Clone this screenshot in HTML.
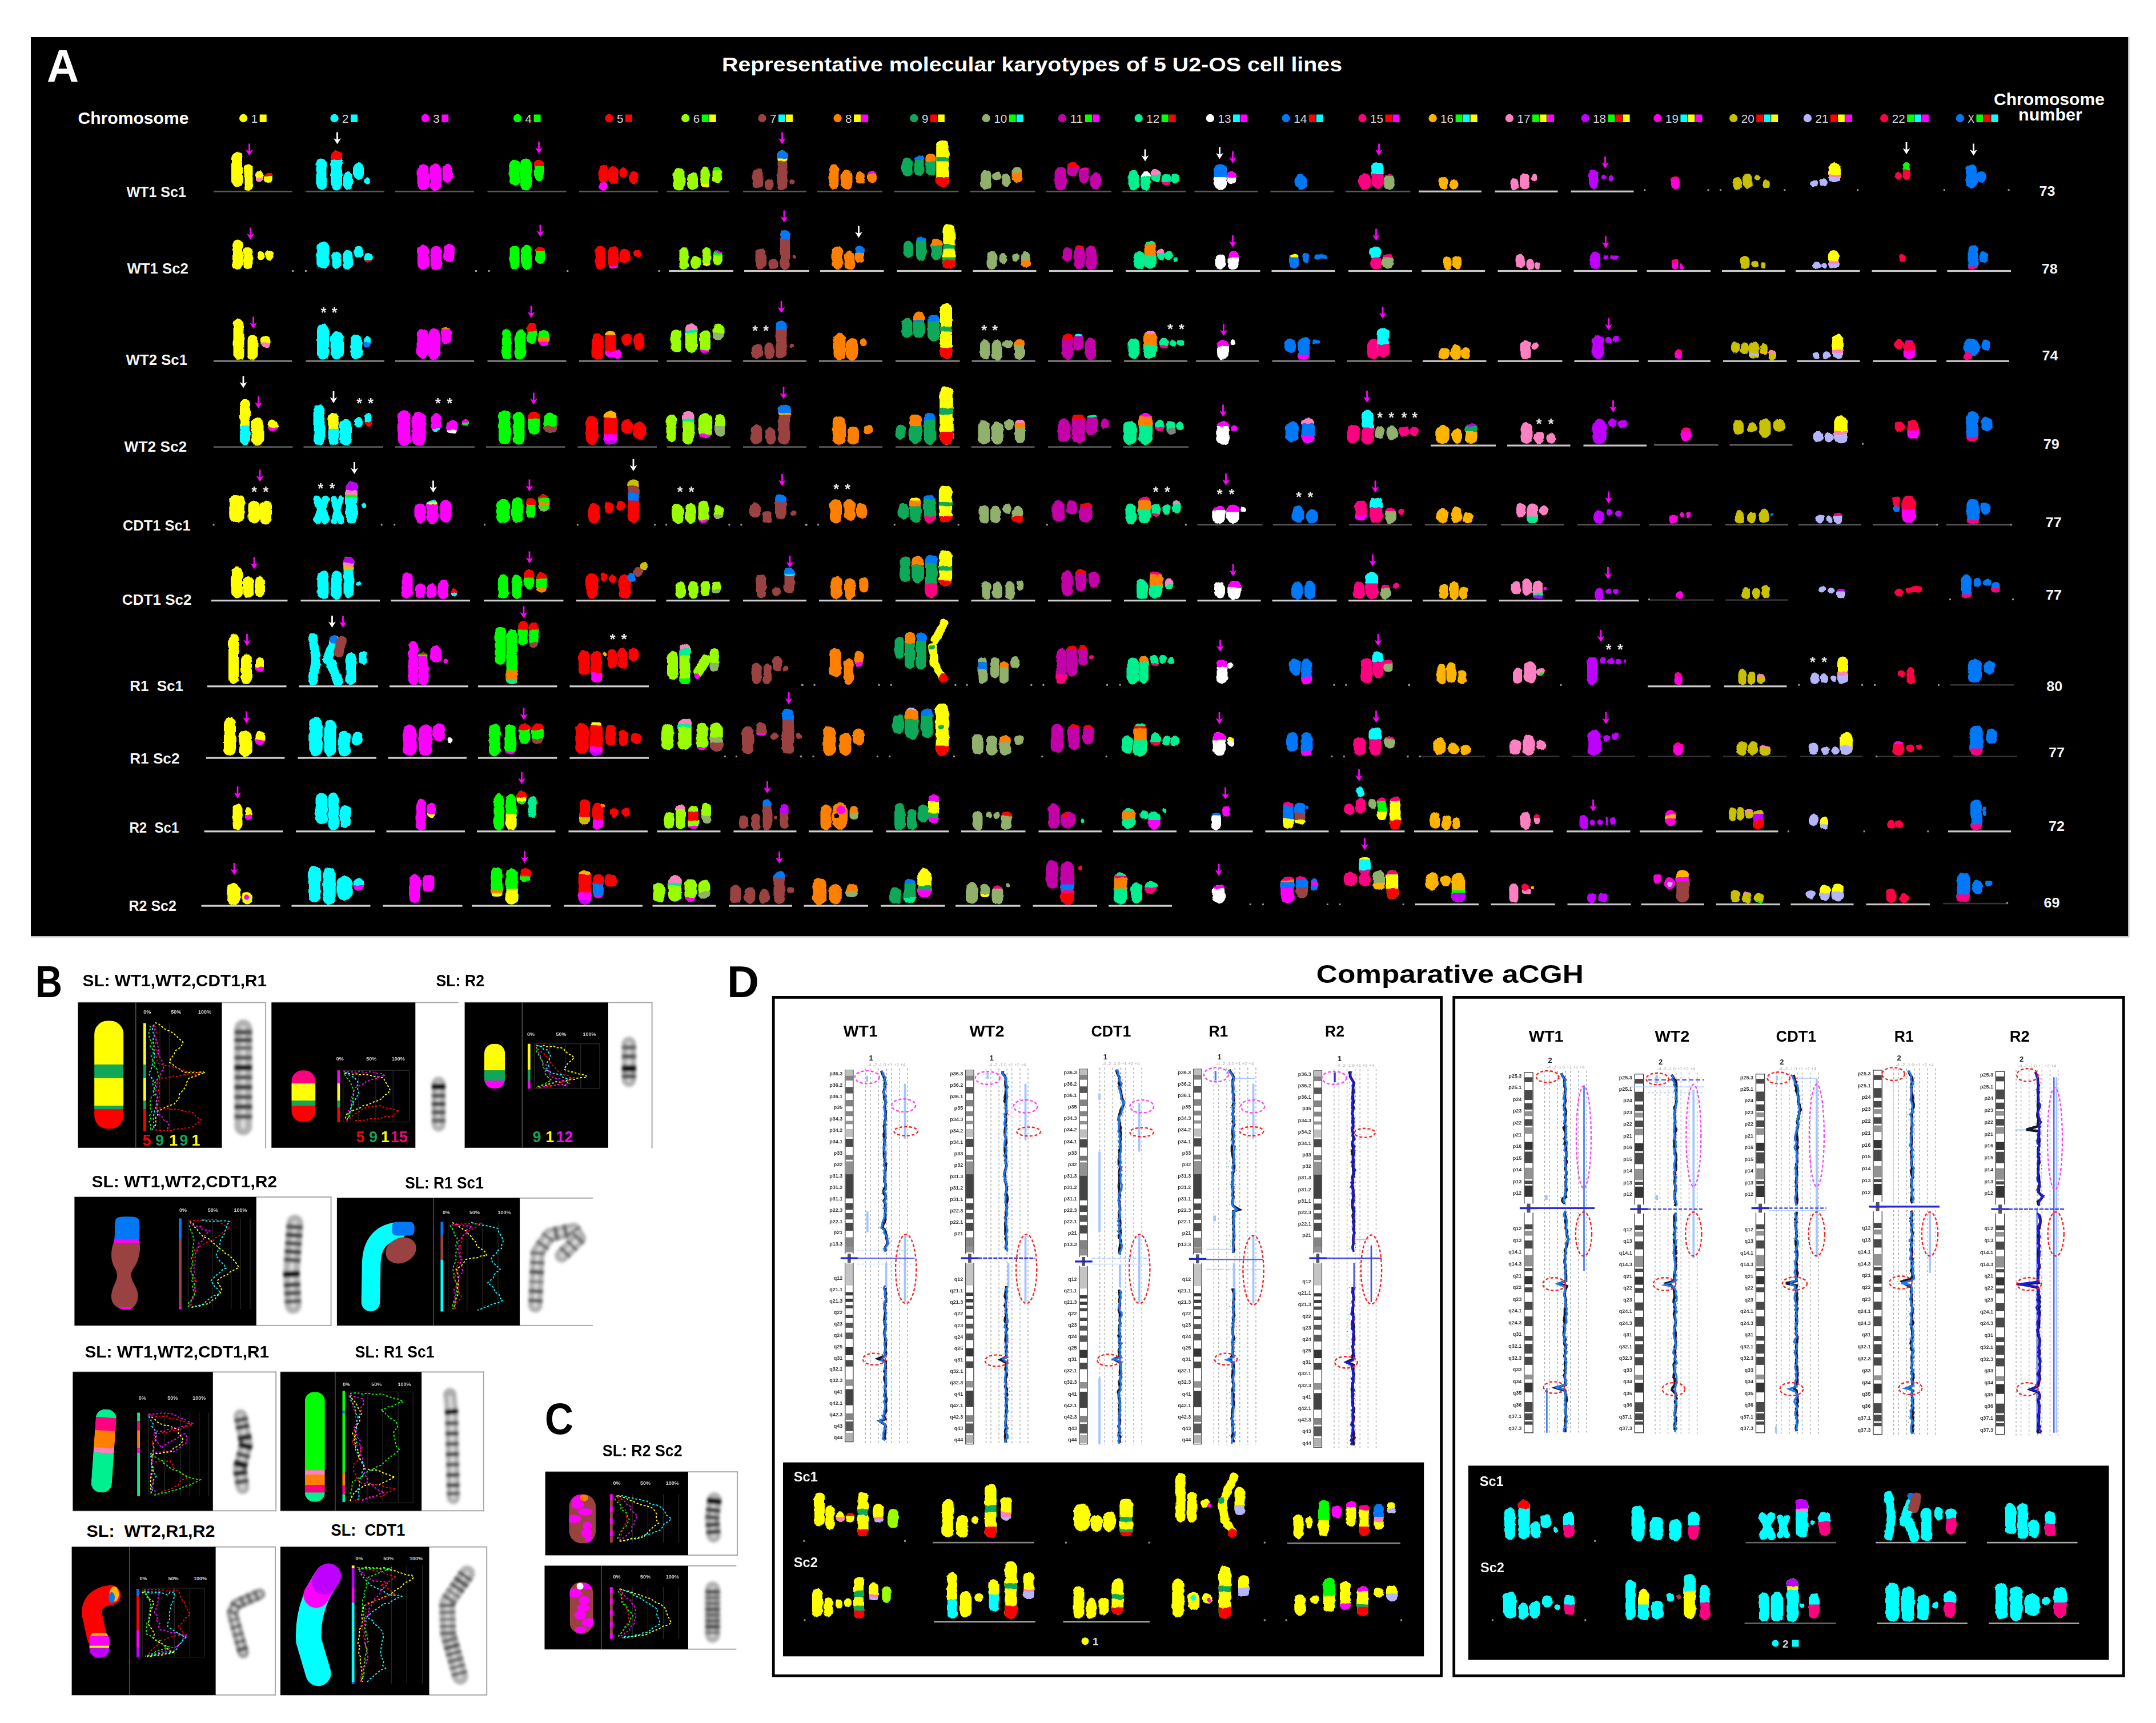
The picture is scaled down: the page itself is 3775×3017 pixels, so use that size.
<!DOCTYPE html>
<html><head><meta charset="utf-8"><title>Figure</title>
<style>
html,body{margin:0;padding:0;background:#fff}
body{width:3775px;height:3017px;position:relative;overflow:hidden;font-family:"Liberation Sans",sans-serif}
svg{position:absolute;left:0;top:0}
text{font-family:"Liberation Sans",sans-serif}
.Y{stroke:#ff0}.C{stroke:#0ff}.M{stroke:#f0f}.G{stroke:#0f0}.R{stroke:#f00}.L{stroke:#9f0}.B{stroke:#9a4242}.O{stroke:#ff8000}.D{stroke:#10a858}.K{stroke:#90b06c}.P{stroke:#c400a8}.T{stroke:#00f090}.W{stroke:#fff}.U{stroke:#0078f8}.H{stroke:#ff0080}.A{stroke:#ffb400}.N{stroke:#ff80c0}.V{stroke:#c000ff}.F{stroke:#ff00dc}.E{stroke:#c8c000}.S{stroke:#b4b4ff}.Z{stroke:#ff0040}.Q{stroke:#808080}.I{stroke:#000}.J{stroke:#00a0a0}
.st{font-size:25px;font-weight:bold;fill:#e8e8e8;text-anchor:middle}
.rl{font-size:22.5px;font-weight:bold;fill:#f4f4f4;text-anchor:end}
.bl{font-size:9px;font-weight:bold;fill:#3a3a3a;text-anchor:end}
.pc{font-size:9px;font-weight:bold;fill:#cfcfcf;text-anchor:middle}
.lg{font-size:19px;fill:#d8d8d8;font-weight:bold}
.hb{font-weight:bold;fill:#000}
</style></head><body>
<svg width="3775" height="3017" viewBox="0 0 3775 3017">
<defs>
<filter id="lump" filterUnits="userSpaceOnUse" x="54" y="65" width="3673" height="1575"><feTurbulence type="fractalNoise" baseFrequency="0.09" numOctaves="2" seed="3"/><feDisplacementMap in="SourceGraphic" scale="5" xChannelSelector="R" yChannelSelector="G"/></filter>
<filter id="lump2" filterUnits="userSpaceOnUse" x="1371" y="2560" width="2322" height="347"><feTurbulence type="fractalNoise" baseFrequency="0.09" numOctaves="2" seed="5"/><feDisplacementMap in="SourceGraphic" scale="5" xChannelSelector="R" yChannelSelector="G"/></filter>
<filter id="bl" x="-30%" y="-30%" width="160%" height="160%"><feGaussianBlur stdDeviation="2.4"/></filter>
<filter id="b1" x="-10%" y="-10%" width="120%" height="120%"><feGaussianBlur stdDeviation="0.7"/></filter>
<clipPath id="k1"><rect x="165.1" y="1787.3" width="51.3" height="189.3" rx="23.6"/></clipPath>
<clipPath id="k2"><rect x="510.3" y="1874.2" width="42.2" height="90.4" rx="19.4"/></clipPath>
<clipPath id="k3"><rect x="848" y="1827.7" width="36.2" height="78.4" rx="16.6"/></clipPath>
<clipPath id="k4"><path d="M201 2156Q201 2140 202.5 2135.5Q204 2131 213.3 2130.5Q222.7 2130 231.8 2130.5Q241 2131 242.8 2135.5Q244.5 2140 243.9 2156Q243.4 2172 244.7 2179Q246 2186 243.5 2198.5Q241 2211 233.2 2221.8Q225.5 2232.6 234.5 2247.8Q243.5 2263 241.2 2274.5Q239 2286 230.5 2291Q222 2296 209.5 2291Q197 2286 195.2 2274.5Q193.5 2263 201 2247.8Q208.5 2232.6 201.8 2221.8Q195 2211 195 2198.5Q195 2186 198 2179Q201 2172 201 2156Z"/></clipPath>
<clipPath id="k5"><rect x="163.6" y="2467.5" width="36.2" height="145.9" rx="16.6"/></clipPath>
<clipPath id="k6"><rect x="533.8" y="2437.3" width="35" height="192.3" rx="16.1"/></clipPath>
<clipPath id="k7"><rect x="156.4" y="2855.8" width="35" height="47" rx="16.1"/></clipPath>
<clipPath id="k8"><rect x="996.3" y="2616.4" width="47" height="86.2" rx="22.6"/></clipPath>
<clipPath id="k9"><rect x="997.5" y="2770.2" width="41" height="90.4" rx="19.7"/></clipPath>
</defs>
<rect x="54" y="65" width="3673" height="1575" fill="#000"/>
<rect x="3726" y="65" width="2.5" height="1576" fill="#c0c0c0"/>
<rect x="54" y="1639" width="3674" height="2.5" fill="#c0c0c0"/>
<text x="82" y="143" font-size="80" font-weight="bold" fill="#fff" text-anchor="start" textLength="56" lengthAdjust="spacingAndGlyphs">A</text>
<text x="1264" y="124.5" font-size="35" font-weight="bold" fill="#fff" text-anchor="start" textLength="1086" lengthAdjust="spacingAndGlyphs">Representative molecular karyotypes of 5 U2-OS cell lines</text>
<text x="136.5" y="216.5" font-size="30" font-weight="bold" fill="#fff" text-anchor="start" textLength="194" lengthAdjust="spacingAndGlyphs">Chromosome</text>
<text x="3491" y="184" font-size="30" font-weight="bold" fill="#fff" text-anchor="start" textLength="194" lengthAdjust="spacingAndGlyphs">Chromosome</text>
<text x="3534" y="211" font-size="30" font-weight="bold" fill="#fff" text-anchor="start" textLength="112" lengthAdjust="spacingAndGlyphs">number</text>
<circle cx="426.2" cy="207" r="7.2" fill="#ff0"/>
<text x="439.7" y="214.5" font-size="21" font-weight="normal" fill="#d4d4d4" text-anchor="start" textLength="11.5" lengthAdjust="spacingAndGlyphs">1</text>
<rect x="454.7" y="200.5" width="12" height="13.5" fill="#ff0"/>
<circle cx="585.5" cy="207" r="7.2" fill="#0ff"/>
<text x="599" y="214.5" font-size="21" font-weight="normal" fill="#d4d4d4" text-anchor="start" textLength="11.5" lengthAdjust="spacingAndGlyphs">2</text>
<rect x="614" y="200.5" width="12" height="13.5" fill="#0ff"/>
<circle cx="744.8" cy="207" r="7.2" fill="#f0f"/>
<text x="758.3" y="214.5" font-size="21" font-weight="normal" fill="#d4d4d4" text-anchor="start" textLength="11.5" lengthAdjust="spacingAndGlyphs">3</text>
<rect x="773.3" y="200.5" width="12" height="13.5" fill="#f0f"/>
<circle cx="906.1" cy="207" r="7.2" fill="#0f0"/>
<text x="919.6" y="214.5" font-size="21" font-weight="normal" fill="#d4d4d4" text-anchor="start" textLength="11.5" lengthAdjust="spacingAndGlyphs">4</text>
<rect x="934.6" y="200.5" width="12" height="13.5" fill="#0f0"/>
<circle cx="1066.5" cy="207" r="7.2" fill="#f00"/>
<text x="1080" y="214.5" font-size="21" font-weight="normal" fill="#d4d4d4" text-anchor="start" textLength="11.5" lengthAdjust="spacingAndGlyphs">5</text>
<rect x="1095" y="200.5" width="12" height="13.5" fill="#f00"/>
<circle cx="1200.2" cy="207" r="7.2" fill="#9f0"/>
<text x="1213.7" y="214.5" font-size="21" font-weight="normal" fill="#d4d4d4" text-anchor="start" textLength="11.5" lengthAdjust="spacingAndGlyphs">6</text>
<rect x="1228.7" y="200.5" width="12" height="13.5" fill="#0f0"/>
<rect x="1241.7" y="200.5" width="12" height="13.5" fill="#ff0"/>
<circle cx="1334.5" cy="207" r="7.2" fill="#9a4242"/>
<text x="1348" y="214.5" font-size="21" font-weight="normal" fill="#d4d4d4" text-anchor="start" textLength="11.5" lengthAdjust="spacingAndGlyphs">7</text>
<rect x="1363" y="200.5" width="12" height="13.5" fill="#0ff"/>
<rect x="1376" y="200.5" width="12" height="13.5" fill="#ff0"/>
<circle cx="1466.6" cy="207" r="7.2" fill="#ff8000"/>
<text x="1480.1" y="214.5" font-size="21" font-weight="normal" fill="#d4d4d4" text-anchor="start" textLength="11.5" lengthAdjust="spacingAndGlyphs">8</text>
<rect x="1495.1" y="200.5" width="12" height="13.5" fill="#ff0"/>
<rect x="1508.1" y="200.5" width="12" height="13.5" fill="#f0f"/>
<circle cx="1600.4" cy="207" r="7.2" fill="#10a858"/>
<text x="1613.9" y="214.5" font-size="21" font-weight="normal" fill="#d4d4d4" text-anchor="start" textLength="11.5" lengthAdjust="spacingAndGlyphs">9</text>
<rect x="1628.9" y="200.5" width="12" height="13.5" fill="#f00"/>
<rect x="1641.9" y="200.5" width="12" height="13.5" fill="#ff0"/>
<circle cx="1726.7" cy="207" r="7.2" fill="#90b06c"/>
<text x="1740.2" y="214.5" font-size="21" font-weight="normal" fill="#d4d4d4" text-anchor="start" textLength="23" lengthAdjust="spacingAndGlyphs">10</text>
<rect x="1766.7" y="200.5" width="12" height="13.5" fill="#0f0"/>
<rect x="1779.7" y="200.5" width="12" height="13.5" fill="#0ff"/>
<circle cx="1859.9" cy="207" r="7.2" fill="#c400a8"/>
<text x="1873.4" y="214.5" font-size="21" font-weight="normal" fill="#d4d4d4" text-anchor="start" textLength="23" lengthAdjust="spacingAndGlyphs">11</text>
<rect x="1899.9" y="200.5" width="12" height="13.5" fill="#0f0"/>
<rect x="1912.9" y="200.5" width="12" height="13.5" fill="#f0f"/>
<circle cx="1993.7" cy="207" r="7.2" fill="#00f090"/>
<text x="2007.2" y="214.5" font-size="21" font-weight="normal" fill="#d4d4d4" text-anchor="start" textLength="23" lengthAdjust="spacingAndGlyphs">12</text>
<rect x="2033.7" y="200.5" width="12" height="13.5" fill="#0f0"/>
<rect x="2046.7" y="200.5" width="12" height="13.5" fill="#f00"/>
<circle cx="2118.9" cy="207" r="7.2" fill="#fff"/>
<text x="2132.4" y="214.5" font-size="21" font-weight="normal" fill="#d4d4d4" text-anchor="start" textLength="23" lengthAdjust="spacingAndGlyphs">13</text>
<rect x="2158.9" y="200.5" width="12" height="13.5" fill="#0ff"/>
<rect x="2171.9" y="200.5" width="12" height="13.5" fill="#f0f"/>
<circle cx="2251.7" cy="207" r="7.2" fill="#0078f8"/>
<text x="2265.2" y="214.5" font-size="21" font-weight="normal" fill="#d4d4d4" text-anchor="start" textLength="23" lengthAdjust="spacingAndGlyphs">14</text>
<rect x="2291.7" y="200.5" width="12" height="13.5" fill="#f00"/>
<rect x="2304.7" y="200.5" width="12" height="13.5" fill="#0ff"/>
<circle cx="2385.5" cy="207" r="7.2" fill="#ff0080"/>
<text x="2399" y="214.5" font-size="21" font-weight="normal" fill="#d4d4d4" text-anchor="start" textLength="23" lengthAdjust="spacingAndGlyphs">15</text>
<rect x="2425.5" y="200.5" width="12" height="13.5" fill="#f00"/>
<rect x="2438.5" y="200.5" width="12" height="13.5" fill="#f0f"/>
<circle cx="2508.6" cy="207" r="7.2" fill="#ffb400"/>
<text x="2522.1" y="214.5" font-size="21" font-weight="normal" fill="#d4d4d4" text-anchor="start" textLength="23" lengthAdjust="spacingAndGlyphs">16</text>
<rect x="2548.6" y="200.5" width="12" height="13.5" fill="#0f0"/>
<rect x="2561.6" y="200.5" width="12" height="13.5" fill="#0ff"/>
<rect x="2574.6" y="200.5" width="12" height="13.5" fill="#ff0"/>
<circle cx="2642.9" cy="207" r="7.2" fill="#ff80c0"/>
<text x="2656.4" y="214.5" font-size="21" font-weight="normal" fill="#d4d4d4" text-anchor="start" textLength="23" lengthAdjust="spacingAndGlyphs">17</text>
<rect x="2682.9" y="200.5" width="12" height="13.5" fill="#0f0"/>
<rect x="2695.9" y="200.5" width="12" height="13.5" fill="#ff0"/>
<rect x="2708.9" y="200.5" width="12" height="13.5" fill="#f0f"/>
<circle cx="2775.6" cy="207" r="7.2" fill="#c000ff"/>
<text x="2789.1" y="214.5" font-size="21" font-weight="normal" fill="#d4d4d4" text-anchor="start" textLength="23" lengthAdjust="spacingAndGlyphs">18</text>
<rect x="2815.6" y="200.5" width="12" height="13.5" fill="#0f0"/>
<rect x="2828.6" y="200.5" width="12" height="13.5" fill="#f00"/>
<rect x="2841.6" y="200.5" width="12" height="13.5" fill="#ff0"/>
<circle cx="2902.4" cy="207" r="7.2" fill="#ff00dc"/>
<text x="2915.9" y="214.5" font-size="21" font-weight="normal" fill="#d4d4d4" text-anchor="start" textLength="23" lengthAdjust="spacingAndGlyphs">19</text>
<rect x="2942.4" y="200.5" width="12" height="13.5" fill="#0ff"/>
<rect x="2955.4" y="200.5" width="12" height="13.5" fill="#ff0"/>
<rect x="2968.4" y="200.5" width="12" height="13.5" fill="#f0f"/>
<circle cx="3035.2" cy="207" r="7.2" fill="#c8c000"/>
<text x="3048.7" y="214.5" font-size="21" font-weight="normal" fill="#d4d4d4" text-anchor="start" textLength="23" lengthAdjust="spacingAndGlyphs">20</text>
<rect x="3075.2" y="200.5" width="12" height="13.5" fill="#f00"/>
<rect x="3088.2" y="200.5" width="12" height="13.5" fill="#0ff"/>
<rect x="3101.2" y="200.5" width="12" height="13.5" fill="#ff0"/>
<circle cx="3164.9" cy="207" r="7.2" fill="#b4b4ff"/>
<text x="3178.4" y="214.5" font-size="21" font-weight="normal" fill="#d4d4d4" text-anchor="start" textLength="23" lengthAdjust="spacingAndGlyphs">21</text>
<rect x="3204.9" y="200.5" width="12" height="13.5" fill="#f00"/>
<rect x="3217.9" y="200.5" width="12" height="13.5" fill="#ff0"/>
<rect x="3230.9" y="200.5" width="12" height="13.5" fill="#f0f"/>
<circle cx="3299.2" cy="207" r="7.2" fill="#ff0040"/>
<text x="3312.7" y="214.5" font-size="21" font-weight="normal" fill="#d4d4d4" text-anchor="start" textLength="23" lengthAdjust="spacingAndGlyphs">22</text>
<rect x="3339.2" y="200.5" width="12" height="13.5" fill="#0f0"/>
<rect x="3352.2" y="200.5" width="12" height="13.5" fill="#0ff"/>
<rect x="3365.2" y="200.5" width="12" height="13.5" fill="#f0f"/>
<circle cx="3431.9" cy="207" r="7.2" fill="#0078f8"/>
<text x="3445.4" y="214.5" font-size="21" font-weight="normal" fill="#d4d4d4" text-anchor="start" textLength="11.5" lengthAdjust="spacingAndGlyphs">X</text>
<rect x="3460.4" y="200.5" width="12" height="13.5" fill="#0f0"/>
<rect x="3473.4" y="200.5" width="12" height="13.5" fill="#f00"/>
<rect x="3486.4" y="200.5" width="12" height="13.5" fill="#0ff"/>
<text x="221.4" y="345.2" font-size="25" font-weight="bold" fill="#f4f4f4" text-anchor="start" textLength="104.6" lengthAdjust="spacingAndGlyphs" xml:space="preserve">WT1 Sc1</text>
<text x="222.6" y="479.3" font-size="25" font-weight="bold" fill="#f4f4f4" text-anchor="start" textLength="107.2" lengthAdjust="spacingAndGlyphs" xml:space="preserve">WT1 Sc2</text>
<text x="220.6" y="639" font-size="25" font-weight="bold" fill="#f4f4f4" text-anchor="start" textLength="107.4" lengthAdjust="spacingAndGlyphs" xml:space="preserve">WT2 Sc1</text>
<text x="217.6" y="791.2" font-size="25" font-weight="bold" fill="#f4f4f4" text-anchor="start" textLength="109.6" lengthAdjust="spacingAndGlyphs" xml:space="preserve">WT2 Sc2</text>
<text x="215" y="929.1" font-size="25" font-weight="bold" fill="#f4f4f4" text-anchor="start" textLength="118.7" lengthAdjust="spacingAndGlyphs" xml:space="preserve">CDT1 Sc1</text>
<text x="213.8" y="1058.5" font-size="25" font-weight="bold" fill="#f4f4f4" text-anchor="start" textLength="121.8" lengthAdjust="spacingAndGlyphs" xml:space="preserve">CDT1 Sc2</text>
<text x="227.2" y="1209.9" font-size="25" font-weight="bold" fill="#f4f4f4" text-anchor="start" textLength="93.8" lengthAdjust="spacingAndGlyphs" xml:space="preserve">R1  Sc1</text>
<text x="227.2" y="1337" font-size="25" font-weight="bold" fill="#f4f4f4" text-anchor="start" textLength="87.3" lengthAdjust="spacingAndGlyphs" xml:space="preserve">R1 Sc2</text>
<text x="226.4" y="1458.2" font-size="25" font-weight="bold" fill="#f4f4f4" text-anchor="start" textLength="87" lengthAdjust="spacingAndGlyphs" xml:space="preserve">R2  Sc1</text>
<text x="225.6" y="1595" font-size="25" font-weight="bold" fill="#f4f4f4" text-anchor="start" textLength="83.2" lengthAdjust="spacingAndGlyphs" xml:space="preserve">R2 Sc2</text>
<text x="3570.4" y="342.7" font-size="24.3" font-weight="bold" fill="#f4f4f4" text-anchor="start" textLength="28" lengthAdjust="spacingAndGlyphs">73</text>
<text x="3574.8" y="478.7" font-size="24.3" font-weight="bold" fill="#f4f4f4" text-anchor="start" textLength="28" lengthAdjust="spacingAndGlyphs">78</text>
<text x="3575.5" y="631.4" font-size="24.3" font-weight="bold" fill="#f4f4f4" text-anchor="start" textLength="28" lengthAdjust="spacingAndGlyphs">74</text>
<text x="3577.7" y="785.6" font-size="24.3" font-weight="bold" fill="#f4f4f4" text-anchor="start" textLength="28" lengthAdjust="spacingAndGlyphs">79</text>
<text x="3581.8" y="922.9" font-size="24.3" font-weight="bold" fill="#f4f4f4" text-anchor="start" textLength="28" lengthAdjust="spacingAndGlyphs">77</text>
<text x="3582" y="1050.4" font-size="24.3" font-weight="bold" fill="#f4f4f4" text-anchor="start" textLength="28" lengthAdjust="spacingAndGlyphs">77</text>
<text x="3583.3" y="1210.3" font-size="24.3" font-weight="bold" fill="#f4f4f4" text-anchor="start" textLength="28" lengthAdjust="spacingAndGlyphs">80</text>
<text x="3587" y="1326.3" font-size="24.3" font-weight="bold" fill="#f4f4f4" text-anchor="start" textLength="28" lengthAdjust="spacingAndGlyphs">77</text>
<text x="3587" y="1454.7" font-size="24.3" font-weight="bold" fill="#f4f4f4" text-anchor="start" textLength="28" lengthAdjust="spacingAndGlyphs">72</text>
<text x="3578.6" y="1588.9" font-size="24.3" font-weight="bold" fill="#f4f4f4" text-anchor="start" textLength="28" lengthAdjust="spacingAndGlyphs">69</text>
<rect x="374" y="333.9" width="137.5" height="2.6" fill="#585858"/>
<rect x="535.5" y="333.9" width="137.5" height="2.6" fill="#585858"/>
<rect x="692" y="333.9" width="138" height="2.6" fill="#585858"/>
<rect x="853.5" y="333.9" width="138" height="2.6" fill="#585858"/>
<rect x="1014" y="333.9" width="138" height="2.6" fill="#585858"/>
<rect x="1167.5" y="333.9" width="109" height="2.6" fill="#585858"/>
<rect x="1301" y="333.9" width="111" height="2.6" fill="#585858"/>
<rect x="511.3" y="473" width="3" height="3" fill="#999"/>
<rect x="533.9" y="473" width="3" height="3" fill="#999"/>
<rect x="832" y="473" width="3" height="3" fill="#999"/>
<rect x="854.5" y="473" width="3" height="3" fill="#999"/>
<rect x="992.3" y="473" width="3" height="3" fill="#999"/>
<rect x="1152.6" y="473" width="3" height="3" fill="#999"/>
<rect x="1171.5" y="472.9" width="112.5" height="3.2" fill="#c8c8c8"/>
<rect x="1303" y="472.9" width="114" height="3.2" fill="#c8c8c8"/>
<rect x="374" y="631" width="137.5" height="2.6" fill="#8c8c8c"/>
<rect x="535.5" y="631" width="137.5" height="2.6" fill="#8c8c8c"/>
<rect x="692" y="631" width="138" height="2.6" fill="#8c8c8c"/>
<rect x="853.5" y="631" width="138" height="2.6" fill="#8c8c8c"/>
<rect x="1014" y="631" width="138" height="2.6" fill="#8c8c8c"/>
<rect x="1167.5" y="631" width="113" height="2.6" fill="#8c8c8c"/>
<rect x="1301" y="631" width="111" height="2.6" fill="#8c8c8c"/>
<rect x="374" y="781.3" width="138.5" height="2.6" fill="#5c5c5c"/>
<rect x="531.5" y="781.3" width="139.5" height="2.6" fill="#5c5c5c"/>
<rect x="692" y="781.3" width="139" height="2.6" fill="#5c5c5c"/>
<rect x="851" y="781.3" width="138.5" height="2.6" fill="#5c5c5c"/>
<rect x="1011.5" y="781.3" width="138.5" height="2.6" fill="#5c5c5c"/>
<rect x="1167.5" y="781.3" width="111.5" height="2.6" fill="#5c5c5c"/>
<rect x="1301" y="781.3" width="111" height="2.6" fill="#5c5c5c"/>
<rect x="372.6" y="917.4" width="3" height="3" fill="#999"/>
<rect x="666.7" y="917.4" width="3" height="3" fill="#999"/>
<rect x="689.2" y="917.4" width="3" height="3" fill="#999"/>
<rect x="847" y="917.4" width="3" height="3" fill="#999"/>
<rect x="1009.8" y="917.4" width="3" height="3" fill="#999"/>
<rect x="1145.1" y="917.4" width="3" height="3" fill="#999"/>
<rect x="1165.2" y="917.4" width="3" height="3" fill="#999"/>
<rect x="1275.4" y="917.4" width="3" height="3" fill="#999"/>
<rect x="1296.4" y="917.4" width="3" height="3" fill="#999"/>
<rect x="1410.6" y="917.4" width="3" height="3" fill="#999"/>
<rect x="370" y="1050" width="133.5" height="3.2" fill="#d0d0d0"/>
<rect x="526.5" y="1050" width="138.5" height="3.2" fill="#d0d0d0"/>
<rect x="684.5" y="1050" width="138.5" height="3.2" fill="#d0d0d0"/>
<rect x="847" y="1050" width="139.5" height="3.2" fill="#d0d0d0"/>
<rect x="1009" y="1050" width="139" height="3.2" fill="#d0d0d0"/>
<rect x="1166.5" y="1050" width="111" height="3.2" fill="#d0d0d0"/>
<rect x="1301" y="1050" width="111" height="3.2" fill="#d0d0d0"/>
<rect x="1431" y="333.9" width="114" height="2.6" fill="#585858"/>
<rect x="1565.5" y="333.9" width="113" height="2.6" fill="#585858"/>
<rect x="1698.5" y="333.9" width="114" height="2.6" fill="#585858"/>
<rect x="1832" y="333.9" width="114" height="2.6" fill="#585858"/>
<rect x="1965" y="333.9" width="111" height="2.6" fill="#585858"/>
<rect x="2091.5" y="333.9" width="111" height="2.6" fill="#585858"/>
<rect x="2224.5" y="333.9" width="111" height="2.6" fill="#585858"/>
<rect x="2356" y="333.9" width="113.5" height="2.6" fill="#585858"/>
<rect x="1436" y="472.9" width="111.5" height="3.2" fill="#c8c8c8"/>
<rect x="1570.5" y="472.9" width="113" height="3.2" fill="#c8c8c8"/>
<rect x="1703.5" y="472.9" width="111" height="3.2" fill="#c8c8c8"/>
<rect x="1837" y="472.9" width="112" height="3.2" fill="#c8c8c8"/>
<rect x="1971" y="472.9" width="110" height="3.2" fill="#c8c8c8"/>
<rect x="2094" y="472.9" width="112.5" height="3.2" fill="#c8c8c8"/>
<rect x="2226.5" y="472.9" width="111" height="3.2" fill="#c8c8c8"/>
<rect x="2361" y="472.9" width="111" height="3.2" fill="#c8c8c8"/>
<rect x="1434" y="631" width="111" height="2.6" fill="#8c8c8c"/>
<rect x="1568" y="631" width="112.5" height="2.6" fill="#8c8c8c"/>
<rect x="1701.5" y="631" width="111" height="2.6" fill="#8c8c8c"/>
<rect x="1835" y="631" width="111" height="2.6" fill="#8c8c8c"/>
<rect x="1968" y="631" width="111" height="2.6" fill="#8c8c8c"/>
<rect x="2094" y="631" width="110" height="2.6" fill="#8c8c8c"/>
<rect x="2227.5" y="631" width="110" height="2.6" fill="#8c8c8c"/>
<rect x="2358" y="631" width="114" height="2.6" fill="#8c8c8c"/>
<rect x="1434" y="781.3" width="111" height="2.6" fill="#5c5c5c"/>
<rect x="1568" y="781.3" width="112.5" height="2.6" fill="#5c5c5c"/>
<rect x="1700.5" y="781.3" width="111" height="2.6" fill="#5c5c5c"/>
<rect x="1835" y="781.3" width="111" height="2.6" fill="#5c5c5c"/>
<rect x="1967" y="781.3" width="114" height="2.6" fill="#5c5c5c"/>
<rect x="1409.5" y="917.4" width="3" height="3" fill="#999"/>
<rect x="1431.1" y="917.4" width="3" height="3" fill="#999"/>
<rect x="1564.8" y="917.4" width="3" height="3" fill="#999"/>
<rect x="1676.6" y="917.4" width="3" height="3" fill="#999"/>
<rect x="1831.9" y="917.4" width="3" height="3" fill="#999"/>
<rect x="2074.9" y="917.4" width="3" height="3" fill="#999"/>
<rect x="2096.5" y="917.6" width="114" height="2.6" fill="#555"/>
<rect x="2229" y="917.6" width="110" height="2.6" fill="#555"/>
<rect x="2362" y="917.6" width="110" height="2.6" fill="#555"/>
<rect x="1434" y="1050" width="111" height="3.2" fill="#d0d0d0"/>
<rect x="1568" y="1050" width="110.5" height="3.2" fill="#d0d0d0"/>
<rect x="1700.5" y="1050" width="112" height="3.2" fill="#d0d0d0"/>
<rect x="1835" y="1050" width="111" height="3.2" fill="#d0d0d0"/>
<rect x="1968" y="1050" width="109" height="3.2" fill="#d0d0d0"/>
<rect x="2096.5" y="1050" width="111" height="3.2" fill="#d0d0d0"/>
<rect x="2227.5" y="1050" width="113" height="3.2" fill="#d0d0d0"/>
<rect x="2361" y="1050" width="111" height="3.2" fill="#d0d0d0"/>
<rect x="2484" y="333.6" width="110" height="3.2" fill="#c8c8c8"/>
<rect x="2617.5" y="333.6" width="110" height="3.2" fill="#c8c8c8"/>
<rect x="2750.5" y="333.6" width="110" height="3.2" fill="#c8c8c8"/>
<rect x="2878.3" y="331.2" width="3" height="3" fill="#999"/>
<rect x="2989.6" y="331.2" width="3" height="3" fill="#999"/>
<rect x="3011.1" y="331.2" width="3" height="3" fill="#999"/>
<rect x="3123.3" y="331.2" width="3" height="3" fill="#999"/>
<rect x="3251.1" y="331.2" width="3" height="3" fill="#999"/>
<rect x="3402.9" y="331.2" width="3" height="3" fill="#999"/>
<rect x="3515.6" y="331.2" width="3" height="3" fill="#999"/>
<rect x="2489" y="472.9" width="111" height="3.2" fill="#c8c8c8"/>
<rect x="2622.5" y="472.9" width="111" height="3.2" fill="#c8c8c8"/>
<rect x="2755.5" y="472.9" width="111" height="3.2" fill="#c8c8c8"/>
<rect x="2883.5" y="472.9" width="111.5" height="3.2" fill="#c8c8c8"/>
<rect x="3015" y="472.9" width="111" height="3.2" fill="#c8c8c8"/>
<rect x="3144" y="472.9" width="112.5" height="3.2" fill="#c8c8c8"/>
<rect x="3277.5" y="472.9" width="113" height="3.2" fill="#c8c8c8"/>
<rect x="3409.5" y="472.9" width="111.5" height="3.2" fill="#c8c8c8"/>
<rect x="2491" y="630.7" width="111.5" height="3.2" fill="#c8c8c8"/>
<rect x="2622.5" y="630.7" width="113" height="3.2" fill="#c8c8c8"/>
<rect x="2756.5" y="630.7" width="113" height="3.2" fill="#c8c8c8"/>
<rect x="2885" y="630.7" width="110" height="3.2" fill="#c8c8c8"/>
<rect x="3017" y="630.7" width="111.5" height="3.2" fill="#c8c8c8"/>
<rect x="3146.5" y="630.7" width="110" height="3.2" fill="#c8c8c8"/>
<rect x="3279.5" y="630.7" width="111" height="3.2" fill="#c8c8c8"/>
<rect x="3408" y="630.7" width="110" height="3.2" fill="#c8c8c8"/>
<rect x="2505" y="778.5" width="114" height="3.2" fill="#c8c8c8"/>
<rect x="2639" y="778.5" width="110.5" height="3.2" fill="#c8c8c8"/>
<rect x="2772.5" y="778.5" width="110.5" height="3.2" fill="#c8c8c8"/>
<rect x="2896" y="777.8" width="112.5" height="2.6" fill="#666"/>
<rect x="3028.5" y="777.8" width="110" height="2.6" fill="#666"/>
<rect x="3260.1" y="775.6" width="3" height="3" fill="#999"/>
<rect x="2495" y="917.6" width="109" height="2.6" fill="#555"/>
<rect x="2628" y="917.6" width="110" height="2.6" fill="#555"/>
<rect x="2762" y="917.6" width="109.5" height="2.6" fill="#555"/>
<rect x="2887.5" y="917.6" width="109.5" height="2.6" fill="#555"/>
<rect x="3021" y="917.6" width="110" height="2.6" fill="#555"/>
<rect x="3149" y="917.6" width="110" height="2.6" fill="#555"/>
<rect x="3279" y="917.6" width="112.5" height="2.6" fill="#555"/>
<rect x="3408" y="917.6" width="113" height="2.6" fill="#555"/>
<rect x="3390.4" y="917.4" width="3" height="3" fill="#999"/>
<rect x="3519.6" y="917.4" width="3" height="3" fill="#999"/>
<rect x="2491" y="1050" width="111.5" height="3.2" fill="#c8c8c8"/>
<rect x="2624.5" y="1050" width="111" height="3.2" fill="#c8c8c8"/>
<rect x="2758.5" y="1050" width="111" height="3.2" fill="#c8c8c8"/>
<rect x="2887.5" y="1049.3" width="113.5" height="2.6" fill="#333"/>
<rect x="3021" y="1049.3" width="110" height="2.6" fill="#333"/>
<rect x="2885.9" y="1048.1" width="3" height="3" fill="#999"/>
<rect x="3412.9" y="1048.1" width="3" height="3" fill="#999"/>
<rect x="3523.1" y="1048.1" width="3" height="3" fill="#999"/>
<rect x="363" y="1200.2" width="138.5" height="3.2" fill="#d0d0d0"/>
<rect x="523.5" y="1200.2" width="138.5" height="3.2" fill="#d0d0d0"/>
<rect x="682" y="1200.2" width="138" height="3.2" fill="#d0d0d0"/>
<rect x="837" y="1200.2" width="138.5" height="3.2" fill="#d0d0d0"/>
<rect x="997.5" y="1200.2" width="138.5" height="3.2" fill="#d0d0d0"/>
<rect x="1403.1" y="1197.8" width="3" height="3" fill="#999"/>
<rect x="361" y="1325.5" width="137.5" height="3.2" fill="#d0d0d0"/>
<rect x="521.5" y="1325.5" width="137.5" height="3.2" fill="#d0d0d0"/>
<rect x="679.5" y="1325.5" width="137.5" height="3.2" fill="#d0d0d0"/>
<rect x="837" y="1325.5" width="138.5" height="3.2" fill="#d0d0d0"/>
<rect x="997.5" y="1325.5" width="138.5" height="3.2" fill="#d0d0d0"/>
<rect x="1267.9" y="1323.1" width="3" height="3" fill="#999"/>
<rect x="1287.9" y="1323.1" width="3" height="3" fill="#999"/>
<rect x="1400.6" y="1323.1" width="3" height="3" fill="#999"/>
<rect x="357.5" y="1454.2" width="138" height="3.2" fill="#d0d0d0"/>
<rect x="518" y="1454.2" width="139" height="3.2" fill="#d0d0d0"/>
<rect x="676.5" y="1454.2" width="137.5" height="3.2" fill="#d0d0d0"/>
<rect x="835" y="1454.2" width="137.5" height="3.2" fill="#d0d0d0"/>
<rect x="995.5" y="1454.2" width="138.5" height="3.2" fill="#d0d0d0"/>
<rect x="1150.5" y="1454.2" width="111" height="3.2" fill="#d0d0d0"/>
<rect x="1284.5" y="1454.2" width="110" height="3.2" fill="#d0d0d0"/>
<rect x="352.5" y="1584.5" width="138" height="3.2" fill="#d0d0d0"/>
<rect x="510.5" y="1584.5" width="138" height="3.2" fill="#d0d0d0"/>
<rect x="670.5" y="1584.5" width="139" height="3.2" fill="#d0d0d0"/>
<rect x="826" y="1584.5" width="138.5" height="3.2" fill="#d0d0d0"/>
<rect x="987.5" y="1584.5" width="137.5" height="3.2" fill="#d0d0d0"/>
<rect x="1142.5" y="1584.5" width="111" height="3.2" fill="#d0d0d0"/>
<rect x="1276" y="1584.5" width="111" height="3.2" fill="#d0d0d0"/>
<rect x="1403.5" y="1197.8" width="3" height="3" fill="#999"/>
<rect x="1424.6" y="1197.8" width="3" height="3" fill="#999"/>
<rect x="1537.8" y="1197.8" width="3" height="3" fill="#999"/>
<rect x="1558.8" y="1197.8" width="3" height="3" fill="#999"/>
<rect x="1671.5" y="1197.8" width="3" height="3" fill="#999"/>
<rect x="1691.6" y="1197.8" width="3" height="3" fill="#999"/>
<rect x="1804.3" y="1197.8" width="3" height="3" fill="#999"/>
<rect x="1825.4" y="1197.8" width="3" height="3" fill="#999"/>
<rect x="1937.1" y="1197.8" width="3" height="3" fill="#999"/>
<rect x="1959.6" y="1197.8" width="3" height="3" fill="#999"/>
<rect x="2334.4" y="1197.8" width="3" height="3" fill="#999"/>
<rect x="2355.4" y="1197.8" width="3" height="3" fill="#999"/>
<rect x="2465.6" y="1197.8" width="3" height="3" fill="#999"/>
<rect x="1401" y="1323.1" width="3" height="3" fill="#999"/>
<rect x="1422.5" y="1323.1" width="3" height="3" fill="#999"/>
<rect x="1534.8" y="1323.1" width="3" height="3" fill="#999"/>
<rect x="1556.3" y="1323.1" width="3" height="3" fill="#999"/>
<rect x="1669" y="1323.1" width="3" height="3" fill="#999"/>
<rect x="1823.3" y="1323.1" width="3" height="3" fill="#999"/>
<rect x="1935.6" y="1323.1" width="3" height="3" fill="#999"/>
<rect x="2330.4" y="1323.1" width="3" height="3" fill="#999"/>
<rect x="2351.9" y="1323.1" width="3" height="3" fill="#999"/>
<rect x="2463.1" y="1323.1" width="3" height="3" fill="#999"/>
<rect x="1416" y="1454.2" width="112" height="3.2" fill="#d0d0d0"/>
<rect x="1551.5" y="1454.2" width="110" height="3.2" fill="#d0d0d0"/>
<rect x="1683" y="1454.2" width="112.5" height="3.2" fill="#d0d0d0"/>
<rect x="1818.5" y="1454.2" width="110.5" height="3.2" fill="#d0d0d0"/>
<rect x="1949" y="1454.2" width="111" height="3.2" fill="#d0d0d0"/>
<rect x="2082.5" y="1454.2" width="111" height="3.2" fill="#d0d0d0"/>
<rect x="2215.5" y="1454.2" width="111" height="3.2" fill="#d0d0d0"/>
<rect x="2347" y="1454.2" width="112.5" height="3.2" fill="#d0d0d0"/>
<rect x="1407.5" y="1584.5" width="112.5" height="3.2" fill="#d0d0d0"/>
<rect x="1542" y="1584.5" width="112.5" height="3.2" fill="#d0d0d0"/>
<rect x="1673" y="1584.5" width="113.5" height="3.2" fill="#d0d0d0"/>
<rect x="1808.5" y="1584.5" width="112.5" height="3.2" fill="#d0d0d0"/>
<rect x="1941" y="1584.5" width="111" height="3.2" fill="#d0d0d0"/>
<rect x="2187.6" y="1582.1" width="3" height="3" fill="#999"/>
<rect x="2210.1" y="1582.1" width="3" height="3" fill="#999"/>
<rect x="2322.8" y="1582.1" width="3" height="3" fill="#999"/>
<rect x="2344.4" y="1582.1" width="3" height="3" fill="#999"/>
<rect x="2455.6" y="1582.1" width="3" height="3" fill="#999"/>
<rect x="2466" y="1197.8" width="3" height="3" fill="#999"/>
<rect x="2731.5" y="1197.8" width="3" height="3" fill="#999"/>
<rect x="2885" y="1200.2" width="110" height="3.2" fill="#c8c8c8"/>
<rect x="3018.5" y="1200.2" width="110" height="3.2" fill="#c8c8c8"/>
<rect x="3148.4" y="1197.8" width="3" height="3" fill="#999"/>
<rect x="3259.1" y="1197.8" width="3" height="3" fill="#999"/>
<rect x="3281.1" y="1197.8" width="3" height="3" fill="#999"/>
<rect x="3392.9" y="1197.8" width="3" height="3" fill="#999"/>
<rect x="3414.5" y="1198" width="112.5" height="2.6" fill="#333"/>
<rect x="2485" y="1323.3" width="115" height="2.6" fill="#333"/>
<rect x="2620.5" y="1323.3" width="110" height="2.6" fill="#333"/>
<rect x="2753" y="1323.3" width="110" height="2.6" fill="#333"/>
<rect x="2885" y="1323.3" width="110" height="2.6" fill="#333"/>
<rect x="3017" y="1323.3" width="111.5" height="2.6" fill="#333"/>
<rect x="3151.5" y="1323.3" width="110" height="2.6" fill="#333"/>
<rect x="3284" y="1323.3" width="112.5" height="2.6" fill="#333"/>
<rect x="3419.5" y="1323.3" width="112.5" height="2.6" fill="#333"/>
<rect x="2463.5" y="1323.1" width="3" height="3" fill="#999"/>
<rect x="2484.6" y="1323.1" width="3" height="3" fill="#999"/>
<rect x="3284.2" y="1323.1" width="3" height="3" fill="#999"/>
<rect x="2476" y="1454.2" width="112" height="3.2" fill="#d0d0d0"/>
<rect x="2609.5" y="1454.2" width="110" height="3.2" fill="#c8c8c8"/>
<rect x="2743" y="1454.2" width="111.5" height="3.2" fill="#c8c8c8"/>
<rect x="2871" y="1454.2" width="110" height="3.2" fill="#c8c8c8"/>
<rect x="3005" y="1454.2" width="108.5" height="3.2" fill="#c8c8c8"/>
<rect x="3129.8" y="1454.3" width="3" height="3" fill="#999"/>
<rect x="3262.6" y="1454.3" width="3" height="3" fill="#999"/>
<rect x="3374.3" y="1454.3" width="3" height="3" fill="#999"/>
<rect x="3411" y="1454.2" width="110" height="3.2" fill="#c8c8c8"/>
<rect x="2477.5" y="1582" width="111.5" height="3.2" fill="#d0d0d0"/>
<rect x="2610.5" y="1582" width="112" height="3.2" fill="#c8c8c8"/>
<rect x="2744.5" y="1582" width="111" height="3.2" fill="#c8c8c8"/>
<rect x="2873.5" y="1582" width="110.5" height="3.2" fill="#c8c8c8"/>
<rect x="3005" y="1582" width="112" height="3.2" fill="#c8c8c8"/>
<rect x="3135.5" y="1582" width="110" height="3.2" fill="#c8c8c8"/>
<rect x="3267.5" y="1582" width="111.5" height="3.2" fill="#c8c8c8"/>
<rect x="3402" y="1580.8" width="112.5" height="2.6" fill="#333"/>
<rect x="3513.1" y="1579.6" width="3" height="3" fill="#999"/>
<g stroke-linecap="round" filter="url(#lump)">
<path d="M415 276V317.5" class="Y" stroke-width="20"/>
<path d="M435 295V326.5" class="Y" stroke-width="15"/>
<path d="M454 306V312.5" class="Y" stroke-width="14"/>
<path d="M447.5 311V312.5Q447.5 319 454 319H454Q461 319 461 312.5V311Z" fill="#ff80c0"/>
<path d="M469.5 310.5V313.5" class="Y" stroke-width="15"/>
<path d="M462 308V308Q462 303 469.5 303H469.5Q476.5 303 476.5 308V308Z" fill="#f00"/>
<path d="M563 287V323" class="C" stroke-width="19"/>
<path d="M589 274V323.5" class="C" stroke-width="20"/>
<path d="M579 280V274Q579 264 589 264H589Q599 264 599 274V280Z" fill="#f00"/>
<path d="M609 308V324.5" class="C" stroke-width="16"/>
<path d="M628 294V305" class="C" stroke-width="18"/>
<path d="M643 316V317" class="C" stroke-width="11.5"/>
<path d="M741 298V322" class="M" stroke-width="21"/>
<path d="M762.5 295.5V324" class="M" stroke-width="19"/>
<path d="M784 296.5V311" class="M" stroke-width="18"/>
<path d="M901 289.5V315.5" class="G" stroke-width="19"/>
<path d="M921 287.5V323.5" class="G" stroke-width="20"/>
<path d="M944 288V309.5" class="G" stroke-width="16"/>
<path d="M936 291V288Q936 280 944 280H944Q952 280 952 288V291Z" fill="#f00"/>
<path d="M1056.5 297V312" class="R" stroke-width="16"/>
<path d="M1056.5 325.5V326.5" class="M" stroke-width="15"/>
<path d="M1074 300V313.5" class="R" stroke-width="18"/>
<path d="M1091.5 301V303.5" class="R" stroke-width="14"/>
<path d="M1109 308V314.5" class="R" stroke-width="16"/>
<path d="M1189 304.5V323" class="L" stroke-width="21"/>
<path d="M1212.5 312V323" class="L" stroke-width="19"/>
<path d="M1234.5 300.5V319.5" class="L" stroke-width="16"/>
<path d="M1227 322.5V322.5Q1227 327.5 1234.5 327.5H1234.5Q1241.5 327.5 1241.5 322.5V322.5Z" fill="#ff0"/>
<path d="M1255.5 300.5V312" class="L" stroke-width="16"/>
<path d="M1248 297.5V297.5Q1248 292.5 1255.5 292.5H1255.5Q1262.5 292.5 1262.5 297.5V297.5Z" fill="#0f0"/>
<path d="M1327 304.5V320.5" class="B" stroke-width="19"/>
<path d="M1347 320V325.5" class="B" stroke-width="15"/>
<path d="M1369.5 273V324.5" class="B" stroke-width="18"/>
<path d="M1360.5 281.5V273Q1360.5 264 1369.5 264H1369.5Q1378.5 264 1378.5 273V281.5Z" fill="#ff0"/>
<path d="M1360.5 277.5V273Q1360.5 264 1369.5 264H1369.5Q1378.5 264 1378.5 273V277.5Z" fill="#0078f8"/>
<path d="M1387 319V319" class="B" stroke-width="7.5"/>
<path d="M416 428.5V463" class="Y" stroke-width="18"/>
<path d="M434 441.5V463.5" class="Y" stroke-width="17"/>
<path d="M456 446V449" class="Y" stroke-width="12.5"/>
<path d="M471.5 446V447.5" class="Y" stroke-width="16"/>
<path d="M565.5 434V459.5" class="C" stroke-width="22.5"/>
<path d="M589 449V462" class="C" stroke-width="17"/>
<path d="M609 446.5V463.5" class="C" stroke-width="17"/>
<path d="M628 438.5V442.5" class="C" stroke-width="16"/>
<path d="M644.5 450V452.5" class="C" stroke-width="14"/>
<path d="M638.5 455.5V455.5Q638.5 459.5 644.5 459.5H644.5Q651 459.5 651 455.5V455.5Z" fill="#f00"/>
<path d="M741 438V462" class="M" stroke-width="20"/>
<path d="M763.5 440V462.5" class="M" stroke-width="19"/>
<path d="M786 436.5V450" class="M" stroke-width="19"/>
<path d="M901 439V463.5" class="G" stroke-width="17"/>
<path d="M922 438.5V463" class="G" stroke-width="18"/>
<path d="M946 440V455" class="G" stroke-width="16"/>
<path d="M938.5 439.5V439.5Q938.5 432 946 432H946Q954 432 954 439.5V439.5Z" fill="#f00"/>
<path d="M1051.5 439.5V463" class="R" stroke-width="18"/>
<path d="M1074 439.5V461.5" class="R" stroke-width="18"/>
<path d="M1066 465.5V465.5Q1066 470.5 1074 470.5H1074Q1082 470.5 1082 465.5V465.5Z" fill="#f0f"/>
<path d="M1094 443.5V452.5" class="R" stroke-width="18"/>
<rect x="1108.5" y="439" width="14" height="11.5" rx="5" fill="#f00"/>
<path d="M1197.5 441V464" class="L" stroke-width="16"/>
<path d="M1218 456V464" class="L" stroke-width="16"/>
<path d="M1237 440.5V458" class="L" stroke-width="15"/>
<path d="M1230 461.5V461.5Q1230 465.5 1237 465.5H1237Q1243.5 465.5 1243.5 461.5V461.5Z" fill="#ff0"/>
<path d="M1257 447.5V456.5" class="L" stroke-width="16"/>
<path d="M1249 446.5V446.5Q1249 439.5 1257 439.5H1257Q1264.5 439.5 1264.5 446.5V446.5Z" fill="#0f0"/>
<path d="M1250 443V443Q1250 439.5 1257 439.5H1257Q1263.5 439.5 1263.5 443V443Z" fill="#f0f"/>
<path d="M1332 445V461" class="B" stroke-width="19"/>
<path d="M1354.5 462V463" class="B" stroke-width="18"/>
<path d="M1374.5 411.5V463.5" class="B" stroke-width="17"/>
<path d="M1366 418V411.5Q1366 403 1374.5 403H1374.5Q1383 403 1383 411.5V418Z" fill="#0078f8"/>
<path d="M1390.5 449V449" class="B" stroke-width="7.5"/>
<path d="M417.5 567V621" class="Y" stroke-width="18"/>
<path d="M442.5 595.5V622" class="Y" stroke-width="18"/>
<path d="M465.5 597V599" class="Y" stroke-width="18"/>
<path d="M456 599.5V599.5Q456 608.5 465.5 608.5H465.5Q474.5 608.5 474.5 599.5V599.5Z" fill="#ff80c0"/>
<path d="M565.5 577.5V619" class="C" stroke-width="21"/>
<path d="M590.5 592.5V616.5" class="C" stroke-width="23.5"/>
<path d="M624 596V619.5" class="C" stroke-width="20"/>
<path d="M643 594.5V602" class="C" stroke-width="12.5"/>
<path d="M636.5 599.5V602Q636.5 608.5 643 608.5H643Q649.5 608.5 649.5 602V599.5Z" fill="#0078f8"/>
<path d="M739.5 586V618" class="M" stroke-width="20"/>
<path d="M760 585.5V619" class="M" stroke-width="21"/>
<path d="M781 582V594" class="M" stroke-width="18"/>
<path d="M773.5 576.5V576.5Q773.5 573 781 573H781Q788 573 788 576.5V576.5Z" fill="#ff8000"/>
<path d="M887 584.5V622" class="G" stroke-width="16"/>
<path d="M911 586.5V620" class="G" stroke-width="19"/>
<path d="M931 574V594.5" class="G" stroke-width="17"/>
<path d="M922.5 580.5V574Q922.5 565.5 931 565.5H931Q939.5 565.5 939.5 574V580.5Z" fill="#f00"/>
<path d="M952 588V596" class="O" stroke-width="19"/>
<path d="M942.5 590.5V588Q942.5 578 952 578H952Q962 578 962 588V590.5Z" fill="#0f0"/>
<path d="M943 598V598Q943 606 952 606H952Q961.5 606 961.5 598V598Z" fill="#f0f"/>
<path d="M1046.5 593.5V619.5" class="R" stroke-width="20"/>
<path d="M1069 590.5V616" class="R" stroke-width="19"/>
<path d="M1060 586.5V586.5Q1060 580.5 1069 580.5H1069Q1078 580.5 1078 586.5V586.5Z" fill="#ffb400"/>
<path d="M1059.5 616V616Q1059.5 626 1069 626H1069Q1078.5 626 1078.5 616V616Z" fill="#f0f"/>
<path d="M1080.5 620.5V621" class="M" stroke-width="15"/>
<path d="M1097.5 591.5V597.5" class="R" stroke-width="17"/>
<path d="M1119 593V603.5" class="R" stroke-width="19"/>
<path d="M1184 586.5V607" class="L" stroke-width="19"/>
<path d="M1210.5 577.5V607.5" class="L" stroke-width="21"/>
<path d="M1200 583V577.5Q1200 566.5 1210.5 566.5H1210.5Q1221.5 566.5 1221.5 577.5V583Z" fill="#00f090"/>
<path d="M1200 578V577.5Q1200 566.5 1210.5 566.5H1210.5Q1221.5 566.5 1221.5 577.5V578Z" fill="#ff80c0"/>
<path d="M1234.5 588V608.5" class="L" stroke-width="19"/>
<path d="M1226 613.5V613.5Q1226 618.5 1234.5 618.5H1234.5Q1242.5 618.5 1242.5 613.5V613.5Z" fill="#f0f"/>
<path d="M1258 576V586" class="L" stroke-width="19"/>
<path d="M1248.5 583V586Q1248.5 595.5 1258 595.5H1258Q1267.5 595.5 1267.5 586V583Z" fill="#90b06c"/>
<path d="M1326 611V619.5" class="B" stroke-width="18"/>
<path d="M1347 608V620" class="B" stroke-width="17"/>
<path d="M1368 570V618.5" class="B" stroke-width="19"/>
<path d="M1358.5 578V570Q1358.5 560.5 1368 560.5H1368Q1377.5 560.5 1377.5 570V578Z" fill="#0078f8"/>
<path d="M1386 604.5V604.5" class="B" stroke-width="7.5"/>
<path d="M429 707.5V769.5" class="Y" stroke-width="18"/>
<path d="M420 746V769.5Q420 778.5 429 778.5H429Q438 778.5 438 769.5V746Z" fill="#0ff"/>
<path d="M451 741.5V769.5" class="Y" stroke-width="21"/>
<path d="M478 744.5V745.5" class="Y" stroke-width="19"/>
<path d="M468.5 748.5V748.5Q468.5 755 478 755H478Q487 755 487 748.5V748.5Z" fill="#f0f"/>
<path d="M559 718V770.5" class="C" stroke-width="19"/>
<path d="M584 733V770.5" class="C" stroke-width="19"/>
<path d="M574.5 751V733Q574.5 723.5 584 723.5H584Q593.5 723.5 593.5 733V751Z" fill="#ff0"/>
<path d="M605.5 744V769.5" class="C" stroke-width="21"/>
<path d="M628 738V741.5" class="C" stroke-width="14"/>
<path d="M644.5 729.5V740" class="C" stroke-width="11.5"/>
<path d="M639 738.5V740Q639 746 644.5 746H644.5Q650.5 746 650.5 740V738.5Z" fill="#f00"/>
<path d="M708 729.5V769" class="M" stroke-width="22.5"/>
<path d="M733.5 733V768" class="M" stroke-width="24.5"/>
<path d="M763.5 732.5V746" class="M" stroke-width="18"/>
<path d="M756 751V751Q756 755 763.5 755H763.5Q771 755 771 751V751Z" fill="#0ff"/>
<path d="M791 745.5V748" class="M" stroke-width="21"/>
<path d="M782 753.5V753.5Q782 758.5 791 758.5H791Q800 758.5 800 753.5V753.5Z" fill="#fff"/>
<path d="M814.5 739V740.5" class="M" stroke-width="10.5"/>
<path d="M809 740V740.5Q809 746 814.5 746H814.5Q820 746 820 740.5V740Z" fill="#0f0"/>
<path d="M883.5 729V768" class="G" stroke-width="21"/>
<path d="M908.5 731V768.5" class="G" stroke-width="20"/>
<path d="M935 731.5V750.5" class="G" stroke-width="21"/>
<path d="M924.5 733.5V731.5Q924.5 721 935 721H935Q946 721 946 731.5V733.5Z" fill="#f00"/>
<path d="M963.5 734.5V747.5" class="G" stroke-width="22.5"/>
<path d="M952.5 746V747.5Q952.5 758.5 963.5 758.5H963.5Q975 758.5 975 747.5V746Z" fill="#9a4242"/>
<path d="M1036.5 739V768" class="R" stroke-width="21"/>
<path d="M1069 731.5V767" class="R" stroke-width="23.5"/>
<path d="M1057.5 731V731Q1057.5 720 1069 720H1069Q1080.5 720 1080.5 731V731Z" fill="#ffb400"/>
<path d="M1057.5 761V767Q1057.5 778.5 1069 778.5H1069Q1080.5 778.5 1080.5 767V761Z" fill="#f0f"/>
<path d="M1058 771V771Q1058 778.5 1069 778.5H1069Q1080 778.5 1080 771V771Z" fill="#c000ff"/>
<path d="M1097.5 743V751.5" class="R" stroke-width="19"/>
<path d="M1120 749.5V757.5" class="R" stroke-width="22.5"/>
<path d="M1175.5 735V764.5" class="L" stroke-width="18"/>
<path d="M1205 730V768.5" class="L" stroke-width="20"/>
<path d="M1195 738.5V730Q1195 720 1205 720H1205Q1215.5 720 1215.5 730V738.5Z" fill="#00f090"/>
<path d="M1195 733.5V730Q1195 720 1205 720H1205Q1215.5 720 1215.5 730V733.5Z" fill="#ff80c0"/>
<path d="M1234.5 735V754.5" class="L" stroke-width="23.5"/>
<path d="M1224 760V760Q1224 766 1234.5 766H1234.5Q1244.5 766 1244.5 760V760Z" fill="#f0f"/>
<path d="M1261 735V754.5" class="L" stroke-width="18"/>
<path d="M1252 746V754.5Q1252 763.5 1261 763.5H1261Q1270 763.5 1270 754.5V746Z" fill="#90b06c"/>
<path d="M1324.5 753.5V768.5" class="B" stroke-width="20"/>
<path d="M1349.5 757.5V769.5" class="B" stroke-width="18"/>
<path d="M1373 719V768" class="B" stroke-width="21"/>
<path d="M1362.5 727V719Q1362.5 708.5 1373 708.5H1373Q1383.5 708.5 1383.5 719V727Z" fill="#ffb400"/>
<path d="M1362.5 723.5V719Q1362.5 708.5 1373 708.5H1373Q1383.5 708.5 1383.5 719V723.5Z" fill="#0078f8"/>
<path d="M415 880V901.5" class="Y" stroke-width="27.5"/>
<path d="M445 887V906" class="Y" stroke-width="21"/>
<path d="M465.5 887V907" class="Y" stroke-width="21"/>
<rect x="555.9" y="866.6" width="14" height="52" rx="6.3" fill="#0ff" transform="rotate(22.1 562.9 892.6)"/>
<rect x="555.9" y="866.6" width="14" height="52" rx="6.3" fill="#0ff" transform="rotate(-22.1 562.9 892.6)"/>
<rect x="585" y="867.4" width="11" height="50.4" rx="5" fill="#0ff" transform="rotate(17.7 590.5 892.6)"/>
<rect x="585" y="867.4" width="11" height="50.4" rx="5" fill="#0ff" transform="rotate(-17.7 590.5 892.6)"/>
<path d="M615.5 854.5V906" class="C" stroke-width="21"/>
<path d="M605 870.5V854.5Q605 843.5 615.5 843.5H615.5Q626 843.5 626 854.5V870.5Z" fill="#0f0"/>
<path d="M605 866.5V854.5Q605 843.5 615.5 843.5H615.5Q626 843.5 626 854.5V866.5Z" fill="#ff80c0"/>
<path d="M605 859V854.5Q605 843.5 615.5 843.5H615.5Q626 843.5 626 854.5V859Z" fill="#c000ff"/>
<path d="M636.5 885V885" class="C" stroke-width="7.5"/>
<path d="M736 891V906" class="M" stroke-width="19"/>
<path d="M757 886.5V906.5" class="M" stroke-width="20"/>
<path d="M747.5 882.5V882.5Q747.5 876.5 757 876.5H757Q766 876.5 766 882.5V882.5Z" fill="#ff0"/>
<path d="M749.5 879.5V879.5Q749.5 876.5 757 876.5H757Q764 876.5 764 879.5V879.5Z" fill="#0ff"/>
<path d="M780 886V904.5" class="M" stroke-width="21"/>
<path d="M881 886V904" class="G" stroke-width="24.5"/>
<path d="M906 881.5V905.5" class="G" stroke-width="20"/>
<path d="M930 880V898" class="G" stroke-width="17"/>
<path d="M921.5 884V880Q921.5 871.5 930 871.5H930Q938.5 871.5 938.5 880V884Z" fill="#f00"/>
<path d="M952 876V886" class="O" stroke-width="19"/>
<path d="M942.5 879V876Q942.5 866.5 952 866.5H952Q962 866.5 962 876V879Z" fill="#0f0"/>
<path d="M943.5 872.5V872.5Q943.5 866.5 952 866.5H952Q961 866.5 961 872.5V872.5Z" fill="#f00"/>
<path d="M942.5 884V886Q942.5 895.5 952 895.5H952Q962 895.5 962 886V884Z" fill="#0f0"/>
<path d="M944 890.5V890.5Q944 895.5 952 895.5H952Q960.5 895.5 960.5 890.5V890.5Z" fill="#90b06c"/>
<path d="M1040.5 892V906" class="R" stroke-width="21"/>
<path d="M1066.5 887V891" class="R" stroke-width="16"/>
<path d="M1086.5 884.5V886.5" class="R" stroke-width="15"/>
<path d="M1109 848.5V906" class="R" stroke-width="19"/>
<path d="M1099.5 876.5V848.5Q1099.5 838.5 1109 838.5H1109Q1118.5 838.5 1118.5 848.5V876.5Z" fill="#0078f8"/>
<path d="M1099.5 864V848.5Q1099.5 838.5 1109 838.5H1109Q1118.5 838.5 1118.5 848.5V864Z" fill="#9a4242"/>
<path d="M1099.5 851V848.5Q1099.5 838.5 1109 838.5H1109Q1118.5 838.5 1118.5 848.5V851Z" fill="#c8c000"/>
<path d="M1186.5 892V906" class="L" stroke-width="21"/>
<path d="M1209 890.5V907.5" class="L" stroke-width="18"/>
<path d="M1232 886V906" class="L" stroke-width="19"/>
<path d="M1223.5 910.5V910.5Q1223.5 915.5 1232 915.5H1232Q1240 915.5 1240 910.5V910.5Z" fill="#f0f"/>
<path d="M1258 892.5V900.5" class="L" stroke-width="17"/>
<path d="M1249.5 901.5V901.5Q1249.5 909 1258 909H1258Q1266.5 909 1266.5 901.5V901.5Z" fill="#90b06c"/>
<path d="M1322 888V897.5" class="B" stroke-width="18"/>
<path d="M1343.5 902V908.5" class="B" stroke-width="16"/>
<path d="M1367 875.5V899" class="B" stroke-width="20"/>
<path d="M1357 879V875.5Q1357 865.5 1367 865.5H1367Q1377 865.5 1377 875.5V879Z" fill="#0078f8"/>
<rect x="1385" y="894" width="9.5" height="8.5" rx="4" fill="#9a4242"/>
<path d="M415 1001.5V1037.5" class="Y" stroke-width="20"/>
<path d="M435 1018V1037.5" class="Y" stroke-width="18"/>
<path d="M455 1018V1036.5" class="Y" stroke-width="18"/>
<path d="M565.5 1009V1039" class="C" stroke-width="20"/>
<path d="M589 1008.5V1039.5" class="C" stroke-width="19"/>
<path d="M610.5 984.5V1038.5" class="C" stroke-width="18"/>
<path d="M601.5 996.5V984.5Q601.5 975.5 610.5 975.5H610.5Q619.5 975.5 619.5 984.5V996.5Z" fill="#ffb400"/>
<path d="M601.5 991.5V984.5Q601.5 975.5 610.5 975.5H610.5Q619.5 975.5 619.5 984.5V991.5Z" fill="#ff80c0"/>
<path d="M601.5 985.5V984.5Q601.5 975.5 610.5 975.5H610.5Q619.5 975.5 619.5 984.5V985.5Z" fill="#c000ff"/>
<path d="M628 1022V1022.5" class="C" stroke-width="8.5"/>
<path d="M713 1011V1038" class="M" stroke-width="19"/>
<path d="M736 1030.5V1038.5" class="M" stroke-width="18"/>
<path d="M756 1030V1039" class="M" stroke-width="17"/>
<path d="M776 1024.5V1040" class="M" stroke-width="18"/>
<path d="M795 1037V1039" class="C" stroke-width="10.5"/>
<path d="M789.5 1037.5V1037Q789.5 1031.5 795 1031.5H795Q800 1031.5 800 1037V1037.5Z" fill="#f00"/>
<path d="M881 1014.5V1040" class="G" stroke-width="18"/>
<path d="M905 1015V1040.5" class="G" stroke-width="17"/>
<path d="M926 1007V1022" class="G" stroke-width="19"/>
<path d="M916.5 1011.5V1007Q916.5 997.5 926 997.5H926Q935.5 997.5 935.5 1007V1011.5Z" fill="#f00"/>
<path d="M948.5 1011.5V1028.5" class="G" stroke-width="18"/>
<path d="M939.5 1014V1011.5Q939.5 1002.5 948.5 1002.5H948.5Q957.5 1002.5 957.5 1011.5V1014Z" fill="#f00"/>
<path d="M939.5 1029V1029Q939.5 1037.5 948.5 1037.5H948.5Q957.5 1037.5 957.5 1029V1029Z" fill="#ff8000"/>
<path d="M1036.5 1014.5V1037" class="R" stroke-width="21"/>
<path d="M1057.5 1008.5V1011.5" class="R" stroke-width="11.5"/>
<path d="M1072.5 1013V1015" class="R" stroke-width="12.5"/>
<path d="M1094 1016V1038.5" class="R" stroke-width="21"/>
<circle cx="1105.5" cy="1010.6" r="7.5" fill="#0078f8"/>
<circle cx="1117.6" cy="1000.5" r="8.5" fill="#9a4242"/>
<circle cx="1127.6" cy="991.5" r="7" fill="#c8c000"/>
<path d="M1191.5 1028.5V1038" class="L" stroke-width="19"/>
<path d="M1214 1026.5V1038.5" class="L" stroke-width="18"/>
<path d="M1234.5 1025.5V1036" class="L" stroke-width="16"/>
<path d="M1254.5 1025V1031.5" class="L" stroke-width="15"/>
<path d="M1247 1031.5V1031.5Q1247 1039 1254.5 1039H1254.5Q1262 1039 1262 1031.5V1031.5Z" fill="#90b06c"/>
<path d="M1333 1015.5V1038.5" class="B" stroke-width="18"/>
<path d="M1359.5 1035V1036.5" class="B" stroke-width="15"/>
<path d="M1382 1003.5V1029.5" class="B" stroke-width="19"/>
<path d="M1372.5 1008V1003.5Q1372.5 994 1382 994H1382Q1391.5 994 1391.5 1003.5V1008Z" fill="#0ff"/>
<path d="M1372.5 1005.5V1003.5Q1372.5 994 1382 994H1382Q1391.5 994 1391.5 1003.5V1005.5Z" fill="#0078f8"/>
<path d="M1460 296V324" class="O" stroke-width="17"/>
<path d="M1482.5 307.5V321.5" class="O" stroke-width="20"/>
<path d="M1506 309V314.5" class="O" stroke-width="16"/>
<path d="M1526.5 308.5V312.5" class="O" stroke-width="17"/>
<path d="M1519 304V304Q1519 300 1526.5 300H1526.5Q1533.5 300 1533.5 304V304Z" fill="#f0f"/>
<path d="M1588 285.5V299.5" class="D" stroke-width="19"/>
<path d="M1609.5 281.5V298.5" class="D" stroke-width="18"/>
<path d="M1600.5 280V280Q1600.5 272.5 1609.5 272.5H1609.5Q1618.5 272.5 1618.5 280V280Z" fill="#0078f8"/>
<path d="M1629.5 278V298.5" class="D" stroke-width="18"/>
<path d="M1620.5 282.5V278Q1620.5 269 1629.5 269H1629.5Q1638.5 269 1638.5 278V282.5Z" fill="#ff8000"/>
<path d="M1650.5 257V316.5" class="Y" stroke-width="22.5"/>
<path d="M1639.5 282.5V257Q1639.5 246 1650.5 246H1650.5Q1661.5 246 1661.5 257V282.5Z" fill="#10a858"/>
<path d="M1639.5 275V257Q1639.5 246 1650.5 246H1650.5Q1661.5 246 1661.5 257V275Z" fill="#ff0"/>
<path d="M1639.5 310V316.5Q1639.5 327.5 1650.5 327.5H1650.5Q1661.5 327.5 1661.5 316.5V310Z" fill="#f00"/>
<path d="M1726.5 307V323" class="K" stroke-width="19"/>
<path d="M1745.5 308.5V308.5" class="K" stroke-width="15"/>
<path d="M1761.5 312V318" class="K" stroke-width="16"/>
<path d="M1781 301V312.5" class="O" stroke-width="17"/>
<path d="M1772.5 302.5V301Q1772.5 292.5 1781 292.5H1781Q1789.5 292.5 1789.5 301V302.5Z" fill="#90b06c"/>
<path d="M1857 303V323" class="P" stroke-width="21"/>
<path d="M1878.5 295V299" class="P" stroke-width="20"/>
<path d="M1868.5 292.5V292.5Q1868.5 285 1878.5 285H1878.5Q1888 285 1888 292.5V292.5Z" fill="#f00"/>
<path d="M1898.5 301V312.5" class="P" stroke-width="17"/>
<path d="M1890.5 297.5V297.5Q1890.5 292.5 1898.5 292.5H1898.5Q1906 292.5 1906 297.5V297.5Z" fill="#ff0080"/>
<path d="M1918.5 312V323" class="P" stroke-width="19"/>
<path d="M1985 307V323" class="T" stroke-width="19"/>
<path d="M2006 310V324.5" class="T" stroke-width="18"/>
<path d="M1997 309V309Q1997 301 2006 301H2006Q2015 301 2015 309V309Z" fill="#fff"/>
<path d="M2023.5 304V311" class="T" stroke-width="16"/>
<path d="M2016 305V304Q2016 296 2023.5 296H2023.5Q2031.5 296 2031.5 304V305Z" fill="#ff80c0"/>
<path d="M2042.5 312V316" class="T" stroke-width="16"/>
<path d="M2035 319V319Q2035 324 2042.5 324H2042.5Q2049.5 324 2049.5 319V319Z" fill="#ff0080"/>
<path d="M2057.5 312V314.5" class="T" stroke-width="14"/>
<path d="M2136.5 299.5V321" class="W" stroke-width="23.5"/>
<path d="M2125 310V299.5Q2125 287.5 2136.5 287.5H2136.5Q2148 287.5 2148 299.5V310Z" fill="#0078f8"/>
<path d="M2156.5 308V314.5" class="W" stroke-width="16"/>
<path d="M2148.5 311V308Q2148.5 300 2156.5 300H2156.5Q2164.5 300 2164.5 308V311Z" fill="#f0f"/>
<path d="M2278 316V322" class="U" stroke-width="21"/>
<path d="M2389.5 313.5V322" class="H" stroke-width="21"/>
<path d="M2412 294.5V319.5" class="H" stroke-width="21"/>
<path d="M2401.5 305V294.5Q2401.5 284 2412 284H2412Q2422.5 284 2422.5 294.5V305Z" fill="#0ff"/>
<path d="M2432 314.5V323" class="K" stroke-width="19"/>
<path d="M2425 308V308Q2425 305 2432 305H2432Q2439 305 2439 308V308Z" fill="#ff0080"/>
<path d="M1466 441V462.5" class="O" stroke-width="19"/>
<path d="M1487.5 448.5V463" class="O" stroke-width="18"/>
<path d="M1505 438.5V452.5" class="O" stroke-width="16"/>
<path d="M1497 443V438.5Q1497 430.5 1505 430.5H1505Q1513 430.5 1513 438.5V443Z" fill="#0078f8"/>
<path d="M1590.5 430V443" class="D" stroke-width="17"/>
<path d="M1613 424.5V447.5" class="D" stroke-width="18"/>
<path d="M1604.5 421.5V421.5Q1604.5 415.5 1613 415.5H1613Q1621.5 415.5 1621.5 421.5V421.5Z" fill="#0078f8"/>
<path d="M1639.5 427.5V446" class="D" stroke-width="19"/>
<path d="M1630 430.5V427.5Q1630 418 1639.5 418H1639.5Q1649 418 1649 427.5V430.5Z" fill="#ff8000"/>
<path d="M1661.5 404V459.5" class="D" stroke-width="22.5"/>
<path d="M1650.5 428V404Q1650.5 393 1661.5 393H1661.5Q1672.5 393 1672.5 404V428Z" fill="#ff0"/>
<path d="M1650.5 435.5V459.5Q1650.5 470.5 1661.5 470.5H1661.5Q1672.5 470.5 1672.5 459.5V435.5Z" fill="#ff0"/>
<path d="M1650.5 450.5V459.5Q1650.5 470.5 1661.5 470.5H1661.5Q1672.5 470.5 1672.5 459.5V450.5Z" fill="#10a858"/>
<path d="M1650.5 455.5V459.5Q1650.5 470.5 1661.5 470.5H1661.5Q1672.5 470.5 1672.5 459.5V455.5Z" fill="#f00"/>
<path d="M1736.5 448.5V463" class="K" stroke-width="18"/>
<path d="M1756.5 451V455" class="K" stroke-width="16"/>
<rect x="1771.5" y="444.5" width="14" height="13.5" rx="6" fill="#90b06c"/>
<path d="M1796 448.5V460" class="K" stroke-width="16"/>
<path d="M1788 455.5V460Q1788 468 1796 468H1796Q1804 468 1804 460V455.5Z" fill="#ff8000"/>
<path d="M1868.5 441.5V449.5" class="P" stroke-width="17"/>
<path d="M1890 439V461" class="P" stroke-width="19"/>
<path d="M1881.5 434.5V434.5Q1881.5 429.5 1890 429.5H1890Q1898.5 429.5 1898.5 434.5V434.5Z" fill="#f00"/>
<path d="M1911 440V462.5" class="P" stroke-width="19"/>
<path d="M1995 449V462.5" class="T" stroke-width="19"/>
<path d="M2013.5 433V460.5" class="O" stroke-width="20"/>
<path d="M2005 428V428Q2005 423 2013.5 423H2013.5Q2022.5 423 2022.5 428V428Z" fill="#00f090"/>
<path d="M2003.5 448V460.5Q2003.5 470.5 2013.5 470.5H2013.5Q2024 470.5 2024 460.5V448Z" fill="#00f090"/>
<path d="M2032.5 444V448" class="T" stroke-width="15"/>
<path d="M2025 443V443Q2025 436.5 2032.5 436.5H2032.5Q2039.5 436.5 2039.5 443V443Z" fill="#ff80c0"/>
<path d="M2046.5 446.5V448.5" class="T" stroke-width="14"/>
<rect x="2054.5" y="450.5" width="8.5" height="7.5" rx="3.5" fill="#00f090"/>
<path d="M2136.5 453.5V463" class="W" stroke-width="18"/>
<path d="M2160 450V462.5" class="W" stroke-width="19"/>
<path d="M2150.5 451.5V450Q2150.5 440.5 2160 440.5H2160Q2169.5 440.5 2169.5 450V451.5Z" fill="#f0f"/>
<path d="M2265.5 453V462" class="U" stroke-width="17"/>
<path d="M2258 449.5V449.5Q2258 444.5 2265.5 444.5H2265.5Q2273.5 444.5 2273.5 449.5V449.5Z" fill="#ff0"/>
<path d="M2287 449V453.5" class="U" stroke-width="11.5"/>
<rect x="2300.8" y="445.4" width="22" height="8" rx="3.6" fill="#0078f8" transform="rotate(0 2311.8 449.4)"/>
<path d="M2408 441.5V444.5" class="C" stroke-width="20"/>
<path d="M2409.5 461V461.5" class="H" stroke-width="21"/>
<path d="M2429.5 455.5V460.5" class="K" stroke-width="20"/>
<path d="M2421 450.5V450.5Q2421 445.5 2429.5 445.5H2429.5Q2438.5 445.5 2438.5 450.5V450.5Z" fill="#ff0080"/>
<path d="M1470 594V620" class="O" stroke-width="21"/>
<path d="M1491.5 602.5V620" class="O" stroke-width="21"/>
<circle cx="1511.2" cy="599.7" r="6.5" fill="#ff8000"/>
<path d="M1588 566V582" class="D" stroke-width="19"/>
<path d="M1609 556.5V581.5" class="D" stroke-width="20"/>
<path d="M1599 563V556.5Q1599 546.5 1609 546.5H1609Q1619 546.5 1619 556.5V563Z" fill="#0078f8"/>
<path d="M1599 560.5V556.5Q1599 546.5 1609 546.5H1609Q1619 546.5 1619 556.5V560.5Z" fill="#ff8000"/>
<path d="M1634.5 561.5V587.5" class="D" stroke-width="21"/>
<path d="M1624 563V561.5Q1624 550.5 1634.5 550.5H1634.5Q1645 550.5 1645 561.5V563Z" fill="#0078f8"/>
<path d="M1656.5 542V617.5" class="D" stroke-width="21"/>
<path d="M1646 573V542Q1646 531.5 1656.5 531.5H1656.5Q1667 531.5 1667 542V573Z" fill="#ff0"/>
<path d="M1646 580.5V617.5Q1646 628.5 1656.5 628.5H1656.5Q1667 628.5 1667 617.5V580.5Z" fill="#ff0"/>
<path d="M1646 608.5V617.5Q1646 628.5 1656.5 628.5H1656.5Q1667 628.5 1667 617.5V608.5Z" fill="#f00"/>
<path d="M1724.5 603V621.5" class="K" stroke-width="17"/>
<path d="M1745.5 605V622" class="K" stroke-width="18"/>
<rect x="1755" y="595.5" width="19" height="14" rx="6.5" fill="#90b06c"/>
<path d="M1785 602.5V621" class="K" stroke-width="18"/>
<path d="M1775.5 606V602.5Q1775.5 593 1785 593H1785Q1794 593 1794 602.5V606Z" fill="#ff8000"/>
<path d="M1869.5 594.5V620" class="P" stroke-width="19"/>
<path d="M1860 594.5V594.5Q1860 584.5 1869.5 584.5H1869.5Q1879 584.5 1879 594.5V594.5Z" fill="#f00"/>
<path d="M1888.5 593V605" class="P" stroke-width="17"/>
<path d="M1881.5 588.5V588.5Q1881.5 584.5 1888.5 584.5H1888.5Q1895.5 584.5 1895.5 588.5V588.5Z" fill="#0ff"/>
<path d="M1909.5 601.5V620" class="P" stroke-width="19"/>
<path d="M1985 601.5V618.5" class="T" stroke-width="19"/>
<path d="M2013.5 592.5V616.5" class="T" stroke-width="23.5"/>
<path d="M2002 603V592.5Q2002 580.5 2013.5 580.5H2013.5Q2025.5 580.5 2025.5 592.5V603Z" fill="#ff8000"/>
<path d="M2004 585.5V585.5Q2004 580.5 2013.5 580.5H2013.5Q2023.5 580.5 2023.5 585.5V585.5Z" fill="#ff80c0"/>
<path d="M2037.5 600V601.5" class="T" stroke-width="17"/>
<path d="M2029.5 604.5V604.5Q2029.5 610 2037.5 610H2037.5Q2045 610 2045 604.5V604.5Z" fill="#ff0080"/>
<rect x="2047.5" y="595.5" width="12.5" height="11" rx="5" fill="#00f090"/>
<rect x="2061" y="595.5" width="12.5" height="11" rx="5" fill="#00f090"/>
<path d="M2141.5 606.5V619" class="W" stroke-width="21"/>
<path d="M2131 606V606Q2131 595.5 2141.5 595.5H2141.5Q2152 595.5 2152 606V606Z" fill="#f0f"/>
<circle cx="2159" cy="599.7" r="4.5" fill="#fff"/>
<path d="M2259 603.5V608" class="U" stroke-width="20"/>
<path d="M2283 600V619.5" class="U" stroke-width="20"/>
<path d="M2272.5 621V621Q2272.5 630 2283 630H2283Q2293 630 2293 621V621Z" fill="#f0f"/>
<rect x="2297.5" y="594.5" width="14" height="7" rx="3" fill="#0078f8"/>
<path d="M2404.5 604V619" class="H" stroke-width="21"/>
<path d="M2422 584V615" class="C" stroke-width="21"/>
<path d="M2411.5 603V615Q2411.5 626 2422 626H2422Q2432.5 626 2432.5 615V603Z" fill="#ff0080"/>
<path d="M1469 739.5V767.5" class="O" stroke-width="22.5"/>
<path d="M1493.5 756.5V768" class="O" stroke-width="21"/>
<circle cx="1520.2" cy="752.5" r="8.5" fill="#ff8000"/>
<path d="M1576.5 752.5V761" class="D" stroke-width="18"/>
<path d="M1603 736V766" class="D" stroke-width="22.5"/>
<path d="M1592 746V736Q1592 725 1603 725H1603Q1614 725 1614 736V746Z" fill="#ff8000"/>
<path d="M1628 734V768" class="D" stroke-width="21"/>
<path d="M1617.5 736V734Q1617.5 723.5 1628 723.5H1628Q1638.5 723.5 1638.5 734V736Z" fill="#0078f8"/>
<path d="M1657 688.5V767" class="Y" stroke-width="23.5"/>
<path d="M1645.5 726V688.5Q1645.5 677 1657 677H1657Q1668.5 677 1668.5 688.5V726Z" fill="#10a858"/>
<path d="M1645.5 713.5V688.5Q1645.5 677 1657 677H1657Q1668.5 677 1668.5 688.5V713.5Z" fill="#ff0"/>
<path d="M1645.5 756V767Q1645.5 778.5 1657 778.5H1657Q1668.5 778.5 1668.5 767V756Z" fill="#f00"/>
<path d="M1723 746.5V768" class="K" stroke-width="21"/>
<path d="M1746.5 749V768" class="K" stroke-width="21"/>
<path d="M1766.5 743V745.5" class="K" stroke-width="16"/>
<path d="M1786 744V767" class="K" stroke-width="18"/>
<path d="M1776.5 748.5V744Q1776.5 735 1786 735H1786Q1795 735 1795 744V748.5Z" fill="#ff8000"/>
<path d="M1777.5 741V741Q1777.5 735 1786 735H1786Q1794.5 735 1794.5 741V741Z" fill="#ff80c0"/>
<path d="M1863.5 744.5V762.5" class="P" stroke-width="22.5"/>
<path d="M1888.5 736.5V764.5" class="P" stroke-width="23.5"/>
<path d="M1877 735V735Q1877 725 1888.5 725H1888.5Q1900 725 1900 735V735Z" fill="#f00"/>
<path d="M1912 736V752" class="P" stroke-width="20"/>
<path d="M1903.5 731V731Q1903.5 726 1912 726H1912Q1920.5 726 1920.5 731V731Z" fill="#00f090"/>
<path d="M1934.5 739.5V744" class="P" stroke-width="14"/>
<path d="M1978.5 748.5V767" class="T" stroke-width="23.5"/>
<path d="M2006 735.5V766.5" class="T" stroke-width="24.5"/>
<path d="M1994 746V735.5Q1994 723.5 2006 723.5H2006Q2018.5 723.5 2018.5 735.5V746Z" fill="#ff8000"/>
<path d="M1996.5 728.5V728.5Q1996.5 723.5 2006 723.5H2006Q2016 723.5 2016 728.5V728.5Z" fill="#f0f"/>
<path d="M2030.5 743.5V746.5" class="T" stroke-width="17"/>
<path d="M2022 748.5V748.5Q2022 755 2030.5 755H2030.5Q2038.5 755 2038.5 748.5V748.5Z" fill="#ff0080"/>
<path d="M2050.5 745V753" class="T" stroke-width="16"/>
<path d="M2042.5 750V753Q2042.5 761 2050.5 761H2050.5Q2058.5 761 2058.5 753V750Z" fill="#808080"/>
<path d="M2066.5 745V747" class="T" stroke-width="12.5"/>
<path d="M2141.5 749.5V767.5" class="W" stroke-width="22.5"/>
<path d="M2131 746V746Q2131 738.5 2141.5 738.5H2141.5Q2152 738.5 2152 746V746Z" fill="#f0f"/>
<circle cx="2160.5" cy="750" r="5.5" fill="#f0f"/>
<path d="M2262.5 750V762" class="U" stroke-width="23.5"/>
<path d="M2290.5 744V764.5" class="U" stroke-width="23.5"/>
<path d="M2279 741V741Q2279 732.5 2290.5 732.5H2290.5Q2301.5 732.5 2301.5 741V741Z" fill="#ff80c0"/>
<path d="M2278.5 763.5V764.5Q2278.5 776 2290.5 776H2290.5Q2302 776 2302 764.5V763.5Z" fill="#f0f"/>
<path d="M2369.5 754.5V765" class="H" stroke-width="22.5"/>
<path d="M2394.5 729V768" class="H" stroke-width="21"/>
<path d="M2384 748.5V729Q2384 718.5 2394.5 718.5H2394.5Q2405 718.5 2405 729V748.5Z" fill="#0ff"/>
<path d="M2415.5 754.5V760" class="K" stroke-width="17"/>
<path d="M2437 756.5V759.5" class="K" stroke-width="21"/>
<rect x="2449" y="747" width="18" height="18" rx="8" fill="#ff0080"/>
<path d="M2476 755V755.5" class="H" stroke-width="16"/>
<path d="M1463.5 884.5V906" class="O" stroke-width="21"/>
<path d="M1487.5 884V901.5" class="O" stroke-width="20"/>
<path d="M1508.5 889.5V900" class="O" stroke-width="18"/>
<path d="M1582 890V899.5" class="D" stroke-width="19"/>
<path d="M1603 881.5V905.5" class="D" stroke-width="20"/>
<path d="M1593 886.5V881.5Q1593 871.5 1603 871.5H1603Q1613 871.5 1613 881.5V886.5Z" fill="#ff8000"/>
<path d="M1594 876.5V876.5Q1594 871.5 1603 871.5H1603Q1611.5 871.5 1611.5 876.5V876.5Z" fill="#ff0"/>
<path d="M1628 877.5V904" class="D" stroke-width="22.5"/>
<path d="M1617.5 874V874Q1617.5 866.5 1628 866.5H1628Q1638.5 866.5 1638.5 874V874Z" fill="#0078f8"/>
<path d="M1617 904V904Q1617 915.5 1628 915.5H1628Q1639 915.5 1639 904V904Z" fill="#ff0080"/>
<path d="M1655.5 862V902" class="D" stroke-width="23.5"/>
<path d="M1644 879V862Q1644 850 1655.5 850H1655.5Q1667 850 1667 862V879Z" fill="#ff0"/>
<path d="M1644 885.5V902Q1644 914 1655.5 914H1655.5Q1667 914 1667 902V885.5Z" fill="#ff0"/>
<path d="M1644 904V904Q1644 914 1655.5 914H1655.5Q1667 914 1667 904V904Z" fill="#f00"/>
<path d="M1723 892.5V908" class="K" stroke-width="17"/>
<path d="M1743 894.5V907.5" class="K" stroke-width="18"/>
<path d="M1763 889V893.5" class="K" stroke-width="14"/>
<path d="M1782 896V906" class="K" stroke-width="19"/>
<path d="M1772 904V906Q1772 915.5 1782 915.5H1782Q1791.5 915.5 1791.5 906V904Z" fill="#f00"/>
<path d="M1853.5 887.5V902.5" class="P" stroke-width="22.5"/>
<path d="M1877 886V891" class="P" stroke-width="19"/>
<path d="M1901 892V903.5" class="P" stroke-width="23.5"/>
<path d="M1890.5 887.5V887.5Q1890.5 880.5 1901 880.5H1901Q1911.5 880.5 1911.5 887.5V887.5Z" fill="#f00"/>
<path d="M1980 891V908" class="T" stroke-width="19"/>
<path d="M2003.5 881.5V905" class="T" stroke-width="22.5"/>
<path d="M1992.5 891.5V881.5Q1992.5 870.5 2003.5 870.5H2003.5Q2015 870.5 2015 881.5V891.5Z" fill="#ff8000"/>
<path d="M1994.5 875.5V875.5Q1994.5 870.5 2003.5 870.5H2003.5Q2013 870.5 2013 875.5V875.5Z" fill="#ff0080"/>
<path d="M2023.5 889.5V896" class="T" stroke-width="16"/>
<path d="M2016.5 899V899Q2016.5 904 2023.5 904H2023.5Q2031 904 2031 899V899Z" fill="#ff0080"/>
<path d="M2042.5 890.5V894.5" class="T" stroke-width="14"/>
<path d="M2060 883.5V891.5" class="T" stroke-width="15"/>
<path d="M2052.5 884V883.5Q2052.5 876.5 2060 876.5H2060Q2067.5 876.5 2067.5 883.5V884Z" fill="#ff80c0"/>
<path d="M2134 898V904.5" class="W" stroke-width="23.5"/>
<path d="M2123 894V894Q2123 886.5 2134 886.5H2134Q2145 886.5 2145 894V894Z" fill="#f0f"/>
<path d="M2159 895.5V904.5" class="W" stroke-width="23.5"/>
<path d="M2147.5 896.5V895.5Q2147.5 884 2159 884H2159Q2170.5 884 2170.5 895.5V896.5Z" fill="#f0f"/>
<circle cx="2176.6" cy="892.3" r="4.5" fill="#fff"/>
<path d="M2272.5 895.5V905.5" class="U" stroke-width="20"/>
<path d="M2297 901.5V906.5" class="U" stroke-width="20"/>
<path d="M2383 886V900.5" class="H" stroke-width="21"/>
<path d="M2372.5 901.5V901.5Q2372.5 911.5 2383 911.5H2383Q2393.5 911.5 2393.5 901.5V901.5Z" fill="#f0f"/>
<path d="M2409.5 883V903.5" class="H" stroke-width="23.5"/>
<path d="M2398 889V883Q2398 871.5 2409.5 871.5H2409.5Q2421 871.5 2421 883V889Z" fill="#0ff"/>
<path d="M2434.5 899.5V906" class="K" stroke-width="21"/>
<path d="M2425.5 894V894Q2425.5 889 2434.5 889H2434.5Q2443.5 889 2443.5 894V894Z" fill="#ff0080"/>
<circle cx="2453.6" cy="896.3" r="5.5" fill="#ff0080"/>
<path d="M1464 1018.5V1039.5" class="O" stroke-width="19"/>
<path d="M1488.5 1022V1041" class="O" stroke-width="19"/>
<path d="M1512.5 1019.5V1029.5" class="O" stroke-width="16"/>
<path d="M1584.5 983V1010" class="D" stroke-width="18"/>
<path d="M1606.5 984.5V1010" class="D" stroke-width="21"/>
<path d="M1596 989V984.5Q1596 974 1606.5 974H1606.5Q1617 974 1617 984.5V989Z" fill="#ff8000"/>
<path d="M1630.5 982V1036" class="D" stroke-width="21"/>
<path d="M1620 986.5V982Q1620 971.5 1630.5 971.5H1630.5Q1641 971.5 1641 982V986.5Z" fill="#0078f8"/>
<path d="M1620 1021.5V1036Q1620 1046.5 1630.5 1046.5H1630.5Q1641 1046.5 1641 1036V1021.5Z" fill="#ff0080"/>
<path d="M1655.5 975.5V1014" class="D" stroke-width="23.5"/>
<path d="M1644 991.5V975.5Q1644 964 1655.5 964H1655.5Q1667 964 1667 975.5V991.5Z" fill="#ff0"/>
<path d="M1644 999V1014Q1644 1025.5 1655.5 1025.5H1655.5Q1667 1025.5 1667 1014V999Z" fill="#ff0"/>
<path d="M1644 1016.5V1016.5Q1644 1025.5 1655.5 1025.5H1655.5Q1667 1025.5 1667 1016.5V1016.5Z" fill="#f00"/>
<path d="M1726.5 1025.5V1041" class="K" stroke-width="16"/>
<path d="M1746.5 1027.5V1040.5" class="K" stroke-width="17"/>
<path d="M1768 1026V1042" class="K" stroke-width="17"/>
<path d="M1786 1023V1027.5" class="K" stroke-width="12.5"/>
<path d="M1868.5 1009V1034" class="P" stroke-width="20"/>
<path d="M1892 1006V1026" class="P" stroke-width="19"/>
<path d="M1882.5 1004V1004Q1882.5 996.5 1892 996.5H1892Q1901.5 996.5 1901.5 1004V1004Z" fill="#f00"/>
<path d="M1915 1009.5V1020" class="P" stroke-width="18"/>
<path d="M2000 1024V1039" class="T" stroke-width="20"/>
<path d="M2023.5 1013V1036" class="T" stroke-width="23.5"/>
<path d="M2012 1024V1013Q2012 1001.5 2023.5 1001.5H2023.5Q2035.5 1001.5 2035.5 1013V1024Z" fill="#ff8000"/>
<path d="M2014 1006.5V1006.5Q2014 1001.5 2023.5 1001.5H2023.5Q2033.5 1001.5 2033.5 1006.5V1006.5Z" fill="#ff0080"/>
<path d="M2046.5 1020.5V1023.5" class="N" stroke-width="16"/>
<path d="M2038.5 1024V1024Q2038.5 1031.5 2046.5 1031.5H2046.5Q2054 1031.5 2054 1024V1024Z" fill="#00f090"/>
<path d="M2135.5 1028.5V1038" class="W" stroke-width="19"/>
<path d="M2161.5 1028.5V1039.5" class="W" stroke-width="22.5"/>
<path d="M2150.5 1029V1028.5Q2150.5 1017.5 2161.5 1017.5H2161.5Q2172.5 1017.5 2172.5 1028.5V1029Z" fill="#f0f"/>
<path d="M2271.5 1028.5V1039.5" class="U" stroke-width="19"/>
<path d="M2293.5 1027V1041" class="U" stroke-width="19"/>
<path d="M2379.5 1029V1039" class="H" stroke-width="20"/>
<path d="M2402 1012.5V1038" class="H" stroke-width="22.5"/>
<path d="M2391 1021.5V1012.5Q2391 1001.5 2402 1001.5H2402Q2413 1001.5 2413 1012.5V1021.5Z" fill="#0ff"/>
<path d="M2426 1033V1040" class="K" stroke-width="18"/>
<path d="M2417.5 1030.5V1030.5Q2417.5 1024 2426 1024H2426Q2434.5 1024 2434.5 1030.5V1030.5Z" fill="#ff0080"/>
<circle cx="2444.6" cy="1025.6" r="5.5" fill="#ff0080"/>
<path d="M2527.5 317V323.5" class="A" stroke-width="16"/>
<path d="M2546 322.5V324.5" class="A" stroke-width="15"/>
<path d="M2651.5 319.5V325" class="N" stroke-width="14"/>
<path d="M2669.5 312.5V323" class="N" stroke-width="17"/>
<circle cx="2686.5" cy="311.2" r="6" fill="#ff80c0"/>
<path d="M2789.5 305V323" class="V" stroke-width="17"/>
<circle cx="2808.2" cy="310.2" r="4.5" fill="#c000ff"/>
<circle cx="2820.7" cy="312.7" r="5" fill="#c000ff"/>
<path d="M2933.5 316.5V324.5" class="F" stroke-width="15"/>
<path d="M2926.5 314V314Q2926.5 309 2933.5 309H2933.5Q2940.5 309 2940.5 314V314Z" fill="#ff0080"/>
<path d="M3042 317.5V324.5" class="E" stroke-width="15"/>
<path d="M3060 313.5V321.5" class="E" stroke-width="17"/>
<circle cx="3077.2" cy="311.2" r="4.5" fill="#c8c000"/>
<path d="M3092.5 321.5V324" class="E" stroke-width="12.5"/>
<circle cx="3176.4" cy="321.2" r="6.5" fill="#b4b4ff"/>
<circle cx="3193" cy="319.2" r="7" fill="#b4b4ff"/>
<path d="M3212.5 295.5V308.5" class="Y" stroke-width="21"/>
<path d="M3202 306V308.5Q3202 319 3212.5 319H3212.5Q3223 319 3223 308.5V306Z" fill="#ff80c0"/>
<path d="M3202 310V310Q3202 319 3212.5 319H3212.5Q3223 319 3223 310V310Z" fill="#b4b4ff"/>
<circle cx="3324.2" cy="307.7" r="7" fill="#ff0040"/>
<path d="M3338 290.5V309" class="Z" stroke-width="12.5"/>
<path d="M3331.5 297.5V290.5Q3331.5 284 3338 284H3338Q3344 284 3344 290.5V297.5Z" fill="#0f0"/>
<path d="M3452 297.5V320" class="U" stroke-width="20"/>
<path d="M3469.5 308V312" class="U" stroke-width="16"/>
<path d="M2534 457V464.5" class="A" stroke-width="15"/>
<path d="M2551 456V462.5" class="A" stroke-width="16"/>
<path d="M2661.5 453.5V461.5" class="N" stroke-width="16"/>
<path d="M2679.5 460V465" class="N" stroke-width="14"/>
<path d="M2691.5 463.5V467.5" class="N" stroke-width="8.5"/>
<path d="M2793 449.5V463" class="V" stroke-width="18"/>
<rect x="2806.5" y="446.5" width="8.5" height="8" rx="3.5" fill="#c000ff"/>
<rect x="2819.2" y="447.4" width="15" height="6" rx="2.7" fill="#c000ff" transform="rotate(0 2826.7 450.4)"/>
<path d="M2932.5 460V466" class="F" stroke-width="11.5"/>
<path d="M2926.5 460.5V460Q2926.5 454 2932.5 454H2932.5Q2938.5 454 2938.5 460V460.5Z" fill="#ff0080"/>
<path d="M2944 464.5V469" class="F" stroke-width="6.5"/>
<path d="M3055 456.5V463.5" class="E" stroke-width="17"/>
<path d="M3073.5 463V463" class="E" stroke-width="12.5"/>
<path d="M3087.5 463V467" class="E" stroke-width="7.5"/>
<rect x="3174" y="459.5" width="15" height="11" rx="5" fill="#b4b4ff"/>
<circle cx="3194" cy="465.5" r="5" fill="#b4b4ff"/>
<path d="M3210.5 447.5V460" class="Y" stroke-width="19"/>
<path d="M3201 456.5V460Q3201 469.5 3210.5 469.5H3210.5Q3220 469.5 3220 460V456.5Z" fill="#ff80c0"/>
<path d="M3201 461.5V461.5Q3201 469.5 3210.5 469.5H3210.5Q3220 469.5 3220 461.5V461.5Z" fill="#b4b4ff"/>
<path d="M3331.5 450.5V452.5" class="Z" stroke-width="10.5"/>
<path d="M3454.5 438.5V463" class="U" stroke-width="18"/>
<path d="M3446 466.5V466.5Q3446 472 3454.5 472H3454.5Q3463 472 3463 466.5V466.5Z" fill="#ff0080"/>
<path d="M3473 448V454" class="U" stroke-width="15"/>
<path d="M2529 619V619" class="A" stroke-width="21"/>
<path d="M2549 612.5V621" class="A" stroke-width="18"/>
<path d="M2566 616V620.5" class="A" stroke-width="16"/>
<path d="M2671.5 605V621" class="N" stroke-width="18"/>
<circle cx="2688" cy="605.8" r="6" fill="#ff80c0"/>
<path d="M2798 597.5V617.5" class="V" stroke-width="21"/>
<circle cx="2816.7" cy="595.7" r="6" fill="#c000ff"/>
<circle cx="2829.7" cy="593.2" r="5.5" fill="#c000ff"/>
<path d="M2938.5 618V623.5" class="F" stroke-width="12.5"/>
<path d="M2932 618.5V618Q2932 612 2938.5 612H2938.5Q2945 612 2945 618V618.5Z" fill="#ff0080"/>
<path d="M3038.5 605.5V611" class="E" stroke-width="15"/>
<path d="M3054.5 607V612.5" class="E" stroke-width="15"/>
<path d="M3071 608V618.5" class="E" stroke-width="19"/>
<path d="M3061.5 618.5V618.5Q3061.5 628.5 3071 628.5H3071Q3081 628.5 3081 618.5V618.5Z" fill="#b4b4ff"/>
<path d="M3063 623.5V623.5Q3063 628.5 3071 628.5H3071Q3079.5 628.5 3079.5 623.5V623.5Z" fill="#c8c000"/>
<path d="M3089 607.5V613" class="E" stroke-width="14"/>
<path d="M3082.5 616V616Q3082.5 620 3089 620H3089Q3095 620 3095 616V616Z" fill="#ffb400"/>
<path d="M3103 620V624" class="E" stroke-width="14"/>
<path d="M3096 620V620Q3096 613.5 3103 613.5H3103Q3109.5 613.5 3109.5 620V620Z" fill="#ff80c0"/>
<circle cx="3179.9" cy="622.3" r="6.5" fill="#b4b4ff"/>
<circle cx="3198" cy="622.3" r="7" fill="#b4b4ff"/>
<path d="M3218 595V618" class="Y" stroke-width="20"/>
<path d="M3208 612V618Q3208 628.5 3218 628.5H3218Q3228 628.5 3228 618V612Z" fill="#ff80c0"/>
<path d="M3208 617V618Q3208 628.5 3218 628.5H3218Q3228 628.5 3228 618V617Z" fill="#b4b4ff"/>
<circle cx="3325.2" cy="603.2" r="8.5" fill="#ff0040"/>
<path d="M3343 606V618" class="Z" stroke-width="20"/>
<path d="M3335.5 598.5V598.5Q3335.5 595.5 3343 595.5H3343Q3350 595.5 3350 598.5V598.5Z" fill="#c000ff"/>
<path d="M3332.5 613.5V618Q3332.5 628.5 3343 628.5H3343Q3353 628.5 3353 618V613.5Z" fill="#f0f"/>
<path d="M3452 608V608.5" class="U" stroke-width="29.5"/>
<circle cx="3446" cy="623.3" r="6.5" fill="#ff0080"/>
<path d="M3477 602V606" class="U" stroke-width="15"/>
<path d="M2526 756.5V765.5" class="A" stroke-width="23.5"/>
<path d="M2551 760V768" class="A" stroke-width="18"/>
<path d="M2576 752.5V766.5" class="A" stroke-width="21"/>
<path d="M2565.5 755V752.5Q2565.5 742 2576 742H2576Q2587 742 2587 752.5V755Z" fill="#10a858"/>
<path d="M2568 746V746Q2568 742 2576 742H2576Q2584.5 742 2584.5 746V746Z" fill="#c000ff"/>
<path d="M2673 750.5V766.5" class="N" stroke-width="21"/>
<path d="M2694.5 765V768" class="N" stroke-width="18"/>
<path d="M2715.5 766.5V769" class="N" stroke-width="16"/>
<path d="M2800.5 745.5V765" class="V" stroke-width="24.5"/>
<circle cx="2823.2" cy="740" r="7.5" fill="#c000ff"/>
<rect x="2832.5" y="736" width="17" height="12.5" rx="5.5" fill="#c000ff"/>
<path d="M2952 757V765" class="F" stroke-width="17"/>
<path d="M2943.5 756V756Q2943.5 748.5 2952 748.5H2952Q2960.5 748.5 2960.5 756V756Z" fill="#ff0080"/>
<path d="M3043.5 744.5V751.5" class="E" stroke-width="19"/>
<circle cx="3067.7" cy="748.5" r="8.5" fill="#c8c000"/>
<path d="M3090.5 743.5V757" class="E" stroke-width="20"/>
<path d="M3115 744V745.5" class="E" stroke-width="21"/>
<circle cx="3182.9" cy="765.1" r="9.5" fill="#b4b4ff"/>
<circle cx="3202.5" cy="766.1" r="8.5" fill="#b4b4ff"/>
<path d="M3223 740V764.5" class="Y" stroke-width="23.5"/>
<path d="M3211.5 755V764.5Q3211.5 776 3223 776H3223Q3234.5 776 3234.5 764.5V755Z" fill="#ff80c0"/>
<path d="M3211.5 761V764.5Q3211.5 776 3223 776H3223Q3234.5 776 3234.5 764.5V761Z" fill="#b4b4ff"/>
<circle cx="3325.7" cy="747" r="9.5" fill="#ff0040"/>
<path d="M3349.5 745.5V758" class="Z" stroke-width="21"/>
<path d="M3338.5 753.5V758Q3338.5 768.5 3349.5 768.5H3349.5Q3360 768.5 3360 758V753.5Z" fill="#f0f"/>
<path d="M3453.5 730.5V763" class="U" stroke-width="21"/>
<path d="M3443 765V765Q3443 773.5 3453.5 773.5H3453.5Q3464 773.5 3464 765V765Z" fill="#ff0080"/>
<path d="M3478.5 740V745" class="U" stroke-width="20"/>
<path d="M2525 900.5V906.5" class="A" stroke-width="20"/>
<path d="M2550 897V906" class="A" stroke-width="19"/>
<path d="M2570 905.5V907.5" class="A" stroke-width="18"/>
<path d="M2663 889.5V897.5" class="N" stroke-width="16"/>
<path d="M2683 891.5V906.5" class="N" stroke-width="20"/>
<path d="M2673 905.5V906.5Q2673 916.5 2683 916.5H2683Q2693 916.5 2693 906.5V905.5Z" fill="#00f090"/>
<path d="M2703 892.5V894" class="N" stroke-width="15"/>
<path d="M2799.5 903.5V907" class="V" stroke-width="19"/>
<circle cx="2818.2" cy="897.3" r="5.5" fill="#c000ff"/>
<rect x="2827" y="894" width="12.5" height="11.5" rx="5" fill="#c000ff"/>
<circle cx="2929.9" cy="908.9" r="7.5" fill="#ff00dc"/>
<path d="M2945 901V901.5" class="F" stroke-width="9.5"/>
<path d="M2956 899.5V903" class="F" stroke-width="6.5"/>
<path d="M3046 902V908.5" class="E" stroke-width="16"/>
<path d="M3067 905.5V908.5" class="E" stroke-width="16"/>
<path d="M3089 899.5V907.5" class="E" stroke-width="18"/>
<circle cx="3102.8" cy="901.3" r="3" fill="#0078f8"/>
<rect x="3179" y="901.5" width="15" height="14" rx="6.5" fill="#b4b4ff"/>
<circle cx="3203" cy="908.9" r="5.5" fill="#b4b4ff"/>
<path d="M3218 905V909" class="S" stroke-width="15"/>
<path d="M3210.5 904V904Q3210.5 897.5 3218 897.5H3218Q3225.5 897.5 3225.5 904V904Z" fill="#ff0080"/>
<path d="M3320.5 874.5V890.5" class="Z" stroke-width="11.5"/>
<path d="M3315 887.5V890.5Q3315 896.5 3320.5 896.5H3320.5Q3326.5 896.5 3326.5 890.5V887.5Z" fill="#0078f8"/>
<path d="M3342 881V904" class="M" stroke-width="24.5"/>
<path d="M3329.5 891.5V881Q3329.5 869 3342 869H3342Q3354 869 3354 881V891.5Z" fill="#ff0040"/>
<path d="M3454.5 885V906" class="U" stroke-width="22.5"/>
<path d="M3444 910.5V910.5Q3444 917.5 3454.5 917.5H3454.5Q3465 917.5 3465 910.5V910.5Z" fill="#ff0080"/>
<path d="M3476 889V893" class="U" stroke-width="17"/>
<path d="M2527.5 1030.5V1041" class="A" stroke-width="16"/>
<path d="M2546 1027V1042.5" class="A" stroke-width="16"/>
<path d="M2562.5 1035V1041.5" class="A" stroke-width="15"/>
<path d="M2654.5 1025.5V1033.5" class="N" stroke-width="16"/>
<path d="M2674 1022.5V1034" class="N" stroke-width="17"/>
<path d="M2693 1025.5V1040" class="N" stroke-width="18"/>
<path d="M2684 1037.5V1040Q2684 1049 2693 1049H2693Q2702 1049 2702 1040V1037.5Z" fill="#00f090"/>
<path d="M2684.5 1042.5V1042.5Q2684.5 1049 2693 1049H2693Q2701.5 1049 2701.5 1042.5V1042.5Z" fill="#c000ff"/>
<circle cx="2706.5" cy="1030.6" r="3" fill="#f0f"/>
<path d="M2799.5 1036.5V1043" class="V" stroke-width="15"/>
<circle cx="2816.7" cy="1035.6" r="5" fill="#c000ff"/>
<circle cx="2829.7" cy="1035.6" r="5" fill="#c000ff"/>
<circle cx="2941" cy="1041.6" r="6.5" fill="#ff00dc"/>
<path d="M3057 1036V1042" class="E" stroke-width="14"/>
<path d="M3075 1037V1043" class="E" stroke-width="12.5"/>
<path d="M3091.5 1031.5V1040" class="E" stroke-width="15"/>
<circle cx="3190.5" cy="1031.6" r="6" fill="#b4b4ff"/>
<circle cx="3206.5" cy="1034.1" r="6" fill="#b4b4ff"/>
<path d="M3223 1037.5V1040.5" class="S" stroke-width="14"/>
<path d="M3216 1036.5V1036.5Q3216 1030.5 3223 1030.5H3223Q3230 1030.5 3230 1036.5V1036.5Z" fill="#c000ff"/>
<circle cx="3325.2" cy="1037.6" r="7" fill="#ff0040"/>
<rect x="3335.8" y="1027.6" width="30.1" height="10" rx="4.5" fill="#ff0040" transform="rotate(-10 3350.8 1032.6)"/>
<path d="M3443 1014.5V1037.5" class="U" stroke-width="18"/>
<path d="M3434.5 1040.5V1040.5Q3434.5 1046.5 3443 1046.5H3443Q3451.5 1046.5 3451.5 1040.5V1040.5Z" fill="#ff0080"/>
<path d="M3462 1017V1022.5" class="U" stroke-width="12.5"/>
<rect x="3472.5" y="1014" width="14" height="12.5" rx="5.5" fill="#0078f8"/>
<path d="M3494.5 1027V1029.5" class="U" stroke-width="16"/>
<path d="M3486.5 1029V1029.5Q3486.5 1037.5 3494.5 1037.5H3494.5Q3502.5 1037.5 3502.5 1029.5V1029Z" fill="#ff0080"/>
<path d="M409 1119V1189" class="Y" stroke-width="18"/>
<path d="M431.5 1155V1188.5" class="Y" stroke-width="19"/>
<path d="M455 1159V1167.5" class="Y" stroke-width="16"/>
<path d="M447.5 1168V1168Q447.5 1175.5 455 1175.5H455Q463 1175.5 463 1168V1168Z" fill="#f0f"/>
<rect x="542.4" y="1107.9" width="16" height="52.6" rx="7.2" fill="#0ff" transform="rotate(-8 550.4 1134.2)"/>
<rect x="542.4" y="1148" width="16" height="52.6" rx="7.2" fill="#0ff" transform="rotate(8 550.4 1174.3)"/>
<rect x="571" y="1111.4" width="17" height="52.6" rx="7.7" fill="#0ff" transform="rotate(20 579.5 1137.7)"/>
<rect x="577" y="1150" width="17" height="52.6" rx="7.7" fill="#0ff" transform="rotate(-22 585.5 1176.3)"/>
<circle cx="584.5" cy="1120.2" r="7.5" fill="#0078f8"/>
<rect x="586.5" y="1114.6" width="18" height="36.1" rx="8.1" fill="#9a4242" transform="rotate(15 595.5 1132.7)"/>
<path d="M614.5 1151.5V1190.5" class="C" stroke-width="18"/>
<path d="M635.5 1147V1156" class="C" stroke-width="14"/>
<path d="M723.5 1131V1191" class="M" stroke-width="17"/>
<path d="M741 1151V1192" class="M" stroke-width="17"/>
<path d="M732.5 1149V1149Q732.5 1142.5 741 1142.5H741Q749 1142.5 749 1149V1149Z" fill="#0f0"/>
<path d="M734 1146V1146Q734 1142.5 741 1142.5H741Q747.5 1142.5 747.5 1146V1146Z" fill="#f00"/>
<path d="M763.5 1140.5V1150" class="M" stroke-width="20"/>
<circle cx="780.9" cy="1157.7" r="4.5" fill="#f0f"/>
<path d="M876 1107V1155.5" class="G" stroke-width="19"/>
<path d="M896 1112V1188.5" class="G" stroke-width="19"/>
<path d="M886.5 1173V1188.5Q886.5 1198 896 1198H896Q905.5 1198 905.5 1188.5V1173Z" fill="#ff8000"/>
<path d="M887 1190.5V1190.5Q887 1198 896 1198H896Q905.5 1198 905.5 1190.5V1190.5Z" fill="#00f090"/>
<path d="M916 1096V1121.5" class="G" stroke-width="17"/>
<path d="M907.5 1102.5V1096Q907.5 1087.5 916 1087.5H916Q924.5 1087.5 924.5 1096V1102.5Z" fill="#f00"/>
<path d="M934.5 1098V1127" class="G" stroke-width="16"/>
<path d="M926.5 1102.5V1098Q926.5 1090 934.5 1090H934.5Q942.5 1090 942.5 1098V1102.5Z" fill="#f00"/>
<path d="M926.5 1125V1127Q926.5 1135 934.5 1135H934.5Q942.5 1135 942.5 1127V1125Z" fill="#9a4242"/>
<path d="M1022.5 1147.5V1173" class="R" stroke-width="19"/>
<path d="M1044 1150V1186" class="R" stroke-width="19"/>
<path d="M1034.5 1178V1186Q1034.5 1195.5 1044 1195.5H1044Q1053.5 1195.5 1053.5 1186V1178Z" fill="#f0f"/>
<circle cx="1058.9" cy="1145.2" r="3.5" fill="#ffb400"/>
<path d="M1072.5 1146V1162" class="R" stroke-width="17"/>
<path d="M1090 1143V1162.5" class="R" stroke-width="16"/>
<path d="M1109 1143.5V1149" class="R" stroke-width="17"/>
<path d="M1177.5 1150V1180.5" class="L" stroke-width="19"/>
<path d="M1199 1137V1188.5" class="L" stroke-width="19"/>
<path d="M1189.5 1147.5V1137Q1189.5 1127.5 1199 1127.5H1199Q1209 1127.5 1209 1137V1147.5Z" fill="#00f090"/>
<path d="M1190 1135V1135Q1190 1127.5 1199 1127.5H1199Q1208.5 1127.5 1208.5 1135V1135Z" fill="#ff80c0"/>
<path d="M1189.5 1188V1188.5Q1189.5 1198 1199 1198H1199Q1209 1198 1209 1188.5V1188Z" fill="#0f0"/>
<rect x="1220.8" y="1144" width="17" height="42.6" rx="7.7" fill="#9f0" transform="rotate(30 1229.3 1165.3)"/>
<circle cx="1220.8" cy="1184.3" r="5" fill="#f0f"/>
<path d="M1250.5 1143V1167.5" class="L" stroke-width="16"/>
<path d="M1242.5 1160V1167.5Q1242.5 1175.5 1250.5 1175.5H1250.5Q1258.5 1175.5 1258.5 1167.5V1160Z" fill="#90b06c"/>
<path d="M1324.5 1169.5V1189" class="B" stroke-width="18"/>
<path d="M1343.5 1170V1190.5" class="B" stroke-width="15"/>
<path d="M1361 1158V1167.5" class="B" stroke-width="16"/>
<circle cx="1376.1" cy="1170.3" r="4.5" fill="#9a4242"/>
<path d="M402.5 1267V1312.5" class="Y" stroke-width="21"/>
<path d="M430 1291V1313" class="Y" stroke-width="23.5"/>
<path d="M455 1289V1296" class="Y" stroke-width="17"/>
<path d="M446.5 1295.5V1296Q446.5 1304.5 455 1304.5H455Q463.5 1304.5 463.5 1296V1295.5Z" fill="#f0f"/>
<path d="M553 1267V1311.5" class="C" stroke-width="23.5"/>
<path d="M578 1271V1314" class="C" stroke-width="21"/>
<path d="M603 1291V1314" class="C" stroke-width="21"/>
<path d="M625.5 1291V1295" class="C" stroke-width="19"/>
<path d="M717 1281V1311.5" class="M" stroke-width="23.5"/>
<path d="M745 1281V1311.5" class="M" stroke-width="23.5"/>
<path d="M768.5 1277V1287.5" class="M" stroke-width="21"/>
<circle cx="786.9" cy="1296.5" r="4.5" fill="#fff"/>
<path d="M866 1278V1314.5" class="G" stroke-width="20"/>
<path d="M893.5 1278V1310.5" class="G" stroke-width="20"/>
<path d="M885.5 1316.5V1316.5Q885.5 1320.5 893.5 1320.5H893.5Q901.5 1320.5 901.5 1316.5V1316.5Z" fill="#f0f"/>
<path d="M918.5 1276.5V1293" class="G" stroke-width="20"/>
<path d="M908.5 1278V1276.5Q908.5 1266.5 918.5 1266.5H918.5Q928.5 1266.5 928.5 1276.5V1278Z" fill="#f00"/>
<path d="M941 1276.5V1293" class="G" stroke-width="20"/>
<path d="M931 1278V1276.5Q931 1266.5 941 1266.5H941Q951.5 1266.5 951.5 1276.5V1278Z" fill="#f00"/>
<path d="M931 1293V1293Q931 1303 941 1303H941Q951.5 1303 951.5 1293V1293Z" fill="#9a4242"/>
<path d="M1019 1278V1309" class="R" stroke-width="23.5"/>
<path d="M1044 1275.5V1312" class="R" stroke-width="22.5"/>
<path d="M1034.5 1269.5V1269.5Q1034.5 1264.5 1044 1264.5H1044Q1053 1264.5 1053 1269.5V1269.5Z" fill="#ff0"/>
<path d="M1033 1308V1312Q1033 1323 1044 1323H1044Q1055 1323 1055 1312V1308Z" fill="#f0f"/>
<path d="M1033.5 1315.5V1315.5Q1033.5 1323 1044 1323H1044Q1054.5 1323 1054.5 1315.5V1315.5Z" fill="#c000ff"/>
<path d="M1069 1279V1296" class="R" stroke-width="19"/>
<path d="M1091.5 1286V1297.5" class="R" stroke-width="16"/>
<path d="M1114 1292.5V1293.5" class="R" stroke-width="19"/>
<path d="M1169 1278.5V1302.5" class="L" stroke-width="21"/>
<path d="M1199 1269.5V1301.5" class="L" stroke-width="23.5"/>
<path d="M1187.5 1273V1269.5Q1187.5 1258 1199 1258H1199Q1211 1258 1211 1269.5V1273Z" fill="#00f090"/>
<path d="M1187.5 1268V1268Q1187.5 1258 1199 1258H1199Q1211 1258 1211 1268V1268Z" fill="#ff80c0"/>
<path d="M1229.5 1275.5V1303" class="L" stroke-width="20"/>
<path d="M1220.5 1308V1308Q1220.5 1313 1229.5 1313H1229.5Q1238 1313 1238 1308V1308Z" fill="#f0f"/>
<path d="M1254.5 1276.5V1304.5" class="K" stroke-width="22.5"/>
<path d="M1243 1290.5V1276.5Q1243 1265.5 1254.5 1265.5H1254.5Q1265.5 1265.5 1265.5 1276.5V1290.5Z" fill="#9f0"/>
<path d="M1243 1300.5V1304.5Q1243 1315.5 1254.5 1315.5H1254.5Q1265.5 1315.5 1265.5 1304.5V1300.5Z" fill="#9a4242"/>
<path d="M1309.5 1282V1310" class="B" stroke-width="21"/>
<path d="M1333 1274V1278.5" class="B" stroke-width="19"/>
<path d="M1324.5 1283V1283Q1324.5 1288 1333 1288H1333Q1341.5 1288 1341.5 1283V1283Z" fill="#f0f"/>
<circle cx="1356" cy="1289" r="6.5" fill="#9a4242"/>
<path d="M1379.5 1252V1310" class="B" stroke-width="21"/>
<path d="M1369 1260.5V1252Q1369 1241.5 1379.5 1241.5H1379.5Q1390 1241.5 1390 1252V1260.5Z" fill="#0078f8"/>
<circle cx="1398.1" cy="1289" r="5" fill="#9a4242"/>
<path d="M416 1416.5V1445" class="Y" stroke-width="17"/>
<path d="M435 1419V1430" class="Y" stroke-width="11.5"/>
<path d="M429.5 1427V1430Q429.5 1436 435 1436H435Q441 1436 441 1430V1427Z" fill="#f0f"/>
<path d="M563 1399V1432.5" class="C" stroke-width="21"/>
<path d="M584 1398V1444" class="C" stroke-width="19"/>
<path d="M604.5 1419.5V1440.5" class="C" stroke-width="19"/>
<path d="M737 1408V1445" class="M" stroke-width="17"/>
<path d="M755 1412.5V1425" class="M" stroke-width="14"/>
<path d="M748 1425V1425Q748 1432 755 1432H755Q761.5 1432 761.5 1425V1425Z" fill="#ff0"/>
<path d="M873.5 1398.5V1444.5" class="G" stroke-width="18"/>
<path d="M895 1399.5V1444" class="G" stroke-width="19"/>
<path d="M885.5 1426V1444Q885.5 1453.5 895 1453.5H895Q904.5 1453.5 904.5 1444V1426Z" fill="#ff0"/>
<path d="M913.5 1393.5V1400.5" class="Y" stroke-width="16"/>
<path d="M905.5 1396.5V1393.5Q905.5 1385.5 913.5 1385.5H913.5Q921.5 1385.5 921.5 1393.5V1396.5Z" fill="#f00"/>
<path d="M906.5 1403V1403Q906.5 1408 913.5 1408H913.5Q921 1408 921 1403V1403Z" fill="#0f0"/>
<path d="M932 1402V1424.5" class="T" stroke-width="15"/>
<path d="M1024 1408.5V1434.5" class="R" stroke-width="18"/>
<path d="M1015 1431V1434.5Q1015 1443.5 1024 1443.5H1024Q1033 1443.5 1033 1434.5V1431Z" fill="#c8c000"/>
<path d="M1046.5 1415.5V1442.5" class="R" stroke-width="19"/>
<path d="M1037 1436V1442.5Q1037 1452 1046.5 1452H1046.5Q1056 1452 1056 1442.5V1436Z" fill="#f0f"/>
<circle cx="1055.4" cy="1410.7" r="4" fill="#ff8000"/>
<circle cx="1075.5" cy="1423.3" r="8" fill="#f00"/>
<circle cx="1095.5" cy="1421.8" r="7.5" fill="#f00"/>
<path d="M1171.5 1429.5V1443.5" class="L" stroke-width="17"/>
<path d="M1191.5 1418V1443.5" class="L" stroke-width="17"/>
<path d="M1183.5 1417V1417Q1183.5 1409.5 1191.5 1409.5H1191.5Q1200 1409.5 1200 1417V1417Z" fill="#ff80c0"/>
<path d="M1214 1420V1442" class="R" stroke-width="18"/>
<path d="M1205 1421V1420Q1205 1410.5 1214 1410.5H1214Q1223.5 1410.5 1223.5 1420V1421Z" fill="#9f0"/>
<path d="M1205 1436V1442Q1205 1451 1214 1451H1214Q1223.5 1451 1223.5 1442V1436Z" fill="#9f0"/>
<path d="M1206 1446V1446Q1206 1451 1214 1451H1214Q1222.5 1451 1222.5 1446V1446Z" fill="#f0f"/>
<path d="M1237 1413.5V1433" class="L" stroke-width="16"/>
<path d="M1229 1428.5V1433Q1229 1441 1237 1441H1237Q1245 1441 1245 1433V1428.5Z" fill="#90b06c"/>
<path d="M1302 1436V1444" class="B" stroke-width="16"/>
<path d="M1323 1433.5V1445.5" class="B" stroke-width="16"/>
<path d="M1343.5 1407.5V1445.5" class="B" stroke-width="16"/>
<path d="M1335.5 1411.5V1407.5Q1335.5 1399.5 1343.5 1399.5H1343.5Q1351.5 1399.5 1351.5 1407.5V1411.5Z" fill="#0078f8"/>
<circle cx="1358" cy="1430.8" r="3.5" fill="#9a4242"/>
<path d="M1373 1415.5V1444.5" class="B" stroke-width="15"/>
<path d="M1365.5 1423.5V1415.5Q1365.5 1408 1373 1408H1373Q1380.5 1408 1380.5 1415.5V1423.5Z" fill="#c000ff"/>
<path d="M409 1558.5V1572" class="Y" stroke-width="23.5"/>
<path d="M432.5 1571V1574.5" class="Y" stroke-width="18"/>
<circle cx="431.7" cy="1571.1" r="4.5" fill="#f0f"/>
<path d="M550.5 1526.5V1569.5" class="C" stroke-width="21"/>
<path d="M576.5 1531V1572.5" class="C" stroke-width="22.5"/>
<path d="M603 1547.5V1562.5" class="C" stroke-width="27.5"/>
<path d="M628 1546.5V1549" class="C" stroke-width="19"/>
<path d="M618.5 1551V1551Q618.5 1558.5 628 1558.5H628Q637.5 1558.5 637.5 1551V1551Z" fill="#f0f"/>
<path d="M726 1541V1572" class="M" stroke-width="20"/>
<path d="M750 1541.5V1550.5" class="M" stroke-width="21"/>
<path d="M870 1528.5V1560" class="G" stroke-width="20"/>
<path d="M860 1558.5V1560Q860 1570 870 1570H870Q880 1570 880 1560V1558.5Z" fill="#ff8000"/>
<path d="M860.5 1563.5V1563.5Q860.5 1570 870 1570H870Q879.5 1570 879.5 1563.5V1563.5Z" fill="#ff0"/>
<path d="M896 1531.5V1573" class="G" stroke-width="21"/>
<path d="M885.5 1556V1573Q885.5 1583.5 896 1583.5H896Q906.5 1583.5 906.5 1573V1556Z" fill="#ff0"/>
<path d="M920 1529.5V1534" class="R" stroke-width="19"/>
<path d="M910.5 1533.5V1534Q910.5 1543.5 920 1543.5H920Q929.5 1543.5 929.5 1534V1533.5Z" fill="#0f0"/>
<path d="M1024 1536V1572.5" class="R" stroke-width="22.5"/>
<path d="M1014 1531V1531Q1014 1525 1024 1525H1024Q1034 1525 1034 1531V1531Z" fill="#ffb400"/>
<path d="M1012.5 1563.5V1572.5Q1012.5 1583.5 1024 1583.5H1024Q1035 1583.5 1035 1572.5V1563.5Z" fill="#f0f"/>
<path d="M1013.5 1576V1576Q1013.5 1583.5 1024 1583.5H1024Q1034.5 1583.5 1034.5 1576V1576Z" fill="#c000ff"/>
<path d="M1047.5 1540.5V1562.5" class="U" stroke-width="19"/>
<path d="M1038 1548.5V1540.5Q1038 1531 1047.5 1531H1047.5Q1057 1531 1057 1540.5V1548.5Z" fill="#f00"/>
<path d="M1040 1568.5V1568.5Q1040 1572 1047.5 1572H1047.5Q1055 1572 1055 1568.5V1568.5Z" fill="#f0f"/>
<rect x="1057.5" y="1531" width="23.5" height="22.5" rx="10" fill="#f00"/>
<path d="M1154 1555.5V1569.5" class="L" stroke-width="21"/>
<path d="M1181.5 1545V1567" class="L" stroke-width="23.5"/>
<path d="M1170 1551V1545Q1170 1533.5 1181.5 1533.5H1181.5Q1193.5 1533.5 1193.5 1545V1551Z" fill="#00f090"/>
<path d="M1170 1546V1545Q1170 1533.5 1181.5 1533.5H1181.5Q1193.5 1533.5 1193.5 1545V1546Z" fill="#ff80c0"/>
<path d="M1209 1549V1568" class="L" stroke-width="21"/>
<path d="M1199.5 1572V1572Q1199.5 1578.5 1209 1578.5H1209Q1219 1578.5 1219 1572V1572Z" fill="#f0f"/>
<path d="M1233 1551.5V1563" class="L" stroke-width="21"/>
<path d="M1222 1561V1563Q1222 1573.5 1233 1573.5H1233Q1243.5 1573.5 1243.5 1563V1561Z" fill="#90b06c"/>
<path d="M1288 1559.5V1572.5" class="B" stroke-width="19"/>
<path d="M1313 1563V1572.5" class="B" stroke-width="19"/>
<path d="M1338 1565V1573" class="B" stroke-width="18"/>
<path d="M1364.5 1535V1572" class="B" stroke-width="20"/>
<path d="M1354.5 1538.5V1535Q1354.5 1525 1364.5 1525H1364.5Q1374.5 1525 1374.5 1535V1538.5Z" fill="#0078f8"/>
<rect x="1378" y="1553.5" width="12.5" height="10" rx="4.5" fill="#9a4242"/>
<path d="M1462.5 1146V1174.5" class="O" stroke-width="21"/>
<path d="M1486 1161V1189.5" class="O" stroke-width="17"/>
<path d="M1504 1146.5V1160.5" class="O" stroke-width="15"/>
<path d="M1497 1160V1160.5Q1497 1168 1504 1168H1504Q1511.5 1168 1511.5 1160.5V1160Z" fill="#f0f"/>
<path d="M1574.5 1123V1146.5" class="D" stroke-width="16"/>
<path d="M1593 1115V1163.5" class="D" stroke-width="18"/>
<path d="M1584 1126V1115Q1584 1106 1593 1106H1593Q1602 1106 1602 1115V1126Z" fill="#ff8000"/>
<path d="M1613 1116.5V1163.5" class="D" stroke-width="18"/>
<path d="M1604 1122.5V1116.5Q1604 1107.5 1613 1107.5H1613Q1622 1107.5 1622 1116.5V1122.5Z" fill="#0078f8"/>
<rect x="1638.5" y="1081.3" width="14" height="47.6" rx="6.3" fill="#ff0" transform="rotate(28 1645.5 1105.1)"/>
<rect x="1627.5" y="1125.2" width="14" height="45.1" rx="6.3" fill="#ff0" transform="rotate(-5 1634.5 1147.7)"/>
<rect x="1637.5" y="1158.7" width="14" height="35.1" rx="6.3" fill="#ff0" transform="rotate(-30 1644.5 1176.3)"/>
<circle cx="1651.5" cy="1187.8" r="8" fill="#f00"/>
<circle cx="1632" cy="1133.7" r="4.5" fill="#10a858"/>
<path d="M1720.5 1159V1188.5" class="K" stroke-width="16"/>
<path d="M1712.5 1171.5V1159Q1712.5 1151 1720.5 1151H1720.5Q1728.5 1151 1728.5 1159V1171.5Z" fill="#0078f8"/>
<path d="M1712.5 1160V1159Q1712.5 1151 1720.5 1151H1720.5Q1728.5 1151 1728.5 1159V1160Z" fill="#90b06c"/>
<path d="M1741.5 1158.5V1180.5" class="K" stroke-width="15"/>
<path d="M1758 1165.5V1190" class="K" stroke-width="16"/>
<path d="M1750.5 1169.5V1165.5Q1750.5 1157.5 1758 1157.5H1758Q1766 1157.5 1766 1165.5V1169.5Z" fill="#ff8000"/>
<path d="M1777 1158V1161.5" class="K" stroke-width="16"/>
<path d="M1858.5 1145V1187.5" class="P" stroke-width="18"/>
<path d="M1849.5 1180.5V1187.5Q1849.5 1196.5 1858.5 1196.5H1858.5Q1867.5 1196.5 1867.5 1187.5V1180.5Z" fill="#ff0080"/>
<path d="M1877 1139.5V1175.5" class="P" stroke-width="19"/>
<path d="M1867.5 1137.5V1137.5Q1867.5 1130 1877 1130H1877Q1886.5 1130 1886.5 1137.5V1137.5Z" fill="#f00"/>
<path d="M1896 1138V1157.5" class="P" stroke-width="16"/>
<path d="M1888.5 1136V1136Q1888.5 1130 1896 1130H1896Q1903.5 1130 1903.5 1136V1136Z" fill="#f00"/>
<circle cx="1911" cy="1150.2" r="4" fill="#ff0080"/>
<path d="M1983.5 1161.5V1187.5" class="T" stroke-width="20"/>
<path d="M2002.5 1157.5V1188" class="T" stroke-width="17"/>
<path d="M1994 1160V1157.5Q1994 1149 2002.5 1149H2002.5Q2011 1149 2011 1157.5V1160Z" fill="#ff8000"/>
<path d="M2021 1155V1158" class="T" stroke-width="15"/>
<path d="M2014.5 1161V1161Q2014.5 1165.5 2021 1165.5H2021Q2028 1165.5 2028 1161V1161Z" fill="#ff0080"/>
<path d="M2036.5 1154V1156.5" class="T" stroke-width="12.5"/>
<path d="M2050 1155.5V1157.5" class="T" stroke-width="10.5"/>
<path d="M2140 1165V1187" class="W" stroke-width="19"/>
<path d="M2130.5 1168V1165Q2130.5 1155 2140 1155H2140Q2149.5 1155 2149.5 1165V1168Z" fill="#f0f"/>
<circle cx="2154" cy="1165.3" r="4.5" fill="#fff"/>
<path d="M2267.5 1163V1172.5" class="U" stroke-width="20"/>
<path d="M2288 1162.5V1188.5" class="U" stroke-width="19"/>
<path d="M2278 1185.5V1188.5Q2278 1198 2288 1198H2288Q2297.5 1198 2297.5 1188.5V1185.5Z" fill="#f0f"/>
<path d="M2393 1161.5V1186" class="H" stroke-width="20"/>
<path d="M2413 1150V1178" class="H" stroke-width="19"/>
<path d="M2403.5 1159V1150Q2403.5 1140 2413 1140H2413Q2422.5 1140 2422.5 1150V1159Z" fill="#0ff"/>
<path d="M2430.5 1163V1168.5" class="K" stroke-width="16"/>
<path d="M2422.5 1162.5V1162.5Q2422.5 1155 2430.5 1155H2430.5Q2438.5 1155 2438.5 1162.5V1162.5Z" fill="#ff0080"/>
<path d="M1452.5 1282.5V1312" class="O" stroke-width="22.5"/>
<path d="M1480 1293.5V1312.5" class="O" stroke-width="21"/>
<path d="M1503.5 1286V1294" class="O" stroke-width="21"/>
<path d="M1573 1262V1275" class="D" stroke-width="21"/>
<path d="M1596.5 1251V1283" class="D" stroke-width="23.5"/>
<path d="M1584.5 1259.5V1251Q1584.5 1239.5 1596.5 1239.5H1596.5Q1608 1239.5 1608 1251V1259.5Z" fill="#ff8000"/>
<path d="M1588 1243V1243Q1588 1239.5 1596.5 1239.5H1596.5Q1604.5 1239.5 1604.5 1243V1243Z" fill="#b4b4ff"/>
<path d="M1623 1252V1282.5" class="D" stroke-width="21"/>
<path d="M1612.5 1253V1252Q1612.5 1241.5 1623 1241.5H1623Q1633.5 1241.5 1633.5 1252V1253Z" fill="#0078f8"/>
<path d="M1649.5 1243V1311.5" class="Y" stroke-width="23.5"/>
<path d="M1638 1305.5V1311.5Q1638 1323 1649.5 1323H1649.5Q1661 1323 1661 1311.5V1305.5Z" fill="#f00"/>
<circle cx="1648" cy="1273" r="5" fill="#10a858"/>
<path d="M1711.5 1296V1310" class="K" stroke-width="21"/>
<path d="M1736.5 1297.5V1313.5" class="K" stroke-width="19"/>
<path d="M1759.5 1298V1313" class="K" stroke-width="20"/>
<path d="M1749.5 1299.5V1298Q1749.5 1288 1759.5 1288H1759.5Q1770 1288 1770 1298V1299.5Z" fill="#ff8000"/>
<circle cx="1784.3" cy="1295.5" r="8.5" fill="#90b06c"/>
<path d="M1851 1279V1307" class="P" stroke-width="22.5"/>
<path d="M1880 1278.5V1302.5" class="P" stroke-width="21"/>
<path d="M1870 1274.5V1274.5Q1870 1268 1880 1268H1880Q1890 1268 1890 1274.5V1274.5Z" fill="#f00"/>
<path d="M1905 1279.5V1293" class="P" stroke-width="20"/>
<path d="M1896 1275.5V1275.5Q1896 1269.5 1905 1269.5H1905Q1914 1269.5 1914 1275.5V1275.5Z" fill="#f00"/>
<path d="M1973.5 1298V1310.5" class="T" stroke-width="20"/>
<path d="M1996 1278V1313" class="O" stroke-width="23.5"/>
<path d="M1985 1275.5V1275.5Q1985 1266.5 1996 1266.5H1996Q2007.5 1266.5 2007.5 1275.5V1275.5Z" fill="#f00"/>
<path d="M1986.5 1271.5V1271.5Q1986.5 1266.5 1996 1266.5H1996Q2006 1266.5 2006 1271.5V1271.5Z" fill="#00f090"/>
<path d="M1984.5 1296.5V1313Q1984.5 1324.5 1996 1324.5H1996Q2008 1324.5 2008 1313V1296.5Z" fill="#00f090"/>
<path d="M2023.5 1291.5V1297" class="T" stroke-width="17"/>
<path d="M2015.5 1299.5V1299.5Q2015.5 1305.5 2023.5 1305.5H2023.5Q2032 1305.5 2032 1299.5V1299.5Z" fill="#ff0040"/>
<path d="M2042.5 1295V1298.5" class="T" stroke-width="14"/>
<path d="M2057.5 1295.5V1299" class="T" stroke-width="15"/>
<path d="M2135 1294V1312" class="W" stroke-width="22.5"/>
<path d="M2124 1296.5V1294Q2124 1283 2135 1283H2135Q2146 1283 2146 1294V1296.5Z" fill="#f0f"/>
<path d="M2155.5 1296.5V1302" class="W" stroke-width="11.5"/>
<path d="M2149.5 1296.5V1296.5Q2149.5 1290.5 2155.5 1290.5H2155.5Q2161.5 1290.5 2161.5 1296.5V1296.5Z" fill="#ff0"/>
<path d="M2262.5 1293.5V1306" class="U" stroke-width="21"/>
<path d="M2288 1293.5V1312.5" class="U" stroke-width="21"/>
<path d="M2277.5 1314.5V1314.5Q2277.5 1323 2288 1323H2288Q2298 1323 2298 1314.5V1314.5Z" fill="#f0f"/>
<path d="M2381 1301V1312.5" class="H" stroke-width="21"/>
<path d="M2408 1284.5V1312.5" class="H" stroke-width="21"/>
<path d="M2397.5 1295.5V1284.5Q2397.5 1274 2408 1274H2408Q2418.5 1274 2418.5 1284.5V1295.5Z" fill="#0ff"/>
<rect x="2423" y="1290.5" width="20" height="20" rx="9" fill="#90b06c"/>
<path d="M2424.5 1294.5V1294.5Q2424.5 1290.5 2432 1290.5H2434Q2441.5 1290.5 2441.5 1294.5V1294.5Z" fill="#ff0080"/>
<path d="M1446 1418V1444" class="O" stroke-width="19"/>
<path d="M1470 1419V1438.5" class="O" stroke-width="26.5"/>
<circle cx="1472.6" cy="1418.3" r="7" fill="#f0f"/>
<circle cx="1464.1" cy="1428.3" r="4" fill="#000"/>
<path d="M1495 1419V1428.5" class="K" stroke-width="15"/>
<path d="M1488 1423.5V1419Q1488 1411.5 1495 1411.5H1495Q1502.5 1411.5 1502.5 1419V1423.5Z" fill="#ff8000"/>
<path d="M1575.5 1415.5V1444" class="D" stroke-width="19"/>
<path d="M1596.5 1425.5V1445" class="D" stroke-width="17"/>
<path d="M1616.5 1417.5V1432" class="D" stroke-width="18"/>
<path d="M1634.5 1402V1431" class="Y" stroke-width="19"/>
<path d="M1625 1403V1402Q1625 1392 1634.5 1392H1634.5Q1644 1392 1644 1402V1403Z" fill="#f0f"/>
<path d="M1625 1423.5V1431Q1625 1441 1634.5 1441H1634.5Q1644 1441 1644 1431V1423.5Z" fill="#10a858"/>
<path d="M1625 1431V1431Q1625 1441 1634.5 1441H1634.5Q1644 1441 1644 1431V1431Z" fill="#f0f"/>
<path d="M1711.5 1429V1444.5" class="K" stroke-width="18"/>
<circle cx="1731.7" cy="1426.8" r="5.5" fill="#90b06c"/>
<circle cx="1744.7" cy="1428.3" r="6" fill="#90b06c"/>
<path d="M1762 1430.5V1444" class="K" stroke-width="19"/>
<path d="M1753 1428.5V1428.5Q1753 1421 1762 1421H1762Q1771.5 1421 1771.5 1428.5V1428.5Z" fill="#f00"/>
<path d="M1845 1417V1441.5" class="P" stroke-width="20"/>
<path d="M1870 1435V1437.5" class="P" stroke-width="26.5"/>
<circle cx="1865.9" cy="1426.8" r="4.5" fill="#f00"/>
<circle cx="1896" cy="1436.8" r="3.5" fill="#00f090"/>
<path d="M1976 1427.5V1440" class="T" stroke-width="23.5"/>
<path d="M1964.5 1433.5V1427.5Q1964.5 1416 1976 1416H1976Q1988 1416 1988 1427.5V1433.5Z" fill="#ff8000"/>
<path d="M1967.5 1420V1420Q1967.5 1416 1976 1416H1976Q1985 1416 1985 1420V1420Z" fill="#00f090"/>
<circle cx="2003.7" cy="1426.8" r="7.5" fill="#00f090"/>
<path d="M2021 1431.5V1442.5" class="M" stroke-width="21"/>
<path d="M2010.5 1436V1431.5Q2010.5 1421 2021 1421H2021Q2032 1421 2032 1431.5V1436Z" fill="#00f090"/>
<circle cx="2038.8" cy="1419.3" r="3.5" fill="#00f090"/>
<path d="M2130 1432.5V1444.5" class="W" stroke-width="18"/>
<path d="M2122 1428.5V1428.5Q2122 1423.5 2130 1423.5H2130Q2138 1423.5 2138 1428.5V1428.5Z" fill="#0078f8"/>
<path d="M2146.5 1418V1424.5" class="M" stroke-width="12.5"/>
<path d="M2255.5 1414.5V1441.5" class="U" stroke-width="19"/>
<path d="M2246.5 1411.5V1411.5Q2246.5 1404.5 2255.5 1404.5H2255.5Q2265 1404.5 2265 1411.5V1411.5Z" fill="#ff0080"/>
<path d="M2246 1433.5V1441.5Q2246 1451 2255.5 1451H2255.5Q2265.5 1451 2265.5 1441.5V1433.5Z" fill="#ff0"/>
<path d="M2276 1415.5V1433.5" class="B" stroke-width="19"/>
<path d="M2266 1423.5V1415.5Q2266 1405.5 2276 1405.5H2276Q2285.5 1405.5 2285.5 1415.5V1423.5Z" fill="#0078f8"/>
<path d="M2266.5 1436V1436Q2266.5 1443.5 2276 1443.5H2276Q2285 1443.5 2285 1436V1436Z" fill="#ff0"/>
<circle cx="2289.3" cy="1413.2" r="2.5" fill="#0078f8"/>
<rect x="2376" y="1378.2" width="12" height="18" rx="5.4" fill="#0ff" transform="rotate(-25 2382 1387.2)"/>
<path d="M2362 1416V1417.5" class="H" stroke-width="18"/>
<path d="M2382 1407V1415.5" class="H" stroke-width="18"/>
<path d="M2403 1405V1409" class="K" stroke-width="14"/>
<path d="M2419.5 1404.5V1428" class="G" stroke-width="16"/>
<path d="M2411.5 1403V1403Q2411.5 1396.5 2419.5 1396.5H2419.5Q2427.5 1396.5 2427.5 1403V1403Z" fill="#ff0080"/>
<path d="M2411.5 1421V1428Q2411.5 1436 2419.5 1436H2419.5Q2427.5 1436 2427.5 1428V1421Z" fill="#ff0"/>
<path d="M2443 1404.5V1442.5" class="Y" stroke-width="19"/>
<path d="M2433.5 1403V1403Q2433.5 1394.5 2443 1394.5H2443Q2452.5 1394.5 2452.5 1403V1403Z" fill="#ff0080"/>
<path d="M2433.5 1436V1442.5Q2433.5 1452 2443 1452H2443Q2452.5 1452 2452.5 1442.5V1436Z" fill="#f00"/>
<path d="M1435 1550.5V1571.5" class="O" stroke-width="24.5"/>
<path d="M1462.5 1559.5V1572.5" class="O" stroke-width="22.5"/>
<path d="M1491.5 1557.5V1560.5" class="O" stroke-width="21"/>
<path d="M1481 1560V1560.5Q1481 1571 1491.5 1571H1491.5Q1502.5 1571 1502.5 1560.5V1560Z" fill="#90b06c"/>
<path d="M1568 1563.5V1573.5" class="D" stroke-width="20"/>
<path d="M1593 1549V1570.5" class="D" stroke-width="21"/>
<path d="M1582.5 1547V1547Q1582.5 1538.5 1593 1538.5H1593Q1603.5 1538.5 1603.5 1547V1547Z" fill="#0078f8"/>
<path d="M1582.5 1571V1571Q1582.5 1581 1593 1581H1593Q1603.5 1581 1603.5 1571V1571Z" fill="#00f090"/>
<path d="M1619 1532.5V1559.5" class="Y" stroke-width="23.5"/>
<path d="M1607.5 1551V1559.5Q1607.5 1571 1619 1571H1619Q1630.5 1571 1630.5 1559.5V1551Z" fill="#10a858"/>
<path d="M1607.5 1558.5V1559.5Q1607.5 1571 1619 1571H1619Q1630.5 1571 1630.5 1559.5V1558.5Z" fill="#f0f"/>
<path d="M1701.5 1555.5V1573" class="K" stroke-width="21"/>
<path d="M1724.5 1557.5V1562" class="K" stroke-width="18"/>
<path d="M1716.5 1566V1566Q1716.5 1571 1724.5 1571H1724.5Q1732.5 1571 1732.5 1566V1566Z" fill="#ff0"/>
<path d="M1746.5 1561V1573.5" class="K" stroke-width="20"/>
<path d="M1738 1556V1556Q1738 1551 1746.5 1551H1746.5Q1755.5 1551 1755.5 1556V1556Z" fill="#ff0080"/>
<circle cx="1764.2" cy="1550" r="3.5" fill="#90b06c"/>
<path d="M1842 1517.5V1545.5" class="P" stroke-width="21"/>
<path d="M1868.5 1520V1572" class="P" stroke-width="23.5"/>
<path d="M1857 1548.5V1572Q1857 1583.5 1868.5 1583.5H1868.5Q1880 1583.5 1880 1572V1548.5Z" fill="#0078f8"/>
<path d="M1857 1558.5V1572Q1857 1583.5 1868.5 1583.5H1868.5Q1880 1583.5 1880 1572V1558.5Z" fill="#ff0080"/>
<path d="M1857 1563.5V1572Q1857 1583.5 1868.5 1583.5H1868.5Q1880 1583.5 1880 1572V1563.5Z" fill="#f00"/>
<circle cx="1892" cy="1520" r="4" fill="#ff0040"/>
<path d="M1962 1539.5V1572.5" class="T" stroke-width="22.5"/>
<path d="M1951 1556V1539.5Q1951 1528.5 1962 1528.5H1962Q1973.5 1528.5 1973.5 1539.5V1556Z" fill="#ff8000"/>
<path d="M1951.5 1537V1537Q1951.5 1528.5 1962 1528.5H1962Q1973 1528.5 1973 1537V1537Z" fill="#ff0080"/>
<path d="M1953 1533.5V1533.5Q1953 1528.5 1962 1528.5H1962Q1971.5 1528.5 1971.5 1533.5V1533.5Z" fill="#00f090"/>
<path d="M1990 1555V1572" class="T" stroke-width="20"/>
<path d="M2014.5 1554V1554.5" class="H" stroke-width="21"/>
<path d="M2004 1553.5V1553.5Q2004 1543.5 2014.5 1543.5H2014.5Q2025.5 1543.5 2025.5 1553.5V1553.5Z" fill="#00f090"/>
<path d="M2134 1561V1571" class="W" stroke-width="22.5"/>
<path d="M2124 1556V1556Q2124 1550 2134 1550H2134Q2144 1550 2144 1556V1556Z" fill="#f0f"/>
<path d="M2254 1546.5V1570.5" class="M" stroke-width="23.5"/>
<path d="M2242.5 1555V1546.5Q2242.5 1535 2254 1535H2254Q2266 1535 2266 1546.5V1555Z" fill="#0078f8"/>
<path d="M2242.5 1545V1545Q2242.5 1535 2254 1535H2254Q2266 1535 2266 1545V1545Z" fill="#ff8000"/>
<path d="M2244 1541V1541Q2244 1535 2254 1535H2254Q2264.5 1535 2264.5 1541V1541Z" fill="#ff0080"/>
<path d="M2279.5 1545.5V1561.5" class="B" stroke-width="21"/>
<path d="M2268.5 1553.5V1545.5Q2268.5 1535 2279.5 1535H2279.5Q2290 1535 2290 1545.5V1553.5Z" fill="#0078f8"/>
<path d="M2269.5 1541V1541Q2269.5 1535 2279.5 1535H2279.5Q2289 1535 2289 1541V1541Z" fill="#ff0080"/>
<path d="M2301 1543.5V1552" class="M" stroke-width="12.5"/>
<path d="M2294.5 1543.5V1543.5Q2294.5 1537 2301 1537H2301Q2307 1537 2307 1543.5V1543.5Z" fill="#0078f8"/>
<path d="M2294.5 1551V1552Q2294.5 1558.5 2301 1558.5H2301Q2307 1558.5 2307 1552V1551Z" fill="#0078f8"/>
<path d="M2389.5 1511.5V1520.5" class="C" stroke-width="21"/>
<path d="M2381 1505V1505Q2381 1501 2389.5 1501H2389.5Q2398 1501 2398 1505V1505Z" fill="#ff0"/>
<path d="M2379.5 1523.5V1523.5Q2379.5 1531 2389.5 1531H2389.5Q2399.5 1531 2399.5 1523.5V1523.5Z" fill="#ff0080"/>
<path d="M2364.5 1537.5V1540.5" class="H" stroke-width="23.5"/>
<path d="M2389.5 1539V1541.5" class="H" stroke-width="21"/>
<path d="M2414.5 1534V1548" class="K" stroke-width="21"/>
<path d="M2404 1546V1548Q2404 1558.5 2414.5 1558.5H2414.5Q2425 1558.5 2425 1548V1546Z" fill="#ffb400"/>
<path d="M2438 1534.5V1562.5" class="Y" stroke-width="22.5"/>
<path d="M2427.5 1531V1531Q2427.5 1523.5 2438 1523.5H2438Q2448.5 1523.5 2448.5 1531V1531Z" fill="#ff0080"/>
<path d="M2427 1556V1562.5Q2427 1573.5 2438 1573.5H2438Q2449 1573.5 2449 1562.5V1556Z" fill="#f00"/>
<path d="M2523.5 1170.5V1190" class="A" stroke-width="16"/>
<path d="M2541 1168.5V1188" class="A" stroke-width="17"/>
<path d="M2560 1180V1190.5" class="A" stroke-width="15"/>
<path d="M2657 1178V1190" class="N" stroke-width="16"/>
<path d="M2679 1168.5V1185.5" class="N" stroke-width="21"/>
<circle cx="2696.5" cy="1176.3" r="7" fill="#ff80c0"/>
<circle cx="2699.5" cy="1180.3" r="3" fill="#0f0"/>
<path d="M2788 1159V1190.5" class="V" stroke-width="18"/>
<circle cx="2806.7" cy="1156.2" r="5.5" fill="#c000ff"/>
<circle cx="2820.7" cy="1157.7" r="5.5" fill="#c000ff"/>
<rect x="2828.5" y="1154" width="9.5" height="8.5" rx="4" fill="#c000ff"/>
<path d="M2845 1156.5V1159" class="V" stroke-width="4"/>
<path d="M2938.5 1183V1192.5" class="F" stroke-width="14"/>
<path d="M2931.5 1183V1183Q2931.5 1176.5 2938.5 1176.5H2938.5Q2945.5 1176.5 2945.5 1183V1183Z" fill="#ff0080"/>
<path d="M3051 1180V1192" class="E" stroke-width="15"/>
<path d="M3067 1182.5V1193" class="E" stroke-width="12.5"/>
<path d="M3083.5 1186.5V1190.5" class="E" stroke-width="15"/>
<path d="M3076.5 1185.5V1185.5Q3076.5 1179.5 3083.5 1179.5H3083.5Q3091 1179.5 3091 1185.5V1185.5Z" fill="#ff80c0"/>
<path d="M3177.5 1185.5V1190" class="S" stroke-width="16"/>
<path d="M3194 1187V1189.5" class="S" stroke-width="14"/>
<circle cx="3210.5" cy="1187.8" r="5" fill="#b4b4ff"/>
<path d="M3226.5 1159V1187" class="Y" stroke-width="19"/>
<path d="M3217 1176.5V1187Q3217 1196.5 3226.5 1196.5H3226.5Q3236 1196.5 3236 1187V1176.5Z" fill="#ff80c0"/>
<path d="M3217 1183V1187Q3217 1196.5 3226.5 1196.5H3226.5Q3236 1196.5 3236 1187V1183Z" fill="#b4b4ff"/>
<circle cx="3329.2" cy="1180.3" r="6.5" fill="#ff0040"/>
<path d="M3345.5 1176V1191" class="Z" stroke-width="14"/>
<path d="M3458 1166.5V1183" class="U" stroke-width="24.5"/>
<path d="M3483 1165.5V1171.5" class="U" stroke-width="18"/>
<path d="M2520 1302V1311" class="A" stroke-width="21"/>
<circle cx="2545.2" cy="1310.5" r="10" fill="#ffb400"/>
<rect x="2557" y="1305.5" width="18" height="16" rx="7" fill="#ffb400"/>
<path d="M2653 1304.5V1311.5" class="N" stroke-width="20"/>
<path d="M2676.5 1297V1312.5" class="N" stroke-width="21"/>
<rect x="2689.5" y="1296.5" width="17" height="16.5" rx="7.5" fill="#ff80c0"/>
<path d="M2791.5 1289V1312" class="V" stroke-width="22.5"/>
<circle cx="2813.2" cy="1293" r="6" fill="#c000ff"/>
<circle cx="2828.2" cy="1289" r="6.5" fill="#c000ff"/>
<path d="M2938.5 1309.5V1314" class="F" stroke-width="18"/>
<path d="M2930.5 1305.5V1305.5Q2930.5 1300.5 2938.5 1300.5H2938.5Q2946.5 1300.5 2946.5 1305.5V1305.5Z" fill="#ff0080"/>
<path d="M3050 1307.5V1313.5" class="E" stroke-width="19"/>
<path d="M3069.5 1306.5V1314.5" class="E" stroke-width="17"/>
<rect x="3079.5" y="1305.5" width="21" height="17.5" rx="8" fill="#c8c000"/>
<path d="M3080.5 1309.5V1309.5Q3080.5 1305.5 3087.5 1305.5H3093Q3100 1305.5 3100 1309.5V1309.5Z" fill="#ff80c0"/>
<path d="M3175.5 1308.5V1313.5" class="S" stroke-width="16"/>
<circle cx="3195.5" cy="1314.5" r="7.5" fill="#b4b4ff"/>
<circle cx="3213" cy="1314.5" r="7" fill="#b4b4ff"/>
<path d="M3232.5 1294V1310.5" class="Y" stroke-width="22.5"/>
<path d="M3221.5 1305.5V1310.5Q3221.5 1321.5 3232.5 1321.5H3232.5Q3243.5 1321.5 3243.5 1310.5V1305.5Z" fill="#b4b4ff"/>
<path d="M3324 1308V1313" class="Z" stroke-width="20"/>
<path d="M3315.5 1303V1303Q3315.5 1298 3324 1298H3324Q3333 1298 3333 1303V1303Z" fill="#f0f"/>
<circle cx="3344.3" cy="1310.5" r="7" fill="#ff0040"/>
<circle cx="3360.3" cy="1308" r="5" fill="#ff0040"/>
<path d="M3460.5 1281.5V1312" class="U" stroke-width="22.5"/>
<path d="M3449.5 1310.5V1312Q3449.5 1323 3460.5 1323H3460.5Q3471.5 1323 3471.5 1312V1310.5Z" fill="#ff0080"/>
<path d="M3487 1285V1293.5" class="U" stroke-width="19"/>
<path d="M2512.5 1430.5V1443.5" class="A" stroke-width="17"/>
<path d="M2532.5 1436V1445.5" class="A" stroke-width="16"/>
<path d="M2550 1438.5V1445" class="A" stroke-width="14"/>
<path d="M2670.5 1430.5V1443.5" class="N" stroke-width="17"/>
<path d="M2690.5 1431.5V1437.5" class="N" stroke-width="11.5"/>
<path d="M2684.5 1432V1431.5Q2684.5 1426 2690.5 1426H2690.5Q2696.5 1426 2696.5 1431.5V1432Z" fill="#ff0040"/>
<path d="M2773 1435.5V1444.5" class="V" stroke-width="15"/>
<circle cx="2788.2" cy="1440.8" r="4.5" fill="#c000ff"/>
<circle cx="2801.7" cy="1439.8" r="5" fill="#c000ff"/>
<path d="M2813 1433V1443.5" class="V" stroke-width="4"/>
<path d="M2824 1435.5V1440" class="V" stroke-width="9.5"/>
<path d="M2925 1427.5V1437" class="A" stroke-width="18"/>
<path d="M2916 1427V1427Q2916 1418.5 2925 1418.5H2925Q2934 1418.5 2934 1427V1427Z" fill="#ff00dc"/>
<path d="M2916 1433V1437Q2916 1446 2925 1446H2925Q2934 1446 2934 1437V1433Z" fill="#ff00dc"/>
<path d="M3033.5 1419.5V1432" class="E" stroke-width="12.5"/>
<path d="M3047 1418V1429.5" class="E" stroke-width="12.5"/>
<path d="M3062 1424V1426" class="E" stroke-width="15"/>
<path d="M3055.5 1421V1421Q3055.5 1417 3062 1417H3062Q3069 1417 3069 1421V1421Z" fill="#ff80c0"/>
<path d="M3078.5 1428V1442.5" class="V" stroke-width="19"/>
<path d="M3069.5 1426V1426Q3069.5 1418.5 3078.5 1418.5H3078.5Q3088 1418.5 3088 1426V1426Z" fill="#c8c000"/>
<path d="M3069 1436V1442.5Q3069 1452 3078.5 1452H3078.5Q3088.5 1452 3088.5 1442.5V1436Z" fill="#f00"/>
<path d="M3175.5 1432V1438.5" class="S" stroke-width="15"/>
<path d="M3194 1437.5V1445" class="Y" stroke-width="14"/>
<path d="M3187 1443.5V1445Q3187 1452 3194 1452H3194Q3201 1452 3201 1445V1443.5Z" fill="#b4b4ff"/>
<circle cx="3311.7" cy="1443.3" r="7.5" fill="#ff0040"/>
<circle cx="3325.7" cy="1443.3" r="7" fill="#ff0040"/>
<path d="M3460.5 1409.5V1444" class="U" stroke-width="19"/>
<path d="M3451 1443.5V1444Q3451 1453.5 3460.5 1453.5H3460.5Q3470 1453.5 3470 1444V1443.5Z" fill="#ff0080"/>
<path d="M3474.5 1414.5V1425.5" class="U" stroke-width="5.5"/>
<path d="M2507.5 1539.5V1547.5" class="A" stroke-width="22.5"/>
<circle cx="2531.6" cy="1542.5" r="9.5" fill="#ffb400"/>
<path d="M2553.5 1540V1568.5" class="A" stroke-width="23.5"/>
<path d="M2542 1558.5V1568.5Q2542 1580 2553.5 1580H2553.5Q2565.5 1580 2565.5 1568.5V1558.5Z" fill="#0f0"/>
<path d="M2542 1563.5V1568.5Q2542 1580 2553.5 1580H2553.5Q2565.5 1580 2565.5 1568.5V1563.5Z" fill="#c000ff"/>
<path d="M2650.5 1555V1573" class="N" stroke-width="16"/>
<rect x="2665" y="1556" width="16" height="10" rx="4.5" fill="#ff80c0"/>
<circle cx="2670.4" cy="1553.5" r="6.5" fill="#ff0040"/>
<circle cx="2682.9" cy="1555" r="3" fill="#ffb400"/>
<path d="M2786.5 1571V1573.5" class="V" stroke-width="15"/>
<rect x="2797.5" y="1563.5" width="18" height="16.5" rx="7.5" fill="#c000ff"/>
<path d="M2902 1537.5V1541" class="F" stroke-width="15"/>
<circle cx="2923.4" cy="1547" r="10" fill="#ff00dc"/>
<circle cx="2923.4" cy="1548.5" r="4.5" fill="#b4b4ff"/>
<path d="M2946 1535V1568.5" class="B" stroke-width="23.5"/>
<path d="M2934.5 1543.5V1535Q2934.5 1523.5 2946 1523.5H2946Q2957.5 1523.5 2957.5 1535V1543.5Z" fill="#f0f"/>
<path d="M2934.5 1536V1535Q2934.5 1523.5 2946 1523.5H2946Q2957.5 1523.5 2957.5 1535V1536Z" fill="#ffb400"/>
<path d="M3038.5 1566.5V1573" class="E" stroke-width="16"/>
<path d="M3058.5 1569V1573" class="E" stroke-width="16"/>
<path d="M3052 1565V1565Q3052 1561 3058.5 1561H3058.5Q3065.5 1561 3065.5 1565V1565Z" fill="#ff80c0"/>
<path d="M3079.5 1572V1572.5" class="E" stroke-width="17"/>
<path d="M3072.5 1577V1577Q3072.5 1581 3079.5 1581H3079.5Q3087 1581 3087 1577V1577Z" fill="#0f0"/>
<circle cx="3170.4" cy="1566.1" r="8" fill="#b4b4ff"/>
<path d="M3195.5 1559.5V1567.5" class="S" stroke-width="19"/>
<path d="M3186 1563.5V1559.5Q3186 1550 3195.5 1550H3195.5Q3205 1550 3205 1559.5V1563.5Z" fill="#ff0"/>
<path d="M3218 1559V1568" class="S" stroke-width="21"/>
<path d="M3207.5 1561V1559Q3207.5 1548.5 3218 1548.5H3218Q3228.5 1548.5 3228.5 1559V1561Z" fill="#ff0"/>
<path d="M3311.5 1565V1572" class="Z" stroke-width="18"/>
<circle cx="3334.2" cy="1572.6" r="8.5" fill="#ff0040"/>
<path d="M3438 1540V1568.5" class="U" stroke-width="23.5"/>
<path d="M3426.5 1566V1568.5Q3426.5 1580 3438 1580H3438Q3449.5 1580 3449.5 1568.5V1566Z" fill="#ff0080"/>
<path d="M3462 1550V1557" class="U" stroke-width="18"/>
<rect x="3475" y="1542" width="14" height="11.5" rx="5" fill="#0078f8"/>
</g>
<path d="M436.5 251.5V267.5" stroke="#f0f" stroke-width="2.8" stroke-linecap="butt"/><path d="M430 262L436.5 265L443 262L436.5 272.5Z" fill="#f0f"/>
<path d="M590.5 231.5V247.5" stroke="#fff" stroke-width="2.8" stroke-linecap="butt"/><path d="M584 242L590.5 245L597 242L590.5 252.5Z" fill="#fff"/>
<path d="M943.5 248V264" stroke="#f0f" stroke-width="2.8" stroke-linecap="butt"/><path d="M937 258.5L943.5 261.5L950 258.5L943.5 269Z" fill="#f0f"/>
<path d="M1369.5 231.5V247.5" stroke="#f0f" stroke-width="2.8" stroke-linecap="butt"/><path d="M1363 242L1369.5 245L1376 242L1369.5 252.5Z" fill="#f0f"/>
<path d="M438.5 398.5V414.5" stroke="#f0f" stroke-width="2.8" stroke-linecap="butt"/><path d="M432 409L438.5 412L445 409L438.5 419.5Z" fill="#f0f"/>
<path d="M946 393.5V409.5" stroke="#f0f" stroke-width="2.8" stroke-linecap="butt"/><path d="M939.5 404L946 407L952.5 404L946 414.5Z" fill="#f0f"/>
<path d="M1373 368.5V384.5" stroke="#f0f" stroke-width="2.8" stroke-linecap="butt"/><path d="M1366.5 379L1373 382L1379.5 379L1373 389.5Z" fill="#f0f"/>
<path d="M443.5 554.5V570.5" stroke="#f0f" stroke-width="2.8" stroke-linecap="butt"/><path d="M437 565L443.5 568L450 565L443.5 575.5Z" fill="#f0f"/>
<text x="566.5" y="556.1" class="st">*</text>
<text x="585.5" y="556.1" class="st">*</text>
<path d="M930 535.5V551.5" stroke="#f0f" stroke-width="2.8" stroke-linecap="butt"/><path d="M923.5 546L930 549L936.5 546L930 556.5Z" fill="#f0f"/>
<text x="1322" y="588.2" class="st">*</text>
<text x="1341" y="588.2" class="st">*</text>
<path d="M1368 527V543" stroke="#f0f" stroke-width="2.8" stroke-linecap="butt"/><path d="M1361.5 537.5L1368 540.5L1374.5 537.5L1368 548Z" fill="#f0f"/>
<path d="M426 658.5V674.5" stroke="#fff" stroke-width="2.8" stroke-linecap="butt"/><path d="M419.5 669L426 672L432.5 669L426 679.5Z" fill="#fff"/>
<path d="M452.5 694V710" stroke="#f0f" stroke-width="2.8" stroke-linecap="butt"/><path d="M446 704.5L452.5 707.5L459 704.5L452.5 715Z" fill="#f0f"/>
<path d="M584 685V701" stroke="#fff" stroke-width="2.8" stroke-linecap="butt"/><path d="M577.5 695.5L584 698.5L590.5 695.5L584 706Z" fill="#fff"/>
<text x="629.1" y="714.9" class="st">*</text>
<text x="649.1" y="714.9" class="st">*</text>
<text x="766.9" y="714.9" class="st">*</text>
<text x="787.4" y="714.9" class="st">*</text>
<path d="M934.5 687.5V703.5" stroke="#f0f" stroke-width="2.8" stroke-linecap="butt"/><path d="M928 698L934.5 701L941 698L934.5 708.5Z" fill="#f0f"/>
<path d="M1372 677.5V693.5" stroke="#f0f" stroke-width="2.8" stroke-linecap="butt"/><path d="M1365.5 688L1372 691L1378.5 688L1372 698.5Z" fill="#f0f"/>
<path d="M455 822.5V838.5" stroke="#f0f" stroke-width="2.8" stroke-linecap="butt"/><path d="M448.5 833L455 836L461.5 833L455 843.5Z" fill="#f0f"/>
<text x="445.2" y="870.3" class="st">*</text>
<text x="465.3" y="870.3" class="st">*</text>
<text x="561.4" y="863.7" class="st">*</text>
<text x="581.5" y="863.7" class="st">*</text>
<path d="M620.5 809V825" stroke="#fff" stroke-width="2.8" stroke-linecap="butt"/><path d="M614 819.5L620.5 822.5L627 819.5L620.5 830Z" fill="#fff"/>
<path d="M758.5 841.5V857.5" stroke="#fff" stroke-width="2.8" stroke-linecap="butt"/><path d="M752 852L758.5 855L765 852L758.5 862.5Z" fill="#fff"/>
<path d="M927 839.5V855.5" stroke="#f0f" stroke-width="2.8" stroke-linecap="butt"/><path d="M920.5 850L927 853L933.5 850L927 860.5Z" fill="#f0f"/>
<path d="M1109 804V820" stroke="#fff" stroke-width="2.8" stroke-linecap="butt"/><path d="M1102.5 814.5L1109 817.5L1115.5 814.5L1109 825Z" fill="#fff"/>
<text x="1190.7" y="870.3" class="st">*</text>
<text x="1210.7" y="870.3" class="st">*</text>
<path d="M1369.5 830V846" stroke="#f0f" stroke-width="2.8" stroke-linecap="butt"/><path d="M1363 840.5L1369.5 843.5L1376 840.5L1369.5 851Z" fill="#f0f"/>
<path d="M445 975.5V991.5" stroke="#f0f" stroke-width="2.8" stroke-linecap="butt"/><path d="M438.5 986L445 989L451.5 986L445 996.5Z" fill="#f0f"/>
<path d="M927 965.5V981.5" stroke="#f0f" stroke-width="2.8" stroke-linecap="butt"/><path d="M920.5 976L927 979L933.5 976L927 986.5Z" fill="#f0f"/>
<path d="M1383 973V989" stroke="#f0f" stroke-width="2.8" stroke-linecap="butt"/><path d="M1376.5 983.5L1383 986.5L1389.5 983.5L1383 994Z" fill="#f0f"/>
<path d="M2005 261.5V277.5" stroke="#fff" stroke-width="2.8" stroke-linecap="butt"/><path d="M1998.5 272L2005 275L2011.5 272L2005 282.5Z" fill="#fff"/>
<path d="M2135.5 257.5V273.5" stroke="#fff" stroke-width="2.8" stroke-linecap="butt"/><path d="M2129 268L2135.5 271L2142 268L2135.5 278.5Z" fill="#fff"/>
<path d="M2158.5 265V281" stroke="#f0f" stroke-width="2.8" stroke-linecap="butt"/><path d="M2152 275.5L2158.5 278.5L2165 275.5L2158.5 286Z" fill="#f0f"/>
<path d="M2414.5 251.5V267.5" stroke="#f0f" stroke-width="2.8" stroke-linecap="butt"/><path d="M2408 262L2414.5 265L2421 262L2414.5 272.5Z" fill="#f0f"/>
<path d="M1503.5 395.5V411.5" stroke="#fff" stroke-width="2.8" stroke-linecap="butt"/><path d="M1497 406L1503.5 409L1510 406L1503.5 416.5Z" fill="#fff"/>
<path d="M2158.5 412V428" stroke="#f0f" stroke-width="2.8" stroke-linecap="butt"/><path d="M2152 422.5L2158.5 425.5L2165 422.5L2158.5 433Z" fill="#f0f"/>
<path d="M2409.5 400.5V416.5" stroke="#f0f" stroke-width="2.8" stroke-linecap="butt"/><path d="M2403 411L2409.5 414L2416 411L2409.5 421.5Z" fill="#f0f"/>
<text x="1723.1" y="587.2" class="st">*</text>
<text x="1742.2" y="587.2" class="st">*</text>
<text x="2048.8" y="584.7" class="st">*</text>
<text x="2068.8" y="584.7" class="st">*</text>
<path d="M2142.5 567V583" stroke="#f0f" stroke-width="2.8" stroke-linecap="butt"/><path d="M2136 577.5L2142.5 580.5L2149 577.5L2142.5 588Z" fill="#f0f"/>
<path d="M2421 537V553" stroke="#f0f" stroke-width="2.8" stroke-linecap="butt"/><path d="M2414.5 547.5L2421 550.5L2427.5 547.5L2421 558Z" fill="#f0f"/>
<path d="M2141.5 708.5V724.5" stroke="#f0f" stroke-width="2.8" stroke-linecap="butt"/><path d="M2135 719L2141.5 722L2148 719L2141.5 729.5Z" fill="#f0f"/>
<path d="M2393.5 684V700" stroke="#f0f" stroke-width="2.8" stroke-linecap="butt"/><path d="M2387 694.5L2393.5 697.5L2400 694.5L2393.5 705Z" fill="#f0f"/>
<text x="2416" y="740" class="st">*</text>
<text x="2436.1" y="740" class="st">*</text>
<text x="2458.6" y="740" class="st">*</text>
<text x="2477.2" y="740" class="st">*</text>
<text x="1464.1" y="865.2" class="st">*</text>
<text x="1484.2" y="865.2" class="st">*</text>
<text x="2023.7" y="870.3" class="st">*</text>
<text x="2043.8" y="870.3" class="st">*</text>
<path d="M2146.5 829V845" stroke="#f0f" stroke-width="2.8" stroke-linecap="butt"/><path d="M2140 839.5L2146.5 842.5L2153 839.5L2146.5 850Z" fill="#f0f"/>
<text x="2135.5" y="873.8" class="st">*</text>
<text x="2156.5" y="873.8" class="st">*</text>
<text x="2274.2" y="878.8" class="st">*</text>
<text x="2294.3" y="878.8" class="st">*</text>
<path d="M2408 841.5V857.5" stroke="#f0f" stroke-width="2.8" stroke-linecap="butt"/><path d="M2401.5 852L2408 855L2414.5 852L2408 862.5Z" fill="#f0f"/>
<path d="M2159 988V1004" stroke="#f0f" stroke-width="2.8" stroke-linecap="butt"/><path d="M2152.5 998.5L2159 1001.5L2165.5 998.5L2159 1009Z" fill="#f0f"/>
<path d="M2403.5 970.5V986.5" stroke="#f0f" stroke-width="2.8" stroke-linecap="butt"/><path d="M2397 981L2403.5 984L2410 981L2403.5 991.5Z" fill="#f0f"/>
<path d="M2810.5 274V290" stroke="#f0f" stroke-width="2.8" stroke-linecap="butt"/><path d="M2804 284.5L2810.5 287.5L2817 284.5L2810.5 295Z" fill="#f0f"/>
<path d="M3338 249V265" stroke="#fff" stroke-width="2.8" stroke-linecap="butt"/><path d="M3331.5 259.5L3338 262.5L3344.5 259.5L3338 270Z" fill="#fff"/>
<path d="M3455.5 251.5V267.5" stroke="#fff" stroke-width="2.8" stroke-linecap="butt"/><path d="M3449 262L3455.5 265L3462 262L3455.5 272.5Z" fill="#fff"/>
<path d="M2811.5 413.5V429.5" stroke="#f0f" stroke-width="2.8" stroke-linecap="butt"/><path d="M2805 424L2811.5 427L2818 424L2811.5 434.5Z" fill="#f0f"/>
<path d="M2816.5 557V573" stroke="#f0f" stroke-width="2.8" stroke-linecap="butt"/><path d="M2810 567.5L2816.5 570.5L2823 567.5L2816.5 578Z" fill="#f0f"/>
<text x="2694.5" y="751" class="st">*</text>
<text x="2715.5" y="751" class="st">*</text>
<path d="M2824.5 701V717" stroke="#f0f" stroke-width="2.8" stroke-linecap="butt"/><path d="M2818 711.5L2824.5 714.5L2831 711.5L2824.5 722Z" fill="#f0f"/>
<path d="M2816.5 860.5V876.5" stroke="#f0f" stroke-width="2.8" stroke-linecap="butt"/><path d="M2810 871L2816.5 874L2823 871L2816.5 881.5Z" fill="#f0f"/>
<path d="M2815.5 993V1009" stroke="#f0f" stroke-width="2.8" stroke-linecap="butt"/><path d="M2809 1003.5L2815.5 1006.5L2822 1003.5L2815.5 1014Z" fill="#f0f"/>
<path d="M432.5 1110V1126" stroke="#f0f" stroke-width="2.8" stroke-linecap="butt"/><path d="M426 1120.5L432.5 1123.5L439 1120.5L432.5 1131Z" fill="#f0f"/>
<path d="M581.5 1078V1094" stroke="#fff" stroke-width="2.8" stroke-linecap="butt"/><path d="M575 1088.5L581.5 1091.5L588 1088.5L581.5 1099Z" fill="#fff"/>
<path d="M600.5 1078V1094" stroke="#f0f" stroke-width="2.8" stroke-linecap="butt"/><path d="M594 1088.5L600.5 1091.5L607 1088.5L600.5 1099Z" fill="#f0f"/>
<path d="M917 1061.5V1077.5" stroke="#f0f" stroke-width="2.8" stroke-linecap="butt"/><path d="M910.5 1072L917 1075L923.5 1072L917 1082.5Z" fill="#f0f"/>
<text x="1072.5" y="1127.7" class="st">*</text>
<text x="1092.5" y="1127.7" class="st">*</text>
<path d="M431.5 1245.5V1261.5" stroke="#f0f" stroke-width="2.8" stroke-linecap="butt"/><path d="M425 1256L431.5 1259L438 1256L431.5 1266.5Z" fill="#f0f"/>
<path d="M917 1239.5V1255.5" stroke="#f0f" stroke-width="2.8" stroke-linecap="butt"/><path d="M910.5 1250L917 1253L923.5 1250L917 1260.5Z" fill="#f0f"/>
<path d="M1381 1212V1228" stroke="#f0f" stroke-width="2.8" stroke-linecap="butt"/><path d="M1374.5 1222.5L1381 1225.5L1387.5 1222.5L1381 1233Z" fill="#f0f"/>
<path d="M416 1377V1393" stroke="#f0f" stroke-width="2.8" stroke-linecap="butt"/><path d="M409.5 1387.5L416 1390.5L422.5 1387.5L416 1398Z" fill="#f0f"/>
<path d="M913.5 1352V1368" stroke="#f0f" stroke-width="2.8" stroke-linecap="butt"/><path d="M907 1362.5L913.5 1365.5L920 1362.5L913.5 1373Z" fill="#f0f"/>
<path d="M1343.5 1368V1384" stroke="#f0f" stroke-width="2.8" stroke-linecap="butt"/><path d="M1337 1378.5L1343.5 1381.5L1350 1378.5L1343.5 1389Z" fill="#f0f"/>
<path d="M410 1511V1527" stroke="#f0f" stroke-width="2.8" stroke-linecap="butt"/><path d="M403.5 1521.5L410 1524.5L416.5 1521.5L410 1532Z" fill="#f0f"/>
<path d="M918.5 1490V1506" stroke="#f0f" stroke-width="2.8" stroke-linecap="butt"/><path d="M912 1500.5L918.5 1503.5L925 1500.5L918.5 1511Z" fill="#f0f"/>
<path d="M1364.5 1491V1507" stroke="#f0f" stroke-width="2.8" stroke-linecap="butt"/><path d="M1358 1501.5L1364.5 1504.5L1371 1501.5L1364.5 1512Z" fill="#f0f"/>
<path d="M2136.5 1120V1136" stroke="#f0f" stroke-width="2.8" stroke-linecap="butt"/><path d="M2130 1130.5L2136.5 1133.5L2143 1130.5L2136.5 1141Z" fill="#f0f"/>
<path d="M2413 1110V1126" stroke="#f0f" stroke-width="2.8" stroke-linecap="butt"/><path d="M2406.5 1120.5L2413 1123.5L2419.5 1120.5L2413 1131Z" fill="#f0f"/>
<path d="M2135 1247V1263" stroke="#f0f" stroke-width="2.8" stroke-linecap="butt"/><path d="M2128.5 1257.5L2135 1260.5L2141.5 1257.5L2135 1268Z" fill="#f0f"/>
<path d="M2409.5 1244.5V1260.5" stroke="#f0f" stroke-width="2.8" stroke-linecap="butt"/><path d="M2403 1255L2409.5 1258L2416 1255L2409.5 1265.5Z" fill="#f0f"/>
<path d="M2145.5 1378.5V1394.5" stroke="#f0f" stroke-width="2.8" stroke-linecap="butt"/><path d="M2139 1389L2145.5 1392L2152 1389L2145.5 1399.5Z" fill="#f0f"/>
<path d="M2379.5 1347V1363" stroke="#f0f" stroke-width="2.8" stroke-linecap="butt"/><path d="M2373 1357.5L2379.5 1360.5L2386 1357.5L2379.5 1368Z" fill="#f0f"/>
<path d="M2134 1512.5V1528.5" stroke="#f0f" stroke-width="2.8" stroke-linecap="butt"/><path d="M2127.5 1523L2134 1526L2140.5 1523L2134 1533.5Z" fill="#f0f"/>
<path d="M2389.5 1467.5V1483.5" stroke="#f0f" stroke-width="2.8" stroke-linecap="butt"/><path d="M2383 1478L2389.5 1481L2396 1478L2389.5 1488.5Z" fill="#f0f"/>
<path d="M2803 1103V1119" stroke="#f0f" stroke-width="2.8" stroke-linecap="butt"/><path d="M2796.5 1113.5L2803 1116.5L2809.5 1113.5L2803 1124Z" fill="#f0f"/>
<text x="2816.7" y="1145.7" class="st">*</text>
<text x="2836.8" y="1145.7" class="st">*</text>
<text x="3173.9" y="1167.7" class="st">*</text>
<text x="3194" y="1167.7" class="st">*</text>
<path d="M2812 1247V1263" stroke="#f0f" stroke-width="2.8" stroke-linecap="butt"/><path d="M2805.5 1257.5L2812 1260.5L2818.5 1257.5L2812 1268Z" fill="#f0f"/>
<path d="M2789.5 1400V1416" stroke="#f0f" stroke-width="2.8" stroke-linecap="butt"/><path d="M2783 1410.5L2789.5 1413.5L2796 1410.5L2789.5 1421Z" fill="#f0f"/>
<text x="62" y="1746" font-size="77" font-weight="bold" fill="#000" text-anchor="start" textLength="47" lengthAdjust="spacingAndGlyphs">B</text>
<text x="954" y="2511" font-size="77" font-weight="bold" fill="#000" text-anchor="start" textLength="50" lengthAdjust="spacingAndGlyphs">C</text>
<text x="1273" y="1745.7" font-size="77" font-weight="bold" fill="#000" text-anchor="start" textLength="56" lengthAdjust="spacingAndGlyphs">D</text>
<text x="144.6" y="1726.5" font-size="29" font-weight="bold" fill="#000" text-anchor="start" textLength="322.5" lengthAdjust="spacingAndGlyphs">SL: WT1,WT2,CDT1,R1</text>
<text x="763.5" y="1726.5" font-size="29" font-weight="bold" fill="#000" text-anchor="start" textLength="84.5" lengthAdjust="spacingAndGlyphs">SL: R2</text>
<rect x="136.5" y="1755.4" width="328.6" height="254.4" fill="#fff"/>
<rect x="136.5" y="1754.4" width="328.6" height="2" fill="#a8a8a8"/>
<rect x="464.1" y="1754.4" width="2" height="256.4" fill="#a8a8a8"/>
<rect x="136.5" y="1755.4" width="252" height="254.4" fill="#000"/>
<rect x="237.1" y="1755.4" width="1.4" height="254.4" fill="#5a5a5a"/>
<g clip-path="url(#k1)"><rect x="165.1" y="1787.3" width="51.3" height="77.1" fill="#ff0"/><rect x="165.1" y="1863.9" width="51.3" height="24.6" fill="#10a858"/><rect x="165.1" y="1888" width="51.3" height="48.7" fill="#ff0"/><rect x="165.1" y="1936.3" width="51.3" height="6.5" fill="#10a858"/><rect x="165.1" y="1942.3" width="51.3" height="34.9" fill="#f00"/></g>
<rect x="251" y="1791.5" width="4.8" height="72.7" fill="#ff0"/>
<rect x="251" y="1863.9" width="4.8" height="24.4" fill="#10a858"/>
<rect x="251" y="1888" width="4.8" height="39.5" fill="#ff0"/>
<rect x="251" y="1927.2" width="4.8" height="15.4" fill="#10a858"/>
<rect x="251" y="1942.3" width="4.8" height="38.3" fill="#f00"/>
<rect x="263.7" y="1791.5" width="1.2" height="188.7" fill="#2c2c2c"/>
<rect x="279.4" y="1791.5" width="1.2" height="188.7" fill="#2c2c2c"/>
<rect x="295.7" y="1791.5" width="1.2" height="188.7" fill="#2c2c2c"/>
<text class="pc" x="257.7" y="1774.6">0%</text>
<text class="pc" x="308.3" y="1774.6">50%</text>
<text class="pc" x="358.4" y="1774.6">100%</text>
<polyline points="271.5,1790.5 278.5,1793.5 283.5,1797.5 286.5,1800.5 292,1803.5 297.5,1805.5 305,1810.5 308.5,1814 316,1821 320.5,1824.5 319,1829 314.5,1835 307.5,1839.5 304.5,1846.5 299,1853.5 297,1860.5 302,1863 305,1867 313.5,1871 317,1874.5 323,1877.5 331,1878 334,1878 341.5,1878.5 348.5,1877.5 356,1877 359,1878.5 352,1880 345.5,1882.5 343,1884 337.5,1885.5 330.5,1888 327,1895 325,1903 320,1909.5 314.5,1915.5 313.5,1922.5 310.5,1926.5 304.5,1933.5 296,1936 290,1938.5 283,1943 276.5,1944.5 276,1952 272.5,1957 273,1964.5 272.5,1970.5 269,1975.5" fill="none" stroke="#ff0" stroke-width="1.9" stroke-dasharray="3.5 3"/>
<polyline points="271,1794.5 271.5,1801.5 274.5,1806 271,1812 271.5,1818.5 273.5,1824 270.5,1830.5 272.5,1837 275.5,1843.5 273.5,1849 274.5,1854 276,1861.5 282,1863.5 286,1864 290.5,1866 296.5,1866.5 303.5,1868.5 310.5,1870 315,1871.5 321.5,1874 328,1876.5 337.5,1875.5 342.5,1877.5 350,1878 346,1881 338,1880.5 329.5,1880.5 324.5,1881.5 320.5,1882.5 310.5,1885 306.5,1884 300.5,1884.5 294,1887.5 289,1887.5 280,1887.5 278.5,1895 279.5,1901.5 277.5,1906.5 279,1915 278.5,1921 277.5,1927 273.5,1933 273,1938 278,1939.5 285.5,1941 295,1941 301,1943 307.5,1942 310.5,1943 317,1944 326,1947 333.5,1947 339,1949 342.5,1954.5 352.5,1961 345.5,1966.5 337,1973 331,1974.5 327.5,1974.5 318,1977 313,1976.5 303.5,1977.5 301,1979.5 291.5,1979.5 289.5,1979.5 280.5,1979.5 273.5,1978.5 269,1979.5" fill="none" stroke="#f00" stroke-width="1.9" stroke-dasharray="3.5 3"/>
<polyline points="269.5,1794 267,1801 267.5,1807 271,1811 268,1817.5 268.5,1824.5 269.5,1830.5 269.5,1838.5 270,1842.5 270.5,1850.5 268,1856.5 267.5,1861 266.5,1865 265,1872 260.5,1880 263.5,1885 268.5,1891 267,1897 270,1904 268.5,1909.5 270.5,1914.5 276,1921 273.5,1928.5 275,1933.5 272,1940.5 270.5,1947.5 269,1953 268.5,1961 269.5,1967 270,1971 266,1978.5" fill="none" stroke="#0ff" stroke-width="1.9" stroke-dasharray="3.5 3"/>
<polyline points="262,1796 264.5,1799.5 260.5,1806.5 261,1812 261.5,1819 266.5,1826 263,1831.5 266.5,1835.5 268.5,1844 265,1850 267,1855 271,1862 269.5,1866.5 275,1872.5 276.5,1878.5 278,1883.5 275.5,1891 270.5,1896.5 273,1903 268,1910.5 270.5,1916.5 265,1920.5 263,1928 263,1932 263.5,1941 266,1945.5 261.5,1954 264,1959.5 261,1964 264.5,1972 263,1978.5" fill="none" stroke="#0f0" stroke-width="1.9" stroke-dasharray="3.5 3"/>
<polyline points="266.5,1796 271,1801.5 269,1807.5 270,1813.5 273.5,1818 275.5,1826 275,1829.5 278,1836 277,1842 278.5,1848 281.5,1854.5 285.5,1860.5 285.5,1866 286.5,1871.5 282,1877.5 281,1885 274,1891 275,1896 274.5,1903 273,1910 273,1915 275.5,1922.5 274,1928 276.5,1933.5 275.5,1939 273.5,1944 277.5,1951 283,1954 286,1961 294.5,1965 295,1968.5 293,1979.5" fill="none" stroke="#f0f" stroke-width="1.9" stroke-dasharray="3.5 3"/>
<text x="249.8" y="2005.6" font-size="27" font-weight="bold" fill="#f00" text-anchor="start">5</text>
<text x="272.1" y="2005.6" font-size="27" font-weight="bold" fill="#10a858" text-anchor="start">9</text>
<text x="296.3" y="2005.6" font-size="27" font-weight="bold" fill="#ff0" text-anchor="start">1</text>
<text x="314.3" y="2005.6" font-size="27" font-weight="bold" fill="#10a858" text-anchor="start">9</text>
<text x="335.4" y="2005.6" font-size="27" font-weight="bold" fill="#ff0" text-anchor="start">1</text>
<g filter="url(#bl)"><polyline points="425.9,1800.6 425.9,1972.4" fill="none" stroke="#b2b2b2" stroke-width="30.7" stroke-linecap="round" stroke-linejoin="round"/><polyline points="425.9,1800.6 425.9,1972.4" fill="none" stroke="#dcdcdc" stroke-width="7.5" stroke-linecap="round" stroke-linejoin="round"/><rect x="421.1" y="1792.1" width="9.6" height="30.7" fill="#555" transform="rotate(90 425.9 1807.5)"/><rect x="421.7" y="1805.9" width="8.4" height="30.7" fill="#444" transform="rotate(90 425.9 1821.2)"/><rect x="422.3" y="1819.6" width="7.2" height="30.7" fill="#666" transform="rotate(90 425.9 1835)"/><rect x="421.7" y="1836.8" width="8.4" height="30.7" fill="#555" transform="rotate(90 425.9 1852.1)"/><rect x="420.5" y="1854" width="10.9" height="30.7" fill="#1a1a1a" transform="rotate(90 425.9 1869.3)"/><rect x="421.7" y="1871.2" width="8.4" height="30.7" fill="#555" transform="rotate(90 425.9 1886.5)"/><rect x="421.1" y="1888.4" width="9.6" height="30.7" fill="#444" transform="rotate(90 425.9 1903.7)"/><rect x="421.7" y="1905.6" width="8.4" height="30.7" fill="#555" transform="rotate(90 425.9 1920.9)"/><rect x="421.1" y="1922.7" width="9.6" height="30.7" fill="#444" transform="rotate(90 425.9 1938.1)"/><rect x="421.7" y="1939.9" width="8.4" height="30.7" fill="#555" transform="rotate(90 425.9 1955.2)"/></g>
<rect x="475.3" y="1755.4" width="327.4" height="254.4" fill="#fff"/>
<rect x="475.3" y="1754.4" width="327.4" height="2" fill="#a8a8a8"/>
<rect x="475.3" y="1755.4" width="252" height="254.4" fill="#000"/>
<g clip-path="url(#k2)"><rect x="510.3" y="1874.2" width="42.2" height="23.4" fill="#ff0080"/><rect x="510.3" y="1897.1" width="42.2" height="30.6" fill="#ff0"/><rect x="510.3" y="1927.2" width="42.2" height="9.5" fill="#10a858"/><rect x="510.3" y="1936.3" width="42.2" height="28.8" fill="#f00"/></g>
<rect x="590.5" y="1874.2" width="4.8" height="23.2" fill="#f0f"/>
<rect x="590.5" y="1897.1" width="4.8" height="30.4" fill="#ff0"/>
<rect x="590.5" y="1927.2" width="4.8" height="12.4" fill="#10a858"/>
<rect x="590.5" y="1939.3" width="4.8" height="25.6" fill="#f00"/>
<rect x="600.7" y="1874.2" width="115.8" height="90.4" fill="none" stroke="#303030" stroke-width="1.2"/>
<rect x="627.3" y="1874.2" width="1.2" height="90.4" fill="#2c2c2c"/>
<rect x="657.4" y="1874.2" width="1.2" height="90.4" fill="#2c2c2c"/>
<rect x="687.6" y="1874.2" width="1.2" height="90.4" fill="#2c2c2c"/>
<text class="pc" x="595.3" y="1856.7">0%</text>
<text class="pc" x="650.2" y="1856.7">50%</text>
<text class="pc" x="697.2" y="1856.7">100%</text>
<polyline points="603,1879 608.5,1879.5 615.5,1881 625.5,1880.5 628.5,1882 635.5,1881 640.5,1881.5 649,1883 653.5,1884.5 658.5,1885 665,1886.5 671,1887 675,1894.5 679.5,1902 683.5,1909.5 678,1915 671.5,1919 669.5,1923.5 662,1927 653,1930 651,1931.5 644,1934.5 635,1936.5 631,1939.5 626.5,1941.5 619,1944 613.5,1946 607,1951.5 604,1960.5" fill="none" stroke="#ff0" stroke-width="1.9" stroke-dasharray="3.5 3"/>
<polyline points="601.5,1875.5 608,1877 617,1877 624,1877.5 629.5,1875.5 638,1878 642.5,1877.5 650,1876.5 656.5,1878 658.5,1879 668.5,1880 674.5,1883.5 667,1884 661,1887.5 656.5,1889.5 650,1890.5 641,1893.5 638.5,1897 631.5,1900 622,1904.5 620,1909.5 618.5,1914.5 616,1921 614,1926 615,1932.5 614,1942 607,1947.5 610,1956.5 607,1962" fill="none" stroke="#f0f" stroke-width="1.9" stroke-dasharray="3.5 3"/>
<polyline points="606.5,1963 610.5,1960.5 615.5,1955.5 620,1951.5 629,1946.5 633.5,1943.5 639,1940 641.5,1939.5 649,1937 652.5,1937.5 661,1936.5 665.5,1936 672,1939 676.5,1940.5 687,1941 693,1944 699,1945 692,1949.5 690.5,1954.5 680.5,1955 673.5,1955.5 666,1958.5 660,1959.5 654,1958.5 649,1959 642.5,1961 639,1961.5 631.5,1962 627,1962 619,1962" fill="none" stroke="#f00" stroke-width="1.9" stroke-dasharray="3.5 3"/>
<polyline points="605,1877.5 611,1882 617.5,1885.5 620.5,1886.5 626.5,1894 625.5,1901.5 626.5,1910 628.5,1914.5 624.5,1920.5 621.5,1927 617,1932 614,1941 613,1946 612,1955 607,1960.5" fill="none" stroke="#0ff" stroke-width="1.9" stroke-dasharray="3.5 3"/>
<polyline points="603.5,1881 606,1886 611,1891 614,1896.5 617.5,1904.5 619.5,1909 618.5,1915 619.5,1920.5 615.5,1926.5 619.5,1932 615,1939.5 615.5,1944.5 610,1950.5 610,1957.5" fill="none" stroke="#0f0" stroke-width="1.9" stroke-dasharray="3.5 3"/>
<text x="623.7" y="1999.6" font-size="27" font-weight="bold" fill="#f00" text-anchor="start">5</text>
<text x="646" y="1999.6" font-size="27" font-weight="bold" fill="#10a858" text-anchor="start">9</text>
<text x="667.1" y="1999.6" font-size="27" font-weight="bold" fill="#ff0" text-anchor="start">1</text>
<text x="684" y="1999.6" font-size="27" font-weight="bold" fill="#ff0080" text-anchor="start">15</text>
<g filter="url(#bl)"><polyline points="767.8,1897.1 767.8,1969.4" fill="none" stroke="#b2b2b2" stroke-width="23.7" stroke-linecap="round" stroke-linejoin="round"/><polyline points="767.8,1897.1 767.8,1969.4" fill="none" stroke="#dcdcdc" stroke-width="5.8" stroke-linecap="round" stroke-linejoin="round"/><rect x="762.3" y="1891" width="10.9" height="23.7" fill="#111" transform="rotate(90 767.8 1902.9)"/><rect x="763.5" y="1906.9" width="8.4" height="23.7" fill="#555" transform="rotate(90 767.8 1918.8)"/><rect x="763.5" y="1921.4" width="8.4" height="23.7" fill="#444" transform="rotate(90 767.8 1933.2)"/><rect x="763.5" y="1935.8" width="8.4" height="23.7" fill="#555" transform="rotate(90 767.8 1947.7)"/><rect x="763.5" y="1950.3" width="8.4" height="23.7" fill="#666" transform="rotate(90 767.8 1962.2)"/></g>
<rect x="813.6" y="1755.4" width="328" height="254.4" fill="#fff"/>
<rect x="813.6" y="1754.4" width="328" height="2" fill="#a8a8a8"/>
<rect x="1140.6" y="1754.4" width="2" height="256.4" fill="#a8a8a8"/>
<rect x="813.6" y="1755.4" width="251.4" height="254.4" fill="#000"/>
<rect x="913.6" y="1755.4" width="1.4" height="254.4" fill="#5a5a5a"/>
<g clip-path="url(#k3)"><rect x="848" y="1827.7" width="36.2" height="46.9" fill="#ff0"/><rect x="848" y="1874.2" width="36.2" height="18.6" fill="#10a858"/><rect x="848" y="1892.2" width="36.2" height="14.4" fill="#f0f"/></g>
<rect x="923.9" y="1827.7" width="4.8" height="45.5" fill="#ff0"/>
<rect x="923.9" y="1872.9" width="4.8" height="19.6" fill="#10a858"/>
<rect x="923.9" y="1892.2" width="4.8" height="14.2" fill="#f0f"/>
<rect x="935.4" y="1827.7" width="114.6" height="78.4" fill="none" stroke="#303030" stroke-width="1.2"/>
<rect x="961.9" y="1827.7" width="1.2" height="78.4" fill="#2c2c2c"/>
<rect x="989.1" y="1827.7" width="1.2" height="78.4" fill="#2c2c2c"/>
<rect x="1016.2" y="1827.7" width="1.2" height="78.4" fill="#2c2c2c"/>
<text class="pc" x="929.4" y="1814.4">0%</text>
<text class="pc" x="982.4" y="1814.4">50%</text>
<text class="pc" x="1031.9" y="1814.4">100%</text>
<polyline points="938,1830.5 946.5,1832 952.5,1830.5 954,1832.5 964.5,1832.5 969,1831.5 974,1834.5 982,1834.5 987.5,1837 988.5,1840 995,1845 1002,1849 1005.5,1852.5 1000,1857 993.5,1863 990,1868.5 987.5,1872.5 991,1874 999.5,1877 1003,1877 1011,1880 1016,1881 1023.5,1882 1028,1885 1025,1886.5 1018.5,1887 1009.5,1888 1007,1890 998,1889.5 992.5,1892 986.5,1892.5 981.5,1895 973.5,1894 968,1896.5 963.5,1897 958,1900 950.5,1900 946.5,1901.5 938.5,1903" fill="none" stroke="#ff0" stroke-width="1.9" stroke-dasharray="3.5 3"/>
<polyline points="940,1830 941.5,1836 946.5,1841 952,1843.5 955,1848.5 961.5,1855 963,1858.5 967,1865 971,1868 974.5,1873.5 982.5,1880 988,1882.5 994.5,1883 997,1887 1006,1887 999.5,1890 992,1892.5 985,1894 979.5,1897.5 977,1899 971,1900 962,1902.5 958,1902 948.5,1903 944,1904.5 938.5,1904.5" fill="none" stroke="#f00" stroke-width="1.9" stroke-dasharray="3.5 3"/>
<polyline points="939.5,1830.5 949,1832.5 951.5,1837.5 959,1838.5 959.5,1841.5 964,1848 961.5,1856 958,1860 960.5,1867.5 955,1873.5 961.5,1875 965.5,1879 977,1881 983.5,1882 985,1886 995.5,1890 998,1890.5 992,1897.5 986.5,1904.5" fill="none" stroke="#0ff" stroke-width="1.9" stroke-dasharray="3.5 3"/>
<polyline points="941,1836 943,1843.5 946.5,1849.5 948,1854.5 949.5,1860.5 956,1864.5 956,1871.5 960,1874 962,1880.5 967.5,1886.5 977,1889 979,1888.5 984,1892 994,1894.5 997,1897 993.5,1898.5 988,1899.5 981.5,1898.5 976.5,1899.5 969,1900.5 964,1901 955,1902 948.5,1904.5 944.5,1904.5" fill="none" stroke="#f0f" stroke-width="1.9" stroke-dasharray="3.5 3"/>
<polyline points="939,1833 940,1842 943,1846.5 947,1854.5 950.5,1859.5 950.5,1868 955.5,1874 953.5,1878.5 957,1884 965.5,1891.5 960,1894 954,1897.5 945,1902 941.5,1904.5" fill="none" stroke="#0f0" stroke-width="1.9" stroke-dasharray="3.5 3"/>
<text x="932.4" y="1999.6" font-size="27" font-weight="bold" fill="#10a858" text-anchor="start">9</text>
<text x="955.3" y="1999.6" font-size="27" font-weight="bold" fill="#ff0" text-anchor="start">1</text>
<text x="973.4" y="1999.6" font-size="27" font-weight="bold" fill="#f0f" text-anchor="start">12</text>
<g filter="url(#bl)"><polyline points="1101.2,1827.7 1101.2,1891" fill="none" stroke="#b2b2b2" stroke-width="24.7" stroke-linecap="round" stroke-linejoin="round"/><polyline points="1101.2,1827.7 1101.2,1891" fill="none" stroke="#dcdcdc" stroke-width="6" stroke-linecap="round" stroke-linejoin="round"/><rect x="1097" y="1821.7" width="8.4" height="24.7" fill="#666" transform="rotate(90 1101.2 1834.1)"/><rect x="1097" y="1837.5" width="8.4" height="24.7" fill="#555" transform="rotate(90 1101.2 1849.9)"/><rect x="1095.2" y="1858.4" width="12.1" height="24.7" fill="#111" transform="rotate(90 1101.2 1870.8)"/><rect x="1097" y="1872.3" width="8.4" height="24.7" fill="#555" transform="rotate(90 1101.2 1884.7)"/></g>
<text x="160.6" y="2079.2" font-size="29" font-weight="bold" fill="#000" text-anchor="start" textLength="324.5" lengthAdjust="spacingAndGlyphs">SL: WT1,WT2,CDT1,R2</text>
<text x="709.3" y="2081" font-size="29" font-weight="bold" fill="#000" text-anchor="start" textLength="137.5" lengthAdjust="spacingAndGlyphs">SL: R1 Sc1</text>
<rect x="130.4" y="2096" width="449.2" height="224.9" fill="#fff"/>
<rect x="130.4" y="2095" width="449.2" height="2" fill="#a8a8a8"/>
<rect x="578.6" y="2095" width="2" height="226.9" fill="#a8a8a8"/>
<rect x="130.4" y="2319.9" width="449.2" height="2" fill="#a8a8a8"/>
<rect x="130.4" y="2096" width="318.4" height="224.9" fill="#000"/>
<g clip-path="url(#k4)"><rect x="191.5" y="2128" width="56.5" height="42" fill="#0078f8"/><rect x="191.5" y="2169.5" width="56.5" height="7" fill="#f0f"/><rect x="191.5" y="2176" width="56.5" height="113.5" fill="#9a4242"/><rect x="191.5" y="2289" width="56.5" height="9.5" fill="#f0f"/></g>
<rect x="313.1" y="2133.4" width="4.8" height="36.5" fill="#0078f8"/>
<rect x="313.1" y="2169.6" width="4.8" height="118.5" fill="#9a4242"/>
<rect x="313.1" y="2287.8" width="4.8" height="4.5" fill="#f0f"/>
<rect x="328.8" y="2133.4" width="1.2" height="158.6" fill="#2c2c2c"/>
<rect x="371" y="2133.4" width="1.2" height="158.6" fill="#2c2c2c"/>
<rect x="404.2" y="2133.4" width="1.2" height="158.6" fill="#2c2c2c"/>
<rect x="420.5" y="2133.4" width="1.2" height="158.6" fill="#2c2c2c"/>
<rect x="437.3" y="2133.4" width="1.2" height="158.6" fill="#2c2c2c"/>
<text class="pc" x="320.4" y="2122">0%</text>
<text class="pc" x="372.8" y="2122">50%</text>
<text class="pc" x="421.1" y="2122">100%</text>
<polyline points="331.5,2137.5 336,2138 340,2137 346,2136.5 352.5,2137 360.5,2135.5 363,2135.5 372.5,2135 376.5,2134.5 385,2139 387.5,2142 395,2146.5 402.5,2149.5 395.5,2154.5 391.5,2157 386.5,2162.5 381.5,2165 377,2168 373.5,2172.5 365,2173.5 360.5,2176.5 351,2181.5 347,2184 341,2187.5 340.5,2191.5 337,2198.5 339,2205.5 335.5,2211 336,2216.5 333.5,2222 336.5,2229.5 335.5,2234.5 340,2242 338,2246 342.5,2254 341.5,2258 341,2264.5 338.5,2271 336,2276 333,2282.5 329.5,2289" fill="none" stroke="#f00" stroke-width="1.9" stroke-dasharray="3.5 3"/>
<polyline points="332,2139 338,2142.5 339.5,2147.5 345,2152.5 347.5,2157 354.5,2163.5 356,2166 364.5,2168.5 369.5,2172.5 373.5,2177 378.5,2180 382,2184.5 387,2188 392,2191 394.5,2195 401.5,2198 407.5,2204.5 410.5,2208.5 415,2213.5 418,2219.5 412,2222.5 408,2224.5 402.5,2227.5 397,2233 390,2235 383.5,2239.5 380,2243 383.5,2250 387,2254.5 388,2260 385,2265 382,2267.5 376.5,2274.5 368.5,2278 367,2282 361.5,2283.5 355,2284.5 347.5,2287.5 340,2287 335.5,2289" fill="none" stroke="#ff0" stroke-width="1.9" stroke-dasharray="3.5 3"/>
<polyline points="353.5,2136.5 357.5,2136.5 364,2138.5 372.5,2138.5 376,2138.5 382,2138 390.5,2137.5 397.5,2138 402,2139 397,2145.5 396.5,2150 394,2156 392,2162.5 387,2169 385.5,2173.5 385,2179.5 383,2186 380.5,2193.5 378,2199 381.5,2202.5 384.5,2208 392,2214 396,2220.5 389.5,2223 387.5,2226.5 380,2231.5 376,2235.5 372,2240 369,2243 373.5,2248 376,2254 381,2256.5 384.5,2262 383,2266 375,2268.5 368,2273 365,2275.5 360,2279.5 355.5,2283.5 346.5,2286.5 339.5,2288 335.5,2290" fill="none" stroke="#0ff" stroke-width="1.9" stroke-dasharray="3.5 3"/>
<polyline points="332,2140.5 335.5,2144.5 340.5,2146.5 351.5,2147.5 352.5,2151.5 360,2154 367.5,2155.5 361,2160.5 355.5,2167 356.5,2171.5 348,2176.5 349,2180.5 347.5,2186.5 343.5,2191.5 342,2197 341.5,2205.5 342,2211.5 341,2216 339,2222.5 340.5,2229 338,2235 343,2240 343,2245.5 339.5,2252 343,2260 341,2264.5 340,2270.5 334.5,2278 335,2283.5 332.5,2289" fill="none" stroke="#f0f" stroke-width="1.9" stroke-dasharray="3.5 3"/>
<polyline points="331.5,2145.5 332.5,2151.5 336,2157.5 337,2163 339.5,2168 339.5,2175 338,2181.5 338,2185 337,2194 337.5,2197.5 335,2203 338,2211 337.5,2217.5 333,2223 335.5,2229.5 339,2236 335,2242 341,2248 337,2252 338,2257.5 340.5,2266 337,2272 335.5,2276.5 330,2281.5 330.5,2289" fill="none" stroke="#0f0" stroke-width="1.9" stroke-dasharray="3.5 3"/>
<g filter="url(#bl)"><polyline points="516.3,2141.3 510.3,2228.7 513.3,2286" fill="none" stroke="#b2b2b2" stroke-width="28.7" stroke-linecap="round" stroke-linejoin="round"/><polyline points="516.3,2141.3 510.3,2228.7 513.3,2286" fill="none" stroke="#dcdcdc" stroke-width="7" stroke-linecap="round" stroke-linejoin="round"/><rect x="511.6" y="2134.2" width="8.4" height="28.7" fill="#555" transform="rotate(93.9 515.8 2148.5)"/><rect x="510.6" y="2148.6" width="8.4" height="28.7" fill="#444" transform="rotate(93.9 514.8 2163)"/><rect x="509.6" y="2163.1" width="8.4" height="28.7" fill="#555" transform="rotate(93.9 513.8 2177.4)"/><rect x="508.6" y="2177.6" width="8.4" height="28.7" fill="#444" transform="rotate(93.9 512.8 2191.9)"/><rect x="507.6" y="2192" width="8.4" height="28.7" fill="#555" transform="rotate(93.9 511.8 2206.4)"/><rect x="505" y="2216.6" width="10.9" height="28.7" fill="#111" transform="rotate(87 510.4 2230.9)"/><rect x="507.2" y="2235.4" width="8.4" height="28.7" fill="#444" transform="rotate(87 511.4 2249.8)"/><rect x="508" y="2249.9" width="8.4" height="28.7" fill="#555" transform="rotate(87 512.2 2264.2)"/><rect x="509.3" y="2264.4" width="7.2" height="28.7" fill="#555" transform="rotate(87 512.9 2278.7)"/></g>
<rect x="589.9" y="2097.8" width="448" height="223.1" fill="#fff"/>
<rect x="589.9" y="2096.8" width="448" height="2" fill="#a8a8a8"/>
<rect x="589.9" y="2319.9" width="448" height="2" fill="#a8a8a8"/>
<rect x="589.9" y="2097.8" width="320.2" height="223.1" fill="#000"/>
<rect x="758" y="2097.8" width="1.4" height="223.1" fill="#5a5a5a"/>
<path d="M649 2279.9 L650.2 2210.6 Q652 2162.4 694.2 2156.3" fill="none" stroke="#0ff" stroke-width="32.6" stroke-linecap="round"/>
<ellipse cx="702" cy="2189.5" rx="27.7" ry="21.7" fill="#9a4242" transform="rotate(-25 702 2189.5)"/>
<rect x="686.4" y="2139.5" width="39.2" height="24.1" rx="8" fill="#0078f8"/>
<rect x="771.4" y="2139.5" width="4.8" height="23.2" fill="#0078f8"/>
<rect x="771.4" y="2162.4" width="4.8" height="43.7" fill="#9a4242"/>
<rect x="771.4" y="2205.8" width="4.8" height="90.7" fill="#0ff"/>
<rect x="784" y="2139.5" width="1.2" height="156.8" fill="#2c2c2c"/>
<rect x="817.2" y="2139.5" width="1.2" height="156.8" fill="#2c2c2c"/>
<rect x="844.3" y="2139.5" width="1.2" height="156.8" fill="#2c2c2c"/>
<rect x="871.5" y="2139.5" width="1.2" height="156.8" fill="#2c2c2c"/>
<text class="pc" x="781.6" y="2126.2">0%</text>
<text class="pc" x="831.1" y="2126.2">50%</text>
<text class="pc" x="882.9" y="2126.2">100%</text>
<polyline points="825,2140.5 829,2142 833.5,2143 841,2145 847.5,2145.5 856,2147 861.5,2148.5 864,2149 872,2151 873,2157 876,2161.5 879.5,2167.5 881,2173.5 878.5,2179.5 878,2186.5 870.5,2190 868.5,2195.5 862.5,2199.5 859.5,2205.5 864,2211.5 869,2216 876,2222.5 869,2228 864.5,2233 863.5,2238 859,2241.5 853.5,2246.5 860.5,2251 865,2255.5 866,2261.5 874,2267 876,2273 880,2277 875.5,2279.5 871,2281.5 863.5,2283 857,2286 853.5,2288 845.5,2289.5 843,2292 836,2294" fill="none" stroke="#0ff" stroke-width="1.9" stroke-dasharray="3.5 3"/>
<polyline points="792,2141 801.5,2144.5 804.5,2148.5 813,2153.5 816,2155.5 820,2160.5 825,2165 828,2170 834.5,2176 834,2181.5 838.5,2184.5 847.5,2190 850.5,2194 852.5,2199 846,2199 841.5,2199.5 835.5,2202.5 831,2202.5 824.5,2203.5 816,2205 813,2209.5 810.5,2213.5 804.5,2218.5 799.5,2222 801.5,2229.5 802,2235 803,2241 802.5,2246.5 801.5,2253 801,2258.5 802.5,2266 799.5,2271.5 797,2278.5 796,2285 793.5,2292" fill="none" stroke="#ff0" stroke-width="1.9" stroke-dasharray="3.5 3"/>
<polyline points="794.5,2145.5 798,2144.5 807.5,2143 811.5,2144.5 815,2143 822,2143 832.5,2142 833.5,2142 842,2142 837,2145 834,2148.5 826.5,2153 820,2156 816,2159.5 809.5,2164 810,2167 808.5,2174 806,2180 807.5,2187 806,2192 804,2199.5 807,2204.5 801,2211.5 800.5,2216 797.5,2223.5 800,2229 796.5,2235 796.5,2242 799,2247 803,2254 802.5,2258 804.5,2263.5 808,2270.5 805,2275.5 799,2280.5 796.5,2286 793.5,2292" fill="none" stroke="#f00" stroke-width="1.9" stroke-dasharray="3.5 3"/>
<polyline points="790.5,2145 798.5,2144 804.5,2145.5 811.5,2146.5 819,2146.5 826.5,2148.5 817,2153.5 818,2159 809,2164.5 808,2167.5 800,2176 804.5,2179.5 802,2185.5 803.5,2193.5 805,2197.5 809,2205.5 805.5,2212 808.5,2217.5 810,2224 808.5,2229.5 803,2235.5 803,2241.5 800.5,2248 799,2252 795,2257.5 796.5,2264 796.5,2271 796.5,2278.5 797,2286.5 796.5,2292" fill="none" stroke="#f0f" stroke-width="1.9" stroke-dasharray="3.5 3"/>
<polyline points="787.5,2145.5 792,2150.5 795,2157.5 795,2162 800.5,2167 800,2175 798,2181 801,2188 798,2194 798,2198.5 799,2203 797,2211 794,2217.5 793,2222.5 795,2229.5 794,2234.5 796,2241 799.5,2246 800.5,2252.5 799.5,2258 798.5,2267 798,2273 794.5,2278 792.5,2285.5 792.5,2292" fill="none" stroke="#0f0" stroke-width="1.9" stroke-dasharray="3.5 3"/>
<g filter="url(#bl)"><polyline points="937.2,2286 941.4,2192.5 962.5,2162.4 1004.7,2153.3 1013.8,2168.4 983.6,2198.5" fill="none" stroke="#b2b2b2" stroke-width="24.7" stroke-linecap="round" stroke-linejoin="round"/><polyline points="937.2,2286 941.4,2192.5 962.5,2162.4 1004.7,2153.3 1013.8,2168.4 983.6,2198.5" fill="none" stroke="#dcdcdc" stroke-width="6" stroke-linecap="round" stroke-linejoin="round"/><rect x="934.3" y="2265.3" width="6.5" height="24.7" fill="#555" transform="rotate(-87.4 937.6 2277.6)"/><rect x="934.9" y="2248.6" width="6.8" height="24.7" fill="#555" transform="rotate(-87.4 938.3 2261)"/><rect x="936.8" y="2231.9" width="4.5" height="24.7" fill="#707070" transform="rotate(-87.4 939.1 2244.3)"/><rect x="936" y="2215.2" width="7.8" height="24.7" fill="#555" transform="rotate(-87.4 939.8 2227.6)"/><rect x="938" y="2198.6" width="5.2" height="24.7" fill="#555" transform="rotate(-87.4 940.6 2210.9)"/><rect x="938.2" y="2181.9" width="6.2" height="24.7" fill="#707070" transform="rotate(-87.4 941.3 2194.2)"/><rect x="946.9" y="2167.9" width="6.2" height="24.7" fill="#707070" transform="rotate(-55 950 2180.3)"/><rect x="957.1" y="2154.2" width="4.9" height="24.7" fill="#707070" transform="rotate(-55 959.6 2166.6)"/><rect x="969.9" y="2147.6" width="7.9" height="24.7" fill="#707070" transform="rotate(-12.1 973.8 2159.9)"/><rect x="986.5" y="2144.1" width="7.3" height="24.7" fill="#707070" transform="rotate(-12.1 990.1 2156.4)"/><rect x="1003.4" y="2142.5" width="4.5" height="24.7" fill="#707070" transform="rotate(59 1005.6 2154.8)"/><rect x="1009.8" y="2156.7" width="6.7" height="24.7" fill="#707070" transform="rotate(135 1013.1 2169)"/><rect x="999.2" y="2168.5" width="4.4" height="24.7" fill="#555" transform="rotate(135 1001.3 2180.8)"/><rect x="986.4" y="2180.3" width="6.2" height="24.7" fill="#707070" transform="rotate(135 989.5 2192.6)"/></g>
<text x="148.5" y="2377" font-size="29" font-weight="bold" fill="#000" text-anchor="start" textLength="322.5" lengthAdjust="spacingAndGlyphs">SL: WT1,WT2,CDT1,R1</text>
<text x="621.8" y="2377" font-size="29" font-weight="bold" fill="#000" text-anchor="start" textLength="138.7" lengthAdjust="spacingAndGlyphs">SL: R1 Sc1</text>
<rect x="127.4" y="2402.4" width="355.7" height="243" fill="#fff"/>
<rect x="127.4" y="2401.4" width="355.7" height="2" fill="#a8a8a8"/>
<rect x="482.2" y="2401.4" width="2" height="245" fill="#a8a8a8"/>
<rect x="127.4" y="2644.3" width="355.7" height="2" fill="#a8a8a8"/>
<rect x="127.4" y="2402.4" width="245.4" height="243" fill="#000"/>
<g clip-path="url(#k5)" transform="rotate(4 181.7 2540.4)"><rect x="163.6" y="2467.5" width="36.2" height="15" fill="#00f090"/><rect x="163.6" y="2481.9" width="36.2" height="23.4" fill="#ff0080"/><rect x="163.6" y="2504.9" width="36.2" height="30.6" fill="#ff8000"/><rect x="163.6" y="2535" width="36.2" height="9.5" fill="#ff80c0"/><rect x="163.6" y="2544" width="36.2" height="69.8" fill="#00f090"/></g>
<rect x="240.2" y="2473.5" width="4.8" height="14.8" fill="#00f090"/>
<rect x="240.2" y="2488" width="4.8" height="17.2" fill="#ff0080"/>
<rect x="240.2" y="2504.9" width="4.8" height="30.4" fill="#ff8000"/>
<rect x="240.2" y="2535" width="4.8" height="9.3" fill="#f0f"/>
<rect x="240.2" y="2544" width="4.8" height="75.7" fill="#00f090"/>
<rect x="259.5" y="2473.5" width="1.2" height="145.9" fill="#2c2c2c"/>
<rect x="287.8" y="2473.5" width="1.2" height="145.9" fill="#2c2c2c"/>
<rect x="315.6" y="2473.5" width="1.2" height="145.9" fill="#2c2c2c"/>
<rect x="331.8" y="2473.5" width="1.2" height="145.9" fill="#2c2c2c"/>
<rect x="348.1" y="2473.5" width="1.2" height="145.9" fill="#2c2c2c"/>
<rect x="365" y="2473.5" width="1.2" height="145.9" fill="#2c2c2c"/>
<text class="pc" x="249.2" y="2450.6">0%</text>
<text class="pc" x="302.3" y="2450.6">50%</text>
<text class="pc" x="348.7" y="2450.6">100%</text>
<polyline points="260.5,2476.5 264.5,2476.5 275,2475.5 277.5,2475 284,2474.5 295,2475 300,2475.5 307.5,2478 312,2481 318.5,2484 324.5,2486 330,2489.5 336.5,2492 328,2493.5 324.5,2497.5 318,2498 313,2500.5 305.5,2501.5 298.5,2502.5 292.5,2503.5 288,2506 279,2506 273,2506 270.5,2508 274,2514.5 273,2521 278.5,2529.5 283.5,2535 286,2531 292.5,2528.5 295.5,2525 300,2523.5 305.5,2521 311,2518 316.5,2512.5 324.5,2510.5 327.5,2516 327,2523.5 325.5,2527.5 321,2529 315.5,2534.5 310,2538.5 304,2542 300.5,2540 291,2542 288.5,2540.5 280.5,2542.5 273.5,2543 269,2541 267.5,2549.5 267,2556.5 265,2563.5 265,2570 265.5,2576 263.5,2584 268,2590.5 268,2596 267,2604.5 271.5,2610.5 272,2616.5" fill="none" stroke="#f0f" stroke-width="1.9" stroke-dasharray="3.5 3"/>
<polyline points="259.5,2478 267.5,2482.5 271,2485 275.5,2490 280.5,2493 287.5,2495.5 294.5,2496 297,2497.5 305,2500 313,2503 312,2509.5 319,2517 320.5,2522.5 317,2528 310.5,2533 304,2535.5 299.5,2542 291,2543 288,2543 280,2545 272.5,2545 265,2547.5 267.5,2553 264,2560 267,2564.5 266,2572 267,2577.5 265,2583.5 263.5,2588.5 263.5,2596 264,2601.5 264,2607.5 264.5,2613.5" fill="none" stroke="#ff0" stroke-width="1.9" stroke-dasharray="3.5 3"/>
<polyline points="258.5,2478.5 269,2479.5 271.5,2480.5 281.5,2479.5 287,2480 293.5,2479.5 297,2483.5 307,2484.5 311.5,2485.5 318.5,2488 325.5,2490.5 332.5,2494 337.5,2494.5 330.5,2497 323,2498.5 319,2502 311.5,2504 307.5,2504 299.5,2505.5 291.5,2508 286,2508 282,2510 276,2509.5 269,2510 271,2518 267,2522 267,2528.5 269.5,2536 269,2540 268,2547.5 267,2554.5 264,2558.5 274,2560 280,2558.5 286.5,2559.5 290.5,2558.5 298,2558 302,2564.5 304,2570.5 309,2576 316.5,2578.5 320,2582.5 328,2584.5 326.5,2588.5 318,2591.5 313,2597 312,2600.5 305,2604 300,2607 292.5,2609 284,2611.5 280,2615.5 272,2618" fill="none" stroke="#f00" stroke-width="1.9" stroke-dasharray="3.5 3"/>
<polyline points="264.5,2548 270.5,2550.5 275.5,2553.5 284,2557.5 286,2561.5 292.5,2566 297.5,2570 303,2573.5 312,2575.5 317.5,2579 322,2582.5 329,2586.5 338.5,2589 340.5,2589.5 350.5,2591 343.5,2595 338.5,2597 331,2601 321.5,2603 319,2606 310,2608 307.5,2609 299.5,2610.5 291.5,2614 288,2614 279,2615 275.5,2617 269,2618" fill="none" stroke="#0f0" stroke-width="1.9" stroke-dasharray="3.5 3"/>
<polyline points="260.5,2480 264.5,2487.5 268,2493 266,2497.5 271.5,2504.5 273.5,2509.5 272.5,2516.5 271.5,2524 268,2527.5 269.5,2535 268,2540.5 262.5,2548 265,2552 266,2559.5 265,2565 269,2571 268.5,2578 274,2584.5 269,2590.5 268,2597.5 264,2604.5 267.5,2610 263,2616.5" fill="none" stroke="#0ff" stroke-width="1.9" stroke-dasharray="3.5 3"/>
<g filter="url(#bl)"><polyline points="421.1,2479.5 430.7,2529 419.9,2571.2 424.7,2604.3" fill="none" stroke="#b2b2b2" stroke-width="23.7" stroke-linecap="round" stroke-linejoin="round"/><polyline points="421.1,2479.5 430.7,2529 419.9,2571.2 424.7,2604.3" fill="none" stroke="#dcdcdc" stroke-width="5.8" stroke-linecap="round" stroke-linejoin="round"/><rect x="418.1" y="2473.9" width="8.4" height="23.7" fill="#555" transform="rotate(79 422.3 2485.8)"/><rect x="420.5" y="2486.4" width="8.4" height="23.7" fill="#444" transform="rotate(79 424.7 2498.3)"/><rect x="423" y="2505.2" width="10.9" height="23.7" fill="#333" transform="rotate(79 428.4 2517.1)"/><rect x="424.5" y="2520.2" width="10.9" height="23.7" fill="#222" transform="rotate(104.4 429.9 2532)"/><rect x="421.6" y="2536.2" width="8.4" height="23.7" fill="#555" transform="rotate(104.4 425.8 2548.1)"/><rect x="415.6" y="2552.3" width="12.1" height="23.7" fill="#222" transform="rotate(104.4 421.7 2564.1)"/><rect x="416.2" y="2567.3" width="9.6" height="23.7" fill="#333" transform="rotate(81.7 421 2579.1)"/><rect x="419" y="2582.4" width="8.4" height="23.7" fill="#555" transform="rotate(81.7 423.2 2594.3)"/></g>
<rect x="491" y="2402.4" width="355.7" height="243" fill="#fff"/>
<rect x="491" y="2401.4" width="355.7" height="2" fill="#a8a8a8"/>
<rect x="845.8" y="2401.4" width="2" height="245" fill="#a8a8a8"/>
<rect x="491" y="2644.3" width="355.7" height="2" fill="#a8a8a8"/>
<rect x="491" y="2402.4" width="247.2" height="243" fill="#000"/>
<rect x="586.2" y="2402.4" width="1.4" height="243" fill="#5a5a5a"/>
<g clip-path="url(#k6)"><rect x="533.8" y="2437.3" width="35" height="137.4" fill="#0f0"/><rect x="533.8" y="2574.2" width="35" height="8.3" fill="#ff80c0"/><rect x="533.8" y="2582" width="35" height="18.6" fill="#ff8000"/><rect x="533.8" y="2600.1" width="35" height="13.8" fill="#ff0080"/><rect x="533.8" y="2613.4" width="35" height="16.8" fill="#00f090"/></g>
<rect x="599.5" y="2435.5" width="4.8" height="34.7" fill="#0f0"/>
<rect x="599.5" y="2469.9" width="4.8" height="5.1" fill="#0078f8"/>
<rect x="599.5" y="2474.7" width="4.8" height="104" fill="#0f0"/>
<rect x="599.5" y="2578.4" width="4.8" height="23.2" fill="#ff8000"/>
<rect x="599.5" y="2601.3" width="4.8" height="15.4" fill="#ff0080"/>
<rect x="599.5" y="2616.4" width="4.8" height="13.6" fill="#00f090"/>
<rect x="609.8" y="2437.3" width="113.4" height="194.2" fill="none" stroke="#262626" stroke-width="1.2"/>
<rect x="642.4" y="2437.3" width="1.2" height="194.2" fill="#2c2c2c"/>
<rect x="669.5" y="2437.3" width="1.2" height="194.2" fill="#2c2c2c"/>
<rect x="696.6" y="2437.3" width="1.2" height="194.2" fill="#2c2c2c"/>
<text class="pc" x="606.8" y="2426.5">0%</text>
<text class="pc" x="659.2" y="2426.5">50%</text>
<text class="pc" x="708.1" y="2426.5">100%</text>
<polyline points="613,2440 619,2439 627,2439.5 629.5,2439.5 635.5,2441.5 640.5,2440 650,2440 652.5,2441.5 661.5,2441.5 668,2440.5 675.5,2444 678,2444.5 686.5,2447.5 692,2448.5 699.5,2450.5 706.5,2454.5 698,2456.5 694.5,2458 688,2462 679.5,2463.5 675,2466 666.5,2469.5 673.5,2472.5 676,2476.5 682,2482 688.5,2486 693.5,2489.5 695,2493 696.5,2500 690,2504.5 689,2510.5 690.5,2516.5 692.5,2524.5 692.5,2530.5 699.5,2538.5 694.5,2543 688.5,2548 684,2550.5 678,2555.5 673,2560 667.5,2566 661.5,2567.5 655,2571 651,2573.5 642,2577.5 636.5,2581 635.5,2584.5 627.5,2588 624,2591 617,2594.5 616.5,2601.5 615.5,2608 613,2615.5 615.5,2622 613,2628.5" fill="none" stroke="#0f0" stroke-width="1.9" stroke-dasharray="3.5 3"/>
<polyline points="613,2442 615,2447.5 619.5,2452.5 624,2458 626,2463 629,2469 633.5,2475 629,2480.5 630.5,2486 626.5,2493 623,2500 620.5,2505.5 617,2510 622,2517 619.5,2522.5 623,2529.5 623,2534.5 628.5,2541.5 626,2546.5 629.5,2553.5 633,2560 636,2565 638,2572 644,2572.5 650.5,2574 657,2574 663,2575 668.5,2577.5 673,2580.5 679.5,2581.5 686.5,2585 691.5,2586 685,2589 680,2592 672.5,2595.5 666.5,2598 662.5,2600 655,2599.5 647.5,2599.5 641,2601 637.5,2600.5 633,2605 626.5,2610 621,2612.5 615.5,2622 613,2628.5" fill="none" stroke="#ff0" stroke-width="1.9" stroke-dasharray="3.5 3"/>
<polyline points="610.5,2443.5 615,2450.5 618.5,2457.5 618,2464 620,2468.5 622.5,2474.5 622.5,2481 624,2488 624.5,2493 620.5,2498.5 620.5,2505 620,2512 620.5,2517 617,2523 618,2528.5 622,2530.5 626.5,2530.5 636,2533 631.5,2537.5 631,2545.5 628,2553 625.5,2558 619.5,2564 619,2571 619.5,2576.5 624,2583.5 625,2590.5 628.5,2594 634,2597 640,2598 645,2598 655.5,2599.5 661.5,2599.5 667,2601.5 672.5,2603 681,2605.5 688,2605.5 692.5,2606.5 688.5,2609.5 678.5,2612.5 674,2617 667.5,2620 659,2619.5 656.5,2621.5 650,2622.5 641.5,2623.5 635,2626 631.5,2626 624.5,2627 619,2628.5" fill="none" stroke="#f00" stroke-width="1.9" stroke-dasharray="3.5 3"/>
<polyline points="613,2442.5 623.5,2446 629.5,2448 635.5,2449 637.5,2457.5 632,2464 633,2468 630,2476 627.5,2482 624,2486.5 625,2492 620.5,2500 623.5,2505.5 623.5,2510 625.5,2516 630.5,2522.5 630,2528 631,2534.5 632,2539.5 631.5,2548 634.5,2552.5 635,2558.5 636.5,2564 640,2570.5 638,2578 638.5,2582.5 644,2588 642.5,2596.5 651,2598 654,2603 660.5,2607.5 665.5,2611 673,2612.5 667,2614.5 662.5,2617 657.5,2620 648,2621 643.5,2623.5 639,2625 631,2628.5" fill="none" stroke="#f0f" stroke-width="1.9" stroke-dasharray="3.5 3"/>
<polyline points="613,2444.5 614,2451.5 617,2457 621,2462 622,2467.5 623.5,2476 627,2481 625,2487 625.5,2493 624.5,2497.5 623.5,2504 622,2511.5 622,2516.5 625,2524 624,2530 622,2534.5 623.5,2541.5 629.5,2546.5 630,2553.5 634,2558.5 637,2564.5 637.5,2570 633.5,2579 635.5,2584.5 630,2589 629.5,2595.5 629,2602.5 626,2609 628.5,2615 628.5,2622.5 625,2628.5" fill="none" stroke="#0ff" stroke-width="1.9" stroke-dasharray="3.5 3"/>
<g filter="url(#bl)"><polyline points="787.7,2441.5 790.7,2474.7 793.7,2622.4" fill="none" stroke="#b2b2b2" stroke-width="22.7" stroke-linecap="round" stroke-linejoin="round"/><polyline points="787.7,2441.5 790.7,2474.7 793.7,2622.4" fill="none" stroke="#dcdcdc" stroke-width="5.5" stroke-linecap="round" stroke-linejoin="round"/><rect x="784.6" y="2430.2" width="6" height="22.7" fill="#aaa" transform="rotate(84.8 787.7 2441.5)"/><rect x="785.6" y="2460.8" width="9.6" height="22.7" fill="#111" transform="rotate(84.8 790.5 2472.2)"/><rect x="787.4" y="2480.7" width="7.2" height="22.7" fill="#555" transform="rotate(88.8 791 2492.1)"/><rect x="787.8" y="2498.8" width="7.2" height="22.7" fill="#444" transform="rotate(88.8 791.4 2510.2)"/><rect x="788.2" y="2516.9" width="7.2" height="22.7" fill="#555" transform="rotate(88.8 791.8 2528.3)"/><rect x="788.5" y="2535" width="7.2" height="22.7" fill="#444" transform="rotate(88.8 792.1 2546.4)"/><rect x="788.9" y="2553.1" width="7.2" height="22.7" fill="#555" transform="rotate(88.8 792.5 2564.5)"/><rect x="789.3" y="2571.2" width="7.2" height="22.7" fill="#444" transform="rotate(88.8 792.9 2582.6)"/><rect x="789.6" y="2589.3" width="7.2" height="22.7" fill="#444" transform="rotate(88.8 793.2 2600.7)"/><rect x="790.5" y="2603.8" width="6" height="22.7" fill="#555" transform="rotate(88.8 793.5 2615.2)"/></g>
<text x="151.5" y="2690.6" font-size="29" font-weight="bold" fill="#000" text-anchor="start" textLength="225" lengthAdjust="spacingAndGlyphs" xml:space="preserve">SL:  WT2,R1,R2</text>
<text x="579.6" y="2688.8" font-size="29" font-weight="bold" fill="#000" text-anchor="start" textLength="129.7" lengthAdjust="spacingAndGlyphs" xml:space="preserve">SL:  CDT1</text>
<rect x="125.6" y="2708.7" width="356.3" height="259.3" fill="#fff"/>
<rect x="125.6" y="2707.7" width="356.3" height="2" fill="#a8a8a8"/>
<rect x="481" y="2707.7" width="2" height="261.3" fill="#a8a8a8"/>
<rect x="125.6" y="2966.9" width="356.3" height="2" fill="#a8a8a8"/>
<rect x="125.6" y="2708.7" width="252" height="259.3" fill="#000"/>
<rect x="226.2" y="2708.7" width="1.4" height="259.3" fill="#5a5a5a"/>
<path d="M169.6 2866.6 L160.6 2824.4 Q160.6 2797.3 193.8 2793.1" fill="none" stroke="#f00" stroke-width="35" stroke-linecap="round"/>
<ellipse cx="199.8" cy="2791.3" rx="8.4" ry="13.3" fill="#ffb400"/>
<ellipse cx="195.6" cy="2797.3" rx="5.4" ry="9.6" fill="#0078f8"/>
<g clip-path="url(#k7)"><rect x="156.4" y="2855.8" width="35" height="4.1" fill="#f00"/><rect x="156.4" y="2859.4" width="35" height="5.3" fill="#ffb400"/><rect x="156.4" y="2864.2" width="35" height="18" fill="#f0f"/><rect x="156.4" y="2881.7" width="35" height="4.1" fill="#ff0"/><rect x="156.4" y="2885.3" width="35" height="18" fill="#c000ff"/></g>
<rect x="239" y="2782.2" width="4.8" height="12.4" fill="#0078f8"/>
<rect x="239" y="2794.3" width="4.8" height="60.6" fill="#f00"/>
<rect x="239" y="2854.6" width="4.8" height="30.4" fill="#f0f"/>
<rect x="239" y="2884.7" width="4.8" height="17.2" fill="#c000ff"/>
<rect x="249.8" y="2781" width="108.5" height="120.6" fill="none" stroke="#262626" stroke-width="1.2"/>
<rect x="277.6" y="2781" width="1.2" height="120.6" fill="#2c2c2c"/>
<rect x="304.7" y="2781" width="1.2" height="120.6" fill="#2c2c2c"/>
<rect x="331.8" y="2781" width="1.2" height="120.6" fill="#2c2c2c"/>
<text class="pc" x="251" y="2767.1">0%</text>
<text class="pc" x="303.5" y="2767.1">50%</text>
<text class="pc" x="350.5" y="2767.1">100%</text>
<polyline points="252,2783 256.5,2784 262.5,2782.5 270.5,2784.5 274,2783 283,2784.5 285,2784 291.5,2785.5 298,2786 306.5,2784 312.5,2785 315.5,2793 316.5,2798 322.5,2805.5 325.5,2813 329,2820.5 333,2827.5 325,2833 321.5,2838 318.5,2842.5 312.5,2847.5 318.5,2855.5 322,2860.5 319.5,2862.5 311.5,2863.5 303,2865.5 299,2867 292.5,2868.5 288,2871.5 280,2872 277,2877 275,2881.5 268,2887 263.5,2891 260.5,2896 257,2900" fill="none" stroke="#f00" stroke-width="1.9" stroke-dasharray="3.5 3"/>
<polyline points="251.5,2786 255.5,2786 263.5,2786.5 270.5,2788 273.5,2787 280.5,2787.5 277.5,2793.5 276.5,2801 276.5,2805.5 274.5,2812.5 273,2817.5 270,2823 276.5,2831 273.5,2837 280,2842.5 277.5,2848.5 281,2854 287.5,2854.5 295.5,2857.5 300,2859 306,2859 311,2860 317,2863 328,2863 320,2870 318,2876.5 309.5,2882.5 307,2884.5 298.5,2885 295,2887.5 286.5,2890.5 280.5,2893.5 274,2893.5 269,2897" fill="none" stroke="#f0f" stroke-width="1.9" stroke-dasharray="3.5 3"/>
<polyline points="251.5,2787.5 258.5,2788 265,2789.5 269,2789 273.5,2789 281.5,2789 288,2790 293,2792.5 297.5,2788.5 305,2787.5 305,2793 304,2801 302,2806 298,2813 298.5,2818 296.5,2824.5 297,2831 297,2835.5 293.5,2842.5 293.5,2848 298,2851 304.5,2855.5 313.5,2860.5 319,2864 325.5,2867 321.5,2870.5 317,2876.5 311.5,2881.5 311,2886 306,2890.5 298.5,2893 291,2892.5 288,2894 279,2895.5 274.5,2896.5 268.5,2897.5 263.5,2898.5 257,2900" fill="none" stroke="#0ff" stroke-width="1.9" stroke-dasharray="3.5 3"/>
<polyline points="248.5,2787.5 258,2793 257.5,2798.5 263,2800.5 269.5,2805.5 267.5,2812.5 264.5,2818.5 262.5,2824.5 263.5,2829 261,2835 259.5,2843.5 263,2849 266.5,2853.5 270.5,2861.5 267.5,2867.5 271.5,2871.5 280.5,2876.5 285,2878.5 290.5,2882 292.5,2886.5 297,2890.5 303.5,2893 300.5,2894.5 295.5,2895.5 289.5,2896 283.5,2898 273,2898.5 268,2899 264,2900 257,2900" fill="none" stroke="#ff0" stroke-width="1.9" stroke-dasharray="3.5 3"/>
<polyline points="252,2785 258,2793.5 260.5,2797.5 262.5,2804.5 264.5,2813.5 261,2819.5 263.5,2823.5 259.5,2830.5 262.5,2836.5 257.5,2841 256.5,2849.5 256,2854.5 256,2861 261.5,2863 269.5,2867.5 273.5,2872 280.5,2873 282,2877 288,2882.5 295,2883.5 285,2888 281.5,2889.5 273.5,2891 269,2894.5 263,2897.5 254,2900" fill="none" stroke="#0f0" stroke-width="1.9" stroke-dasharray="3.5 3"/>
<g filter="url(#bl)"><polyline points="454.8,2791.3 413.8,2809.3 406.6,2824.4 425.9,2893.8" fill="none" stroke="#9a9a9a" stroke-width="19.8" stroke-linecap="round" stroke-linejoin="round"/><polyline points="454.8,2791.3 413.8,2809.3 406.6,2824.4 425.9,2893.8" fill="none" stroke="#dcdcdc" stroke-width="4.8" stroke-linecap="round" stroke-linejoin="round"/><rect x="445.4" y="2784.1" width="6.6" height="19.8" fill="#707070" transform="rotate(156.2 448.7 2794)"/><rect x="432.8" y="2789.5" width="7.4" height="19.8" fill="#707070" transform="rotate(156.2 436.5 2799.3)"/><rect x="420.6" y="2794.8" width="7.3" height="19.8" fill="#707070" transform="rotate(156.2 424.3 2804.7)"/><rect x="410.2" y="2801.2" width="5.6" height="19.8" fill="#555" transform="rotate(115.6 413 2811.1)"/><rect x="404.1" y="2813.2" width="6.3" height="19.8" fill="#707070" transform="rotate(115.6 407.2 2823.1)"/><rect x="407.7" y="2826" width="4.2" height="19.8" fill="#707070" transform="rotate(74.5 409.8 2835.9)"/><rect x="411" y="2838.9" width="4.7" height="19.8" fill="#555" transform="rotate(74.5 413.4 2848.7)"/><rect x="414" y="2851.7" width="6" height="19.8" fill="#707070" transform="rotate(74.5 416.9 2861.6)"/><rect x="418.2" y="2864.6" width="4.6" height="19.8" fill="#555" transform="rotate(74.5 420.5 2874.5)"/><rect x="420.5" y="2877.4" width="7.3" height="19.8" fill="#555" transform="rotate(74.5 424.1 2887.3)"/></g>
<rect x="491" y="2708.7" width="361.2" height="259.3" fill="#fff"/>
<rect x="491" y="2707.7" width="361.2" height="2" fill="#a8a8a8"/>
<rect x="851.2" y="2707.7" width="2" height="261.3" fill="#a8a8a8"/>
<rect x="491" y="2966.9" width="361.2" height="2" fill="#a8a8a8"/>
<rect x="491" y="2708.7" width="260.5" height="259.3" fill="#000"/>
<path d="M573.6 2761.1 Q537.4 2812.4 540.5 2872.7 L557.3 2929.9" fill="none" stroke="#0ff" stroke-width="44.6" stroke-linecap="round"/>
<path d="M573.6 2761.1 L553.7 2793.1" fill="none" stroke="#f0f" stroke-width="44.6" stroke-linecap="round"/>
<path d="M575.4 2759.3 L568.2 2770.2" fill="none" stroke="#c000ff" stroke-width="43.4" stroke-linecap="round"/>
<rect x="615.8" y="2741.2" width="4.8" height="5.1" fill="#ff0"/>
<rect x="615.8" y="2746" width="4.8" height="33.5" fill="#c000ff"/>
<rect x="615.8" y="2779.2" width="4.8" height="27.4" fill="#f0f"/>
<rect x="615.8" y="2806.3" width="4.8" height="139" fill="#0ff"/>
<rect x="615.8" y="2945" width="4.8" height="3.9" fill="#0078f8"/>
<rect x="684.6" y="2741.2" width="1.2" height="206.8" fill="#2c2c2c"/>
<rect x="711.7" y="2741.2" width="1.2" height="206.8" fill="#2c2c2c"/>
<rect x="738.8" y="2741.2" width="1.2" height="206.8" fill="#2c2c2c"/>
<text class="pc" x="629.1" y="2732.2">0%</text>
<text class="pc" x="680.3" y="2732.2">50%</text>
<text class="pc" x="728.6" y="2732.2">100%</text>
<polyline points="626,2744.5 633,2746 641,2744 645.5,2745 653.5,2745.5 659.5,2745.5 664.5,2746 672.5,2745 679.5,2749 684,2749 694,2751 698.5,2753.5 705,2755 712.5,2758 720.5,2758 724.5,2762 721,2765.5 714.5,2769 708,2772 704.5,2777 700.5,2780 692.5,2784 690,2787 684.5,2790.5 679.5,2794 671,2796.5 666,2800.5 661,2801.5 654,2804 648.5,2806.5 640.5,2810.5 636.5,2812 636.5,2818 633.5,2823.5 633.5,2830 634.5,2836.5 634.5,2842 633.5,2848.5 628.5,2854 630,2862 628,2867.5 627.5,2873.5 626.5,2878.5 631,2884 628,2889.5 628.5,2896 631.5,2902 630.5,2908 632,2915.5 632.5,2920 633.5,2928 633.5,2932 635,2940 634,2945" fill="none" stroke="#ff0" stroke-width="1.9" stroke-dasharray="3.5 3"/>
<polyline points="627,2745 633,2747 643,2748.5 649.5,2748.5 653,2750.5 661.5,2751 668,2751.5 671.5,2754 678.5,2757 686.5,2759 694.5,2760.5 688.5,2763 685.5,2767.5 680.5,2769 673,2773.5 666,2775 671.5,2779 680.5,2782.5 686.5,2787.5 691.5,2791.5 685.5,2793.5 679.5,2794.5 674.5,2796.5 668,2799.5 662.5,2800 656.5,2803.5 649,2804 643,2807.5 640,2811 640.5,2819 640.5,2824 640,2830 637.5,2835.5 633,2841.5 632,2848.5 635.5,2854 638.5,2860.5 635.5,2866 639.5,2873.5 638,2877.5 642,2884 644,2890.5 643.5,2896.5 643,2902.5 639,2910 636.5,2915.5 635,2921 635,2928 632,2933 632,2940 631,2945" fill="none" stroke="#f00" stroke-width="1.9" stroke-dasharray="3.5 3"/>
<polyline points="630,2749.5 630.5,2753.5 634.5,2759.5 638,2764 644,2770.5 648,2775 653.5,2777.5 659.5,2781.5 669,2783.5 674.5,2788.5 678,2791 685,2793 689.5,2793 697.5,2793.5 703.5,2795 696,2798 690.5,2801 687,2802.5 681,2807.5 672,2808 665,2813.5 660,2817 655.5,2820 650.5,2822.5 648.5,2826 642,2831.5 648.5,2835.5 654,2838 654.5,2844 661,2846.5 664.5,2851.5 668.5,2855.5 671,2862 671,2867.5 669.5,2872.5 668.5,2878.5 667.5,2885 666.5,2891.5 667,2896 668,2903 672,2908.5 670,2916 675,2921.5 667,2924 662,2928 656,2933 652.5,2937 647.5,2940 643,2945" fill="none" stroke="#0ff" stroke-width="1.9" stroke-dasharray="3.5 3"/>
<polyline points="629,2746.5 633,2752 639,2759.5 645,2765 648.5,2765 654.5,2768.5 660.5,2768.5 666.5,2769 676,2770 680,2774.5 673.5,2778 670.5,2781.5 665.5,2785.5 665,2792 661.5,2794.5 656,2800 653.5,2806.5 648.5,2814 644.5,2819 647,2824.5 642.5,2832 638,2837 638.5,2842 639,2848 638.5,2855 640,2860 640,2867 638.5,2873 639,2880 641,2885.5 642,2890.5 640.5,2895.5 645.5,2903 641.5,2909 641.5,2914 636,2922 636,2927.5 636.5,2934 635,2937.5 631,2945" fill="none" stroke="#f0f" stroke-width="1.9" stroke-dasharray="3.5 3"/>
<polyline points="627,2748 636,2746 638.5,2746 644.5,2746.5 655,2747 659.5,2745.5 665.5,2748 673.5,2746 678.5,2747 686.5,2745 680,2748 673,2750.5 666.5,2753.5 660.5,2755 653,2759 646.5,2760.5 644.5,2763.5 641,2769.5 642.5,2775 640.5,2783.5 636.5,2788 639,2794.5 635.5,2799 634.5,2806 635,2811.5 634.5,2819 637.5,2824 636,2830.5 640,2835.5 641.5,2843 638.5,2849 639,2853.5 642.5,2860 642,2866.5 645.5,2873.5 639.5,2879 641,2884.5 642.5,2890.5 640,2898 639,2903 638.5,2910 638.5,2915.5 636.5,2919.5 637.5,2927 637,2934 632.5,2938 634,2945" fill="none" stroke="#0f0" stroke-width="1.9" stroke-dasharray="3.5 3"/>
<g filter="url(#bl)"><polyline points="817.8,2755.1 782.8,2806.3 784.6,2860.6 805.8,2936" fill="none" stroke="#b2b2b2" stroke-width="27.7" stroke-linecap="round" stroke-linejoin="round"/><polyline points="817.8,2755.1 782.8,2806.3 784.6,2860.6 805.8,2936" fill="none" stroke="#dcdcdc" stroke-width="6.8" stroke-linecap="round" stroke-linejoin="round"/><rect x="811.5" y="2746.3" width="5.8" height="27.7" fill="#555" transform="rotate(124.3 814.4 2760.1)"/><rect x="803.6" y="2756.3" width="7.9" height="27.7" fill="#555" transform="rotate(124.3 807.5 2770.2)"/><rect x="797.5" y="2766.4" width="6.3" height="27.7" fill="#555" transform="rotate(124.3 800.7 2780.2)"/><rect x="791.5" y="2776.4" width="4.6" height="27.7" fill="#707070" transform="rotate(124.3 793.8 2790.2)"/><rect x="783.5" y="2786.5" width="6.8" height="27.7" fill="#707070" transform="rotate(124.3 787 2800.3)"/><rect x="780.1" y="2797.3" width="5.8" height="27.7" fill="#555" transform="rotate(88.1 783 2811.2)"/><rect x="780.3" y="2809.5" width="6.1" height="27.7" fill="#707070" transform="rotate(88.1 783.4 2823.3)"/><rect x="781.4" y="2821.7" width="4.9" height="27.7" fill="#707070" transform="rotate(88.1 783.8 2835.5)"/><rect x="781.9" y="2833.8" width="4.7" height="27.7" fill="#555" transform="rotate(88.1 784.2 2847.7)"/><rect x="780.6" y="2846" width="8.1" height="27.7" fill="#707070" transform="rotate(88.1 784.6 2859.8)"/><rect x="784" y="2857.7" width="7.5" height="27.7" fill="#707070" transform="rotate(74.4 787.7 2871.5)"/><rect x="787.3" y="2869.4" width="7.4" height="27.7" fill="#555" transform="rotate(74.4 791 2883.3)"/><rect x="791.5" y="2881.1" width="5.4" height="27.7" fill="#555" transform="rotate(74.4 794.3 2895)"/><rect x="793.9" y="2892.8" width="7.3" height="27.7" fill="#707070" transform="rotate(74.4 797.6 2906.7)"/><rect x="798.5" y="2904.6" width="4.6" height="27.7" fill="#555" transform="rotate(74.4 800.8 2918.4)"/><rect x="801.6" y="2916.3" width="5.1" height="27.7" fill="#555" transform="rotate(74.4 804.1 2930.1)"/></g>
<text x="1054.8" y="2550" font-size="29" font-weight="bold" fill="#000" text-anchor="start" textLength="139.8" lengthAdjust="spacingAndGlyphs">SL: R2 Sc2</text>
<rect x="954.7" y="2577.2" width="336.4" height="145.9" fill="#fff"/>
<rect x="954.7" y="2576.2" width="336.4" height="2" fill="#a8a8a8"/>
<rect x="1290.1" y="2576.2" width="2" height="147.9" fill="#a8a8a8"/>
<rect x="954.7" y="2722.1" width="336.4" height="2" fill="#a8a8a8"/>
<rect x="954.7" y="2577.2" width="250.2" height="145.9" fill="#000"/>
<g clip-path="url(#k8)"><rect x="996.3" y="2616.4" width="47" height="86.2" fill="#9a4242"/><ellipse cx="1007.8" cy="2622.6" rx="13.1" ry="8.3" fill="#f0f"/><ellipse cx="1011.7" cy="2634.9" rx="11" ry="7.3" fill="#f0f"/><ellipse cx="1024.8" cy="2647.2" rx="12.7" ry="6.3" fill="#f0f"/><ellipse cx="1004.3" cy="2659.5" rx="13" ry="7.3" fill="#f0f"/><ellipse cx="1028.4" cy="2671.8" rx="8" ry="7.3" fill="#f0f"/><ellipse cx="1027.1" cy="2684.1" rx="9.4" ry="8.8" fill="#f0f"/><ellipse cx="1033" cy="2696.5" rx="8.2" ry="6.1" fill="#f0f"/><ellipse cx="1022.8" cy="2622.4" rx="7" ry="6" fill="#ff8000"/></g>
<rect x="1068" y="2616.4" width="4.8" height="10.9" fill="#f0f"/>
<rect x="1068" y="2627" width="4.8" height="10.9" fill="#9a4242"/>
<rect x="1068" y="2637.5" width="4.8" height="10.9" fill="#f0f"/>
<rect x="1068" y="2648.1" width="4.8" height="10.9" fill="#9a4242"/>
<rect x="1068" y="2658.6" width="4.8" height="10.9" fill="#f0f"/>
<rect x="1068" y="2669.2" width="4.8" height="10.9" fill="#9a4242"/>
<rect x="1068" y="2679.7" width="4.8" height="10.9" fill="#f0f"/>
<rect x="1068" y="2690.3" width="4.8" height="10.9" fill="#9a4242"/>
<rect x="1106.6" y="2616.4" width="1.2" height="84.4" fill="#2c2c2c"/>
<rect x="1133.8" y="2616.4" width="1.2" height="84.4" fill="#2c2c2c"/>
<rect x="1160.9" y="2616.4" width="1.2" height="84.4" fill="#2c2c2c"/>
<rect x="1188" y="2616.4" width="1.2" height="84.4" fill="#2c2c2c"/>
<text class="pc" x="1080.1" y="2599.5">0%</text>
<text class="pc" x="1130.1" y="2599.5">50%</text>
<text class="pc" x="1177.2" y="2599.5">100%</text>
<polyline points="1081,2619 1087,2618.5 1096.5,2621 1099,2622.5 1108,2623 1111,2624.5 1119,2625.5 1127.5,2628 1133,2628.5 1136.5,2631.5 1141,2634.5 1148.5,2635 1154.5,2637 1161.5,2643 1164.5,2648 1167,2653 1175.5,2659.5 1171,2663.5 1163,2668 1160,2674 1155.5,2679.5 1150,2681.5 1145,2683 1139.5,2686 1129,2687.5 1125.5,2689.5 1119.5,2691.5 1112,2693.5 1106,2694.5 1102.5,2695.5 1095,2697.5 1089,2698.5 1083,2699" fill="none" stroke="#0ff" stroke-width="1.9" stroke-dasharray="3.5 3"/>
<polyline points="1078,2619.5 1087.5,2620.5 1095,2623 1100.5,2626 1108.5,2629 1114.5,2631.5 1120.5,2634.5 1125.5,2635.5 1135,2638 1142,2640.5 1144.5,2642.5 1149.5,2650.5 1149,2656 1150,2662.5 1153.5,2667 1146,2672 1141,2676.5 1138,2679 1135,2683.5 1130,2687 1127.5,2691.5 1121,2692 1114.5,2695 1106.5,2693.5 1100.5,2696 1094,2697 1087,2698 1083,2699" fill="none" stroke="#ff0" stroke-width="1.9" stroke-dasharray="3.5 3"/>
<polyline points="1081.5,2620.5 1086.5,2623.5 1092.5,2628 1098.5,2635 1104,2637.5 1104,2643 1110.5,2649.5 1116,2654.5 1111.5,2662.5 1111,2668 1106.5,2672.5 1106,2681 1104.5,2682.5 1100,2685.5 1093.5,2692 1087,2695.5 1083,2698" fill="none" stroke="#f0f" stroke-width="1.9" stroke-dasharray="3.5 3"/>
<polyline points="1081,2621 1083,2627.5 1086,2633.5 1089.5,2639 1094,2642 1096.5,2648.5 1097,2656.5 1098,2661.5 1095.5,2667.5 1092.5,2674 1090,2679.5 1088.5,2684.5 1087,2690 1083,2696.5" fill="none" stroke="#f00" stroke-width="1.9" stroke-dasharray="3.5 3"/>
<polyline points="1076.5,2624 1081,2630.5 1088,2636.5 1087,2642.5 1096.5,2648.5 1099,2655.5 1102,2661.5 1098.5,2667 1096.5,2672 1091,2677 1087.5,2681.5 1083,2691 1080,2696.5" fill="none" stroke="#0f0" stroke-width="1.9" stroke-dasharray="3.5 3"/>
<g filter="url(#bl)"><polyline points="1250.7,2625.4 1247.1,2658.6 1249.5,2688.8" fill="none" stroke="#b2b2b2" stroke-width="24.7" stroke-linecap="round" stroke-linejoin="round"/><polyline points="1250.7,2625.4 1247.1,2658.6 1249.5,2688.8" fill="none" stroke="#dcdcdc" stroke-width="6" stroke-linecap="round" stroke-linejoin="round"/><rect x="1245" y="2616.2" width="10.9" height="24.7" fill="#111" transform="rotate(96.2 1250.4 2628.6)"/><rect x="1244.4" y="2632.1" width="8.4" height="24.7" fill="#444" transform="rotate(96.2 1248.7 2644.4)"/><rect x="1243.1" y="2644.7" width="8.4" height="24.7" fill="#555" transform="rotate(96.2 1247.3 2657.1)"/><rect x="1243.8" y="2657.4" width="8.4" height="24.7" fill="#444" transform="rotate(85.4 1248 2669.7)"/><rect x="1244.8" y="2670.1" width="8.4" height="24.7" fill="#444" transform="rotate(85.4 1249 2682.4)"/></g>
<rect x="953.5" y="2741.8" width="335.8" height="145.9" fill="#fff"/>
<rect x="953.5" y="2740.8" width="335.8" height="2" fill="#a8a8a8"/>
<rect x="953.5" y="2886.7" width="335.8" height="2" fill="#a8a8a8"/>
<rect x="953.5" y="2741.8" width="251.4" height="145.9" fill="#000"/>
<rect x="1052.3" y="2741.8" width="1.4" height="145.9" fill="#5a5a5a"/>
<g clip-path="url(#k9)"><rect x="997.5" y="2770.2" width="41" height="90.4" fill="#9a4242"/><ellipse cx="1031.1" cy="2776.6" rx="13.7" ry="6.2" fill="#f0f"/><ellipse cx="1006.1" cy="2789.5" rx="13" ry="8.2" fill="#f0f"/><ellipse cx="1022.9" cy="2802.5" rx="9.8" ry="7.8" fill="#f0f"/><ellipse cx="1021.1" cy="2815.4" rx="11.5" ry="6.5" fill="#f0f"/><ellipse cx="1016" cy="2828.3" rx="10.4" ry="8.2" fill="#f0f"/><ellipse cx="1032.2" cy="2841.2" rx="13.7" ry="7.6" fill="#f0f"/><ellipse cx="1016.4" cy="2854.1" rx="9.6" ry="6.1" fill="#f0f"/><ellipse cx="1015.6" cy="2777.4" rx="6" ry="6" fill="#fff"/></g>
<rect x="1068" y="2779.2" width="4.8" height="10.3" fill="#f0f"/>
<rect x="1068" y="2789.2" width="4.8" height="10.3" fill="#9a4242"/>
<rect x="1068" y="2799.2" width="4.8" height="10.3" fill="#f0f"/>
<rect x="1068" y="2809.2" width="4.8" height="10.3" fill="#9a4242"/>
<rect x="1068" y="2819.2" width="4.8" height="10.3" fill="#f0f"/>
<rect x="1068" y="2829.2" width="4.8" height="10.3" fill="#9a4242"/>
<rect x="1068" y="2839.3" width="4.8" height="10.3" fill="#f0f"/>
<rect x="1068" y="2849.3" width="4.8" height="10.3" fill="#9a4242"/>
<rect x="1068" y="2859.3" width="4.8" height="10.3" fill="#f0f"/>
<rect x="1106.6" y="2779.2" width="1.2" height="90.4" fill="#2c2c2c"/>
<rect x="1133.8" y="2779.2" width="1.2" height="90.4" fill="#2c2c2c"/>
<rect x="1160.9" y="2779.2" width="1.2" height="90.4" fill="#2c2c2c"/>
<rect x="1188" y="2779.2" width="1.2" height="90.4" fill="#2c2c2c"/>
<text class="pc" x="1080.1" y="2764.1">0%</text>
<text class="pc" x="1130.1" y="2764.1">50%</text>
<text class="pc" x="1177.2" y="2764.1">100%</text>
<polyline points="1086,2782 1090.5,2784.5 1099,2786 1106,2788 1111,2790.5 1117,2791.5 1123,2794 1131.5,2797 1139.5,2799.5 1144,2802.5 1150,2807 1156.5,2808.5 1160.5,2812.5 1166,2817.5 1167,2825 1170,2830 1172.5,2836.5 1175.5,2841.5 1169.5,2845.5 1161,2847.5 1154,2852 1150.5,2853.5 1142.5,2856.5 1136,2860 1130.5,2862.5 1127.5,2863 1119,2863.5 1114.5,2865 1108.5,2865.5 1099.5,2866.5 1097,2867.5 1089,2868" fill="none" stroke="#ff0" stroke-width="1.9" stroke-dasharray="3.5 3"/>
<polyline points="1084,2782.5 1091,2784 1099.5,2787.5 1104,2789 1110,2793.5 1115.5,2795.5 1121,2798 1124.5,2800.5 1131,2805 1136,2807.5 1141.5,2811.5 1146.5,2814 1151.5,2819 1149.5,2825 1151,2829.5 1154,2836 1155.5,2843.5 1150.5,2846.5 1143,2850.5 1139,2854 1133.5,2858 1125,2859.5 1120,2862.5 1112.5,2863 1109,2865 1099,2865.5 1093,2865.5 1089,2868" fill="none" stroke="#0ff" stroke-width="1.9" stroke-dasharray="3.5 3"/>
<polyline points="1085,2783 1088.5,2788 1092,2791.5 1096.5,2798 1103,2801 1104.5,2805.5 1110.5,2812 1112.5,2819.5 1111.5,2825 1113.5,2831.5 1110.5,2836 1111.5,2842 1103.5,2849.5 1102,2856 1094.5,2858.5 1092,2862.5 1083,2866.5" fill="none" stroke="#f0f" stroke-width="1.9" stroke-dasharray="3.5 3"/>
<polyline points="1086,2784.5 1088,2789.5 1089.5,2794.5 1090,2803 1095,2808 1096.5,2812 1096.5,2818.5 1101.5,2824.5 1099.5,2831.5 1103,2837 1098.5,2843 1096.5,2849.5 1091.5,2854.5 1088.5,2859.5 1083,2865.5" fill="none" stroke="#f00" stroke-width="1.9" stroke-dasharray="3.5 3"/>
<polyline points="1082,2786 1088,2792.5 1088,2800.5 1089.5,2807.5 1097,2812.5 1099.5,2819 1106,2825 1108.5,2829 1102.5,2835.5 1102.5,2843.5 1094,2849 1092.5,2853 1086.5,2860.5 1082,2865.5" fill="none" stroke="#0f0" stroke-width="1.9" stroke-dasharray="3.5 3"/>
<g filter="url(#bl)"><polyline points="1247.7,2782.2 1247.7,2863.6" fill="none" stroke="#b2b2b2" stroke-width="25.7" stroke-linecap="round" stroke-linejoin="round"/><polyline points="1247.7,2782.2 1247.7,2863.6" fill="none" stroke="#dcdcdc" stroke-width="6.3" stroke-linecap="round" stroke-linejoin="round"/><rect x="1243.8" y="2774.4" width="7.9" height="25.7" fill="#555" transform="rotate(90 1247.7 2787.3)"/><rect x="1244" y="2784.6" width="7.4" height="25.7" fill="#707070" transform="rotate(90 1247.7 2797.5)"/><rect x="1243.7" y="2794.8" width="8" height="25.7" fill="#707070" transform="rotate(90 1247.7 2807.7)"/><rect x="1243.9" y="2805" width="7.7" height="25.7" fill="#555" transform="rotate(90 1247.7 2817.8)"/><rect x="1243.2" y="2815.1" width="9.1" height="25.7" fill="#707070" transform="rotate(90 1247.7 2828)"/><rect x="1244.4" y="2825.3" width="6.6" height="25.7" fill="#555" transform="rotate(90 1247.7 2838.2)"/><rect x="1243.1" y="2835.5" width="9.2" height="25.7" fill="#555" transform="rotate(90 1247.7 2848.4)"/><rect x="1245.1" y="2845.7" width="5.3" height="25.7" fill="#707070" transform="rotate(90 1247.7 2858.5)"/></g>
<text x="2304.8" y="1721" font-size="44.5" font-weight="bold" fill="#000" text-anchor="start" textLength="468" lengthAdjust="spacingAndGlyphs">Comparative aCGH</text>
<rect x="1354.2" y="1746.4" width="1169.4" height="1188" fill="none" stroke="#000" stroke-width="4.8"/>
<rect x="2545.7" y="1746.4" width="1172.6" height="1188" fill="none" stroke="#000" stroke-width="4.8"/>
<rect x="1371" y="2560.7" width="1122.2" height="339.6" fill="#000"/>
<rect x="2570.9" y="2566.4" width="1121.6" height="340.1" fill="#000"/>
<text x="1476.8" y="1814.8" font-size="27.7" font-weight="bold" fill="#000" text-anchor="start" textLength="60" lengthAdjust="spacingAndGlyphs">WT1</text>
<text x="1697.6" y="1814.8" font-size="27.7" font-weight="bold" fill="#000" text-anchor="start" textLength="61" lengthAdjust="spacingAndGlyphs">WT2</text>
<text x="1910.4" y="1814.8" font-size="27.7" font-weight="bold" fill="#000" text-anchor="start" textLength="70" lengthAdjust="spacingAndGlyphs">CDT1</text>
<text x="2116.4" y="1814.8" font-size="27.7" font-weight="bold" fill="#000" text-anchor="start" textLength="34" lengthAdjust="spacingAndGlyphs">R1</text>
<text x="2320" y="1814.8" font-size="27.7" font-weight="bold" fill="#000" text-anchor="start" textLength="34" lengthAdjust="spacingAndGlyphs">R2</text>
<text class="bl" x="1475.2" y="1882.7">p36.3</text>
<text class="bl" x="1475.2" y="1902.6">p36.2</text>
<text class="bl" x="1475.2" y="1922.5">p36.1</text>
<text class="bl" x="1475.2" y="1942.4">p35</text>
<text class="bl" x="1475.2" y="1962.3">p34.3</text>
<text class="bl" x="1475.2" y="1982.2">p34.2</text>
<text class="bl" x="1475.2" y="2002.2">p34.1</text>
<text class="bl" x="1475.2" y="2022.1">p33</text>
<text class="bl" x="1475.2" y="2042">p32</text>
<text class="bl" x="1475.2" y="2061.9">p31.3</text>
<text class="bl" x="1475.2" y="2081.8">p31.2</text>
<text class="bl" x="1475.2" y="2101.7">p31.1</text>
<text class="bl" x="1475.2" y="2121.6">p22.3</text>
<text class="bl" x="1475.2" y="2141.5">p22.1</text>
<text class="bl" x="1475.2" y="2161.4">p21</text>
<text class="bl" x="1475.2" y="2181.4">p13.3</text>
<text class="bl" x="1475.2" y="2241.1">q12</text>
<text class="bl" x="1475.2" y="2261">q21.1</text>
<text class="bl" x="1475.2" y="2280.9">q21.3</text>
<text class="bl" x="1475.2" y="2300.8">q22</text>
<text class="bl" x="1475.2" y="2320.7">q23</text>
<text class="bl" x="1475.2" y="2340.7">q24</text>
<text class="bl" x="1475.2" y="2360.6">q25</text>
<text class="bl" x="1475.2" y="2380.5">q31</text>
<text class="bl" x="1475.2" y="2400.4">q32.1</text>
<text class="bl" x="1475.2" y="2420.3">q32.3</text>
<text class="bl" x="1475.2" y="2440.2">q41</text>
<text class="bl" x="1475.2" y="2460.1">q42.1</text>
<text class="bl" x="1475.2" y="2480">q42.3</text>
<text class="bl" x="1475.2" y="2499.9">q43</text>
<text class="bl" x="1475.2" y="2519.9">q44</text>
<line x1="1515.4" y1="1871.1" x2="1515.4" y2="2526.6" stroke="#a8a8a8" stroke-width="1.4" stroke-dasharray="3.5 4"/>
<line x1="1523.9" y1="1871.1" x2="1523.9" y2="2526.6" stroke="#a8a8a8" stroke-width="1.4" stroke-dasharray="3.5 4"/>
<line x1="1538.1" y1="1871.1" x2="1538.1" y2="2526.6" stroke="#a8a8a8" stroke-width="1.4" stroke-dasharray="3.5 4"/>
<line x1="1552.2" y1="1871.1" x2="1552.2" y2="2526.6" stroke="#a8a8a8" stroke-width="1.4" stroke-dasharray="3.5 4"/>
<line x1="1560.7" y1="1871.1" x2="1560.7" y2="2526.6" stroke="#a8a8a8" stroke-width="1.4" stroke-dasharray="3.5 4"/>
<line x1="1574.8" y1="1871.1" x2="1574.8" y2="2526.6" stroke="#a8a8a8" stroke-width="1.4" stroke-dasharray="3.5 4"/>
<line x1="1589" y1="1871.1" x2="1589" y2="2526.6" stroke="#a8a8a8" stroke-width="1.4" stroke-dasharray="3.5 4"/>
<text x="1525" y="1856.9" font-size="13" font-weight="bold" fill="#222" text-anchor="middle">1</text>
<text x="1552.2" y="1867.1" font-size="8" font-weight="normal" fill="#aaa" text-anchor="middle">-4 -2 -1  0 +1 +2 +4</text>
<rect x="1479.8" y="1873.9" width="14.1" height="650.7" fill="#fff" stroke="#333" stroke-width="1.3"/>
<rect x="1480.4" y="1873.9" width="12.9" height="9.6" fill="#bebebe"/>
<rect x="1480.4" y="1883.5" width="12.9" height="8.5" fill="#848484"/>
<rect x="1480.4" y="1903.3" width="12.9" height="11.3" fill="#595959"/>
<rect x="1480.4" y="1926" width="12.9" height="11.3" fill="#848484"/>
<rect x="1480.4" y="1945.8" width="12.9" height="8.5" fill="#848484"/>
<rect x="1480.4" y="1962.7" width="12.9" height="5.7" fill="#929292"/>
<rect x="1480.4" y="1976.9" width="12.9" height="14.1" fill="#bebebe"/>
<rect x="1480.4" y="1993.9" width="12.9" height="14.1" fill="#4a4a4a"/>
<rect x="1480.4" y="2022.2" width="12.9" height="8.5" fill="#767676"/>
<rect x="1480.4" y="2033.5" width="12.9" height="22.6" fill="#929292"/>
<rect x="1480.4" y="2056.1" width="12.9" height="42.4" fill="#434343"/>
<rect x="1480.4" y="2107" width="12.9" height="11.3" fill="#4a4a4a"/>
<rect x="1480.4" y="2124" width="12.9" height="11.3" fill="#595959"/>
<rect x="1480.4" y="2141" width="12.9" height="14.1" fill="#4a4a4a"/>
<rect x="1480.4" y="2166.5" width="12.9" height="17" fill="#848484"/>
<rect x="1480.4" y="2183.4" width="12.9" height="9.6" fill="#929292"/>
<rect x="1480.4" y="2262.6" width="12.9" height="5.7" fill="#3c3c3c"/>
<rect x="1480.4" y="2274" width="12.9" height="5.7" fill="#3c3c3c"/>
<rect x="1480.4" y="2285.3" width="12.9" height="5.7" fill="#4a4a4a"/>
<rect x="1480.4" y="2302.3" width="12.9" height="5.7" fill="#4a4a4a"/>
<rect x="1480.4" y="2316.4" width="12.9" height="8.5" fill="#595959"/>
<rect x="1480.4" y="2333.4" width="12.9" height="11.3" fill="#595959"/>
<rect x="1480.4" y="2358.8" width="12.9" height="14.1" fill="#353535"/>
<rect x="1480.4" y="2381.5" width="12.9" height="11.3" fill="#4a4a4a"/>
<rect x="1480.4" y="2415.4" width="12.9" height="11.3" fill="#929292"/>
<rect x="1480.4" y="2432.4" width="12.9" height="28.3" fill="#434343"/>
<rect x="1480.4" y="2474.8" width="12.9" height="11.3" fill="#848484"/>
<rect x="1480.4" y="2489" width="12.9" height="17" fill="#595959"/>
<rect x="1480.4" y="2508.8" width="12.9" height="14.1" fill="#b0b0b0"/>
<rect x="1478.8" y="2195.3" width="16.1" height="15.8" fill="#fff"/>
<rect x="1484" y="2195.3" width="5.7" height="15.8" fill="#555"/>
<rect x="1480.4" y="2212.3" width="12.9" height="38.5" fill="#c4c4c4"/>
<line x1="1518.2" y1="1883.5" x2="1518.2" y2="1894.8" stroke="#a4c6ff" stroke-width="3.8"/>
<line x1="1584.5" y1="1897.7" x2="1584.5" y2="1993.9" stroke="#a4c6ff" stroke-width="3.8"/>
<line x1="1518.8" y1="2121.2" x2="1518.8" y2="2158" stroke="#a4c6ff" stroke-width="3.8"/>
<line x1="1584.5" y1="2163.6" x2="1584.5" y2="2279.6" stroke="#a4c6ff" stroke-width="3.8"/>
<line x1="1551.6" y1="2211.7" x2="1551.6" y2="2254.2" stroke="#a4c6ff" stroke-width="3.8"/>
<line x1="1471.8" y1="2203.2" x2="1502.4" y2="2203.2" stroke="#2222dd" stroke-width="3.4"/>
<line x1="1501.3" y1="2190.2" x2="1601.4" y2="2190.2" stroke="#a4c6ff" stroke-width="1.3" stroke-dasharray="4 3"/>
<line x1="1501.3" y1="2203.2" x2="1601.4" y2="2203.2" stroke="#5560f0" stroke-width="2"/>
<line x1="1501.3" y1="2213.4" x2="1601.4" y2="2213.4" stroke="#a4c6ff" stroke-width="1.3" stroke-dasharray="4 3"/>
<polyline points="1543,1875 1545.5,1881 1547.5,1885 1548.5,1890 1549.5,1894 1549,1899 1549,1905 1548,1909 1547,1912 1548,1915 1548.5,1921 1548.5,1925 1551,1929 1549.5,1935 1548.5,1939 1550,1944 1551,1948 1550.5,1951 1550,1956 1551,1959 1549,1963 1549,1969 1548,1972 1548.5,1978 1549,1982 1547.5,1986 1548,1990 1548.5,1996 1548.5,2001 1548,2007 1548,2013 1548,2018 1548,2021 1548,2025 1549.5,2030 1549,2034 1551.5,2038 1550.5,2042 1550.5,2048 1549,2053 1550,2057 1548.5,2060 1549,2066 1548.5,2069 1550.5,2073 1550.5,2078 1548,2082 1547,2086 1547.5,2090 1550.5,2094 1550,2099 1547.5,2103 1550.5,2109 1549.5,2112 1550.5,2117 1550,2120 1550,2126 1550,2131 1550,2136 1548.5,2141 1545.5,2145 1545.5,2150 1550,2155 1551,2160 1552.5,2165 1552,2168 1553.5,2173 1554,2178 1550,2184 1549.5,2188 1551,2191" fill="none" stroke="#181830" stroke-width="4.6"/>
<polyline points="1550.5,2255 1550,2260 1551.5,2265 1550,2269 1551,2273 1551.5,2278 1549.5,2282 1549,2286 1548.5,2291 1550,2296 1550,2300 1549.5,2303 1549,2307 1548.5,2311 1548.5,2316 1549.5,2319 1550.5,2324 1549,2330 1548,2334 1549,2339 1550,2343 1550,2347 1551,2352 1551,2355 1550.5,2359 1550,2364 1551.5,2370 1549.5,2374 1537.5,2379 1551,2384 1550.5,2390 1551,2396 1548.5,2401 1550.5,2405 1549.5,2410 1548.5,2413 1549,2417 1550.5,2421 1551,2426 1549.5,2431 1550,2435 1550.5,2440 1550,2445 1552,2449 1552,2453 1550,2458 1551,2462 1551,2466 1551.5,2470 1550,2474 1547.5,2479 1550,2485 1540,2488 1549,2494 1551,2498 1549,2501 1550,2505 1549.5,2509 1549,2512 1548.5,2517 1549,2521" fill="none" stroke="#181830" stroke-width="4.6"/>
<polyline points="1544,1875 1550,1882 1553.5,1890 1553.5,1899 1552,1909 1552.5,1916 1552.5,1926 1553,1933 1554,1939 1552.5,1948 1551,1957 1555,1966 1554,1972 1551.5,1980 1550,1985 1552.5,1994 1550.5,2000 1554.5,2009 1554,2015 1551.5,2023 1552,2031 1552.5,2039 1551,2049 1550,2058 1549,2064 1553,2074 1552,2084 1554.5,2092 1553.5,2101 1554,2111 1555,2118 1554.5,2127 1551,2134 1547.5,2141 1549,2149 1552.5,2155 1554.5,2163 1558.5,2171 1557.5,2179 1553,2189" fill="none" stroke="#ff2020" stroke-width="1.1" stroke-dasharray="1.5 5"/>
<polyline points="1551.5,2254 1551,2260 1553,2266 1553.5,2274 1553,2282 1552,2292 1553,2301 1549.5,2307 1549.5,2315 1551.5,2325 1550.5,2333 1550.5,2342 1549.5,2351 1549.5,2358 1552.5,2367 1552.5,2376 1552,2386 1552.5,2393 1553,2400 1553,2409 1549.5,2419 1550,2427 1550,2433 1552,2441 1552,2447 1554.5,2457 1551.5,2467 1554.5,2473 1552,2481 1553,2490 1551.5,2499 1555.5,2505 1550.5,2515 1553,2522" fill="none" stroke="#ff2020" stroke-width="1.1" stroke-dasharray="1.5 5"/>
<polyline points="1535.5,1875 1543.5,1883 1545.5,1894 1547,1902 1541.5,1914 1547,1926 1543,1935 1546,1947 1545,1960 1545,1972 1547.5,1981 1544.5,1989 1543,1999 1542,2011 1542,2022 1542.5,2033 1546,2041 1545.5,2051 1548.5,2061 1547.5,2074 1544,2083 1543.5,2096 1544,2105 1542.5,2115 1546,2125 1541,2138 1540,2149 1545,2157 1550,2167 1549,2179 1541.5,2191" fill="none" stroke="#20a020" stroke-width="1.1" stroke-dasharray="1.2 9"/>
<polyline points="1542.5,2254 1547,2265 1542.5,2276 1547,2288 1548.5,2297 1545,2309 1548.5,2320 1547,2330 1549,2342 1548,2355 1549.5,2365 1543.5,2375 1546,2386 1545.5,2395 1543.5,2403 1547,2412 1542,2424 1548.5,2434 1542.5,2442 1546,2450 1541.5,2461 1546,2470 1541.5,2479 1540,2489 1544.5,2502 1542,2514 1547.5,2522" fill="none" stroke="#20a020" stroke-width="1.1" stroke-dasharray="1.2 9"/>
<polyline points="1543,1875 1546.5,1879 1546,1882 1550,1886 1547.5,1891 1550.5,1894 1551.5,1899 1547.5,1902 1550,1907 1547,1912 1547.5,1916 1551.5,1920 1549,1925 1552,1930 1549,1933 1548.5,1937 1548.5,1942 1549,1946 1550,1950 1548.5,1954 1550.5,1959 1550.5,1962 1549,1966 1551.5,1969 1549.5,1972 1549,1976 1550.5,1980 1550.5,1984 1550.5,1987 1551,1992 1547,1995 1548,2000 1550.5,2004 1547.5,2007 1547,2011 1549,2016 1551,2020 1549,2024 1550,2027 1550.5,2033 1548,2037 1547.5,2041 1550.5,2045 1548,2050 1550.5,2055 1548.5,2059 1550.5,2064 1549.5,2069 1549.5,2074 1550.5,2077 1551.5,2082 1548,2086 1551,2091 1549.5,2096 1552,2099 1548,2104 1551.5,2109 1551,2113 1547.5,2116 1551.5,2119 1548.5,2125 1549,2130 1547.5,2134 1546.5,2137 1545,2141 1544.5,2146 1543,2150 1548.5,2154 1548,2159 1551.5,2163 1554,2168 1553.5,2173 1555.5,2177 1552,2182 1548,2187 1551,2192" fill="none" stroke="#1a78f0" stroke-width="3.4"/>
<polyline points="1549.5,2251 1547.5,2256 1549,2260 1550,2263 1549,2267 1550.5,2270 1551,2276 1548.5,2280 1551.5,2285 1548.5,2288 1548.5,2292 1549.5,2296 1552,2299 1550.5,2303 1551,2306 1551.5,2310 1548,2315 1552,2319 1549.5,2322 1551.5,2327 1549.5,2332 1547.5,2336 1549,2339 1551.5,2344 1552.5,2347 1548.5,2351 1548.5,2355 1550,2359 1550,2364 1548,2369 1551,2373 1548,2376 1543,2382 1549.5,2386 1550,2390 1549.5,2393 1548.5,2397 1551.5,2400 1550.5,2403 1550,2407 1550.5,2410 1551.5,2414 1551.5,2419 1552,2423 1548.5,2427 1549.5,2431 1551.5,2436 1548.5,2440 1547.5,2444 1550.5,2449 1547.5,2454 1549,2457 1550.5,2461 1550,2464 1549,2468 1547.5,2472 1549,2476 1545,2479 1548,2484 1539.5,2488 1548.5,2493 1550.5,2497 1550,2500 1548,2505 1546.5,2510 1547,2515 1545.5,2519 1550,2522" fill="none" stroke="#1a78f0" stroke-width="3.4"/>
<ellipse cx="1518.2" cy="1886.3" rx="21.5" ry="11.3" fill="none" stroke="#ff40ff" stroke-width="2.4" stroke-dasharray="5 3.5"/>
<ellipse cx="1582.2" cy="1935.6" rx="20.9" ry="11.3" fill="none" stroke="#ff40ff" stroke-width="2.4" stroke-dasharray="5 3.5"/>
<ellipse cx="1586.2" cy="1980.8" rx="20.9" ry="7.9" fill="none" stroke="#ff1e1e" stroke-width="2.4" stroke-dasharray="5 3.5"/>
<ellipse cx="1586.2" cy="2221.9" rx="18.1" ry="60.5" fill="none" stroke="#ff1e1e" stroke-width="2.4" stroke-dasharray="5 3.5"/>
<ellipse cx="1530.7" cy="2379.8" rx="19.8" ry="10.2" fill="none" stroke="#ff1e1e" stroke-width="2.4" stroke-dasharray="5 3.5"/>
<text class="bl" x="1686.3" y="1882.7">p36.3</text>
<text class="bl" x="1686.3" y="1902.7">p36.2</text>
<text class="bl" x="1686.3" y="1922.8">p36.1</text>
<text class="bl" x="1686.3" y="1942.8">p35</text>
<text class="bl" x="1686.3" y="1962.8">p34.3</text>
<text class="bl" x="1686.3" y="1982.9">p34.2</text>
<text class="bl" x="1686.3" y="2002.9">p34.1</text>
<text class="bl" x="1686.3" y="2022.9">p33</text>
<text class="bl" x="1686.3" y="2043">p32</text>
<text class="bl" x="1686.3" y="2063">p31.3</text>
<text class="bl" x="1686.3" y="2083">p31.2</text>
<text class="bl" x="1686.3" y="2103.1">p31.1</text>
<text class="bl" x="1686.3" y="2123.1">p22.3</text>
<text class="bl" x="1686.3" y="2143.1">p22.1</text>
<text class="bl" x="1686.3" y="2163.2">p21</text>
<text class="bl" x="1686.3" y="2243.3">q12</text>
<text class="bl" x="1686.3" y="2263.4">q21.1</text>
<text class="bl" x="1686.3" y="2283.4">q21.3</text>
<text class="bl" x="1686.3" y="2303.4">q22</text>
<text class="bl" x="1686.3" y="2323.5">q23</text>
<text class="bl" x="1686.3" y="2343.5">q24</text>
<text class="bl" x="1686.3" y="2363.5">q25</text>
<text class="bl" x="1686.3" y="2383.6">q31</text>
<text class="bl" x="1686.3" y="2403.6">q32.1</text>
<text class="bl" x="1686.3" y="2423.6">q32.3</text>
<text class="bl" x="1686.3" y="2443.7">q41</text>
<text class="bl" x="1686.3" y="2463.7">q42.1</text>
<text class="bl" x="1686.3" y="2483.7">q42.3</text>
<text class="bl" x="1686.3" y="2503.8">q43</text>
<text class="bl" x="1686.3" y="2523.8">q44</text>
<line x1="1726.5" y1="1871.1" x2="1726.5" y2="2530.6" stroke="#a8a8a8" stroke-width="1.4" stroke-dasharray="3.5 4"/>
<line x1="1735" y1="1871.1" x2="1735" y2="2530.6" stroke="#a8a8a8" stroke-width="1.4" stroke-dasharray="3.5 4"/>
<line x1="1749.1" y1="1871.1" x2="1749.1" y2="2530.6" stroke="#a8a8a8" stroke-width="1.4" stroke-dasharray="3.5 4"/>
<line x1="1763.3" y1="1871.1" x2="1763.3" y2="2530.6" stroke="#a8a8a8" stroke-width="1.4" stroke-dasharray="3.5 4"/>
<line x1="1771.8" y1="1871.1" x2="1771.8" y2="2530.6" stroke="#a8a8a8" stroke-width="1.4" stroke-dasharray="3.5 4"/>
<line x1="1785.9" y1="1871.1" x2="1785.9" y2="2530.6" stroke="#a8a8a8" stroke-width="1.4" stroke-dasharray="3.5 4"/>
<line x1="1800" y1="1871.1" x2="1800" y2="2530.6" stroke="#a8a8a8" stroke-width="1.4" stroke-dasharray="3.5 4"/>
<text x="1736.1" y="1856.9" font-size="13" font-weight="bold" fill="#222" text-anchor="middle">1</text>
<text x="1763.3" y="1867.1" font-size="8" font-weight="normal" fill="#aaa" text-anchor="middle">-4 -2 -1  0 +1 +2 +4</text>
<rect x="1690.8" y="1873.9" width="14.1" height="654.7" fill="#fff" stroke="#333" stroke-width="1.3"/>
<rect x="1691.4" y="1873.9" width="12.9" height="9.6" fill="#bebebe"/>
<rect x="1691.4" y="1883.5" width="12.9" height="8.5" fill="#848484"/>
<rect x="1691.4" y="1903.3" width="12.9" height="11.3" fill="#595959"/>
<rect x="1691.4" y="1926" width="12.9" height="11.3" fill="#848484"/>
<rect x="1691.4" y="1945.8" width="12.9" height="8.5" fill="#848484"/>
<rect x="1691.4" y="1962.7" width="12.9" height="5.7" fill="#929292"/>
<rect x="1691.4" y="1976.9" width="12.9" height="14.1" fill="#bebebe"/>
<rect x="1691.4" y="1993.9" width="12.9" height="14.1" fill="#4a4a4a"/>
<rect x="1691.4" y="2022.2" width="12.9" height="8.5" fill="#767676"/>
<rect x="1691.4" y="2033.5" width="12.9" height="22.6" fill="#929292"/>
<rect x="1691.4" y="2056.1" width="12.9" height="42.4" fill="#434343"/>
<rect x="1691.4" y="2107" width="12.9" height="11.3" fill="#4a4a4a"/>
<rect x="1691.4" y="2124" width="12.9" height="11.3" fill="#595959"/>
<rect x="1691.4" y="2141" width="12.9" height="14.1" fill="#4a4a4a"/>
<rect x="1691.4" y="2166.5" width="12.9" height="17" fill="#848484"/>
<rect x="1691.4" y="2183.4" width="12.9" height="9.6" fill="#929292"/>
<rect x="1691.4" y="2263.4" width="12.9" height="5.7" fill="#3c3c3c"/>
<rect x="1691.4" y="2274.8" width="12.9" height="5.7" fill="#3c3c3c"/>
<rect x="1691.4" y="2286.3" width="12.9" height="5.7" fill="#4a4a4a"/>
<rect x="1691.4" y="2303.5" width="12.9" height="5.7" fill="#4a4a4a"/>
<rect x="1691.4" y="2317.8" width="12.9" height="8.6" fill="#595959"/>
<rect x="1691.4" y="2335" width="12.9" height="11.5" fill="#595959"/>
<rect x="1691.4" y="2360.8" width="12.9" height="14.3" fill="#353535"/>
<rect x="1691.4" y="2383.7" width="12.9" height="11.5" fill="#4a4a4a"/>
<rect x="1691.4" y="2418" width="12.9" height="11.5" fill="#929292"/>
<rect x="1691.4" y="2435.2" width="12.9" height="28.6" fill="#434343"/>
<rect x="1691.4" y="2478.2" width="12.9" height="11.5" fill="#848484"/>
<rect x="1691.4" y="2492.5" width="12.9" height="17.2" fill="#595959"/>
<rect x="1691.4" y="2512.6" width="12.9" height="14.3" fill="#b0b0b0"/>
<rect x="1689.8" y="2195.3" width="16.1" height="15.8" fill="#fff"/>
<rect x="1695.1" y="2195.3" width="5.7" height="15.8" fill="#555"/>
<rect x="1691.4" y="2212.3" width="12.9" height="38.5" fill="#c4c4c4"/>
<line x1="1729.3" y1="1877.9" x2="1729.3" y2="1889.2" stroke="#a4c6ff" stroke-width="3.8"/>
<line x1="1795.5" y1="1897.7" x2="1795.5" y2="1996.7" stroke="#a4c6ff" stroke-width="3.8"/>
<line x1="1795.5" y1="2163.6" x2="1795.5" y2="2279.6" stroke="#a4c6ff" stroke-width="3.8"/>
<line x1="1765.5" y1="2211.7" x2="1765.5" y2="2254.2" stroke="#a4c6ff" stroke-width="3.8"/>
<line x1="1682.9" y1="2203.2" x2="1713.5" y2="2203.2" stroke="#2222dd" stroke-width="3.4"/>
<line x1="1712.3" y1="2203.2" x2="1812.5" y2="2203.2" stroke="#3a40e8" stroke-width="3" stroke-dasharray="7 2"/>
<polyline points="1755.5,1875 1755.5,1880 1759.5,1884 1761,1889 1760.5,1894 1760.5,1898 1761,1903 1761.5,1907 1761,1911 1761,1915 1759.5,1921 1760,1924 1759,1928 1761,1932 1761.5,1936 1761,1940 1762,1946 1762,1950 1760,1955 1761.5,1959 1761,1964 1760,1968 1761,1972 1760,1976 1759.5,1981 1759.5,1985 1760,1989 1761.5,1994 1762,2000 1761,2004 1759.5,2009 1759.5,2015 1760,2018 1761,2024 1761.5,2027 1760.5,2032 1761.5,2037 1762.5,2041 1761.5,2044 1760.5,2048 1759,2053 1759,2057 1760,2062 1759.5,2067 1761.5,2073 1762.5,2078 1763,2083 1761.5,2088 1762.5,2092 1763.5,2095 1764,2101 1763,2105 1762,2109 1763,2114 1762,2119 1761,2124 1762,2129 1760,2132 1761.5,2137 1760,2143 1760.5,2147 1760.5,2152 1760.5,2156 1760.5,2161 1762,2165 1760.5,2169 1762.5,2174 1762.5,2178 1761,2183 1761.5,2188" fill="none" stroke="#181830" stroke-width="4.6"/>
<polyline points="1762,2252 1762,2257 1761,2261 1760.5,2265 1759.5,2270 1761.5,2275 1761.5,2280 1759.5,2286 1761.5,2291 1761.5,2296 1761,2300 1762,2304 1760,2308 1759.5,2313 1762.5,2319 1761.5,2323 1763.5,2327 1762,2330 1761,2334 1761.5,2338 1761,2342 1760.5,2347 1761.5,2352 1762.5,2357 1762,2361 1761.5,2366 1761.5,2371 1763,2376 1752,2381 1761.5,2386 1762,2391 1761,2394 1760.5,2398 1761.5,2401 1763,2407 1760.5,2413 1760.5,2418 1761.5,2424 1760,2428 1763,2432 1762,2438 1763.5,2442 1761,2447 1763,2451 1761.5,2456 1762.5,2462 1762.5,2466 1761.5,2470 1761.5,2475 1761,2480 1761.5,2485 1760.5,2490 1760.5,2494 1762,2498 1761,2502 1760,2506 1760.5,2510 1760,2516 1760.5,2521 1760.5,2526" fill="none" stroke="#181830" stroke-width="4.6"/>
<polyline points="1759,1875 1761.5,1885 1765.5,1893 1764,1900 1764,1908 1766,1918 1763.5,1926 1763.5,1935 1765,1943 1766,1951 1762.5,1959 1764.5,1968 1764,1978 1764.5,1988 1763,1995 1763.5,2001 1765,2007 1764,2014 1762,2024 1766,2034 1762,2042 1762,2052 1762,2061 1763.5,2071 1766,2077 1762,2086 1763.5,2094 1765,2100 1767,2108 1766.5,2116 1763.5,2123 1766,2133 1764.5,2143 1765,2152 1767,2162 1764,2170 1762,2176 1764,2186 1764.5,2193" fill="none" stroke="#ff2020" stroke-width="1.1" stroke-dasharray="1.5 5"/>
<polyline points="1766.5,2254 1764,2265 1764.5,2273 1766,2282 1765.5,2291 1761.5,2299 1761.5,2307 1763,2315 1764,2324 1763.5,2334 1766,2343 1766,2349 1763,2358 1763,2364 1766.5,2370 1767,2379 1765.5,2387 1768.5,2393 1764.5,2401 1763,2408 1767.5,2416 1765.5,2424 1768,2433 1766,2443 1765,2449 1764.5,2455 1764,2462 1765,2472 1763.5,2479 1766,2489 1765,2498 1764.5,2504 1765,2511 1763,2519 1766,2525" fill="none" stroke="#ff2020" stroke-width="1.1" stroke-dasharray="1.5 5"/>
<polyline points="1748.5,1875 1761,1888 1757.5,1896 1756,1905 1755.5,1912 1759.5,1925 1760,1935 1756,1943 1753,1955 1757.5,1968 1753.5,1976 1759.5,1986 1754,1996 1760.5,2005 1760.5,2012 1754.5,2021 1758,2033 1754,2041 1758,2052 1755,2062 1762.5,2074 1759.5,2082 1760,2095 1753.5,2105 1760,2112 1760.5,2123 1759,2133 1760,2144 1758.5,2152 1756,2164 1754.5,2173 1757,2185" fill="none" stroke="#20a020" stroke-width="1.1" stroke-dasharray="1.2 9"/>
<polyline points="1755.5,2255 1754.5,2263 1754,2274 1756.5,2284 1756.5,2294 1753.5,2302 1761,2315 1755.5,2327 1760,2335 1760,2347 1754.5,2357 1754,2370 1756.5,2378 1754.5,2388 1754.5,2398 1754,2406 1753.5,2413 1759.5,2425 1756.5,2438 1759.5,2448 1759,2455 1760,2468 1758,2481 1760,2492 1757,2503 1761,2514 1759,2526" fill="none" stroke="#20a020" stroke-width="1.1" stroke-dasharray="1.2 9"/>
<polyline points="1755,1875 1755,1880 1757,1883 1761.5,1888 1761.5,1891 1762,1895 1762,1899 1765,1904 1761.5,1907 1762.5,1912 1763,1917 1763.5,1922 1762.5,1926 1762.5,1931 1760,1935 1762.5,1941 1761.5,1944 1762.5,1947 1758.5,1951 1761,1956 1760,1961 1758.5,1966 1759.5,1971 1762,1975 1761,1980 1761,1983 1759,1988 1761.5,1992 1759.5,1997 1759,2000 1758.5,2006 1761.5,2009 1762.5,2014 1761.5,2020 1758,2023 1761,2029 1762,2033 1760,2037 1763,2041 1761.5,2046 1761,2049 1757.5,2055 1758,2059 1760,2064 1759.5,2069 1763,2073 1762,2077 1761.5,2082 1762.5,2086 1759.5,2091 1761,2096 1760.5,2101 1760,2106 1763,2110 1764,2113 1761.5,2118 1762,2121 1764,2125 1762.5,2130 1759.5,2133 1762,2138 1761,2142 1762.5,2147 1763,2152 1764,2155 1762,2160 1762,2164 1763,2168 1762.5,2172 1762.5,2176 1760.5,2180 1762,2184 1764,2188 1762.5,2191" fill="none" stroke="#1a78f0" stroke-width="3.4"/>
<polyline points="1764,2254 1760.5,2258 1764,2261 1762,2266 1762.5,2269 1763.5,2272 1762.5,2276 1760.5,2281 1762,2286 1761,2291 1760,2295 1761.5,2299 1763.5,2302 1763,2307 1764.5,2312 1764.5,2315 1760,2319 1759,2324 1762.5,2327 1760,2333 1764,2338 1763.5,2343 1764,2348 1762,2351 1761.5,2355 1759.5,2359 1761.5,2363 1764,2366 1761.5,2370 1763.5,2376 1756,2380 1764,2386 1762,2391 1763.5,2396 1762,2401 1760.5,2404 1760.5,2408 1759.5,2413 1760,2419 1761.5,2424 1760.5,2429 1760.5,2432 1761.5,2437 1760,2441 1761.5,2446 1764.5,2451 1761.5,2456 1760,2461 1761.5,2466 1764.5,2471 1763,2474 1760,2478 1761,2483 1761.5,2487 1760,2492 1759.5,2497 1764.5,2501 1762,2505 1761.5,2508 1764.5,2514 1764.5,2518 1760.5,2521 1759.5,2526" fill="none" stroke="#1a78f0" stroke-width="3.4"/>
<ellipse cx="1729.3" cy="1887.5" rx="21.5" ry="11.3" fill="none" stroke="#ff40ff" stroke-width="2.4" stroke-dasharray="5 3.5"/>
<ellipse cx="1795.5" cy="1937.3" rx="20.9" ry="11.3" fill="none" stroke="#ff40ff" stroke-width="2.4" stroke-dasharray="5 3.5"/>
<ellipse cx="1801.2" cy="1981.4" rx="20.9" ry="7.9" fill="none" stroke="#ff1e1e" stroke-width="2.4" stroke-dasharray="5 3.5"/>
<ellipse cx="1797.2" cy="2221.9" rx="18.1" ry="60.5" fill="none" stroke="#ff1e1e" stroke-width="2.4" stroke-dasharray="5 3.5"/>
<ellipse cx="1744.6" cy="2382.6" rx="19.8" ry="10.2" fill="none" stroke="#ff1e1e" stroke-width="2.4" stroke-dasharray="5 3.5"/>
<text class="bl" x="1885.5" y="1881">p36.3</text>
<text class="bl" x="1885.5" y="1901.1">p36.2</text>
<text class="bl" x="1885.5" y="1921.2">p36.1</text>
<text class="bl" x="1885.5" y="1941.3">p35</text>
<text class="bl" x="1885.5" y="1961.3">p34.3</text>
<text class="bl" x="1885.5" y="1981.4">p34.2</text>
<text class="bl" x="1885.5" y="2001.5">p34.1</text>
<text class="bl" x="1885.5" y="2021.6">p33</text>
<text class="bl" x="1885.5" y="2041.7">p32</text>
<text class="bl" x="1885.5" y="2061.8">p31.3</text>
<text class="bl" x="1885.5" y="2081.9">p31.2</text>
<text class="bl" x="1885.5" y="2102">p31.1</text>
<text class="bl" x="1885.5" y="2122">p22.3</text>
<text class="bl" x="1885.5" y="2142.1">p22.1</text>
<text class="bl" x="1885.5" y="2162.2">p21</text>
<text class="bl" x="1885.5" y="2182.3">p13.3</text>
<text class="bl" x="1885.5" y="2242.6">q12</text>
<text class="bl" x="1885.5" y="2262.7">q21.1</text>
<text class="bl" x="1885.5" y="2282.8">q21.3</text>
<text class="bl" x="1885.5" y="2302.8">q22</text>
<text class="bl" x="1885.5" y="2322.9">q23</text>
<text class="bl" x="1885.5" y="2343">q24</text>
<text class="bl" x="1885.5" y="2363.1">q25</text>
<text class="bl" x="1885.5" y="2383.2">q31</text>
<text class="bl" x="1885.5" y="2403.3">q32.1</text>
<text class="bl" x="1885.5" y="2423.4">q32.3</text>
<text class="bl" x="1885.5" y="2443.5">q41</text>
<text class="bl" x="1885.5" y="2463.6">q42.1</text>
<text class="bl" x="1885.5" y="2483.6">q42.3</text>
<text class="bl" x="1885.5" y="2503.7">q43</text>
<text class="bl" x="1885.5" y="2523.8">q44</text>
<line x1="1925.7" y1="1869.4" x2="1925.7" y2="2530.6" stroke="#a8a8a8" stroke-width="1.4" stroke-dasharray="3.5 4"/>
<line x1="1934.2" y1="1869.4" x2="1934.2" y2="2530.6" stroke="#a8a8a8" stroke-width="1.4" stroke-dasharray="3.5 4"/>
<line x1="1948.3" y1="1869.4" x2="1948.3" y2="2530.6" stroke="#a8a8a8" stroke-width="1.4" stroke-dasharray="3.5 4"/>
<line x1="1962.5" y1="1869.4" x2="1962.5" y2="2530.6" stroke="#a8a8a8" stroke-width="1.4" stroke-dasharray="3.5 4"/>
<line x1="1970.9" y1="1869.4" x2="1970.9" y2="2530.6" stroke="#a8a8a8" stroke-width="1.4" stroke-dasharray="3.5 4"/>
<line x1="1985.1" y1="1869.4" x2="1985.1" y2="2530.6" stroke="#a8a8a8" stroke-width="1.4" stroke-dasharray="3.5 4"/>
<line x1="1999.2" y1="1869.4" x2="1999.2" y2="2530.6" stroke="#a8a8a8" stroke-width="1.4" stroke-dasharray="3.5 4"/>
<text x="1935.3" y="1855.2" font-size="13" font-weight="bold" fill="#222" text-anchor="middle">1</text>
<text x="1962.5" y="1865.4" font-size="8" font-weight="normal" fill="#aaa" text-anchor="middle">-4 -2 -1  0 +1 +2 +4</text>
<rect x="1890" y="1872.2" width="14.1" height="656.4" fill="#fff" stroke="#333" stroke-width="1.3"/>
<rect x="1890.6" y="1872.2" width="12.9" height="9.8" fill="#bebebe"/>
<rect x="1890.6" y="1882" width="12.9" height="8.7" fill="#848484"/>
<rect x="1890.6" y="1902.3" width="12.9" height="11.6" fill="#595959"/>
<rect x="1890.6" y="1925.4" width="12.9" height="11.6" fill="#848484"/>
<rect x="1890.6" y="1945.7" width="12.9" height="8.7" fill="#848484"/>
<rect x="1890.6" y="1963" width="12.9" height="5.8" fill="#929292"/>
<rect x="1890.6" y="1977.5" width="12.9" height="14.5" fill="#bebebe"/>
<rect x="1890.6" y="1994.8" width="12.9" height="14.5" fill="#4a4a4a"/>
<rect x="1890.6" y="2023.8" width="12.9" height="8.7" fill="#767676"/>
<rect x="1890.6" y="2035.3" width="12.9" height="23.1" fill="#929292"/>
<rect x="1890.6" y="2058.5" width="12.9" height="43.4" fill="#434343"/>
<rect x="1890.6" y="2110.5" width="12.9" height="11.6" fill="#4a4a4a"/>
<rect x="1890.6" y="2127.9" width="12.9" height="11.6" fill="#595959"/>
<rect x="1890.6" y="2145.3" width="12.9" height="14.5" fill="#4a4a4a"/>
<rect x="1890.6" y="2171.3" width="12.9" height="17.4" fill="#848484"/>
<rect x="1890.6" y="2188.6" width="12.9" height="9.8" fill="#929292"/>
<rect x="1890.6" y="2268" width="12.9" height="5.6" fill="#3c3c3c"/>
<rect x="1890.6" y="2279.3" width="12.9" height="5.6" fill="#3c3c3c"/>
<rect x="1890.6" y="2290.5" width="12.9" height="5.6" fill="#4a4a4a"/>
<rect x="1890.6" y="2307.4" width="12.9" height="5.6" fill="#4a4a4a"/>
<rect x="1890.6" y="2321.5" width="12.9" height="8.4" fill="#595959"/>
<rect x="1890.6" y="2338.4" width="12.9" height="11.3" fill="#595959"/>
<rect x="1890.6" y="2363.7" width="12.9" height="14.1" fill="#353535"/>
<rect x="1890.6" y="2386.2" width="12.9" height="11.3" fill="#4a4a4a"/>
<rect x="1890.6" y="2420" width="12.9" height="11.3" fill="#929292"/>
<rect x="1890.6" y="2436.9" width="12.9" height="28.1" fill="#434343"/>
<rect x="1890.6" y="2479.1" width="12.9" height="11.3" fill="#848484"/>
<rect x="1890.6" y="2493.1" width="12.9" height="16.9" fill="#595959"/>
<rect x="1890.6" y="2512.8" width="12.9" height="14.1" fill="#b0b0b0"/>
<rect x="1889" y="2201" width="16.1" height="15.8" fill="#fff"/>
<rect x="1894.3" y="2201" width="5.7" height="15.8" fill="#555"/>
<rect x="1890.6" y="2217.9" width="12.9" height="38.5" fill="#c4c4c4"/>
<line x1="1925.1" y1="1914.6" x2="1925.1" y2="1926" stroke="#a4c6ff" stroke-width="3.8"/>
<line x1="1925.1" y1="2016.5" x2="1925.1" y2="2158" stroke="#a4c6ff" stroke-width="3.8"/>
<line x1="1925.1" y1="2412.6" x2="1925.1" y2="2528.6" stroke="#a4c6ff" stroke-width="3.8"/>
<line x1="1994.7" y1="1931.6" x2="1994.7" y2="2016.5" stroke="#a4c6ff" stroke-width="3.8"/>
<line x1="1994.7" y1="2163.6" x2="1994.7" y2="2279.6" stroke="#a4c6ff" stroke-width="3.8"/>
<line x1="1960.8" y1="2214.5" x2="1960.8" y2="2254.2" stroke="#a4c6ff" stroke-width="3.8"/>
<line x1="1882.1" y1="2208.9" x2="1912.7" y2="2208.9" stroke="#2222dd" stroke-width="3.4"/>
<line x1="1911.5" y1="2203.2" x2="2011.7" y2="2203.2" stroke="#a4c6ff" stroke-width="1.5" stroke-dasharray="6 3"/>
<line x1="1911.5" y1="2213.4" x2="2011.7" y2="2213.4" stroke="#c8d8fc" stroke-width="1.5"/>
<polyline points="1954.5,1873 1956,1878 1957.5,1882 1960,1887 1959.5,1891 1959,1897 1960.5,1900 1961,1906 1962.5,1911 1963,1915 1964,1920 1964.5,1924 1967,1928 1967,1934 1965.5,1939 1962.5,1943 1961.5,1948 1959.5,1953 1959,1957 1958.5,1961 1960.5,1966 1960.5,1971 1962.5,1974 1961,1979 1962.5,1985 1961.5,1989 1962.5,1994 1961,1998 1961.5,2003 1961.5,2007 1961.5,2011 1959.5,2015 1960.5,2020 1960,2023 1961,2026 1959,2030 1959,2035 1959,2039 1961.5,2043 1960.5,2048 1959.5,2052 1959.5,2057 1960.5,2062 1960,2067 1960,2071 1959,2074 1959,2079 1960,2085 1959.5,2089 1960.5,2094 1959.5,2097 1959,2101 1960,2105 1960,2110 1961,2115 1961,2119 1959.5,2122 1959.5,2128 1960.5,2132 1960.5,2136 1961.5,2142 1961,2146 1960.5,2151 1962,2155 1962,2160 1959,2164 1959.5,2167 1962.5,2172 1961.5,2177 1961,2183 1960,2188 1960,2194" fill="none" stroke="#181830" stroke-width="4.6"/>
<polyline points="1959.5,2258 1959.5,2261 1960.5,2267 1961,2272 1959.5,2278 1961,2282 1960.5,2286 1959.5,2289 1959,2295 1961,2300 1961,2304 1961,2308 1960.5,2312 1961.5,2318 1960,2321 1959.5,2327 1959.5,2332 1960.5,2335 1958.5,2339 1960.5,2344 1960,2349 1961,2355 1961,2360 1959,2365 1959.5,2370 1960.5,2375 1950.5,2380 1961.5,2386 1961.5,2390 1962,2396 1961,2401 1961,2405 1963,2410 1961.5,2414 1960,2420 1960,2423 1961,2429 1960.5,2433 1958,2436 1958.5,2440 1959,2443 1959,2447 1960,2452 1961,2457 1960,2461 1960.5,2465 1960,2469 1959.5,2473 1961,2478 1959.5,2482 1961,2487 1960.5,2493 1958.5,2497 1959.5,2501 1960,2506 1959,2509 1959.5,2513 1961.5,2516 1960,2520 1960,2524 1960.5,2527" fill="none" stroke="#181830" stroke-width="4.6"/>
<polyline points="1958.5,1873 1961,1879 1966.5,1888 1965,1896 1966,1904 1966,1912 1965.5,1919 1970,1927 1969.5,1936 1967.5,1943 1966.5,1952 1962.5,1960 1964,1967 1962.5,1977 1964.5,1986 1963.5,1992 1962.5,2000 1963.5,2010 1963.5,2017 1964,2025 1962.5,2033 1965.5,2043 1965,2051 1961.5,2059 1962.5,2068 1965.5,2074 1961.5,2084 1964,2094 1962.5,2101 1962,2111 1964.5,2119 1964,2129 1963.5,2138 1962,2144 1963.5,2152 1963,2157 1964,2166 1963.5,2177 1961,2185 1964,2192" fill="none" stroke="#ff2020" stroke-width="1.1" stroke-dasharray="1.5 5"/>
<polyline points="1961,2264 1961.5,2273 1962,2282 1961.5,2289 1963.5,2297 1963.5,2307 1961.5,2314 1963.5,2322 1964,2328 1963,2335 1961.5,2344 1961,2354 1962,2364 1964.5,2372 1962,2379 1963.5,2386 1963.5,2395 1965.5,2404 1966,2414 1963.5,2422 1964.5,2430 1965,2439 1961.5,2447 1961,2455 1964,2462 1962,2471 1961.5,2479 1961.5,2488 1961.5,2498 1964.5,2505 1965,2514 1962,2520 1965.5,2526" fill="none" stroke="#ff2020" stroke-width="1.1" stroke-dasharray="1.5 5"/>
<polyline points="1953,1873 1951.5,1884 1953,1897 1959,1906 1955,1918 1965,1930 1960,1943 1958.5,1952 1955.5,1962 1956.5,1969 1958,1981 1953.5,1989 1956,1997 1954.5,2007 1959,2015 1954.5,2025 1953,2034 1956,2043 1958.5,2051 1957.5,2060 1957,2071 1960,2081 1959,2088 1959.5,2101 1954,2109 1957,2121 1957,2132 1956,2144 1954,2153 1956,2166 1959.5,2174 1954.5,2183 1953.5,2191" fill="none" stroke="#20a020" stroke-width="1.1" stroke-dasharray="1.2 9"/>
<polyline points="1954.5,2263 1953,2272 1956.5,2280 1953,2289 1954,2298 1953,2305 1954,2315 1961,2327 1956.5,2336 1958,2343 1957,2353 1958.5,2362 1958.5,2371 1944,2381 1956.5,2393 1959,2405 1957,2417 1954.5,2426 1954,2439 1959.5,2448 1956,2460 1957,2470 1957,2481 1961.5,2491 1960,2503 1956,2515 1954,2526" fill="none" stroke="#20a020" stroke-width="1.1" stroke-dasharray="1.2 9"/>
<polyline points="1954,1873 1957.5,1876 1958,1879 1958,1885 1961,1888 1959,1892 1963.5,1896 1963.5,1901 1959,1905 1961,1910 1961.5,1913 1963,1917 1963.5,1921 1962.5,1924 1967.5,1929 1966,1934 1965,1937 1965.5,1942 1964,1945 1963.5,1951 1960,1954 1959.5,1958 1960,1962 1959.5,1965 1959,1971 1959,1976 1958,1981 1960.5,1985 1959.5,1991 1961.5,1994 1959,1999 1961.5,2004 1959.5,2008 1963,2012 1963,2016 1960,2020 1961.5,2025 1960,2030 1962.5,2034 1962,2037 1959.5,2041 1963.5,2045 1962.5,2049 1960.5,2054 1963.5,2057 1961.5,2062 1962,2065 1962,2070 1964,2074 1964,2078 1963.5,2084 1961,2087 1958.5,2092 1960.5,2098 1958,2102 1960,2106 1960,2112 1960.5,2116 1961.5,2119 1959,2123 1961.5,2127 1961,2130 1960,2134 1957.5,2138 1960.5,2143 1958,2146 1962.5,2151 1957.5,2156 1961,2160 1962,2163 1961.5,2168 1960.5,2172 1961.5,2176 1964.5,2180 1964,2185 1962.5,2190 1959,2194 1962.5,2197" fill="none" stroke="#1a78f0" stroke-width="3.4"/>
<polyline points="1960.5,2260 1963.5,2263 1961.5,2267 1963,2272 1961,2276 1961,2280 1960.5,2283 1959.5,2288 1960,2291 1960.5,2295 1964,2299 1964,2304 1961,2308 1960.5,2311 1961,2316 1961,2321 1960,2324 1961,2328 1959,2334 1961,2337 1963,2341 1959,2344 1959,2349 1964,2352 1959.5,2356 1962,2360 1960,2364 1962,2368 1960.5,2373 1963.5,2377 1950,2380 1964,2385 1960.5,2388 1963,2393 1962.5,2398 1963.5,2402 1963,2407 1962.5,2411 1961.5,2414 1961.5,2419 1963.5,2424 1961,2429 1962.5,2434 1960,2437 1959.5,2440 1959,2445 1961.5,2449 1959,2453 1961.5,2456 1961,2461 1960,2465 1962,2469 1959.5,2474 1961.5,2477 1959,2483 1958.5,2487 1960.5,2491 1959.5,2495 1960,2500 1959,2504 1962,2509 1957.5,2513 1960,2519 1958,2523 1959.5,2528" fill="none" stroke="#1a78f0" stroke-width="3.4"/>
<ellipse cx="1999.2" cy="1937.3" rx="20.9" ry="11.3" fill="none" stroke="#ff40ff" stroke-width="2.4" stroke-dasharray="5 3.5"/>
<ellipse cx="1999.2" cy="1982.5" rx="20.9" ry="7.9" fill="none" stroke="#ff1e1e" stroke-width="2.4" stroke-dasharray="5 3.5"/>
<ellipse cx="1995.3" cy="2221.9" rx="18.1" ry="60.5" fill="none" stroke="#ff1e1e" stroke-width="2.4" stroke-dasharray="5 3.5"/>
<ellipse cx="1941" cy="2381.5" rx="19.8" ry="10.2" fill="none" stroke="#ff1e1e" stroke-width="2.4" stroke-dasharray="5 3.5"/>
<text class="bl" x="2085.2" y="1881">p36.3</text>
<text class="bl" x="2085.2" y="1901.1">p36.2</text>
<text class="bl" x="2085.2" y="1921.2">p36.1</text>
<text class="bl" x="2085.2" y="1941.3">p35</text>
<text class="bl" x="2085.2" y="1961.3">p34.3</text>
<text class="bl" x="2085.2" y="1981.4">p34.2</text>
<text class="bl" x="2085.2" y="2001.5">p34.1</text>
<text class="bl" x="2085.2" y="2021.6">p33</text>
<text class="bl" x="2085.2" y="2041.7">p32</text>
<text class="bl" x="2085.2" y="2061.8">p31.3</text>
<text class="bl" x="2085.2" y="2081.9">p31.2</text>
<text class="bl" x="2085.2" y="2102">p31.1</text>
<text class="bl" x="2085.2" y="2122">p22.3</text>
<text class="bl" x="2085.2" y="2142.1">p22.1</text>
<text class="bl" x="2085.2" y="2162.2">p21</text>
<text class="bl" x="2085.2" y="2182.3">p13.3</text>
<text class="bl" x="2085.2" y="2242.6">q12</text>
<text class="bl" x="2085.2" y="2262.7">q21.1</text>
<text class="bl" x="2085.2" y="2282.8">q21.3</text>
<text class="bl" x="2085.2" y="2302.8">q22</text>
<text class="bl" x="2085.2" y="2322.9">q23</text>
<text class="bl" x="2085.2" y="2343">q24</text>
<text class="bl" x="2085.2" y="2363.1">q25</text>
<text class="bl" x="2085.2" y="2383.2">q31</text>
<text class="bl" x="2085.2" y="2403.3">q32.1</text>
<text class="bl" x="2085.2" y="2423.4">q32.3</text>
<text class="bl" x="2085.2" y="2443.5">q41</text>
<text class="bl" x="2085.2" y="2463.6">q42.1</text>
<text class="bl" x="2085.2" y="2483.6">q42.3</text>
<text class="bl" x="2085.2" y="2503.7">q43</text>
<text class="bl" x="2085.2" y="2523.8">q44</text>
<line x1="2125.4" y1="1869.4" x2="2125.4" y2="2530.6" stroke="#a8a8a8" stroke-width="1.4" stroke-dasharray="3.5 4"/>
<line x1="2133.9" y1="1869.4" x2="2133.9" y2="2530.6" stroke="#a8a8a8" stroke-width="1.4" stroke-dasharray="3.5 4"/>
<line x1="2148.1" y1="1869.4" x2="2148.1" y2="2530.6" stroke="#a8a8a8" stroke-width="1.4" stroke-dasharray="3.5 4"/>
<line x1="2162.2" y1="1869.4" x2="2162.2" y2="2530.6" stroke="#a8a8a8" stroke-width="1.4" stroke-dasharray="3.5 4"/>
<line x1="2170.7" y1="1869.4" x2="2170.7" y2="2530.6" stroke="#a8a8a8" stroke-width="1.4" stroke-dasharray="3.5 4"/>
<line x1="2184.8" y1="1869.4" x2="2184.8" y2="2530.6" stroke="#a8a8a8" stroke-width="1.4" stroke-dasharray="3.5 4"/>
<line x1="2199" y1="1869.4" x2="2199" y2="2530.6" stroke="#a8a8a8" stroke-width="1.4" stroke-dasharray="3.5 4"/>
<text x="2135" y="1855.2" font-size="13" font-weight="bold" fill="#222" text-anchor="middle">1</text>
<text x="2162.2" y="1865.4" font-size="8" font-weight="normal" fill="#aaa" text-anchor="middle">-4 -2 -1  0 +1 +2 +4</text>
<rect x="2089.8" y="1872.2" width="14.1" height="656.4" fill="#fff" stroke="#333" stroke-width="1.3"/>
<rect x="2090.4" y="1872.2" width="12.9" height="9.7" fill="#bebebe"/>
<rect x="2090.4" y="1881.9" width="12.9" height="8.6" fill="#848484"/>
<rect x="2090.4" y="1901.9" width="12.9" height="11.4" fill="#595959"/>
<rect x="2090.4" y="1924.7" width="12.9" height="11.4" fill="#848484"/>
<rect x="2090.4" y="1944.7" width="12.9" height="8.6" fill="#848484"/>
<rect x="2090.4" y="1961.8" width="12.9" height="5.7" fill="#929292"/>
<rect x="2090.4" y="1976.1" width="12.9" height="14.3" fill="#bebebe"/>
<rect x="2090.4" y="1993.2" width="12.9" height="14.3" fill="#4a4a4a"/>
<rect x="2090.4" y="2021.7" width="12.9" height="8.6" fill="#767676"/>
<rect x="2090.4" y="2033.1" width="12.9" height="22.8" fill="#929292"/>
<rect x="2090.4" y="2056" width="12.9" height="42.8" fill="#434343"/>
<rect x="2090.4" y="2107.3" width="12.9" height="11.4" fill="#4a4a4a"/>
<rect x="2090.4" y="2124.5" width="12.9" height="11.4" fill="#595959"/>
<rect x="2090.4" y="2141.6" width="12.9" height="14.3" fill="#4a4a4a"/>
<rect x="2090.4" y="2167.3" width="12.9" height="17.1" fill="#848484"/>
<rect x="2090.4" y="2184.4" width="12.9" height="9.7" fill="#929292"/>
<rect x="2090.4" y="2264.3" width="12.9" height="5.7" fill="#3c3c3c"/>
<rect x="2090.4" y="2275.7" width="12.9" height="5.7" fill="#3c3c3c"/>
<rect x="2090.4" y="2287.1" width="12.9" height="5.7" fill="#4a4a4a"/>
<rect x="2090.4" y="2304.3" width="12.9" height="5.7" fill="#4a4a4a"/>
<rect x="2090.4" y="2318.5" width="12.9" height="8.6" fill="#595959"/>
<rect x="2090.4" y="2335.7" width="12.9" height="11.4" fill="#595959"/>
<rect x="2090.4" y="2361.3" width="12.9" height="14.3" fill="#353535"/>
<rect x="2090.4" y="2384.2" width="12.9" height="11.4" fill="#4a4a4a"/>
<rect x="2090.4" y="2418.4" width="12.9" height="11.4" fill="#929292"/>
<rect x="2090.4" y="2435.6" width="12.9" height="28.5" fill="#434343"/>
<rect x="2090.4" y="2478.4" width="12.9" height="11.4" fill="#848484"/>
<rect x="2090.4" y="2492.6" width="12.9" height="17.1" fill="#595959"/>
<rect x="2090.4" y="2512.6" width="12.9" height="14.3" fill="#b0b0b0"/>
<rect x="2088.8" y="2196.4" width="16.1" height="15.8" fill="#fff"/>
<rect x="2094" y="2196.4" width="5.7" height="15.8" fill="#555"/>
<rect x="2090.4" y="2213.4" width="12.9" height="38.5" fill="#c4c4c4"/>
<line x1="2128.3" y1="1875" x2="2128.3" y2="1892" stroke="#4a80f0" stroke-width="3.25"/>
<line x1="2194.5" y1="1897.7" x2="2194.5" y2="1993.9" stroke="#a4c6ff" stroke-width="3.8"/>
<line x1="2194.5" y1="2163.6" x2="2194.5" y2="2282.5" stroke="#a4c6ff" stroke-width="3.8"/>
<line x1="2160.5" y1="2211.7" x2="2160.5" y2="2254.2" stroke="#a4c6ff" stroke-width="3.8"/>
<line x1="2126.6" y1="2128.5" x2="2126.6" y2="2138.2" stroke="#a4c6ff" stroke-width="4.75"/>
<line x1="2081.9" y1="2204.4" x2="2112.4" y2="2204.4" stroke="#2222dd" stroke-width="3.4"/>
<line x1="2112.4" y1="2187.4" x2="2163.3" y2="2187.4" stroke="#a4c6ff" stroke-width="1.3"/>
<line x1="2111.3" y1="2205.5" x2="2211.4" y2="2205.5" stroke="#5560f0" stroke-width="2"/>
<line x1="2112.4" y1="2222.5" x2="2211.4" y2="2222.5" stroke="#a4c6ff" stroke-width="1.5" stroke-dasharray="8 3"/>
<line x1="2160.5" y1="1888.6" x2="2197.3" y2="1888.6" stroke="#a4c6ff" stroke-width="1.5"/>
<polyline points="2152.5,1873 2155,1878 2158,1882 2160,1886 2158.5,1891 2158.5,1897 2158.5,1902 2159,1907 2158.5,1912 2159.5,1915 2159.5,1920 2160.5,1924 2160.5,1928 2160,1932 2158.5,1936 2159.5,1940 2159,1943 2159.5,1947 2158,1951 2159.5,1955 2159.5,1960 2158.5,1964 2160.5,1968 2159.5,1972 2158.5,1976 2158,1982 2158.5,1987 2159,1991 2158,1995 2159.5,1998 2159,2003 2157,2007 2157,2011 2157,2016 2158,2021 2159,2027 2160,2031 2159.5,2036 2161,2040 2161,2045 2160.5,2050 2158.5,2055 2159,2058 2158.5,2062 2159,2066 2158,2070 2157.5,2074 2158,2079 2158.5,2083 2159.5,2087 2158.5,2091 2159.5,2095 2158.5,2101 2157.5,2106 2159.5,2112 2170,2118 2159.5,2121 2159.5,2124 2160,2128 2159,2132 2159.5,2138 2159.5,2143 2160.5,2147 2159.5,2152 2160.5,2157 2160,2160 2160.5,2165 2160,2170 2159,2175 2159.5,2180 2160,2185 2160.5,2189 2159,2193" fill="none" stroke="#181830" stroke-width="4.6"/>
<polyline points="2158,2256 2159,2260 2160,2263 2160.5,2266 2160.5,2271 2161,2275 2159.5,2280 2160,2285 2159.5,2290 2160,2294 2159.5,2298 2161,2303 2159,2308 2159.5,2313 2159,2317 2159,2322 2158.5,2326 2158,2331 2158.5,2336 2159.5,2340 2161,2344 2158.5,2348 2158,2354 2159,2359 2158.5,2363 2158.5,2367 2158.5,2372 2155.5,2377 2154.5,2382 2159,2387 2160,2391 2159.5,2396 2158.5,2400 2158.5,2405 2157.5,2410 2159,2415 2158.5,2420 2160.5,2425 2159,2430 2158,2433 2158,2437 2160,2442 2159.5,2446 2159,2451 2160,2455 2160,2461 2158.5,2466 2158,2469 2157.5,2475 2157.5,2480 2156.5,2484 2158,2489 2158,2495 2159,2501 2158.5,2506 2159,2510 2157,2515 2158.5,2520 2160.5,2525" fill="none" stroke="#181830" stroke-width="4.6"/>
<polyline points="2157.5,1873 2159,1880 2161.5,1886 2161.5,1894 2160.5,1902 2164,1909 2164,1916 2161.5,1924 2161.5,1931 2163.5,1939 2164.5,1948 2164,1958 2164.5,1965 2162.5,1973 2163,1980 2163,1987 2163.5,1997 2161.5,2003 2165.5,2011 2162.5,2019 2165.5,2025 2163,2031 2161.5,2037 2162,2043 2165,2050 2164.5,2057 2161.5,2066 2164,2074 2161.5,2079 2161.5,2088 2159,2094 2163,2103 2163.5,2110 2162.5,2119 2164,2129 2163,2137 2161,2144 2161,2153 2161.5,2162 2163,2172 2161.5,2180 2164.5,2190" fill="none" stroke="#ff2020" stroke-width="1.1" stroke-dasharray="1.5 5"/>
<polyline points="2159.5,2259 2164,2265 2161.5,2274 2161,2282 2162.5,2288 2162,2295 2163.5,2305 2165,2313 2165,2324 2165.5,2330 2164.5,2339 2164.5,2346 2161.5,2352 2160,2362 2163,2370 2160,2377 2161.5,2385 2160.5,2394 2161,2402 2161,2411 2159.5,2421 2159,2430 2159,2438 2162.5,2445 2161.5,2451 2163,2458 2161.5,2464 2160,2470 2161.5,2478 2164,2487 2162,2494 2163.5,2503 2163,2510 2163.5,2520 2161.5,2526" fill="none" stroke="#ff2020" stroke-width="1.1" stroke-dasharray="1.5 5"/>
<polyline points="2147.5,1873 2154.5,1886 2152,1894 2155.5,1907 2157.5,1918 2152.5,1926 2156.5,1933 2153,1944 2159,1954 2155,1965 2152.5,1973 2154.5,1984 2153,1993 2157,2003 2152.5,2013 2158.5,2023 2153.5,2030 2150,2041 2156,2051 2157.5,2062 2152.5,2073 2155,2080 2156,2091 2157.5,2100 2151,2112 2151,2119 2158,2127 2151,2137 2156,2146 2151,2159 2154.5,2170 2154.5,2182 2151.5,2193" fill="none" stroke="#20a020" stroke-width="1.1" stroke-dasharray="1.2 9"/>
<polyline points="2153.5,2257 2155.5,2269 2154.5,2281 2151.5,2293 2156.5,2301 2156,2308 2160,2316 2154,2324 2158.5,2332 2152,2341 2153.5,2350 2156.5,2358 2159,2366 2158,2375 2158.5,2385 2157.5,2398 2154,2405 2152.5,2418 2157,2428 2152,2436 2155.5,2444 2153,2452 2155.5,2462 2158.5,2470 2154.5,2482 2157.5,2494 2149.5,2502 2153,2514 2157.5,2525" fill="none" stroke="#20a020" stroke-width="1.1" stroke-dasharray="1.2 9"/>
<polyline points="2151.5,1873 2153.5,1877 2156.5,1881 2159,1886 2161,1890 2159,1893 2158.5,1899 2160,1903 2160,1907 2159.5,1912 2158,1915 2160,1920 2158,1924 2159,1928 2162,1932 2159.5,1937 2158,1940 2159,1946 2157.5,1951 2160.5,1955 2158,1959 2161,1963 2160,1968 2158,1972 2158.5,1977 2160,1980 2160,1984 2161,1989 2159.5,1994 2158,1998 2158.5,2004 2162,2008 2161.5,2013 2159.5,2017 2160.5,2020 2160.5,2026 2160,2029 2160.5,2034 2161.5,2037 2158,2042 2158,2046 2160.5,2049 2156.5,2054 2158,2057 2159.5,2061 2158.5,2065 2159.5,2069 2156,2074 2160,2078 2157.5,2081 2158.5,2085 2157.5,2089 2156.5,2093 2160,2099 2158,2103 2158,2107 2158,2111 2161,2114 2165.5,2118 2158.5,2123 2162,2128 2160.5,2131 2158.5,2136 2161,2140 2160.5,2143 2159,2149 2161.5,2153 2159.5,2158 2162,2163 2161.5,2167 2158.5,2171 2159,2176 2160,2181 2159,2186 2159,2189 2158.5,2194" fill="none" stroke="#1a78f0" stroke-width="3.4"/>
<polyline points="2161,2256 2161.5,2260 2160,2265 2160,2270 2159,2276 2160.5,2280 2160.5,2284 2158,2289 2161,2292 2159.5,2297 2159.5,2303 2158.5,2307 2161.5,2311 2157.5,2317 2159,2320 2160,2325 2157.5,2330 2158,2335 2159.5,2339 2158,2344 2158,2348 2160.5,2351 2157,2354 2159.5,2357 2160,2362 2157.5,2367 2158.5,2372 2160.5,2376 2147.5,2381 2160.5,2385 2157.5,2390 2157.5,2394 2161,2399 2161.5,2402 2161,2406 2159,2411 2159,2416 2160,2421 2160.5,2425 2159.5,2430 2161,2435 2157,2440 2157.5,2446 2158,2449 2157.5,2453 2158,2457 2157.5,2460 2160.5,2464 2159.5,2469 2159.5,2473 2158.5,2477 2159,2481 2156.5,2486 2157,2490 2160.5,2494 2158.5,2498 2158,2502 2158,2506 2162,2509 2161,2515 2158,2519 2157,2523 2156.5,2528" fill="none" stroke="#1a78f0" stroke-width="3.4"/>
<ellipse cx="2129.4" cy="1881.8" rx="21.5" ry="12.4" fill="none" stroke="#ff40ff" stroke-width="2.4" stroke-dasharray="5 3.5"/>
<ellipse cx="2193.3" cy="1937.3" rx="20.9" ry="11.3" fill="none" stroke="#ff40ff" stroke-width="2.4" stroke-dasharray="5 3.5"/>
<ellipse cx="2191.6" cy="1980.8" rx="20.9" ry="7.9" fill="none" stroke="#ff1e1e" stroke-width="2.4" stroke-dasharray="5 3.5"/>
<ellipse cx="2194.5" cy="2224.2" rx="18.1" ry="60.5" fill="none" stroke="#ff1e1e" stroke-width="2.4" stroke-dasharray="5 3.5"/>
<ellipse cx="2146.4" cy="2379.8" rx="19.8" ry="10.2" fill="none" stroke="#ff1e1e" stroke-width="2.4" stroke-dasharray="5 3.5"/>
<text class="bl" x="2295.7" y="1883.8">p36.3</text>
<text class="bl" x="2295.7" y="1904">p36.2</text>
<text class="bl" x="2295.7" y="1924.2">p36.1</text>
<text class="bl" x="2295.7" y="1944.3">p35</text>
<text class="bl" x="2295.7" y="1964.5">p34.3</text>
<text class="bl" x="2295.7" y="1984.7">p34.2</text>
<text class="bl" x="2295.7" y="2004.9">p34.1</text>
<text class="bl" x="2295.7" y="2025.1">p33</text>
<text class="bl" x="2295.7" y="2045.2">p32</text>
<text class="bl" x="2295.7" y="2065.4">p31.3</text>
<text class="bl" x="2295.7" y="2085.6">p31.2</text>
<text class="bl" x="2295.7" y="2105.8">p31.1</text>
<text class="bl" x="2295.7" y="2125.9">p22.3</text>
<text class="bl" x="2295.7" y="2146.1">p22.1</text>
<text class="bl" x="2295.7" y="2166.3">p21</text>
<text class="bl" x="2295.7" y="2247">q12</text>
<text class="bl" x="2295.7" y="2267.2">q21.1</text>
<text class="bl" x="2295.7" y="2287.4">q21.3</text>
<text class="bl" x="2295.7" y="2307.5">q22</text>
<text class="bl" x="2295.7" y="2327.7">q23</text>
<text class="bl" x="2295.7" y="2347.9">q24</text>
<text class="bl" x="2295.7" y="2368.1">q25</text>
<text class="bl" x="2295.7" y="2388.2">q31</text>
<text class="bl" x="2295.7" y="2408.4">q32.1</text>
<text class="bl" x="2295.7" y="2428.6">q32.3</text>
<text class="bl" x="2295.7" y="2448.8">q41</text>
<text class="bl" x="2295.7" y="2468.9">q42.1</text>
<text class="bl" x="2295.7" y="2489.1">q42.3</text>
<text class="bl" x="2295.7" y="2509.3">q43</text>
<text class="bl" x="2295.7" y="2529.5">q44</text>
<line x1="2335.9" y1="1872.2" x2="2335.9" y2="2536.3" stroke="#a8a8a8" stroke-width="1.4" stroke-dasharray="3.5 4"/>
<line x1="2344.4" y1="1872.2" x2="2344.4" y2="2536.3" stroke="#a8a8a8" stroke-width="1.4" stroke-dasharray="3.5 4"/>
<line x1="2358.6" y1="1872.2" x2="2358.6" y2="2536.3" stroke="#a8a8a8" stroke-width="1.4" stroke-dasharray="3.5 4"/>
<line x1="2372.7" y1="1872.2" x2="2372.7" y2="2536.3" stroke="#a8a8a8" stroke-width="1.4" stroke-dasharray="3.5 4"/>
<line x1="2381.2" y1="1872.2" x2="2381.2" y2="2536.3" stroke="#a8a8a8" stroke-width="1.4" stroke-dasharray="3.5 4"/>
<line x1="2395.3" y1="1872.2" x2="2395.3" y2="2536.3" stroke="#a8a8a8" stroke-width="1.4" stroke-dasharray="3.5 4"/>
<line x1="2409.5" y1="1872.2" x2="2409.5" y2="2536.3" stroke="#a8a8a8" stroke-width="1.4" stroke-dasharray="3.5 4"/>
<text x="2345.5" y="1858.1" font-size="13" font-weight="bold" fill="#222" text-anchor="middle">1</text>
<text x="2372.7" y="1868.2" font-size="8" font-weight="normal" fill="#aaa" text-anchor="middle">-4 -2 -1  0 +1 +2 +4</text>
<rect x="2300.3" y="1875" width="14.1" height="659.2" fill="#fff" stroke="#333" stroke-width="1.3"/>
<rect x="2300.9" y="1875" width="12.9" height="9.6" fill="#bebebe"/>
<rect x="2300.9" y="1884.6" width="12.9" height="8.5" fill="#848484"/>
<rect x="2300.9" y="1904.4" width="12.9" height="11.3" fill="#595959"/>
<rect x="2300.9" y="1926.9" width="12.9" height="11.3" fill="#848484"/>
<rect x="2300.9" y="1946.6" width="12.9" height="8.5" fill="#848484"/>
<rect x="2300.9" y="1963.6" width="12.9" height="5.6" fill="#929292"/>
<rect x="2300.9" y="1977.7" width="12.9" height="14.1" fill="#bebebe"/>
<rect x="2300.9" y="1994.6" width="12.9" height="14.1" fill="#4a4a4a"/>
<rect x="2300.9" y="2022.8" width="12.9" height="8.5" fill="#767676"/>
<rect x="2300.9" y="2034.1" width="12.9" height="22.6" fill="#929292"/>
<rect x="2300.9" y="2056.6" width="12.9" height="42.3" fill="#434343"/>
<rect x="2300.9" y="2107.4" width="12.9" height="11.3" fill="#4a4a4a"/>
<rect x="2300.9" y="2124.3" width="12.9" height="11.3" fill="#595959"/>
<rect x="2300.9" y="2141.2" width="12.9" height="14.1" fill="#4a4a4a"/>
<rect x="2300.9" y="2166.6" width="12.9" height="16.9" fill="#848484"/>
<rect x="2300.9" y="2183.5" width="12.9" height="9.6" fill="#929292"/>
<rect x="2300.9" y="2264.4" width="12.9" height="5.8" fill="#3c3c3c"/>
<rect x="2300.9" y="2276.1" width="12.9" height="5.8" fill="#3c3c3c"/>
<rect x="2300.9" y="2287.7" width="12.9" height="5.8" fill="#4a4a4a"/>
<rect x="2300.9" y="2305.2" width="12.9" height="5.8" fill="#4a4a4a"/>
<rect x="2300.9" y="2319.8" width="12.9" height="8.7" fill="#595959"/>
<rect x="2300.9" y="2337.3" width="12.9" height="11.7" fill="#595959"/>
<rect x="2300.9" y="2363.5" width="12.9" height="14.6" fill="#353535"/>
<rect x="2300.9" y="2386.8" width="12.9" height="11.7" fill="#4a4a4a"/>
<rect x="2300.9" y="2421.8" width="12.9" height="11.7" fill="#929292"/>
<rect x="2300.9" y="2439.3" width="12.9" height="29.1" fill="#434343"/>
<rect x="2300.9" y="2483" width="12.9" height="11.7" fill="#848484"/>
<rect x="2300.9" y="2497.5" width="12.9" height="17.5" fill="#595959"/>
<rect x="2300.9" y="2517.9" width="12.9" height="14.6" fill="#b0b0b0"/>
<rect x="2299.3" y="2195.3" width="16.1" height="15.8" fill="#fff"/>
<rect x="2304.5" y="2195.3" width="5.7" height="15.8" fill="#555"/>
<rect x="2300.9" y="2212.3" width="12.9" height="38.5" fill="#c4c4c4"/>
<line x1="2337.1" y1="1877.9" x2="2337.1" y2="1894.8" stroke="#2a2ae0" stroke-width="3.25"/>
<line x1="2401" y1="2180.6" x2="2401" y2="2279.6" stroke="#3a50e8" stroke-width="2.6"/>
<line x1="2371" y1="2211.7" x2="2371" y2="2259.8" stroke="#5560f0" stroke-width="3.25"/>
<line x1="2292.4" y1="2203.2" x2="2322.9" y2="2203.2" stroke="#2222dd" stroke-width="3.4"/>
<line x1="2321.8" y1="2203.2" x2="2419.1" y2="2203.2" stroke="#3a40e8" stroke-width="2.5"/>
<line x1="2371" y1="2170.4" x2="2396.5" y2="2170.4" stroke="#a4c6ff" stroke-width="2"/>
<polyline points="2362,1876 2364,1881 2364,1885 2367,1890 2369.5,1894 2370.5,1898 2369,1904 2369,1909 2368.5,1914 2369,1918 2369,1924 2370,1930 2368,1935 2370,1939 2369,1944 2367.5,1950 2369,1953 2368.5,1958 2369,1961 2369.5,1965 2369,1969 2369.5,1973 2367.5,1979 2369,1983 2368.5,1989 2370.5,1992 2369.5,1996 2367.5,2002 2368.5,2007 2369.5,2012 2367,2016 2368,2020 2369,2024 2369,2029 2370,2035 2369,2038 2368.5,2042 2369.5,2046 2369.5,2052 2370.5,2056 2368,2060 2368.5,2065 2369,2071 2367.5,2076 2369,2080 2369.5,2085 2369.5,2090 2370,2094 2369,2099 2368,2104 2368,2109 2368,2113 2369,2118 2370.5,2124 2368.5,2128 2369,2132 2371,2138 2369.5,2141 2371,2146 2370,2151 2370,2154 2371.5,2159 2370,2163 2369.5,2167 2369.5,2172 2369.5,2178 2368.5,2183 2369,2189" fill="none" stroke="#181830" stroke-width="4.6"/>
<polyline points="2368.5,2254 2368.5,2257 2369,2262 2369.5,2267 2369.5,2270 2370.5,2275 2368.5,2279 2369.5,2285 2369,2290 2368.5,2295 2369,2301 2369.5,2306 2369.5,2311 2369,2316 2370.5,2322 2369.5,2327 2370.5,2332 2370,2336 2371,2342 2371,2346 2369,2350 2369.5,2353 2368.5,2357 2369,2362 2369,2366 2369.5,2370 2368,2375 2369,2380 2358,2385 2370,2390 2369,2393 2369.5,2397 2369,2402 2370.5,2406 2369.5,2411 2369.5,2416 2369.5,2420 2368,2425 2368,2428 2367,2433 2367.5,2438 2369.5,2441 2368,2447 2368.5,2451 2369,2457 2368.5,2462 2370,2465 2370.5,2471 2368.5,2476 2370,2481 2369.5,2487 2368,2492 2369.5,2496 2369,2500 2369,2504 2370,2508 2370,2514 2371.5,2517 2369,2521 2369.5,2524 2370,2528 2370,2531" fill="none" stroke="#181830" stroke-width="4.6"/>
<polyline points="2367.5,1876 2365,1883 2369,1890 2372,1898 2373,1908 2372.5,1915 2373.5,1922 2372,1931 2373.5,1937 2369,1944 2369,1954 2371,1961 2371.5,1970 2371.5,1976 2372.5,1985 2370,1995 2371,2003 2373,2011 2374,2018 2371.5,2024 2373.5,2031 2369.5,2040 2371.5,2046 2371.5,2054 2371,2061 2374,2068 2371,2076 2371,2081 2371,2090 2374,2098 2372.5,2105 2370.5,2114 2374,2123 2374,2133 2373.5,2139 2372.5,2148 2373.5,2158 2370,2168 2373.5,2175 2373,2182 2374.5,2189" fill="none" stroke="#ff2020" stroke-width="1.1" stroke-dasharray="1.5 5"/>
<polyline points="2373.5,2254 2370.5,2264 2371,2271 2371,2280 2372.5,2287 2372.5,2296 2370.5,2306 2371.5,2314 2369,2324 2371.5,2334 2370.5,2341 2372,2351 2370.5,2357 2370,2366 2369,2372 2372.5,2379 2372,2389 2371,2396 2372,2404 2370,2411 2370.5,2418 2370.5,2424 2371,2433 2369.5,2440 2373.5,2448 2372,2457 2372.5,2464 2370,2473 2370,2482 2372.5,2492 2372.5,2501 2373.5,2508 2371,2515 2374,2524 2371.5,2529" fill="none" stroke="#ff2020" stroke-width="1.1" stroke-dasharray="1.5 5"/>
<polyline points="2362,1876 2358.5,1884 2363,1895 2362.5,1903 2363,1916 2363.5,1928 2367,1941 2366,1948 2365.5,1958 2367.5,1970 2361.5,1979 2367,1986 2367.5,1997 2366.5,2010 2362.5,2017 2367.5,2026 2364.5,2037 2369,2045 2366.5,2055 2365.5,2064 2362,2075 2364,2085 2364.5,2092 2363,2103 2362,2114 2367.5,2123 2368,2132 2364,2141 2366.5,2149 2361,2160 2365.5,2171 2362,2183 2362.5,2193" fill="none" stroke="#20a020" stroke-width="1.1" stroke-dasharray="1.2 9"/>
<polyline points="2362,2254 2367.5,2266 2362,2277 2365.5,2287 2361,2297 2363.5,2308 2361,2316 2359,2326 2360.5,2339 2364,2352 2362,2362 2364,2372 2361,2381 2362,2392 2364.5,2402 2365,2411 2367,2424 2363.5,2433 2368,2444 2368,2457 2364,2467 2365,2477 2365,2484 2365.5,2494 2365.5,2506 2367.5,2513 2367,2522 2366.5,2531" fill="none" stroke="#20a020" stroke-width="1.1" stroke-dasharray="1.2 9"/>
<polyline points="2365.5,1876 2364.5,1881 2365,1886 2367.5,1890 2368.5,1893 2370,1896 2368,1901 2369,1905 2370.5,1909 2371,1913 2368,1918 2367,1923 2368.5,1927 2367.5,1931 2368.5,1936 2367,1940 2368.5,1943 2367.5,1947 2368.5,1951 2368.5,1954 2370.5,1959 2367.5,1962 2367.5,1966 2369,1970 2367,1975 2368.5,1980 2370.5,1983 2369,1988 2371,1991 2372,1995 2368,1999 2367.5,2002 2372,2007 2369.5,2012 2371.5,2018 2371,2023 2368.5,2026 2370.5,2030 2366.5,2035 2370,2038 2370.5,2042 2370,2045 2373,2049 2370,2053 2368.5,2056 2371,2060 2368.5,2064 2369.5,2067 2366,2071 2368,2074 2365.5,2078 2368,2081 2368.5,2086 2368,2089 2368.5,2095 2370,2099 2370.5,2104 2368,2110 2371.5,2115 2371.5,2120 2371,2125 2371,2129 2370,2134 2368.5,2139 2370.5,2144 2369.5,2149 2368.5,2152 2371.5,2157 2370,2162 2370,2167 2368.5,2171 2370,2175 2369.5,2180 2368,2184 2369.5,2188 2370,2192" fill="none" stroke="#1a1ae0" stroke-width="3.4"/>
<polyline points="2371,2255 2369,2259 2367,2262 2368.5,2266 2371,2270 2369.5,2275 2369,2280 2369.5,2285 2368,2289 2367.5,2294 2366.5,2298 2366,2301 2371,2306 2369,2310 2367,2314 2366.5,2319 2367.5,2323 2366.5,2326 2370.5,2332 2369,2336 2369,2340 2368,2346 2370,2351 2370.5,2355 2367,2358 2370.5,2364 2369.5,2369 2371.5,2374 2369.5,2378 2369,2382 2357.5,2386 2366,2390 2366.5,2394 2368.5,2400 2370,2403 2368.5,2406 2370.5,2410 2366.5,2414 2369.5,2418 2367,2422 2369,2426 2369.5,2431 2371,2435 2367,2438 2367,2442 2366.5,2445 2370,2449 2367,2454 2367.5,2457 2368,2461 2370,2464 2367.5,2469 2368.5,2474 2368,2478 2368,2483 2368.5,2488 2367,2491 2365.5,2495 2370,2499 2368,2503 2368,2507 2367,2511 2366,2514 2367,2519 2365,2522 2367,2525 2365.5,2530" fill="none" stroke="#1a1ae0" stroke-width="3.4"/>
<ellipse cx="2335.9" cy="1887.5" rx="21.5" ry="11.3" fill="none" stroke="#ff40ff" stroke-width="2.4" stroke-dasharray="5 3.5"/>
<ellipse cx="2389.7" cy="1983.7" rx="18.1" ry="7.9" fill="none" stroke="#ff1e1e" stroke-width="2.4" stroke-dasharray="5 3.5"/>
<ellipse cx="2401" cy="2223" rx="18.1" ry="60.5" fill="none" stroke="#ff1e1e" stroke-width="2.4" stroke-dasharray="5 3.5"/>
<ellipse cx="2356.9" cy="2385.4" rx="19.8" ry="10.2" fill="none" stroke="#ff1e1e" stroke-width="2.4" stroke-dasharray="5 3.5"/>
<text x="2676.7" y="1824.1" font-size="27.7" font-weight="bold" fill="#000" text-anchor="start" textLength="61" lengthAdjust="spacingAndGlyphs">WT1</text>
<text x="2897.4" y="1824.1" font-size="27.7" font-weight="bold" fill="#000" text-anchor="start" textLength="61" lengthAdjust="spacingAndGlyphs">WT2</text>
<text x="3109.6" y="1824.1" font-size="27.7" font-weight="bold" fill="#000" text-anchor="start" textLength="70.8" lengthAdjust="spacingAndGlyphs">CDT1</text>
<text x="3316.7" y="1824.1" font-size="27.7" font-weight="bold" fill="#000" text-anchor="start" textLength="34" lengthAdjust="spacingAndGlyphs">R1</text>
<text x="3518.8" y="1824.1" font-size="27.7" font-weight="bold" fill="#000" text-anchor="start" textLength="35" lengthAdjust="spacingAndGlyphs">R2</text>
<text class="bl" x="2664.3" y="1886.6">p25.3</text>
<text class="bl" x="2664.3" y="1907.2">p25.1</text>
<text class="bl" x="2664.3" y="1927.8">p24</text>
<text class="bl" x="2664.3" y="1948.4">p23</text>
<text class="bl" x="2664.3" y="1969">p22</text>
<text class="bl" x="2664.3" y="1989.5">p21</text>
<text class="bl" x="2664.3" y="2010.1">p16</text>
<text class="bl" x="2664.3" y="2030.7">p15</text>
<text class="bl" x="2664.3" y="2051.3">p14</text>
<text class="bl" x="2664.3" y="2071.9">p13</text>
<text class="bl" x="2664.3" y="2092.4">p12</text>
<text class="bl" x="2664.3" y="2154.2">q12</text>
<text class="bl" x="2664.3" y="2174.8">q13</text>
<text class="bl" x="2664.3" y="2195.3">q14.1</text>
<text class="bl" x="2664.3" y="2215.9">q14.3</text>
<text class="bl" x="2664.3" y="2236.5">q21</text>
<text class="bl" x="2664.3" y="2257.1">q22</text>
<text class="bl" x="2664.3" y="2277.6">q23</text>
<text class="bl" x="2664.3" y="2298.2">q24.1</text>
<text class="bl" x="2664.3" y="2318.8">q24.3</text>
<text class="bl" x="2664.3" y="2339.4">q31</text>
<text class="bl" x="2664.3" y="2360">q32.1</text>
<text class="bl" x="2664.3" y="2380.5">q32.3</text>
<text class="bl" x="2664.3" y="2401.1">q33</text>
<text class="bl" x="2664.3" y="2421.7">q34</text>
<text class="bl" x="2664.3" y="2442.3">q35</text>
<text class="bl" x="2664.3" y="2462.9">q36</text>
<text class="bl" x="2664.3" y="2483.4">q37.1</text>
<text class="bl" x="2664.3" y="2504">q37.3</text>
<line x1="2704.5" y1="1875" x2="2704.5" y2="2510.8" stroke="#a8a8a8" stroke-width="1.4" stroke-dasharray="3.5 4"/>
<line x1="2713" y1="1875" x2="2713" y2="2510.8" stroke="#a8a8a8" stroke-width="1.4" stroke-dasharray="3.5 4"/>
<line x1="2727.1" y1="1875" x2="2727.1" y2="2510.8" stroke="#a8a8a8" stroke-width="1.4" stroke-dasharray="3.5 4"/>
<line x1="2741.3" y1="1875" x2="2741.3" y2="2510.8" stroke="#a8a8a8" stroke-width="1.4" stroke-dasharray="3.5 4"/>
<line x1="2749.7" y1="1875" x2="2749.7" y2="2510.8" stroke="#a8a8a8" stroke-width="1.4" stroke-dasharray="3.5 4"/>
<line x1="2763.9" y1="1875" x2="2763.9" y2="2510.8" stroke="#a8a8a8" stroke-width="1.4" stroke-dasharray="3.5 4"/>
<line x1="2778" y1="1875" x2="2778" y2="2510.8" stroke="#a8a8a8" stroke-width="1.4" stroke-dasharray="3.5 4"/>
<text x="2714.1" y="1860.9" font-size="13" font-weight="bold" fill="#222" text-anchor="middle">2</text>
<text x="2741.3" y="1871.1" font-size="8" font-weight="normal" fill="#aaa" text-anchor="middle">-4 -2 -1  0 +1 +2 +4</text>
<rect x="2668.8" y="1877.9" width="15.3" height="630.9" fill="#fff" stroke="#333" stroke-width="1.3"/>
<rect x="2669.4" y="1886.3" width="14.1" height="8.5" fill="#4a4a4a"/>
<rect x="2669.4" y="1909" width="14.1" height="17" fill="#4a4a4a"/>
<rect x="2669.4" y="1931.6" width="14.1" height="11.3" fill="#4a4a4a"/>
<rect x="2669.4" y="1945.8" width="14.1" height="8.5" fill="#929292"/>
<rect x="2669.4" y="1959.9" width="14.1" height="11.3" fill="#4a4a4a"/>
<rect x="2669.4" y="1974.1" width="14.1" height="11.3" fill="#929292"/>
<rect x="2669.4" y="1999.5" width="14.1" height="14.1" fill="#353535"/>
<rect x="2669.4" y="2016.5" width="14.1" height="19.8" fill="#4a4a4a"/>
<rect x="2669.4" y="2044.8" width="14.1" height="19.8" fill="#929292"/>
<rect x="2669.4" y="2067.4" width="14.1" height="5.7" fill="#4a4a4a"/>
<rect x="2669.4" y="2075.9" width="14.1" height="19.8" fill="#353535"/>
<rect x="2669.4" y="2143.8" width="14.1" height="8.5" fill="#4a4a4a"/>
<rect x="2669.4" y="2155.1" width="14.1" height="8.5" fill="#929292"/>
<rect x="2669.4" y="2172.1" width="14.1" height="14.1" fill="#4a4a4a"/>
<rect x="2669.4" y="2197.6" width="14.1" height="19.8" fill="#929292"/>
<rect x="2669.4" y="2220.2" width="14.1" height="5.7" fill="#4a4a4a"/>
<rect x="2669.4" y="2234.4" width="14.1" height="14.1" fill="#353535"/>
<rect x="2669.4" y="2254.2" width="14.1" height="8.5" fill="#4a4a4a"/>
<rect x="2669.4" y="2279.6" width="14.1" height="14.1" fill="#4a4a4a"/>
<rect x="2669.4" y="2305.1" width="14.1" height="17" fill="#4a4a4a"/>
<rect x="2669.4" y="2339" width="14.1" height="8.5" fill="#4a4a4a"/>
<rect x="2669.4" y="2353.2" width="14.1" height="17" fill="#4a4a4a"/>
<rect x="2669.4" y="2375.8" width="14.1" height="14.1" fill="#4a4a4a"/>
<rect x="2669.4" y="2406.9" width="14.1" height="8.5" fill="#929292"/>
<rect x="2669.4" y="2421.1" width="14.1" height="17" fill="#353535"/>
<rect x="2669.4" y="2455" width="14.1" height="17" fill="#4a4a4a"/>
<rect x="2669.4" y="2474.8" width="14.1" height="11.3" fill="#4a4a4a"/>
<rect x="2669.4" y="2489" width="14.1" height="5.7" fill="#4a4a4a"/>
<rect x="2667.8" y="2107.6" width="17.3" height="15.8" fill="#fff"/>
<rect x="2673.4" y="2107.6" width="6.1" height="15.8" fill="#555"/>
<line x1="2773.5" y1="1900.5" x2="2773.5" y2="2225.9" stroke="#3a78f0" stroke-width="2.6"/>
<line x1="2708.4" y1="2430.7" x2="2708.4" y2="2508.8" stroke="#3a78f0" stroke-width="2.6"/>
<line x1="2707.3" y1="2092.9" x2="2707.3" y2="2101.4" stroke="#a4c6ff" stroke-width="4.75"/>
<line x1="2660.9" y1="2115.5" x2="2691.5" y2="2115.5" stroke="#2222dd" stroke-width="3.4"/>
<line x1="2664.3" y1="2115.5" x2="2792.2" y2="2115.5" stroke="#2a2ae0" stroke-width="3"/>
<polyline points="2734,1879 2735.5,1884 2739.5,1889 2739,1894 2739.5,1898 2739.5,1903 2741.5,1907 2740,1912 2740,1916 2740,1922 2741,1927 2740,1932 2738.5,1936 2740.5,1942 2741.5,1945 2741.5,1951 2740.5,1956 2741,1961 2739.5,1967 2741,1971 2738,1975 2740.5,1981 2741,1985 2741,1989 2739.5,1994 2740.5,1998 2739.5,2003 2742,2006 2742,2010 2742,2016 2743,2022 2742,2027 2741.5,2031 2743.5,2034 2741.5,2039 2742,2043 2740.5,2046 2742.5,2052 2742.5,2056 2740.5,2061 2742.5,2065 2741.5,2070 2741.5,2075 2742,2080 2743,2083 2742,2086 2741,2092 2742,2096 2736,2099 2735.5,2103 2740,2108" fill="none" stroke="#181830" stroke-width="4.6"/>
<polyline points="2741,2122 2739.5,2126 2741,2130 2742,2133 2740.5,2138 2742,2143 2742,2146 2741.5,2151 2744,2156 2743.5,2160 2744,2165 2746,2170 2744.5,2174 2744,2179 2742,2185 2740,2190 2742,2194 2740,2198 2740.5,2203 2739.5,2207 2739.5,2211 2741.5,2216 2740,2220 2742,2225 2740.5,2228 2742,2233 2742,2238 2742,2243 2731,2247 2743.5,2252 2741,2258 2740,2262 2739.5,2267 2740.5,2272 2742,2276 2741.5,2280 2741.5,2285 2741,2289 2740,2292 2740,2297 2740,2303 2739,2308 2739,2312 2740,2318 2738.5,2323 2739.5,2328 2738,2333 2738,2338 2739.5,2342 2741,2345 2739,2350 2739.5,2354 2742,2360 2740,2365 2741.5,2369 2739,2374 2741,2379 2740.5,2384 2740,2388 2740.5,2392 2741.5,2396 2739.5,2400 2741,2403 2739,2408 2740,2413 2741,2418 2740.5,2422 2741,2425 2724,2430 2740.5,2435 2741,2440 2742,2444 2743,2448 2743.5,2452 2741,2458 2742,2463 2741.5,2468 2740.5,2472 2742,2478 2741.5,2483 2740.5,2487 2741.5,2491 2740.5,2495 2740.5,2500 2740.5,2503 2740.5,2508" fill="none" stroke="#181830" stroke-width="4.6"/>
<polyline points="2736,1879 2742.5,1888 2743,1896 2742,1904 2741,1912 2745,1921 2746,1930 2741.5,1938 2744,1946 2742,1956 2743.5,1966 2745,1971 2743,1979 2744.5,1988 2743.5,1997 2745.5,2004 2745.5,2014 2742,2024 2744,2032 2742,2039 2742.5,2046 2743,2055 2742,2062 2740.5,2068 2740.5,2077 2740.5,2087 2742,2096 2740,2104" fill="none" stroke="#ff2020" stroke-width="1.1" stroke-dasharray="1.5 5"/>
<polyline points="2743.5,2120 2745,2128 2743,2135 2745,2145 2745.5,2152 2745.5,2161 2746.5,2167 2744.5,2174 2746,2180 2742,2190 2742,2198 2742.5,2207 2740,2215 2739.5,2224 2742,2232 2740.5,2241 2728,2248 2742,2257 2743,2267 2741.5,2273 2745,2283 2742.5,2292 2743,2300 2742,2310 2744,2316 2741.5,2325 2742.5,2331 2744.5,2337 2744,2345 2743,2353 2742.5,2359 2745,2366 2740.5,2374 2742.5,2381 2743.5,2389 2743.5,2397 2743.5,2404 2743.5,2414 2745.5,2421 2743,2427 2746.5,2436 2744.5,2443 2744.5,2450 2744.5,2457 2746,2464 2747.5,2473 2748,2483 2746,2491 2745,2501" fill="none" stroke="#ff2020" stroke-width="1.1" stroke-dasharray="1.5 5"/>
<polyline points="2727,1879 2730,1888 2738,1896 2733,1904 2735.5,1914 2735,1925 2734.5,1937 2740,1948 2735,1957 2734.5,1968 2736.5,1978 2736.5,1989 2736,2001 2734.5,2009 2734.5,2016 2740,2027 2734.5,2039 2740,2051 2734,2060 2739.5,2069 2735,2081 2736,2090 2729.5,2103" fill="none" stroke="#20a020" stroke-width="1.1" stroke-dasharray="1.2 9"/>
<polyline points="2738,2126 2736,2137 2743.5,2148 2743,2161 2740,2171 2742.5,2181 2736,2193 2738,2201 2741,2208 2736.5,2218 2736.5,2229 2735,2241 2732.5,2253 2735,2265 2734.5,2274 2735.5,2285 2732.5,2292 2733,2301 2735.5,2313 2734.5,2325 2737,2336 2740,2347 2741,2356 2734.5,2367 2739,2378 2735,2388 2739,2397 2735,2408 2736.5,2421 2733.5,2432 2735,2445 2738,2455 2738,2466 2734,2476 2736.5,2485 2737.5,2498" fill="none" stroke="#20a020" stroke-width="1.1" stroke-dasharray="1.2 9"/>
<polyline points="2734.5,1879 2735.5,1884 2737.5,1888 2742,1891 2739,1895 2741,1900 2741,1903 2741.5,1908 2741.5,1913 2739,1918 2737.5,1923 2739.5,1926 2739,1931 2740,1936 2738,1940 2738,1943 2740.5,1947 2738,1952 2741.5,1957 2739,1962 2739.5,1966 2741,1969 2742.5,1974 2741.5,1979 2742,1982 2740,1986 2742,1991 2740.5,1996 2744,2000 2743,2004 2740.5,2008 2739,2014 2743,2019 2743.5,2023 2739.5,2027 2740.5,2031 2740.5,2037 2741,2041 2742.5,2045 2741.5,2049 2742.5,2054 2740.5,2058 2742,2062 2741.5,2065 2743,2070 2740.5,2073 2743,2077 2740.5,2082 2740.5,2086 2742,2090 2739.5,2093 2738.5,2098 2737.5,2102 2739.5,2107" fill="none" stroke="#1a78f0" stroke-width="3.4"/>
<polyline points="2741.5,2120 2739,2124 2738,2129 2740.5,2132 2744,2137 2743.5,2140 2742.5,2145 2742.5,2150 2742.5,2155 2742,2159 2745.5,2164 2745,2169 2746,2173 2741,2177 2742,2181 2741.5,2186 2742,2192 2740.5,2197 2740.5,2201 2742,2205 2740.5,2208 2740.5,2213 2742,2217 2741,2221 2741.5,2224 2739.5,2229 2741,2234 2740.5,2239 2742,2243 2727,2248 2740.5,2253 2740.5,2257 2740.5,2260 2739.5,2264 2738.5,2269 2741,2274 2740.5,2278 2742,2284 2740.5,2288 2743.5,2291 2742.5,2296 2744,2301 2741.5,2305 2742.5,2310 2743,2314 2741.5,2318 2738.5,2321 2741,2326 2740.5,2329 2739.5,2334 2737.5,2338 2741,2341 2738,2346 2739,2350 2743.5,2355 2740.5,2360 2741.5,2365 2743,2369 2740,2372 2740,2376 2740,2381 2743,2385 2742,2389 2741.5,2393 2741.5,2398 2741.5,2402 2741,2406 2740,2411 2740.5,2416 2742,2420 2740.5,2425 2723,2429 2739,2433 2741,2438 2741,2441 2741,2445 2740.5,2449 2739.5,2452 2741.5,2456 2739.5,2460 2742.5,2464 2741.5,2468 2739.5,2471 2741.5,2476 2743.5,2481 2742,2485 2743.5,2489 2741,2494 2742,2497 2738,2502 2738,2508" fill="none" stroke="#1a78f0" stroke-width="3.4"/>
<ellipse cx="2709.6" cy="1885.2" rx="19.8" ry="10.2" fill="none" stroke="#ff1e1e" stroke-width="2.4" stroke-dasharray="5 3.5"/>
<ellipse cx="2772.9" cy="1991" rx="13" ry="89.4" fill="none" stroke="#ff40ff" stroke-width="2.4" stroke-dasharray="5 3.5"/>
<ellipse cx="2772.9" cy="2160.8" rx="14.1" ry="38.5" fill="none" stroke="#ff1e1e" stroke-width="2.4" stroke-dasharray="5 3.5"/>
<ellipse cx="2720.9" cy="2248.5" rx="19.8" ry="11.3" fill="none" stroke="#ff1e1e" stroke-width="2.4" stroke-dasharray="5 3.5"/>
<ellipse cx="2720.9" cy="2429.6" rx="18.1" ry="10.2" fill="none" stroke="#ff1e1e" stroke-width="2.4" stroke-dasharray="5 3.5"/>
<text class="bl" x="2857.8" y="1889.5">p25.3</text>
<text class="bl" x="2857.8" y="1910">p25.1</text>
<text class="bl" x="2857.8" y="1930.4">p24</text>
<text class="bl" x="2857.8" y="1950.9">p23</text>
<text class="bl" x="2857.8" y="1971.4">p22</text>
<text class="bl" x="2857.8" y="1991.9">p21</text>
<text class="bl" x="2857.8" y="2012.4">p16</text>
<text class="bl" x="2857.8" y="2032.9">p15</text>
<text class="bl" x="2857.8" y="2053.4">p14</text>
<text class="bl" x="2857.8" y="2073.8">p13</text>
<text class="bl" x="2857.8" y="2094.3">p12</text>
<text class="bl" x="2857.8" y="2155.8">q12</text>
<text class="bl" x="2857.8" y="2176.3">q13</text>
<text class="bl" x="2857.8" y="2196.7">q14.1</text>
<text class="bl" x="2857.8" y="2217.2">q14.3</text>
<text class="bl" x="2857.8" y="2237.7">q21</text>
<text class="bl" x="2857.8" y="2258.2">q22</text>
<text class="bl" x="2857.8" y="2278.7">q23</text>
<text class="bl" x="2857.8" y="2299.2">q24.1</text>
<text class="bl" x="2857.8" y="2319.7">q24.3</text>
<text class="bl" x="2857.8" y="2340.1">q31</text>
<text class="bl" x="2857.8" y="2360.6">q32.1</text>
<text class="bl" x="2857.8" y="2381.1">q32.3</text>
<text class="bl" x="2857.8" y="2401.6">q33</text>
<text class="bl" x="2857.8" y="2422.1">q34</text>
<text class="bl" x="2857.8" y="2442.6">q35</text>
<text class="bl" x="2857.8" y="2463">q36</text>
<text class="bl" x="2857.8" y="2483.5">q37.1</text>
<text class="bl" x="2857.8" y="2504">q37.3</text>
<line x1="2898" y1="1877.9" x2="2898" y2="2510.8" stroke="#a8a8a8" stroke-width="1.4" stroke-dasharray="3.5 4"/>
<line x1="2906.5" y1="1877.9" x2="2906.5" y2="2510.8" stroke="#a8a8a8" stroke-width="1.4" stroke-dasharray="3.5 4"/>
<line x1="2920.6" y1="1877.9" x2="2920.6" y2="2510.8" stroke="#a8a8a8" stroke-width="1.4" stroke-dasharray="3.5 4"/>
<line x1="2934.8" y1="1877.9" x2="2934.8" y2="2510.8" stroke="#a8a8a8" stroke-width="1.4" stroke-dasharray="3.5 4"/>
<line x1="2943.3" y1="1877.9" x2="2943.3" y2="2510.8" stroke="#a8a8a8" stroke-width="1.4" stroke-dasharray="3.5 4"/>
<line x1="2957.4" y1="1877.9" x2="2957.4" y2="2510.8" stroke="#a8a8a8" stroke-width="1.4" stroke-dasharray="3.5 4"/>
<line x1="2971.6" y1="1877.9" x2="2971.6" y2="2510.8" stroke="#a8a8a8" stroke-width="1.4" stroke-dasharray="3.5 4"/>
<text x="2907.6" y="1863.7" font-size="13" font-weight="bold" fill="#222" text-anchor="middle">2</text>
<text x="2934.8" y="1873.9" font-size="8" font-weight="normal" fill="#aaa" text-anchor="middle">-4 -2 -1  0 +1 +2 +4</text>
<rect x="2862.3" y="1880.7" width="15.3" height="628.1" fill="#fff" stroke="#333" stroke-width="1.3"/>
<rect x="2862.9" y="1889.1" width="14.1" height="8.4" fill="#4a4a4a"/>
<rect x="2862.9" y="1911.7" width="14.1" height="16.9" fill="#4a4a4a"/>
<rect x="2862.9" y="1934.2" width="14.1" height="11.3" fill="#4a4a4a"/>
<rect x="2862.9" y="1948.3" width="14.1" height="8.4" fill="#929292"/>
<rect x="2862.9" y="1962.3" width="14.1" height="11.3" fill="#4a4a4a"/>
<rect x="2862.9" y="1976.4" width="14.1" height="11.3" fill="#929292"/>
<rect x="2862.9" y="2001.8" width="14.1" height="14.1" fill="#353535"/>
<rect x="2862.9" y="2018.7" width="14.1" height="19.7" fill="#4a4a4a"/>
<rect x="2862.9" y="2046.8" width="14.1" height="19.7" fill="#929292"/>
<rect x="2862.9" y="2069.4" width="14.1" height="5.6" fill="#4a4a4a"/>
<rect x="2862.9" y="2077.8" width="14.1" height="19.7" fill="#353535"/>
<rect x="2862.9" y="2145.4" width="14.1" height="8.5" fill="#4a4a4a"/>
<rect x="2862.9" y="2156.7" width="14.1" height="8.5" fill="#929292"/>
<rect x="2862.9" y="2173.6" width="14.1" height="14.1" fill="#4a4a4a"/>
<rect x="2862.9" y="2198.9" width="14.1" height="19.7" fill="#929292"/>
<rect x="2862.9" y="2221.5" width="14.1" height="5.6" fill="#4a4a4a"/>
<rect x="2862.9" y="2235.5" width="14.1" height="14.1" fill="#353535"/>
<rect x="2862.9" y="2255.3" width="14.1" height="8.5" fill="#4a4a4a"/>
<rect x="2862.9" y="2280.6" width="14.1" height="14.1" fill="#4a4a4a"/>
<rect x="2862.9" y="2306" width="14.1" height="16.9" fill="#4a4a4a"/>
<rect x="2862.9" y="2339.8" width="14.1" height="8.5" fill="#4a4a4a"/>
<rect x="2862.9" y="2353.9" width="14.1" height="16.9" fill="#4a4a4a"/>
<rect x="2862.9" y="2376.4" width="14.1" height="14.1" fill="#4a4a4a"/>
<rect x="2862.9" y="2407.4" width="14.1" height="8.5" fill="#929292"/>
<rect x="2862.9" y="2421.5" width="14.1" height="16.9" fill="#353535"/>
<rect x="2862.9" y="2455.3" width="14.1" height="16.9" fill="#4a4a4a"/>
<rect x="2862.9" y="2475" width="14.1" height="11.3" fill="#4a4a4a"/>
<rect x="2862.9" y="2489.1" width="14.1" height="5.6" fill="#4a4a4a"/>
<rect x="2861.3" y="2109.3" width="17.3" height="15.8" fill="#fff"/>
<rect x="2866.9" y="2109.3" width="6.1" height="15.8" fill="#555"/>
<line x1="2965.3" y1="1909" x2="2965.3" y2="2203.2" stroke="#a4c6ff" stroke-width="3.8"/>
<line x1="2900.8" y1="1881.8" x2="2900.8" y2="1897.7" stroke="#a4c6ff" stroke-width="3.8"/>
<line x1="2900.8" y1="2092.9" x2="2900.8" y2="2101.4" stroke="#a4c6ff" stroke-width="4.75"/>
<line x1="2854.4" y1="2117.2" x2="2885" y2="2117.2" stroke="#2222dd" stroke-width="3.4"/>
<line x1="2885" y1="2117.2" x2="2984" y2="2117.2" stroke="#4a50e8" stroke-width="2.5" stroke-dasharray="6 3"/>
<line x1="2885" y1="1890.9" x2="2984" y2="1890.9" stroke="#4a50e8" stroke-width="2.2" stroke-dasharray="8 4"/>
<line x1="2855.6" y1="1903.3" x2="2984" y2="1903.3" stroke="#a4c6ff" stroke-width="1.5"/>
<line x1="2885" y1="1913.5" x2="2984" y2="1913.5" stroke="#a4c6ff" stroke-width="1.3" stroke-dasharray="4 3"/>
<polyline points="2926.5,1882 2929,1885 2931,1889 2934.5,1894 2935,1898 2935,1903 2935,1907 2935,1911 2935,1915 2935,1921 2935,1926 2935,1930 2934,1935 2931.5,1940 2933,1944 2932,1949 2932.5,1954 2932.5,1958 2933,1963 2932.5,1968 2933,1974 2935,1978 2932.5,1983 2933,1988 2932,1992 2932,1996 2931.5,2001 2931.5,2006 2932.5,2012 2933,2017 2934.5,2022 2934.5,2026 2935,2031 2933.5,2035 2934.5,2040 2934.5,2044 2934.5,2048 2932,2052 2932.5,2055 2932.5,2059 2933,2063 2932,2069 2932.5,2073 2933.5,2077 2934,2082 2932.5,2086 2932.5,2089 2932.5,2095 2932.5,2099 2933.5,2104 2934.5,2107 2932.5,2112" fill="none" stroke="#181830" stroke-width="4.6"/>
<polyline points="2933.5,2125 2931.5,2130 2932,2135 2931.5,2141 2931.5,2146 2932.5,2150 2933,2155 2931.5,2161 2932.5,2166 2931.5,2171 2931.5,2174 2932.5,2179 2934,2184 2933,2188 2935,2194 2932,2199 2934.5,2203 2933.5,2209 2934,2214 2934,2220 2933,2225 2932,2229 2931.5,2235 2932,2239 2931.5,2243 2918,2247 2926.5,2251 2931,2257 2931.5,2263 2931.5,2266 2932.5,2270 2931,2275 2930.5,2280 2932.5,2284 2932,2289 2933,2292 2932,2297 2931,2301 2932,2305 2933,2310 2934,2313 2933.5,2317 2932.5,2322 2932,2327 2933.5,2333 2934,2337 2933.5,2340 2933,2345 2934,2350 2934,2354 2932.5,2358 2933,2363 2932.5,2367 2933,2372 2933.5,2376 2932.5,2379 2933,2385 2930.5,2389 2931,2393 2931.5,2397 2932.5,2401 2931,2406 2930.5,2412 2932.5,2415 2932.5,2421 2932.5,2425 2928.5,2430 2927.5,2434 2934,2440 2934,2446 2935.5,2449 2933,2454 2934,2458 2935,2462 2934,2466 2933.5,2469 2933,2475 2932.5,2478 2934,2483 2934.5,2487 2933,2491 2932,2495 2932.5,2498 2932.5,2504" fill="none" stroke="#181830" stroke-width="4.6"/>
<polyline points="2930,1882 2932.5,1892 2937.5,1898 2934.5,1907 2934.5,1913 2935,1921 2935.5,1928 2935.5,1935 2934.5,1942 2935,1949 2933.5,1958 2937,1965 2933.5,1971 2938,1978 2935,1984 2934.5,1993 2935,2002 2935,2011 2933.5,2018 2934,2026 2932.5,2032 2934.5,2040 2932.5,2048 2935.5,2057 2933,2065 2935.5,2072 2937,2078 2935,2084 2934,2093 2933.5,2103 2937,2111" fill="none" stroke="#ff2020" stroke-width="1.1" stroke-dasharray="1.5 5"/>
<polyline points="2934.5,2126 2936,2132 2933,2142 2937,2151 2937.5,2159 2938.5,2168 2935.5,2177 2937,2183 2937,2191 2935.5,2197 2938,2205 2937,2214 2937,2222 2936,2231 2938,2240 2915,2249 2934,2257 2938,2266 2936.5,2275 2937.5,2282 2933.5,2289 2934,2296 2932.5,2304 2937.5,2310 2933.5,2319 2933,2328 2935,2336 2937.5,2346 2938.5,2355 2935.5,2364 2935,2372 2934,2381 2936.5,2388 2935,2396 2934.5,2403 2936,2410 2937.5,2418 2934.5,2427 2934,2435 2936.5,2441 2934.5,2450 2937,2456 2936,2462 2933.5,2470 2937,2476 2937.5,2483 2936,2492 2934,2501" fill="none" stroke="#ff2020" stroke-width="1.1" stroke-dasharray="1.5 5"/>
<polyline points="2922,1882 2927.5,1891 2930.5,1903 2929.5,1915 2926.5,1928 2931.5,1939 2933.5,1951 2926,1959 2928.5,1972 2926.5,1983 2928.5,1993 2928,2005 2931,2016 2926.5,2028 2930.5,2038 2929,2048 2929.5,2060 2926,2070 2928,2077 2933,2087 2932.5,2098 2928,2110" fill="none" stroke="#20a020" stroke-width="1.1" stroke-dasharray="1.2 9"/>
<polyline points="2933,2131 2932.5,2141 2933,2148 2931,2156 2926.5,2166 2929,2175 2928.5,2185 2933,2194 2929.5,2207 2930,2218 2931.5,2229 2934.5,2242 2915,2250 2933,2259 2929.5,2271 2932.5,2280 2934,2288 2928.5,2297 2930,2306 2929,2315 2932.5,2327 2932.5,2335 2926,2344 2926.5,2356 2926,2364 2933,2375 2933,2384 2934.5,2392 2933.5,2404 2931,2415 2926,2425 2926,2437 2928.5,2445 2931.5,2457 2927.5,2464 2928.5,2474 2926,2483 2931.5,2491 2933,2500 2934,2508" fill="none" stroke="#20a020" stroke-width="1.1" stroke-dasharray="1.2 9"/>
<polyline points="2927.5,1882 2929.5,1886 2927.5,1890 2930.5,1893 2932,1897 2931,1900 2934.5,1905 2932.5,1910 2935.5,1914 2935,1918 2933.5,1924 2936.5,1928 2935.5,1932 2934,1935 2934,1940 2933.5,1943 2931.5,1948 2933,1953 2931,1957 2932.5,1962 2934,1966 2931.5,1970 2931.5,1973 2931,1978 2931,1983 2932.5,1988 2931.5,1992 2933.5,1997 2934.5,2000 2933.5,2003 2935,2008 2932,2012 2932,2016 2931,2020 2933.5,2024 2933.5,2029 2932.5,2034 2931.5,2039 2931.5,2044 2933,2049 2930.5,2053 2931.5,2057 2935,2061 2933.5,2065 2934,2069 2932,2074 2934,2077 2935,2083 2934.5,2086 2931,2091 2933,2095 2931,2099 2934.5,2103 2935.5,2106 2936,2111" fill="none" stroke="#1a78f0" stroke-width="3.4"/>
<polyline points="2934.5,2123 2933.5,2128 2934.5,2132 2935,2137 2932,2142 2933,2146 2935,2150 2932.5,2155 2933.5,2160 2932.5,2165 2931.5,2168 2935,2173 2934,2178 2931.5,2182 2931,2187 2930.5,2191 2930,2195 2933,2199 2931.5,2203 2932,2207 2934,2213 2932.5,2217 2934,2221 2932.5,2224 2931.5,2229 2935,2232 2932.5,2238 2934.5,2242 2927,2246 2915,2250 2931,2253 2932,2256 2934.5,2261 2933.5,2265 2935,2269 2936,2273 2935.5,2278 2932,2281 2932,2285 2934.5,2289 2933,2293 2936,2297 2933.5,2300 2933,2306 2934,2310 2934.5,2313 2932.5,2317 2934.5,2321 2931.5,2327 2931.5,2331 2930,2335 2931,2338 2931.5,2342 2933,2347 2934,2351 2934,2356 2934.5,2360 2930.5,2364 2929.5,2369 2933,2374 2934,2377 2932.5,2380 2935.5,2384 2936,2387 2932,2390 2932,2394 2933,2397 2931.5,2403 2934.5,2406 2935.5,2411 2935.5,2416 2936,2421 2934,2425 2933.5,2430 2933,2435 2934,2440 2933.5,2445 2933,2449 2935.5,2454 2934.5,2458 2932.5,2464 2934,2467 2933.5,2470 2931,2474 2933.5,2477 2933,2481 2932,2485 2933,2489 2934.5,2493 2932,2498 2935.5,2501 2932,2507" fill="none" stroke="#1a78f0" stroke-width="3.4"/>
<ellipse cx="2902" cy="1889.2" rx="19.8" ry="10.2" fill="none" stroke="#ff1e1e" stroke-width="2.4" stroke-dasharray="5 3.5"/>
<ellipse cx="2965.3" cy="1988.2" rx="13" ry="89.4" fill="none" stroke="#ff40ff" stroke-width="2.4" stroke-dasharray="5 3.5"/>
<ellipse cx="2965.3" cy="2160.8" rx="14.1" ry="38.5" fill="none" stroke="#ff1e1e" stroke-width="2.4" stroke-dasharray="5 3.5"/>
<ellipse cx="2914.4" cy="2248.5" rx="19.8" ry="11.3" fill="none" stroke="#ff1e1e" stroke-width="2.4" stroke-dasharray="5 3.5"/>
<ellipse cx="2930.3" cy="2432.4" rx="19.8" ry="11.3" fill="none" stroke="#ff1e1e" stroke-width="2.4" stroke-dasharray="5 3.5"/>
<text class="bl" x="3070" y="1889.5">p25.3</text>
<text class="bl" x="3070" y="1910">p25.1</text>
<text class="bl" x="3070" y="1930.4">p24</text>
<text class="bl" x="3070" y="1950.9">p23</text>
<text class="bl" x="3070" y="1971.4">p22</text>
<text class="bl" x="3070" y="1991.9">p21</text>
<text class="bl" x="3070" y="2012.4">p16</text>
<text class="bl" x="3070" y="2032.9">p15</text>
<text class="bl" x="3070" y="2053.4">p14</text>
<text class="bl" x="3070" y="2073.8">p13</text>
<text class="bl" x="3070" y="2094.3">p12</text>
<text class="bl" x="3070" y="2155.8">q12</text>
<text class="bl" x="3070" y="2176.3">q13</text>
<text class="bl" x="3070" y="2196.7">q14.1</text>
<text class="bl" x="3070" y="2217.2">q14.3</text>
<text class="bl" x="3070" y="2237.7">q21</text>
<text class="bl" x="3070" y="2258.2">q22</text>
<text class="bl" x="3070" y="2278.7">q23</text>
<text class="bl" x="3070" y="2299.2">q24.1</text>
<text class="bl" x="3070" y="2319.7">q24.3</text>
<text class="bl" x="3070" y="2340.1">q31</text>
<text class="bl" x="3070" y="2360.6">q32.1</text>
<text class="bl" x="3070" y="2381.1">q32.3</text>
<text class="bl" x="3070" y="2401.6">q33</text>
<text class="bl" x="3070" y="2422.1">q34</text>
<text class="bl" x="3070" y="2442.6">q35</text>
<text class="bl" x="3070" y="2463">q36</text>
<text class="bl" x="3070" y="2483.5">q37.1</text>
<text class="bl" x="3070" y="2504">q37.3</text>
<line x1="3110.2" y1="1877.9" x2="3110.2" y2="2510.8" stroke="#a8a8a8" stroke-width="1.4" stroke-dasharray="3.5 4"/>
<line x1="3118.7" y1="1877.9" x2="3118.7" y2="2510.8" stroke="#a8a8a8" stroke-width="1.4" stroke-dasharray="3.5 4"/>
<line x1="3132.8" y1="1877.9" x2="3132.8" y2="2510.8" stroke="#a8a8a8" stroke-width="1.4" stroke-dasharray="3.5 4"/>
<line x1="3147" y1="1877.9" x2="3147" y2="2510.8" stroke="#a8a8a8" stroke-width="1.4" stroke-dasharray="3.5 4"/>
<line x1="3155.5" y1="1877.9" x2="3155.5" y2="2510.8" stroke="#a8a8a8" stroke-width="1.4" stroke-dasharray="3.5 4"/>
<line x1="3169.6" y1="1877.9" x2="3169.6" y2="2510.8" stroke="#a8a8a8" stroke-width="1.4" stroke-dasharray="3.5 4"/>
<line x1="3183.8" y1="1877.9" x2="3183.8" y2="2510.8" stroke="#a8a8a8" stroke-width="1.4" stroke-dasharray="3.5 4"/>
<text x="3119.8" y="1863.7" font-size="13" font-weight="bold" fill="#222" text-anchor="middle">2</text>
<text x="3147" y="1873.9" font-size="8" font-weight="normal" fill="#aaa" text-anchor="middle">-4 -2 -1  0 +1 +2 +4</text>
<rect x="3074.5" y="1880.7" width="15.3" height="628.1" fill="#fff" stroke="#333" stroke-width="1.3"/>
<rect x="3075.1" y="1889.1" width="14.1" height="8.4" fill="#4a4a4a"/>
<rect x="3075.1" y="1911.4" width="14.1" height="16.8" fill="#4a4a4a"/>
<rect x="3075.1" y="1933.8" width="14.1" height="11.2" fill="#4a4a4a"/>
<rect x="3075.1" y="1947.8" width="14.1" height="8.4" fill="#929292"/>
<rect x="3075.1" y="1961.8" width="14.1" height="11.2" fill="#4a4a4a"/>
<rect x="3075.1" y="1975.7" width="14.1" height="11.2" fill="#929292"/>
<rect x="3075.1" y="2000.9" width="14.1" height="14" fill="#353535"/>
<rect x="3075.1" y="2017.7" width="14.1" height="19.6" fill="#4a4a4a"/>
<rect x="3075.1" y="2045.6" width="14.1" height="19.6" fill="#929292"/>
<rect x="3075.1" y="2068" width="14.1" height="5.6" fill="#4a4a4a"/>
<rect x="3075.1" y="2076.4" width="14.1" height="19.6" fill="#353535"/>
<rect x="3075.1" y="2143.8" width="14.1" height="8.5" fill="#4a4a4a"/>
<rect x="3075.1" y="2155.1" width="14.1" height="8.5" fill="#929292"/>
<rect x="3075.1" y="2172.1" width="14.1" height="14.1" fill="#4a4a4a"/>
<rect x="3075.1" y="2197.6" width="14.1" height="19.8" fill="#929292"/>
<rect x="3075.1" y="2220.2" width="14.1" height="5.7" fill="#4a4a4a"/>
<rect x="3075.1" y="2234.4" width="14.1" height="14.1" fill="#353535"/>
<rect x="3075.1" y="2254.2" width="14.1" height="8.5" fill="#4a4a4a"/>
<rect x="3075.1" y="2279.6" width="14.1" height="14.1" fill="#4a4a4a"/>
<rect x="3075.1" y="2305.1" width="14.1" height="17" fill="#4a4a4a"/>
<rect x="3075.1" y="2339" width="14.1" height="8.5" fill="#4a4a4a"/>
<rect x="3075.1" y="2353.2" width="14.1" height="17" fill="#4a4a4a"/>
<rect x="3075.1" y="2375.8" width="14.1" height="14.1" fill="#4a4a4a"/>
<rect x="3075.1" y="2406.9" width="14.1" height="8.5" fill="#929292"/>
<rect x="3075.1" y="2421.1" width="14.1" height="17" fill="#353535"/>
<rect x="3075.1" y="2455" width="14.1" height="17" fill="#4a4a4a"/>
<rect x="3075.1" y="2474.8" width="14.1" height="11.3" fill="#4a4a4a"/>
<rect x="3075.1" y="2489" width="14.1" height="5.7" fill="#4a4a4a"/>
<rect x="3073.5" y="2107.6" width="17.3" height="15.8" fill="#fff"/>
<rect x="3079.1" y="2107.6" width="6.1" height="15.8" fill="#555"/>
<line x1="3180.9" y1="1889.2" x2="3180.9" y2="2200.4" stroke="#a4c6ff" stroke-width="3.8"/>
<line x1="3111.3" y1="1883.5" x2="3111.3" y2="1892" stroke="#a4c6ff" stroke-width="3.8"/>
<line x1="3109.6" y1="2497.5" x2="3109.6" y2="2508.8" stroke="#a4c6ff" stroke-width="3.8"/>
<line x1="3066.6" y1="2115.5" x2="3097.2" y2="2115.5" stroke="#2222dd" stroke-width="3.4"/>
<line x1="3097.2" y1="2115.5" x2="3197.9" y2="2115.5" stroke="#4a50e8" stroke-width="2.5" stroke-dasharray="6 3"/>
<line x1="3097.2" y1="2120" x2="3197.9" y2="2120" stroke="#a4c6ff" stroke-width="1.3"/>
<line x1="3148.1" y1="1888" x2="3182.1" y2="1888" stroke="#a4c6ff" stroke-width="1.5"/>
<polyline points="3140.5,1882 3141.5,1887 3143,1892 3144.5,1895 3143.5,1900 3145.5,1905 3145,1910 3147.5,1915 3148.5,1920 3149.5,1925 3149,1930 3151,1935 3151,1939 3153,1943 3150,1947 3150.5,1950 3149,1955 3149,1959 3146.5,1964 3148,1969 3148,1973 3146.5,1978 3145.5,1984 3146,1987 3147,1993 3147,1997 3147,2001 3146,2005 3148,2009 3146,2013 3146.5,2016 3146.5,2020 3146,2024 3146.5,2030 3147,2034 3145,2039 3146,2043 3145.5,2048 3146,2053 3146.5,2058 3145.5,2062 3145.5,2065 3144.5,2070 3145.5,2074 3146,2080 3145,2083 3145.5,2087 3146,2092 3146,2096 3147,2100 3146.5,2104 3145.5,2109" fill="none" stroke="#181830" stroke-width="4.6"/>
<polyline points="3146.5,2122 3145,2126 3145,2132 3143.5,2135 3145.5,2139 3144,2144 3144,2147 3145,2153 3145.5,2157 3145,2160 3146,2164 3145,2167 3144,2172 3144.5,2178 3145.5,2184 3145,2187 3146.5,2192 3147,2197 3146,2202 3146,2205 3144.5,2209 3146,2214 3145.5,2218 3145.5,2224 3147.5,2229 3146.5,2233 3145,2238 3145.5,2243 3127,2247 3146,2251 3144.5,2256 3145.5,2260 3146,2263 3146,2269 3147,2274 3146,2279 3146,2283 3144.5,2287 3147,2291 3146,2296 3145,2300 3146,2305 3145,2308 3145,2312 3146,2317 3145,2321 3144.5,2327 3145.5,2331 3144.5,2335 3147,2341 3147,2344 3146.5,2349 3145.5,2355 3145,2359 3145.5,2364 3145,2368 3146,2374 3146,2378 3145,2381 3145.5,2385 3144.5,2388 3146.5,2394 3147,2399 3146.5,2402 3147.5,2407 3146,2411 3147,2415 3147,2421 3144.5,2426 3141,2431 3145.5,2435 3146,2440 3147,2445 3147,2449 3148,2454 3146,2458 3147.5,2462 3145,2467 3146,2471 3145.5,2475 3147,2478 3145.5,2483 3147,2488 3146.5,2492 3145.5,2496 3144.5,2501 3146,2506" fill="none" stroke="#181830" stroke-width="4.6"/>
<polyline points="3141.5,1882 3147.5,1891 3149,1901 3147.5,1910 3152,1919 3154,1929 3153.5,1939 3156.5,1947 3154,1956 3152.5,1966 3149.5,1974 3147.5,1981 3146.5,1988 3149,1995 3147.5,2003 3147,2010 3150,2020 3148,2027 3149,2035 3150,2046 3148.5,2056 3147,2065 3149.5,2073 3147,2079 3145,2088 3146.5,2094 3145,2104" fill="none" stroke="#ff2020" stroke-width="1.1" stroke-dasharray="1.5 5"/>
<polyline points="3147,2120 3148,2130 3149,2138 3147.5,2148 3150,2156 3150.5,2165 3147,2173 3151,2181 3148,2190 3147.5,2200 3150,2206 3150.5,2212 3149,2221 3149.5,2229 3148,2237 3147,2243 3151,2251 3148.5,2257 3149,2264 3147.5,2270 3147,2277 3149.5,2285 3149.5,2290 3147.5,2296 3146.5,2304 3149,2314 3146,2320 3145.5,2326 3148,2332 3149.5,2340 3148,2345 3148,2351 3146,2360 3145,2368 3148.5,2377 3150,2385 3146.5,2395 3150,2404 3150,2411 3148.5,2418 3148,2425 3146.5,2435 3148.5,2443 3148.5,2449 3147,2457 3146.5,2465 3148.5,2473 3148,2482 3145.5,2489 3147,2498 3149.5,2504" fill="none" stroke="#ff2020" stroke-width="1.1" stroke-dasharray="1.5 5"/>
<polyline points="3137.5,1882 3144.5,1893 3139,1902 3141.5,1910 3144.5,1918 3147,1931 3150,1943 3146.5,1954 3144,1965 3146.5,1976 3145.5,1985 3141,1998 3142,2011 3143,2020 3137.5,2029 3140.5,2041 3139.5,2049 3140,2059 3139.5,2071 3139,2081 3140,2090 3139.5,2100" fill="none" stroke="#20a020" stroke-width="1.1" stroke-dasharray="1.2 9"/>
<polyline points="3142,2122 3139,2132 3143.5,2143 3145,2154 3137.5,2162 3142,2174 3141,2181 3144,2189 3143.5,2200 3139.5,2211 3143.5,2220 3140,2232 3137.5,2241 3139,2252 3141.5,2260 3145.5,2267 3143.5,2279 3139.5,2286 3142.5,2293 3140,2303 3139,2312 3143,2324 3140.5,2336 3140,2349 3140,2362 3143.5,2374 3143,2383 3145,2395 3142,2407 3140,2415 3143.5,2428 3141.5,2440 3140.5,2449 3138.5,2461 3141,2472 3143,2481 3141,2493 3141.5,2502" fill="none" stroke="#20a020" stroke-width="1.1" stroke-dasharray="1.2 9"/>
<polyline points="3136,1882 3139,1885 3140,1889 3142,1893 3142.5,1897 3147,1900 3148,1905 3149,1910 3148.5,1913 3146.5,1917 3149,1922 3150,1927 3149.5,1931 3148.5,1934 3150.5,1938 3150.5,1942 3150,1946 3151,1949 3149,1955 3147.5,1959 3147,1963 3149,1966 3148.5,1971 3145.5,1975 3147.5,1980 3144.5,1983 3143.5,1988 3142.5,1992 3143,1996 3145.5,2000 3144,2005 3142,2009 3143,2012 3146,2017 3146,2020 3146.5,2024 3147,2027 3145.5,2032 3146,2037 3145.5,2041 3143,2045 3144.5,2050 3144,2056 3146,2060 3147,2064 3146,2068 3146,2073 3143.5,2077 3147,2083 3145,2087 3144.5,2092 3143,2097 3143.5,2102 3144,2106 3145,2111" fill="none" stroke="#1a78f0" stroke-width="3.4"/>
<polyline points="3142.5,2124 3143.5,2127 3145,2132 3146,2136 3142.5,2141 3145.5,2145 3143.5,2150 3144,2153 3146,2158 3145,2162 3144.5,2166 3143.5,2169 3148,2173 3148,2176 3147.5,2181 3144.5,2185 3146,2188 3142.5,2192 3145,2195 3145.5,2200 3145,2204 3143,2209 3143,2214 3144.5,2218 3143.5,2223 3142,2228 3144,2233 3144.5,2237 3146,2241 3135.5,2245 3135.5,2249 3143.5,2252 3142.5,2256 3146.5,2260 3143.5,2264 3142.5,2268 3142,2273 3143,2278 3145.5,2283 3143,2286 3146.5,2289 3143,2293 3146,2297 3146,2300 3143.5,2304 3147,2309 3147.5,2314 3143.5,2317 3145,2322 3146.5,2327 3144.5,2331 3145,2336 3146,2341 3142.5,2346 3141.5,2350 3146.5,2355 3146.5,2360 3144,2364 3142,2368 3144.5,2374 3146,2378 3145.5,2382 3146.5,2386 3145,2390 3143,2393 3144,2399 3146,2403 3144,2406 3145,2411 3145.5,2414 3143.5,2418 3143,2424 3145.5,2428 3132.5,2432 3143.5,2437 3146.5,2441 3146,2446 3142.5,2451 3142,2455 3144,2459 3146.5,2464 3145.5,2469 3143.5,2472 3143.5,2478 3146,2481 3146,2487 3145.5,2491 3147,2496 3145,2501 3146,2505" fill="none" stroke="#1a78f0" stroke-width="3.4"/>
<ellipse cx="3114.2" cy="1887.5" rx="19.8" ry="10.2" fill="none" stroke="#ff1e1e" stroke-width="2.4" stroke-dasharray="5 3.5"/>
<ellipse cx="3180.9" cy="1988.2" rx="13" ry="89.4" fill="none" stroke="#ff40ff" stroke-width="2.4" stroke-dasharray="5 3.5"/>
<ellipse cx="3180.9" cy="2160.8" rx="14.1" ry="38.5" fill="none" stroke="#ff1e1e" stroke-width="2.4" stroke-dasharray="5 3.5"/>
<ellipse cx="3142.5" cy="2247.4" rx="21.5" ry="11.3" fill="none" stroke="#ff1e1e" stroke-width="2.4" stroke-dasharray="5 3.5"/>
<ellipse cx="3136.8" cy="2432.4" rx="20.4" ry="11.3" fill="none" stroke="#ff1e1e" stroke-width="2.4" stroke-dasharray="5 3.5"/>
<text class="bl" x="3275.4" y="1882.7">p25.3</text>
<text class="bl" x="3275.4" y="1903.5">p25.1</text>
<text class="bl" x="3275.4" y="1924.3">p24</text>
<text class="bl" x="3275.4" y="1945.1">p23</text>
<text class="bl" x="3275.4" y="1965.9">p22</text>
<text class="bl" x="3275.4" y="1986.7">p21</text>
<text class="bl" x="3275.4" y="2007.5">p16</text>
<text class="bl" x="3275.4" y="2028.3">p15</text>
<text class="bl" x="3275.4" y="2049.1">p14</text>
<text class="bl" x="3275.4" y="2069.9">p13</text>
<text class="bl" x="3275.4" y="2090.7">p12</text>
<text class="bl" x="3275.4" y="2153.2">q12</text>
<text class="bl" x="3275.4" y="2174">q13</text>
<text class="bl" x="3275.4" y="2194.8">q14.1</text>
<text class="bl" x="3275.4" y="2215.6">q14.3</text>
<text class="bl" x="3275.4" y="2236.4">q21</text>
<text class="bl" x="3275.4" y="2257.2">q22</text>
<text class="bl" x="3275.4" y="2278">q23</text>
<text class="bl" x="3275.4" y="2298.8">q24.1</text>
<text class="bl" x="3275.4" y="2319.6">q24.3</text>
<text class="bl" x="3275.4" y="2340.4">q31</text>
<text class="bl" x="3275.4" y="2361.2">q32.1</text>
<text class="bl" x="3275.4" y="2382">q32.3</text>
<text class="bl" x="3275.4" y="2402.8">q33</text>
<text class="bl" x="3275.4" y="2423.6">q34</text>
<text class="bl" x="3275.4" y="2444.4">q35</text>
<text class="bl" x="3275.4" y="2465.2">q36</text>
<text class="bl" x="3275.4" y="2486">q37.1</text>
<text class="bl" x="3275.4" y="2506.8">q37.3</text>
<line x1="3315.6" y1="1871.1" x2="3315.6" y2="2513.6" stroke="#a8a8a8" stroke-width="1.4" stroke-dasharray="3.5 4"/>
<line x1="3324.1" y1="1871.1" x2="3324.1" y2="2513.6" stroke="#a8a8a8" stroke-width="1.4" stroke-dasharray="3.5 4"/>
<line x1="3338.2" y1="1871.1" x2="3338.2" y2="2513.6" stroke="#a8a8a8" stroke-width="1.4" stroke-dasharray="3.5 4"/>
<line x1="3352.4" y1="1871.1" x2="3352.4" y2="2513.6" stroke="#a8a8a8" stroke-width="1.4" stroke-dasharray="3.5 4"/>
<line x1="3360.9" y1="1871.1" x2="3360.9" y2="2513.6" stroke="#a8a8a8" stroke-width="1.4" stroke-dasharray="3.5 4"/>
<line x1="3375" y1="1871.1" x2="3375" y2="2513.6" stroke="#a8a8a8" stroke-width="1.4" stroke-dasharray="3.5 4"/>
<line x1="3389.2" y1="1871.1" x2="3389.2" y2="2513.6" stroke="#a8a8a8" stroke-width="1.4" stroke-dasharray="3.5 4"/>
<text x="3325.2" y="1856.9" font-size="13" font-weight="bold" fill="#222" text-anchor="middle">2</text>
<text x="3352.4" y="1867.1" font-size="8" font-weight="normal" fill="#aaa" text-anchor="middle">-4 -2 -1  0 +1 +2 +4</text>
<rect x="3280" y="1873.9" width="15.3" height="637.7" fill="#fff" stroke="#333" stroke-width="1.3"/>
<rect x="3280.6" y="1882.4" width="14.1" height="8.5" fill="#4a4a4a"/>
<rect x="3280.6" y="1905.2" width="14.1" height="17.1" fill="#4a4a4a"/>
<rect x="3280.6" y="1927.9" width="14.1" height="11.4" fill="#4a4a4a"/>
<rect x="3280.6" y="1942.1" width="14.1" height="8.5" fill="#929292"/>
<rect x="3280.6" y="1956.3" width="14.1" height="11.4" fill="#4a4a4a"/>
<rect x="3280.6" y="1970.6" width="14.1" height="11.4" fill="#929292"/>
<rect x="3280.6" y="1996.1" width="14.1" height="14.2" fill="#353535"/>
<rect x="3280.6" y="2013.2" width="14.1" height="19.9" fill="#4a4a4a"/>
<rect x="3280.6" y="2041.6" width="14.1" height="19.9" fill="#929292"/>
<rect x="3280.6" y="2064.4" width="14.1" height="5.7" fill="#4a4a4a"/>
<rect x="3280.6" y="2072.9" width="14.1" height="19.9" fill="#353535"/>
<rect x="3280.6" y="2141.4" width="14.1" height="8.6" fill="#4a4a4a"/>
<rect x="3280.6" y="2152.9" width="14.1" height="8.6" fill="#929292"/>
<rect x="3280.6" y="2170.1" width="14.1" height="14.4" fill="#4a4a4a"/>
<rect x="3280.6" y="2195.9" width="14.1" height="20.1" fill="#929292"/>
<rect x="3280.6" y="2218.9" width="14.1" height="5.7" fill="#4a4a4a"/>
<rect x="3280.6" y="2233.2" width="14.1" height="14.4" fill="#353535"/>
<rect x="3280.6" y="2253.3" width="14.1" height="8.6" fill="#4a4a4a"/>
<rect x="3280.6" y="2279.2" width="14.1" height="14.4" fill="#4a4a4a"/>
<rect x="3280.6" y="2305" width="14.1" height="17.2" fill="#4a4a4a"/>
<rect x="3280.6" y="2339.4" width="14.1" height="8.6" fill="#4a4a4a"/>
<rect x="3280.6" y="2353.8" width="14.1" height="17.2" fill="#4a4a4a"/>
<rect x="3280.6" y="2376.7" width="14.1" height="14.4" fill="#4a4a4a"/>
<rect x="3280.6" y="2408.3" width="14.1" height="8.6" fill="#929292"/>
<rect x="3280.6" y="2422.7" width="14.1" height="17.2" fill="#353535"/>
<rect x="3280.6" y="2457.1" width="14.1" height="17.2" fill="#4a4a4a"/>
<rect x="3280.6" y="2477.2" width="14.1" height="11.5" fill="#4a4a4a"/>
<rect x="3280.6" y="2491.5" width="14.1" height="5.7" fill="#4a4a4a"/>
<rect x="3279" y="2104.8" width="17.3" height="15.8" fill="#fff"/>
<rect x="3284.5" y="2104.8" width="6.1" height="15.8" fill="#555"/>
<line x1="3379" y1="2124" x2="3379" y2="2228.7" stroke="#a4c6ff" stroke-width="3.8"/>
<line x1="3315" y1="1897.7" x2="3315" y2="2107" stroke="#c8d8fc" stroke-width="1.9500000000000002"/>
<line x1="3272" y1="2112.7" x2="3302.6" y2="2112.7" stroke="#2222dd" stroke-width="3.4"/>
<line x1="3274.3" y1="2112.7" x2="3396" y2="2112.7" stroke="#2a2ae0" stroke-width="3.5"/>
<polyline points="3342,1875 3343,1879 3346,1884 3348,1887 3348.5,1893 3347,1898 3347,1904 3347,1908 3347.5,1913 3348,1917 3349.5,1922 3348,1926 3349.5,1929 3350.5,1934 3350.5,1938 3348,1942 3349,1945 3347.5,1951 3348,1957 3347.5,1961 3348,1966 3348,1971 3346.5,1977 3348,1981 3346,1985 3346.5,1989 3347.5,1995 3347,2000 3346.5,2005 3346,2008 3348,2012 3346,2017 3347,2022 3347,2027 3347.5,2031 3346.5,2036 3347.5,2041 3348,2046 3346,2050 3346.5,2053 3348,2059 3349,2062 3346.5,2066 3347.5,2070 3346.5,2075 3347.5,2080 3349,2084 3347,2089 3348,2093 3347,2097 3346.5,2102 3348.5,2107" fill="none" stroke="#181830" stroke-width="4.6"/>
<polyline points="3346,2120 3348,2123 3348,2128 3345.5,2133 3348,2137 3346.5,2140 3347,2145 3348,2149 3347,2154 3349,2159 3348,2163 3347,2169 3348,2172 3347.5,2177 3346.5,2180 3347,2186 3348,2191 3347.5,2196 3346,2201 3348.5,2204 3348,2209 3347.5,2212 3348,2218 3348,2221 3346,2225 3348.5,2229 3348.5,2234 3346.5,2239 3330.5,2244 3335.5,2248 3346,2254 3347,2258 3346,2262 3347,2267 3346.5,2272 3348,2277 3347.5,2280 3347,2285 3348.5,2290 3348.5,2295 3348.5,2299 3347,2304 3348,2308 3348,2311 3349.5,2317 3347,2322 3347.5,2328 3348.5,2333 3348,2337 3348.5,2341 3348,2345 3346.5,2348 3345.5,2352 3348,2357 3346,2361 3349,2366 3348,2372 3347.5,2375 3347.5,2381 3348,2386 3348,2391 3346.5,2395 3349,2399 3347.5,2402 3350,2407 3350,2412 3349,2416 3348.5,2420 3349,2426 3341,2430 3349,2435 3347.5,2440 3348,2446 3349,2451 3349,2457 3347.5,2462 3349.5,2465 3348,2470 3350,2474 3348,2478 3349.5,2483 3349,2488 3348,2493 3349.5,2497 3348,2501 3349,2505 3348,2510" fill="none" stroke="#181830" stroke-width="4.6"/>
<polyline points="3341,1875 3346,1884 3348,1894 3350,1901 3348,1908 3349,1914 3351.5,1922 3349.5,1932 3348.5,1938 3349.5,1945 3349,1952 3348,1962 3350.5,1967 3351.5,1973 3351,1980 3351.5,1990 3348.5,1998 3349.5,2003 3349,2010 3350.5,2018 3349.5,2024 3351.5,2034 3351.5,2041 3351,2047 3351.5,2056 3348.5,2064 3349.5,2074 3350,2079 3351,2088 3347,2093 3346.5,2102" fill="none" stroke="#ff2020" stroke-width="1.1" stroke-dasharray="1.5 5"/>
<polyline points="3348,2119 3350,2129 3347,2139 3348.5,2145 3350,2155 3350,2161 3351.5,2170 3351,2178 3349,2186 3349.5,2196 3348.5,2203 3350.5,2210 3349,2217 3350,2225 3347.5,2234 3346.5,2243 3347.5,2252 3350,2261 3350,2267 3347,2274 3350.5,2281 3351.5,2287 3349.5,2295 3350,2305 3348,2312 3348.5,2320 3350,2326 3350.5,2335 3351.5,2343 3347,2350 3348.5,2357 3350.5,2363 3351.5,2372 3351.5,2380 3349.5,2387 3347.5,2395 3350,2404 3348,2414 3351,2422 3348,2429 3349.5,2438 3348.5,2447 3351,2454 3351.5,2462 3351,2471 3351,2477 3347.5,2485 3351,2495 3351,2505" fill="none" stroke="#ff2020" stroke-width="1.1" stroke-dasharray="1.5 5"/>
<polyline points="3334,1875 3339.5,1885 3339.5,1898 3347.5,1910 3345.5,1920 3342.5,1931 3344,1942 3339,1951 3341.5,1959 3345,1971 3346,1983 3343.5,1995 3341,2007 3339.5,2015 3344,2023 3344.5,2037 3344,2047 3345,2058 3338.5,2071 3342.5,2080 3342,2089 3345.5,2097" fill="none" stroke="#20a020" stroke-width="1.1" stroke-dasharray="1.2 9"/>
<polyline points="3340.5,2119 3340,2129 3343.5,2136 3342.5,2145 3343,2154 3342.5,2162 3341.5,2171 3344.5,2184 3344.5,2192 3345,2203 3344.5,2212 3341.5,2224 3345.5,2236 3319.5,2245 3348,2253 3341,2265 3341.5,2277 3347.5,2289 3339,2301 3340.5,2309 3343.5,2319 3341.5,2331 3345,2341 3341.5,2350 3343.5,2362 3346.5,2375 3342,2385 3347.5,2397 3341.5,2407 3344,2416 3347,2425 3344,2433 3344,2442 3345,2454 3340.5,2463 3341.5,2476 3342.5,2484 3341,2496 3344,2506" fill="none" stroke="#20a020" stroke-width="1.1" stroke-dasharray="1.2 9"/>
<polyline points="3340.5,1875 3345,1880 3346.5,1884 3345.5,1890 3347,1894 3350,1898 3347.5,1901 3345.5,1904 3347.5,1909 3346.5,1914 3346,1919 3346,1922 3345,1926 3347,1930 3348.5,1936 3348,1941 3350,1946 3344.5,1951 3346.5,1956 3347.5,1959 3348,1964 3346.5,1968 3349,1972 3348,1976 3348.5,1981 3348,1984 3345.5,1989 3345.5,1992 3345.5,1997 3346.5,2000 3344,2005 3346,2009 3349.5,2013 3347.5,2017 3347.5,2022 3349.5,2025 3347.5,2030 3346.5,2034 3346,2039 3348.5,2042 3351,2046 3349.5,2050 3349.5,2054 3349.5,2059 3348,2062 3346,2067 3347.5,2071 3347.5,2074 3348.5,2078 3347,2083 3348.5,2087 3347,2091 3349,2095 3350.5,2100 3348,2105" fill="none" stroke="#1a78f0" stroke-width="3.4"/>
<polyline points="3349,2121 3346.5,2124 3346.5,2129 3347,2134 3344.5,2138 3349,2143 3348.5,2148 3345.5,2152 3346,2156 3347.5,2160 3348.5,2165 3345,2170 3343.5,2173 3348,2176 3347.5,2181 3346,2184 3344,2188 3346,2193 3346.5,2196 3345,2202 3344.5,2205 3349.5,2210 3349.5,2214 3346.5,2218 3350,2221 3349.5,2224 3348.5,2230 3351,2234 3351.5,2238 3348,2242 3329,2247 3346.5,2250 3347,2254 3347,2258 3348,2261 3346.5,2266 3345.5,2271 3344.5,2275 3346,2278 3346,2282 3348.5,2285 3348,2289 3347,2293 3348,2296 3345,2300 3345.5,2304 3347,2307 3346,2311 3346.5,2316 3344.5,2319 3348,2323 3349,2326 3349,2330 3349.5,2335 3347.5,2340 3346,2345 3349.5,2348 3348,2352 3347,2355 3349,2361 3351,2365 3347.5,2370 3348.5,2374 3350.5,2377 3348,2380 3349,2384 3347,2388 3347,2392 3347.5,2397 3350,2401 3346,2405 3348.5,2410 3346,2415 3347.5,2418 3350.5,2422 3350,2426 3336,2431 3349,2434 3347.5,2439 3346.5,2443 3349.5,2448 3347,2453 3349,2457 3349,2461 3347.5,2466 3345,2471 3346.5,2475 3346,2478 3345,2483 3349.5,2488 3347.5,2493 3346,2498 3346.5,2503 3346.5,2507 3348.5,2511" fill="none" stroke="#1a78f0" stroke-width="3.4"/>
<ellipse cx="3315" cy="1880.7" rx="19.8" ry="11.3" fill="none" stroke="#ff1e1e" stroke-width="2.4" stroke-dasharray="5 3.5"/>
<ellipse cx="3379" cy="2160.8" rx="14.1" ry="38.5" fill="none" stroke="#ff1e1e" stroke-width="2.4" stroke-dasharray="5 3.5"/>
<ellipse cx="3328.1" cy="2245.7" rx="19.8" ry="11.3" fill="none" stroke="#ff1e1e" stroke-width="2.4" stroke-dasharray="5 3.5"/>
<ellipse cx="3345" cy="2430.7" rx="20.4" ry="11.3" fill="none" stroke="#ff1e1e" stroke-width="2.4" stroke-dasharray="5 3.5"/>
<text class="bl" x="3489.9" y="1885">p25.3</text>
<text class="bl" x="3489.9" y="1905.7">p25.1</text>
<text class="bl" x="3489.9" y="1926.4">p24</text>
<text class="bl" x="3489.9" y="1947.1">p23</text>
<text class="bl" x="3489.9" y="1967.9">p22</text>
<text class="bl" x="3489.9" y="1988.6">p21</text>
<text class="bl" x="3489.9" y="2009.3">p16</text>
<text class="bl" x="3489.9" y="2030.1">p15</text>
<text class="bl" x="3489.9" y="2050.8">p14</text>
<text class="bl" x="3489.9" y="2071.5">p13</text>
<text class="bl" x="3489.9" y="2092.2">p12</text>
<text class="bl" x="3489.9" y="2154.4">q12</text>
<text class="bl" x="3489.9" y="2175.2">q13</text>
<text class="bl" x="3489.9" y="2195.9">q14.1</text>
<text class="bl" x="3489.9" y="2216.6">q14.3</text>
<text class="bl" x="3489.9" y="2237.4">q21</text>
<text class="bl" x="3489.9" y="2258.1">q22</text>
<text class="bl" x="3489.9" y="2278.8">q23</text>
<text class="bl" x="3489.9" y="2299.5">q24.1</text>
<text class="bl" x="3489.9" y="2320.3">q24.3</text>
<text class="bl" x="3489.9" y="2341">q31</text>
<text class="bl" x="3489.9" y="2361.7">q32.1</text>
<text class="bl" x="3489.9" y="2382.5">q32.3</text>
<text class="bl" x="3489.9" y="2403.2">q33</text>
<text class="bl" x="3489.9" y="2423.9">q34</text>
<text class="bl" x="3489.9" y="2444.7">q35</text>
<text class="bl" x="3489.9" y="2465.4">q36</text>
<text class="bl" x="3489.9" y="2486.1">q37.1</text>
<text class="bl" x="3489.9" y="2506.8">q37.3</text>
<line x1="3530.1" y1="1873.3" x2="3530.1" y2="2513.6" stroke="#a8a8a8" stroke-width="1.4" stroke-dasharray="3.5 4"/>
<line x1="3538.6" y1="1873.3" x2="3538.6" y2="2513.6" stroke="#a8a8a8" stroke-width="1.4" stroke-dasharray="3.5 4"/>
<line x1="3552.7" y1="1873.3" x2="3552.7" y2="2513.6" stroke="#a8a8a8" stroke-width="1.4" stroke-dasharray="3.5 4"/>
<line x1="3566.9" y1="1873.3" x2="3566.9" y2="2513.6" stroke="#a8a8a8" stroke-width="1.4" stroke-dasharray="3.5 4"/>
<line x1="3575.3" y1="1873.3" x2="3575.3" y2="2513.6" stroke="#a8a8a8" stroke-width="1.4" stroke-dasharray="3.5 4"/>
<line x1="3589.5" y1="1873.3" x2="3589.5" y2="2513.6" stroke="#a8a8a8" stroke-width="1.4" stroke-dasharray="3.5 4"/>
<line x1="3603.6" y1="1873.3" x2="3603.6" y2="2513.6" stroke="#a8a8a8" stroke-width="1.4" stroke-dasharray="3.5 4"/>
<text x="3539.7" y="1859.2" font-size="13" font-weight="bold" fill="#222" text-anchor="middle">2</text>
<text x="3566.9" y="1869.4" font-size="8" font-weight="normal" fill="#aaa" text-anchor="middle">-4 -2 -1  0 +1 +2 +4</text>
<rect x="3494.4" y="1876.2" width="15.3" height="635.5" fill="#fff" stroke="#333" stroke-width="1.3"/>
<rect x="3495" y="1884.8" width="14.1" height="8.6" fill="#4a4a4a"/>
<rect x="3495" y="1907.7" width="14.1" height="17.2" fill="#4a4a4a"/>
<rect x="3495" y="1930.7" width="14.1" height="11.5" fill="#4a4a4a"/>
<rect x="3495" y="1945" width="14.1" height="8.6" fill="#929292"/>
<rect x="3495" y="1959.4" width="14.1" height="11.5" fill="#4a4a4a"/>
<rect x="3495" y="1973.7" width="14.1" height="11.5" fill="#929292"/>
<rect x="3495" y="1999.6" width="14.1" height="14.3" fill="#353535"/>
<rect x="3495" y="2016.8" width="14.1" height="20.1" fill="#4a4a4a"/>
<rect x="3495" y="2045.5" width="14.1" height="20.1" fill="#929292"/>
<rect x="3495" y="2068.4" width="14.1" height="5.7" fill="#4a4a4a"/>
<rect x="3495" y="2077" width="14.1" height="20.1" fill="#353535"/>
<rect x="3495" y="2145.6" width="14.1" height="8.5" fill="#4a4a4a"/>
<rect x="3495" y="2156.9" width="14.1" height="8.5" fill="#929292"/>
<rect x="3495" y="2174" width="14.1" height="14.2" fill="#4a4a4a"/>
<rect x="3495" y="2199.5" width="14.1" height="19.9" fill="#929292"/>
<rect x="3495" y="2222.2" width="14.1" height="5.7" fill="#4a4a4a"/>
<rect x="3495" y="2236.4" width="14.1" height="14.2" fill="#353535"/>
<rect x="3495" y="2256.3" width="14.1" height="8.5" fill="#4a4a4a"/>
<rect x="3495" y="2281.8" width="14.1" height="14.2" fill="#4a4a4a"/>
<rect x="3495" y="2307.3" width="14.1" height="17" fill="#4a4a4a"/>
<rect x="3495" y="2341.4" width="14.1" height="8.5" fill="#4a4a4a"/>
<rect x="3495" y="2355.6" width="14.1" height="17" fill="#4a4a4a"/>
<rect x="3495" y="2378.3" width="14.1" height="14.2" fill="#4a4a4a"/>
<rect x="3495" y="2409.5" width="14.1" height="8.5" fill="#929292"/>
<rect x="3495" y="2423.7" width="14.1" height="17" fill="#353535"/>
<rect x="3495" y="2457.7" width="14.1" height="17" fill="#4a4a4a"/>
<rect x="3495" y="2477.6" width="14.1" height="11.3" fill="#4a4a4a"/>
<rect x="3495" y="2491.8" width="14.1" height="5.7" fill="#4a4a4a"/>
<rect x="3493.4" y="2109.3" width="17.3" height="15.8" fill="#fff"/>
<rect x="3499" y="2109.3" width="6.1" height="15.8" fill="#555"/>
<line x1="3596.3" y1="1886.3" x2="3596.3" y2="2508.8" stroke="#5a70f0" stroke-width="2.6"/>
<line x1="3600.8" y1="1886.3" x2="3600.8" y2="2508.8" stroke="#a4c6ff" stroke-width="2.8499999999999996"/>
<line x1="3566.9" y1="2118.4" x2="3566.9" y2="2508.8" stroke="#8090f8" stroke-width="3.25"/>
<line x1="3486.5" y1="2117.2" x2="3517.1" y2="2117.2" stroke="#2222dd" stroke-width="3.4"/>
<line x1="3489.9" y1="2117.2" x2="3616.1" y2="2117.2" stroke="#3a40e8" stroke-width="2.5" stroke-dasharray="7 2"/>
<line x1="3528.4" y1="1978.6" x2="3568" y2="1978.6" stroke="#a4c6ff" stroke-width="2"/>
<polyline points="3564,1877 3566,1883 3568,1888 3568,1892 3568.5,1896 3569,1902 3568.5,1907 3568,1911 3568.5,1917 3568.5,1921 3568.5,1925 3568.5,1930 3568,1935 3568.5,1941 3568.5,1945 3567.5,1950 3567.5,1955 3569.5,1959 3568.5,1964 3568,1969 3569,1972 3548,1978 3570,1981 3570.5,1985 3569.5,1990 3570.5,1994 3571,1998 3570,2002 3570.5,2007 3568.5,2012 3568.5,2017 3568.5,2023 3570,2027 3570,2031 3571,2035 3569,2040 3569,2044 3568.5,2049 3568.5,2054 3569.5,2057 3570,2061 3570,2066 3571,2071 3570.5,2075 3569.5,2079 3570,2082 3569.5,2088 3572.5,2091 3576.5,2095 3572.5,2101 3568,2104 3569,2108 3570.5,2111" fill="none" stroke="#181830" stroke-width="4.6"/>
<polyline points="3570,2126 3572,2131 3572.5,2135 3572.5,2138 3572.5,2141 3571.5,2146 3571,2150 3569,2154 3570,2159 3568.5,2164 3569.5,2168 3570,2173 3569,2177 3571,2181 3570,2185 3569,2189 3569,2193 3569,2199 3569.5,2202 3569.5,2207 3569.5,2212 3571.5,2216 3570.5,2220 3568.5,2225 3569,2228 3568.5,2232 3568.5,2237 3568,2242 3569.5,2246 3542,2249 3568.5,2255 3569.5,2259 3569,2262 3569.5,2266 3571.5,2271 3570,2276 3571.5,2279 3570,2284 3571.5,2288 3569.5,2292 3571.5,2298 3571,2301 3570.5,2305 3570,2309 3570.5,2313 3570,2318 3570,2324 3568,2329 3569,2333 3568.5,2338 3570.5,2342 3571.5,2346 3571.5,2349 3571,2355 3569.5,2360 3571,2365 3571.5,2370 3570,2375 3571.5,2380 3572,2385 3571.5,2391 3572,2396 3571.5,2401 3570,2405 3571,2409 3572,2414 3570,2419 3569.5,2423 3568.5,2427 3555,2433 3569.5,2438 3571.5,2443 3571,2448 3568.5,2451 3569.5,2456 3570.5,2461 3570.5,2466 3570.5,2472 3570,2475 3570,2479 3570,2483 3570,2486 3569.5,2492 3569,2496 3570,2500 3568,2506 3570,2510" fill="none" stroke="#181830" stroke-width="4.6"/>
<polyline points="3566,1877 3570.5,1883 3573.5,1893 3570.5,1903 3572,1910 3570,1921 3570.5,1929 3573.5,1937 3572.5,1944 3573,1951 3571.5,1961 3573,1970 3572,1976 3574.5,1983 3571,1991 3570.5,1999 3572.5,2004 3571,2011 3571.5,2020 3573.5,2028 3572,2035 3575.5,2041 3574,2049 3574,2059 3573.5,2065 3572,2071 3573,2080 3574.5,2088 3579.5,2097 3570.5,2105 3570.5,2111" fill="none" stroke="#ff2020" stroke-width="1.1" stroke-dasharray="1.5 5"/>
<polyline points="3572,2128 3572,2135 3575,2143 3572,2150 3571,2160 3572,2166 3571,2171 3572.5,2180 3575,2187 3571.5,2196 3574,2203 3571,2213 3574.5,2219 3571,2224 3571,2230 3576,2237 3560.5,2247 3573,2254 3573,2263 3570.5,2270 3571.5,2278 3571,2288 3575,2295 3572,2304 3572.5,2314 3574,2323 3572,2330 3573.5,2339 3571.5,2347 3571,2357 3574,2365 3571.5,2375 3572.5,2383 3572,2393 3573,2402 3573.5,2408 3571.5,2416 3573.5,2425 3556,2432 3571.5,2439 3572.5,2448 3573,2457 3573,2467 3571.5,2473 3572,2482 3574.5,2489 3573.5,2499 3573.5,2508" fill="none" stroke="#ff2020" stroke-width="1.1" stroke-dasharray="1.5 5"/>
<polyline points="3563.5,1877 3564,1889 3563,1898 3563.5,1910 3562,1918 3565,1930 3566.5,1939 3568.5,1952 3563,1962 3564,1974 3565.5,1987 3563.5,1997 3563,2006 3568,2016 3566,2025 3567.5,2035 3567.5,2042 3564,2051 3568,2060 3566,2070 3568,2078 3564.5,2086 3574,2094 3569,2105" fill="none" stroke="#20a020" stroke-width="1.1" stroke-dasharray="1.2 9"/>
<polyline points="3565,2127 3565,2140 3567.5,2150 3564.5,2163 3562.5,2171 3566,2179 3567.5,2189 3563,2196 3563.5,2208 3566,2219 3565,2227 3569,2240 3534.5,2249 3563.5,2261 3564,2272 3568,2284 3563,2294 3566,2305 3562.5,2318 3568,2325 3564.5,2338 3567,2347 3566,2356 3570.5,2368 3569,2380 3564,2389 3564.5,2401 3567,2413 3566,2421 3551,2431 3566,2443 3564.5,2454 3569.5,2465 3564.5,2477 3568.5,2484 3567.5,2497 3562.5,2505" fill="none" stroke="#20a020" stroke-width="1.1" stroke-dasharray="1.2 9"/>
<polyline points="3564,1877 3566,1882 3566.5,1885 3568,1889 3568,1892 3567.5,1897 3570.5,1900 3569,1903 3567,1908 3570.5,1912 3568.5,1917 3569.5,1921 3570,1926 3569,1929 3572,1934 3572,1938 3570,1943 3568,1948 3569.5,1951 3569.5,1954 3570.5,1957 3572,1962 3573.5,1965 3570.5,1970 3572,1973 3570,1976 3571,1981 3568,1987 3570.5,1990 3568.5,1993 3567,1997 3567.5,2002 3570.5,2005 3569,2008 3570.5,2014 3568,2017 3571.5,2021 3567.5,2025 3569.5,2029 3568,2035 3567.5,2038 3569,2043 3570,2048 3568.5,2052 3569.5,2058 3567,2062 3567.5,2067 3570,2071 3572,2076 3571.5,2079 3567,2083 3568.5,2087 3571.5,2091 3578,2094 3573.5,2099 3571.5,2103 3569.5,2108 3569.5,2112" fill="none" stroke="#1a1ae0" stroke-width="3.4"/>
<polyline points="3567,2124 3569.5,2127 3571,2133 3572.5,2138 3571.5,2142 3569,2146 3567.5,2151 3570,2156 3570,2161 3571.5,2164 3571.5,2167 3568,2171 3568.5,2174 3570,2178 3570.5,2183 3568.5,2186 3571.5,2191 3571,2196 3571,2200 3568.5,2204 3568,2209 3570.5,2212 3570,2216 3569,2221 3567.5,2227 3570,2232 3569,2235 3569,2241 3569,2244 3532,2249 3567.5,2253 3568,2256 3570,2262 3567,2267 3569.5,2271 3566.5,2276 3569.5,2281 3569.5,2285 3565.5,2289 3567,2293 3569.5,2296 3568,2300 3571,2305 3570.5,2309 3567,2315 3567.5,2320 3569,2325 3566.5,2329 3567.5,2334 3570.5,2337 3570.5,2341 3572.5,2346 3572,2350 3570.5,2354 3571.5,2357 3570,2363 3568.5,2368 3570.5,2371 3568.5,2375 3572.5,2379 3573,2384 3569.5,2389 3572.5,2393 3571,2398 3570,2401 3567,2406 3570.5,2412 3571,2416 3569,2419 3567.5,2422 3567,2428 3555.5,2432 3567,2436 3571,2442 3572,2446 3569,2450 3570.5,2455 3570.5,2458 3572,2462 3569.5,2468 3571.5,2473 3568.5,2476 3568,2480 3569.5,2485 3570,2489 3569.5,2494 3572.5,2498 3570,2502 3573.5,2506 3572,2510" fill="none" stroke="#1a1ae0" stroke-width="3.4"/>
<ellipse cx="3549.9" cy="1882.4" rx="18.7" ry="11.3" fill="none" stroke="#ff1e1e" stroke-width="2.4" stroke-dasharray="5 3.5"/>
<ellipse cx="3598" cy="1993.9" rx="13" ry="89.4" fill="none" stroke="#ff40ff" stroke-width="2.4" stroke-dasharray="5 3.5"/>
<ellipse cx="3599.7" cy="2160.8" rx="14.1" ry="38.5" fill="none" stroke="#ff1e1e" stroke-width="2.4" stroke-dasharray="5 3.5"/>
<ellipse cx="3552.7" cy="2248.5" rx="21.5" ry="11.3" fill="none" stroke="#ff1e1e" stroke-width="2.4" stroke-dasharray="5 3.5"/>
<ellipse cx="3549.9" cy="2432.4" rx="18.7" ry="11.3" fill="none" stroke="#ff1e1e" stroke-width="2.4" stroke-dasharray="5 3.5"/>
<text x="1389.8" y="2593.6" font-size="24" font-weight="bold" fill="#f4f4f4" text-anchor="start" textLength="42" lengthAdjust="spacingAndGlyphs">Sc1</text>
<text x="1389.8" y="2743.5" font-size="24" font-weight="bold" fill="#f4f4f4" text-anchor="start" textLength="42" lengthAdjust="spacingAndGlyphs">Sc2</text>
<text x="2590.7" y="2602" font-size="24" font-weight="bold" fill="#f4f4f4" text-anchor="start" textLength="42" lengthAdjust="spacingAndGlyphs">Sc1</text>
<text x="2592" y="2753.1" font-size="24" font-weight="bold" fill="#f4f4f4" text-anchor="start" textLength="42" lengthAdjust="spacingAndGlyphs">Sc2</text>
<circle cx="1900" cy="2873.7" r="6.5" fill="#ffff00"/>
<text x="1913" y="2881" font-size="19" font-weight="bold" fill="#d8d8d8" text-anchor="start">1</text>
<circle cx="3108.5" cy="2877.6" r="6" fill="#00ffff"/>
<text x="3121" y="2885" font-size="19" font-weight="bold" fill="#d8d8d8" text-anchor="start">2</text>
<rect x="3138" y="2871.5" width="11.5" height="12" fill="#00ffff"/>
<rect x="1406.4" y="2696.7" width="3" height="3" fill="#999"/>
<rect x="1583" y="2696.7" width="3" height="3" fill="#999"/>
<rect x="1633" y="2699.8" width="177.5" height="2.6" fill="#888"/>
<rect x="1864.8" y="2699.6" width="3" height="3" fill="#999"/>
<rect x="2010.7" y="2699.6" width="3" height="3" fill="#999"/>
<rect x="2212.8" y="2699.6" width="3" height="3" fill="#999"/>
<rect x="2254" y="2700.9" width="198" height="2.6" fill="#888"/>
<rect x="1407.5" y="2835.4" width="3" height="3" fill="#999"/>
<rect x="1635.5" y="2838.4" width="177" height="2.6" fill="#aaa"/>
<rect x="1861.5" y="2838.4" width="151.5" height="2.6" fill="#aaa"/>
<rect x="2212.8" y="2835.4" width="3" height="3" fill="#999"/>
<rect x="2250.7" y="2835.4" width="3" height="3" fill="#999"/>
<rect x="2452.1" y="2835.4" width="3" height="3" fill="#999"/>
<rect x="2791.2" y="2696.7" width="3" height="3" fill="#999"/>
<rect x="3056.5" y="2699.8" width="158.5" height="2.6" fill="#666"/>
<rect x="3284" y="2699.8" width="158.5" height="2.6" fill="#aaa"/>
<rect x="3479" y="2699.8" width="158.5" height="2.6" fill="#aaa"/>
<rect x="2611.9" y="2835.4" width="3" height="3" fill="#999"/>
<rect x="2774.3" y="2835.4" width="3" height="3" fill="#999"/>
<rect x="3054.5" y="2841.2" width="160" height="2.6" fill="#666"/>
<rect x="3286.5" y="2841.2" width="158.5" height="2.6" fill="#aaa"/>
<rect x="3482" y="2841.2" width="158.5" height="2.6" fill="#aaa"/>
<g stroke-linecap="round" filter="url(#lump2)">
<path d="M1434.5 2623V2663" class="Y" stroke-width="19"/>
<path d="M1453 2644V2670.5" class="Y" stroke-width="15.5"/>
<path d="M1471.5 2654.5V2657" class="N" stroke-width="14.5"/>
<path d="M1464 2656V2654.5Q1464 2647.5 1471.5 2647.5H1471.5Q1478.5 2647.5 1478.5 2654.5V2656Z" fill="#ff0"/>
<path d="M1488.5 2658V2658" class="Y" stroke-width="15.5"/>
<path d="M1481 2654.5V2654.5Q1481 2650 1488.5 2650H1488.5Q1495.5 2650 1495.5 2654.5V2654.5Z" fill="#f00"/>
<path d="M1511 2623V2680" class="D" stroke-width="19"/>
<path d="M1501.5 2641.5V2623Q1501.5 2613.5 1511 2613.5H1511Q1520.5 2613.5 1520.5 2623V2641.5Z" fill="#ff0"/>
<path d="M1501.5 2653V2680Q1501.5 2690 1511 2690H1511Q1520.5 2690 1520.5 2680V2653Z" fill="#ff0"/>
<path d="M1501.5 2677.5V2680Q1501.5 2690 1511 2690H1511Q1520.5 2690 1520.5 2680V2677.5Z" fill="#f00"/>
<path d="M1538 2642V2657" class="Y" stroke-width="18"/>
<path d="M1529 2656V2657Q1529 2666 1538 2666H1538Q1547 2666 1547 2657V2656Z" fill="#ff80c0"/>
<path d="M1530 2661.5V2661.5Q1530 2666 1538 2666H1538Q1546 2666 1546 2661.5V2661.5Z" fill="#b4b4ff"/>
<path d="M1563.5 2651.5V2666" class="L" stroke-width="19"/>
<path d="M1659.5 2635V2682.5" class="Y" stroke-width="20.5"/>
<path d="M1685 2663V2682.5" class="Y" stroke-width="20.5"/>
<circle cx="1706.7" cy="2661.5" r="6.8" fill="#ff0"/>
<path d="M1734.5 2609.5V2682.5" class="D" stroke-width="20.5"/>
<path d="M1724 2636V2609.5Q1724 2599 1734.5 2599H1734.5Q1744.5 2599 1744.5 2609.5V2636Z" fill="#ff0"/>
<path d="M1724 2647.5V2682.5Q1724 2692.5 1734.5 2692.5H1734.5Q1744.5 2692.5 1744.5 2682.5V2647.5Z" fill="#ff0"/>
<path d="M1724 2673V2682.5Q1724 2692.5 1734.5 2692.5H1734.5Q1744.5 2692.5 1744.5 2682.5V2673Z" fill="#f00"/>
<path d="M1761.5 2630.5V2652" class="Y" stroke-width="19"/>
<path d="M1752 2647.5V2652Q1752 2661.5 1761.5 2661.5H1761.5Q1771 2661.5 1771 2652V2647.5Z" fill="#ff80c0"/>
<path d="M1753 2656V2656Q1753 2661.5 1761.5 2661.5H1761.5Q1770.5 2661.5 1770.5 2656V2656Z" fill="#b4b4ff"/>
<path d="M1894.5 2647.5V2667" class="Y" stroke-width="29"/>
<path d="M1920 2663V2671" class="Y" stroke-width="20.5"/>
<path d="M1942.5 2658V2670.5" class="Y" stroke-width="21.5"/>
<path d="M1972 2636V2678.5" class="D" stroke-width="23"/>
<path d="M1960.5 2656V2636Q1960.5 2624.5 1972 2624.5H1972Q1983.5 2624.5 1983.5 2636V2656Z" fill="#ff0"/>
<path d="M1960.5 2664.5V2678.5Q1960.5 2690 1972 2690H1972Q1983.5 2690 1983.5 2678.5V2664.5Z" fill="#ff0"/>
<path d="M1960.5 2677.5V2678.5Q1960.5 2690 1972 2690H1972Q1983.5 2690 1983.5 2678.5V2677.5Z" fill="#10a858"/>
<path d="M1961.5 2683V2683Q1961.5 2690 1972 2690H1972Q1982.5 2690 1982.5 2683V2683Z" fill="#f00"/>
<path d="M2067 2588V2657.5" class="Y" stroke-width="17"/>
<path d="M2087 2622V2657.5" class="Y" stroke-width="17"/>
<circle cx="2110.7" cy="2632" r="7.9" fill="#ff0"/>
<circle cx="2118.1" cy="2636" r="3.4" fill="#f0f"/>
<rect x="2144.7" y="2576.6" width="14.7" height="56.6" rx="6.6" fill="#ff0" transform="rotate(25 2152 2604.9)"/>
<rect x="2135" y="2624.7" width="14.7" height="45.3" rx="6.6" fill="#ff0" transform="rotate(-10 2142.4 2647.3)"/>
<rect x="2146.4" y="2661.5" width="14.7" height="28.3" rx="6.6" fill="#ff0" transform="rotate(-35 2153.7 2675.6)"/>
<circle cx="2157.7" cy="2684.1" r="7.9" fill="#f00"/>
<circle cx="2137.9" cy="2627.5" r="5.7" fill="#10a858"/>
<path d="M2170.5 2612.5V2644" class="Y" stroke-width="18"/>
<path d="M2161.5 2636V2644Q2161.5 2653 2170.5 2653H2170.5Q2179.5 2653 2179.5 2644V2636Z" fill="#b4b4ff"/>
<path d="M2273.5 2660.5V2685.5" class="Y" stroke-width="18"/>
<path d="M2292.5 2662V2669.5" class="Y" stroke-width="12"/>
<path d="M2317.5 2636V2680" class="G" stroke-width="19"/>
<path d="M2307.5 2661.5V2680Q2307.5 2690 2317.5 2690H2317.5Q2327 2690 2327 2680V2661.5Z" fill="#ff0"/>
<path d="M2340.5 2645V2649.5" class="M" stroke-width="18"/>
<path d="M2365.5 2637.5V2665" class="Y" stroke-width="18"/>
<path d="M2356.5 2639V2637.5Q2356.5 2628.5 2365.5 2628.5H2365.5Q2374.5 2628.5 2374.5 2637.5V2639Z" fill="#f0f"/>
<path d="M2388.5 2645V2681" class="Y" stroke-width="18"/>
<path d="M2379.5 2644.5V2644.5Q2379.5 2636 2388.5 2636H2388.5Q2397.5 2636 2397.5 2644.5V2644.5Z" fill="#ff0080"/>
<path d="M2379.5 2673V2681Q2379.5 2690 2388.5 2690H2388.5Q2397.5 2690 2397.5 2681V2673Z" fill="#f00"/>
<path d="M2414 2641.5V2670" class="N" stroke-width="17"/>
<path d="M2405.5 2656V2641.5Q2405.5 2633 2414 2633H2414Q2422.5 2633 2422.5 2641.5V2656Z" fill="#0078f8"/>
<path d="M2405.5 2664.5V2670Q2405.5 2678.5 2414 2678.5H2414Q2422.5 2678.5 2422.5 2670V2664.5Z" fill="#ff0"/>
<path d="M2436 2637.5V2643" class="Y" stroke-width="14.5"/>
<path d="M2429 2641.5V2643Q2429 2650 2436 2650H2436Q2443.5 2650 2443.5 2643V2641.5Z" fill="#b4b4ff"/>
<path d="M1431.5 2791V2821.5" class="Y" stroke-width="19"/>
<path d="M1450.5 2805V2823.5" class="Y" stroke-width="15.5"/>
<path d="M1469 2806V2811" class="Y" stroke-width="12"/>
<path d="M1484.5 2805V2807.5" class="Y" stroke-width="13"/>
<path d="M1504 2769.5V2825" class="Y" stroke-width="18"/>
<path d="M1495 2797.5V2769.5Q1495 2760.5 1504 2760.5H1504Q1513 2760.5 1513 2769.5V2797.5Z" fill="#10a858"/>
<path d="M1495 2786V2769.5Q1495 2760.5 1504 2760.5H1504Q1513 2760.5 1513 2769.5V2786Z" fill="#ff0"/>
<path d="M1495 2811.5V2825Q1495 2834 1504 2834H1504Q1513 2834 1513 2825V2811.5Z" fill="#10a858"/>
<path d="M1495 2820V2825Q1495 2834 1504 2834H1504Q1513 2834 1513 2825V2820Z" fill="#f00"/>
<path d="M1529.5 2780V2794.5" class="Y" stroke-width="17"/>
<path d="M1521 2791.5V2794.5Q1521 2803 1529.5 2803H1529.5Q1538 2803 1538 2794.5V2791.5Z" fill="#ff80c0"/>
<path d="M1521.5 2797.5V2797.5Q1521.5 2803 1529.5 2803H1529.5Q1537.5 2803 1537.5 2797.5V2797.5Z" fill="#b4b4ff"/>
<path d="M1552 2785.5V2798" class="L" stroke-width="15.5"/>
<path d="M1667 2762V2825" class="Y" stroke-width="18"/>
<path d="M1658 2800V2825Q1658 2834 1667 2834H1667Q1676 2834 1676 2825V2800Z" fill="#0ff"/>
<path d="M1691 2796V2822" class="Y" stroke-width="20.5"/>
<circle cx="1713.5" cy="2797.3" r="7.4" fill="#ff0"/>
<path d="M1740.5 2775V2813.5" class="C" stroke-width="18"/>
<path d="M1731.5 2791.5V2775Q1731.5 2766 1740.5 2766H1740.5Q1749.5 2766 1749.5 2775V2791.5Z" fill="#ff0"/>
<path d="M1770 2744.5V2823.5" class="Y" stroke-width="21.5"/>
<path d="M1759.5 2781.5V2744.5Q1759.5 2734 1770 2734H1770Q1781 2734 1781 2744.5V2781.5Z" fill="#10a858"/>
<path d="M1759.5 2772V2744.5Q1759.5 2734 1770 2734H1770Q1781 2734 1781 2744.5V2772Z" fill="#ff0"/>
<path d="M1759.5 2811.5V2823.5Q1759.5 2834 1770 2834H1770Q1781 2834 1781 2823.5V2811.5Z" fill="#f00"/>
<path d="M1801 2762.5V2790.5" class="Y" stroke-width="19"/>
<path d="M1791.5 2783V2790.5Q1791.5 2800 1801 2800H1801Q1811 2800 1811 2790.5V2783Z" fill="#ff80c0"/>
<path d="M1791.5 2787V2790.5Q1791.5 2800 1801 2800H1801Q1811 2800 1811 2790.5V2787Z" fill="#b4b4ff"/>
<path d="M1889 2787V2824.5" class="Y" stroke-width="19"/>
<path d="M1910.5 2806.5V2825" class="Y" stroke-width="18"/>
<path d="M1932.5 2806.5V2819.5" class="Y" stroke-width="18"/>
<path d="M1957 2774.5V2815.5" class="D" stroke-width="20.5"/>
<path d="M1946.5 2791.5V2774.5Q1946.5 2764.5 1957 2764.5H1957Q1967 2764.5 1967 2774.5V2791.5Z" fill="#ff0"/>
<path d="M1946.5 2800V2815.5Q1946.5 2825.5 1957 2825.5H1957Q1967 2825.5 1967 2815.5V2800Z" fill="#ff0"/>
<path d="M1946.5 2814.5V2815.5Q1946.5 2825.5 1957 2825.5H1957Q1967 2825.5 1967 2815.5V2814.5Z" fill="#f00"/>
<path d="M2063 2775.5V2821.5" class="Y" stroke-width="21.5"/>
<path d="M2090 2797.5V2809.5" class="Y" stroke-width="20.5"/>
<circle cx="2089.8" cy="2797.3" r="4.5" fill="#0ff"/>
<circle cx="2113.5" cy="2798.4" r="9.1" fill="#ff0"/>
<circle cx="2116.4" cy="2801.8" r="3.4" fill="#f0f"/>
<path d="M2144.5 2752.5V2823.5" class="Y" stroke-width="21.5"/>
<path d="M2134 2787V2752.5Q2134 2742 2144.5 2742H2144.5Q2155.5 2742 2155.5 2752.5V2787Z" fill="#10a858"/>
<path d="M2134 2777.5V2752.5Q2134 2742 2144.5 2742H2144.5Q2155.5 2742 2155.5 2752.5V2777.5Z" fill="#ff0"/>
<path d="M2134 2814.5V2823.5Q2134 2834 2144.5 2834H2144.5Q2155.5 2834 2155.5 2823.5V2814.5Z" fill="#f00"/>
<path d="M2177.5 2767.5V2786.5" class="Y" stroke-width="19"/>
<path d="M2168 2780.5V2786.5Q2168 2796 2177.5 2796H2177.5Q2187 2796 2187 2786.5V2780.5Z" fill="#b4b4ff"/>
<path d="M2276.5 2803V2818" class="Y" stroke-width="20.5"/>
<circle cx="2302" cy="2801.2" r="7.4" fill="#ff0"/>
<path d="M2327.5 2772.5V2812.5" class="G" stroke-width="20.5"/>
<path d="M2317 2794.5V2812.5Q2317 2822.5 2327.5 2822.5H2327.5Q2337.5 2822.5 2337.5 2812.5V2794.5Z" fill="#ff0"/>
<path d="M2355.5 2778.5V2809" class="Y" stroke-width="19"/>
<path d="M2346 2807.5V2809Q2346 2819 2355.5 2819H2355.5Q2365.5 2819 2365.5 2809V2807.5Z" fill="#f0f"/>
<path d="M2385.5 2787.5V2818" class="Y" stroke-width="20.5"/>
<path d="M2375.5 2786V2786Q2375.5 2777.5 2385.5 2777.5H2385.5Q2396 2777.5 2396 2786V2786Z" fill="#f0f"/>
<path d="M2375.5 2808.5V2818Q2375.5 2828.5 2385.5 2828.5H2385.5Q2396 2828.5 2396 2818V2808.5Z" fill="#10a858"/>
<path d="M2375.5 2814.5V2818Q2375.5 2828.5 2385.5 2828.5H2385.5Q2396 2828.5 2396 2818V2814.5Z" fill="#f00"/>
<circle cx="2414" cy="2788.8" r="8.5" fill="#ff0"/>
<path d="M2436.5 2786.5V2793.5" class="Y" stroke-width="21.5"/>
<path d="M2426 2790.5V2793.5Q2426 2804 2436.5 2804H2436.5Q2447.5 2804 2447.5 2793.5V2790.5Z" fill="#b4b4ff"/>
<path d="M2643.5 2649.5V2686" class="C" stroke-width="19"/>
<path d="M2668.5 2636.5V2685" class="C" stroke-width="20.5"/>
<path d="M2658 2641.5V2636.5Q2658 2626.5 2668.5 2626.5H2668.5Q2678.5 2626.5 2678.5 2636.5V2641.5Z" fill="#f00"/>
<path d="M2688.5 2672.5V2686" class="C" stroke-width="17"/>
<path d="M2706.5 2659V2666.5" class="C" stroke-width="18"/>
<circle cx="2723.7" cy="2678.4" r="4.5" fill="#0ff"/>
<path d="M2746.5 2657V2683" class="H" stroke-width="19"/>
<path d="M2736.5 2670V2657Q2736.5 2647.5 2746.5 2647.5H2746.5Q2756 2647.5 2756 2657V2670Z" fill="#0ff"/>
<path d="M2868 2647.5V2687" class="C" stroke-width="23"/>
<path d="M2900.5 2668V2684.5" class="C" stroke-width="24"/>
<path d="M2933 2671V2687.5" class="C" stroke-width="21.5"/>
<path d="M2965.5 2657V2686" class="H" stroke-width="19"/>
<path d="M2955.5 2670V2657Q2955.5 2647.5 2965.5 2647.5H2965.5Q2975 2647.5 2975 2657V2670Z" fill="#0ff"/>
<rect x="3087" y="2646.5" width="14.7" height="51.4" rx="6.6" fill="#0ff" transform="rotate(23.6 3094.4 2672.2)"/>
<rect x="3087" y="2646.5" width="14.7" height="51.4" rx="6.6" fill="#0ff" transform="rotate(-23.6 3094.4 2672.2)"/>
<rect x="3117" y="2651.2" width="11.3" height="43.1" rx="5.1" fill="#0ff" transform="rotate(21.4 3122.6 2672.8)"/>
<rect x="3117" y="2651.2" width="11.3" height="43.1" rx="5.1" fill="#0ff" transform="rotate(-21.4 3122.6 2672.8)"/>
<path d="M3155 2635.5V2682" class="C" stroke-width="21.5"/>
<path d="M3144 2647.5V2635.5Q3144 2624.5 3155 2624.5H3155Q3165.5 2624.5 3165.5 2635.5V2647.5Z" fill="#ff80c0"/>
<path d="M3144 2641.5V2635.5Q3144 2624.5 3155 2624.5H3155Q3165.5 2624.5 3165.5 2635.5V2641.5Z" fill="#c000ff"/>
<circle cx="3173.6" cy="2666" r="4" fill="#0ff"/>
<path d="M3194.5 2657.5V2679.5" class="H" stroke-width="20.5"/>
<path d="M3184.5 2664.5V2657.5Q3184.5 2647.5 3194.5 2647.5H3194.5Q3204.5 2647.5 3204.5 2657.5V2664.5Z" fill="#0ff"/>
<rect x="3301.5" y="2610.5" width="15.8" height="50.9" rx="7.1" fill="#0ff" transform="rotate(-8 3309.4 2636)"/>
<rect x="3301.5" y="2647.3" width="15.8" height="50.9" rx="7.1" fill="#0ff" transform="rotate(8 3309.4 2672.8)"/>
<rect x="3330.9" y="2621.9" width="17" height="50.9" rx="7.6" fill="#0ff" transform="rotate(20 3339.4 2647.3)"/>
<rect x="3338.8" y="2655.8" width="17" height="45.3" rx="7.6" fill="#0ff" transform="rotate(-20 3347.3 2678.4)"/>
<circle cx="3346.2" cy="2620.7" r="6.8" fill="#0078f8"/>
<rect x="3343.9" y="2614.5" width="18.1" height="35.1" rx="8.1" fill="#9a4242" transform="rotate(15 3353 2632)"/>
<path d="M3373 2649.5V2688.5" class="C" stroke-width="19"/>
<path d="M3394.5 2646V2654.5" class="C" stroke-width="14.5"/>
<path d="M3416 2650.5V2678" class="H" stroke-width="18"/>
<path d="M3407 2658.5V2650.5Q3407 2641.5 3416 2641.5H3416Q3425 2641.5 3425 2650.5V2658.5Z" fill="#0ff"/>
<path d="M3520.5 2641.5V2677.5" class="C" stroke-width="19"/>
<path d="M3541.5 2641V2686.5" class="C" stroke-width="18"/>
<path d="M3561 2669.5V2683.5" class="C" stroke-width="18"/>
<path d="M3589.5 2654.5V2681" class="C" stroke-width="18"/>
<path d="M3580.5 2668.5V2681Q3580.5 2690 3589.5 2690H3589.5Q3598.5 2690 3598.5 2681V2668.5Z" fill="#ff0080"/>
<path d="M2643.5 2798.5V2822.5" class="C" stroke-width="23"/>
<path d="M2667 2815V2827" class="C" stroke-width="18"/>
<path d="M2687 2812V2825" class="C" stroke-width="18"/>
<path d="M2709.5 2803.5V2805.5" class="C" stroke-width="18"/>
<circle cx="2726.5" cy="2814.3" r="5.1" fill="#0ff"/>
<path d="M2748 2801.5V2819.5" class="H" stroke-width="18"/>
<path d="M2739 2809.5V2801.5Q2739 2792.5 2748 2792.5H2748Q2757 2792.5 2757 2801.5V2809.5Z" fill="#0ff"/>
<path d="M2855 2775V2828" class="C" stroke-width="18"/>
<path d="M2877.5 2791V2827.5" class="Y" stroke-width="19"/>
<path d="M2868 2809.5V2827.5Q2868 2837 2877.5 2837H2877.5Q2887 2837 2887 2827.5V2809.5Z" fill="#0ff"/>
<path d="M2902 2812V2825.5" class="C" stroke-width="20.5"/>
<circle cx="2924.6" cy="2796.1" r="7.4" fill="#0ff"/>
<circle cx="2939.9" cy="2796.1" r="4" fill="#9a4242"/>
<path d="M2958.5 2766.5V2824" class="Y" stroke-width="20.5"/>
<path d="M2948.5 2786V2766.5Q2948.5 2756.5 2958.5 2756.5H2958.5Q2968.5 2756.5 2968.5 2766.5V2786Z" fill="#0ff"/>
<path d="M2985 2784V2827.5" class="H" stroke-width="17"/>
<path d="M2976.5 2806V2784Q2976.5 2776 2985 2776H2985Q2993.5 2776 2993.5 2784V2806Z" fill="#0ff"/>
<path d="M3088.5 2797V2831.5" class="C" stroke-width="17"/>
<path d="M3111.5 2798V2829" class="C" stroke-width="21.5"/>
<path d="M3138.5 2774.5V2829.5" class="C" stroke-width="20.5"/>
<path d="M3128.5 2783V2774.5Q3128.5 2764.5 3138.5 2764.5H3138.5Q3148.5 2764.5 3148.5 2774.5V2783Z" fill="#ff0"/>
<path d="M3128.5 2777.5V2774.5Q3128.5 2764.5 3138.5 2764.5H3138.5Q3148.5 2764.5 3148.5 2774.5V2777.5Z" fill="#c000ff"/>
<circle cx="3154.9" cy="2811.4" r="4.5" fill="#0ff"/>
<path d="M3176.5 2800V2824.5" class="H" stroke-width="19"/>
<path d="M3167 2809.5V2800Q3167 2790.5 3176.5 2790.5H3176.5Q3186 2790.5 3186 2800V2809.5Z" fill="#0ff"/>
<path d="M3313.5 2783V2828.5" class="C" stroke-width="23"/>
<path d="M3340.5 2789V2828.5" class="C" stroke-width="23"/>
<path d="M3367.5 2802V2828" class="C" stroke-width="20.5"/>
<circle cx="3388.6" cy="2811.4" r="6.2" fill="#0ff"/>
<path d="M3414 2796V2822" class="H" stroke-width="20.5"/>
<path d="M3404 2806V2796Q3404 2786 3414 2786H3414Q3424.5 2786 3424.5 2796V2806Z" fill="#0ff"/>
<path d="M3504.5 2782V2825.5" class="C" stroke-width="20.5"/>
<path d="M3530 2788.5V2827" class="C" stroke-width="21.5"/>
<path d="M3558.5 2803.5V2817" class="C" stroke-width="26.5"/>
<circle cx="3582.7" cy="2802.9" r="6.8" fill="#0ff"/>
<path d="M3607.5 2790.5V2820" class="C" stroke-width="23"/>
<path d="M3596 2806V2820Q3596 2831 3607.5 2831H3607.5Q3619 2831 3619 2820V2806Z" fill="#ff0080"/>
</g>
</svg>
</body></html>
